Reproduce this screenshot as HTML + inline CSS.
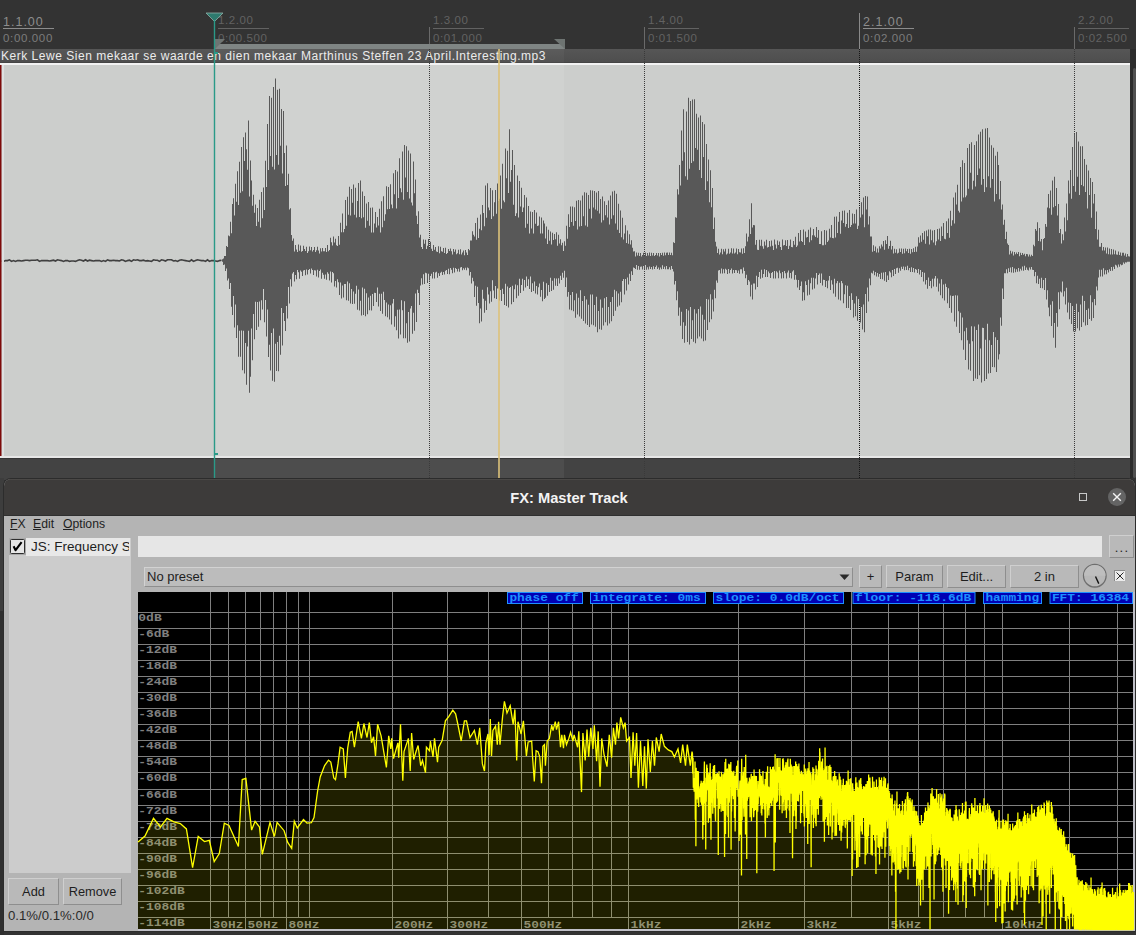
<!DOCTYPE html>
<html><head><meta charset="utf-8">
<style>
*{margin:0;padding:0;box-sizing:border-box}
html,body{width:1136px;height:935px;overflow:hidden;background:#333333;font-family:"Liberation Sans",sans-serif}
.a{position:absolute}
.rl{position:absolute;color:#8c8c8c;font-size:12.5px;line-height:13px;white-space:nowrap;letter-spacing:1px}
.rl.t{font-size:11.5px;color:#7c7c7c;letter-spacing:0.65px}
.rl2{position:absolute;color:#626262;font-size:11.5px;line-height:12px;white-space:nowrap;letter-spacing:0.6px}
.btn{position:absolute;background:#b9b9b9;border:1px solid;border-color:#cfcfcf #8e8e8e #8e8e8e #cfcfcf;color:#1e1e1e;font-size:13px;text-align:center;line-height:21px}
.mono{font-family:"Liberation Mono",monospace;font-weight:bold;letter-spacing:1.2px;text-indent:1px}
</style></head><body>
<!-- ruler -->
<div class="a" style="left:0;top:0;width:1136px;height:49px;background:#333333"></div>
<!-- ruler ticks -->
<div class="a" style="left:429px;top:27px;width:1px;height:22px;background:#6a6a6a"></div>
<div class="a" style="left:644px;top:27px;width:1px;height:22px;background:#6a6a6a"></div>
<div class="a" style="left:859px;top:13px;width:1px;height:36px;background:#8a8a8a"></div>
<div class="a" style="left:1074px;top:27px;width:1px;height:22px;background:#6a6a6a"></div>
<!-- ruler labels -->
<div class="rl" style="left:3px;top:16px">1.1.00</div>
<div class="a" style="left:3px;top:28px;width:51px;height:1px;background:#8c8c8c"></div>
<div class="rl t" style="left:3px;top:32px">0:00.000</div>
<div class="rl2" style="left:218px;top:14px">1.2.00</div>
<div class="a" style="left:218px;top:28px;width:51px;height:1px;background:#626262"></div>
<div class="rl2" style="left:218px;top:32px">0:00.500</div>
<div class="rl2" style="left:433px;top:14px">1.3.00</div>
<div class="a" style="left:433px;top:28px;width:51px;height:1px;background:#626262"></div>
<div class="rl2" style="left:433px;top:32px">0:01.000</div>
<div class="rl2" style="left:648px;top:14px">1.4.00</div>
<div class="a" style="left:648px;top:28px;width:51px;height:1px;background:#626262"></div>
<div class="rl2" style="left:648px;top:32px">0:01.500</div>
<div class="rl" style="left:863px;top:16px">2.1.00</div>
<div class="a" style="left:863px;top:28px;width:51px;height:1px;background:#8c8c8c"></div>
<div class="rl t" style="left:863px;top:32px">0:02.000</div>
<div class="rl2" style="left:1078px;top:14px">2.2.00</div>
<div class="a" style="left:1078px;top:28px;width:51px;height:1px;background:#626262"></div>
<div class="rl2" style="left:1078px;top:32px">0:02.500</div>

<!-- loop bar -->
<div class="a" style="left:214px;top:44px;width:351px;height:5px;background:#7f8584"></div>
<svg class="a" style="left:0;top:0" width="1136" height="60">
<polygon points="215,39 225,39 215,49" fill="#6e7472"/>
<polygon points="554,39 565,39 565,49" fill="#6e7472"/>
<polygon points="206,13 223,13 214.5,21.5" fill="#2e7a6e" stroke="#8fb0a8" stroke-width="0.8"/>
</svg>

<!-- item header -->
<div class="a" style="left:0;top:49px;width:1130px;height:14px;background:linear-gradient(#565656,#4e4e4e);border-bottom:1px solid #454545"></div>
<div class="a" style="left:214px;top:49px;width:350px;height:14px;background:linear-gradient(#5c5c5c,#535353);border-bottom:1px solid #4a4a4a"></div>
<div class="a" style="left:1px;top:49px;font-size:12px;line-height:15px;color:#ececec;white-space:nowrap;letter-spacing:0.52px">Kerk Lewe Sien mekaar se waarde en dien mekaar Marthinus Steffen 23 April.Interesting.mp3</div>
<div class="a" style="left:0;top:63px;width:1130px;height:2px;background:#f2f2f2"></div>
<!-- item body -->
<div class="a" style="left:0;top:65px;width:1130px;height:391px;background:#cccecc"></div>
<div class="a" style="left:214px;top:65px;width:350px;height:391px;background:#d0d2d0"></div>
<div class="a" style="left:0;top:456px;width:1130px;height:2px;background:#e6e6e6"></div>
<!-- band -->
<div class="a" style="left:0;top:458px;width:1130px;height:22px;background:#434343;border-top:1px solid #363636"></div>
<div class="a" style="left:214px;top:459px;width:350px;height:19px;background:#4d4d4d"></div>
<!-- right strip -->
<div class="a" style="left:1130px;top:49px;width:6px;height:429px;background:#2c2c2c"></div>
<div class="a" style="left:1133px;top:68px;width:3px;height:410px;background:#505050;border-radius:2px"></div>

<svg class="a" style="left:0;top:0" width="1136" height="480">
<line x1="429.5" y1="49" x2="429.5" y2="478" stroke="#3a3a3a" stroke-width="1" stroke-dasharray="1,1"/>
<line x1="644.5" y1="49" x2="644.5" y2="478" stroke="#3a3a3a" stroke-width="1" stroke-dasharray="1,1"/>
<line x1="859.5" y1="49" x2="859.5" y2="478" stroke="#151515" stroke-width="1" stroke-dasharray="1,1"/>
<line x1="1074.5" y1="49" x2="1074.5" y2="478" stroke="#3a3a3a" stroke-width="1" stroke-dasharray="1,1"/>
<path d="M222 259.3h1V261.8h-1ZM223 258.5h1V265.1h-1ZM224 255.9h1V264.4h-1ZM225 256.1h1V270.9h-1ZM226 246.1h1V268.6h-1ZM227 247.1h1V280.5h-1ZM228 235.6h1V278.6h-1ZM229 236.3h1V289.1h-1ZM230 221.7h1V282.9h-1ZM231 233.2h1V306.8h-1ZM232 204.1h1V315.0h-1ZM233 198.2h1V295.9h-1ZM234 215.6h1V327.4h-1ZM235 183.7h1V304.4h-1ZM236 201.8h1V338.0h-1ZM237 171.3h1V325.2h-1ZM238 204.9h1V356.7h-1ZM239 161.8h1V330.7h-1ZM240 192.7h1V356.7h-1ZM241 147.1h1V330.5h-1ZM242 191.3h1V370.2h-1ZM243 137.3h1V330.8h-1ZM244 160.9h1V373.6h-1ZM245 132.5h1V343.0h-1ZM246 149.2h1V384.8h-1ZM247 169.7h1V346.5h-1ZM248 120.4h1V330.8h-1ZM249 196.6h1V392.8h-1ZM250 160.6h1V376.8h-1ZM251 180.6h1V328.5h-1ZM252 205.8h1V360.2h-1ZM253 194.7h1V314.0h-1ZM254 212.8h1V339.2h-1ZM255 204.4h1V301.7h-1ZM256 225.9h1V330.1h-1ZM257 208.1h1V301.9h-1ZM258 221.7h1V326.7h-1ZM259 199.8h1V301.5h-1ZM260 227.5h1V320.2h-1ZM261 192.1h1V300.3h-1ZM262 218.2h1V309.5h-1ZM263 187.6h1V289.0h-1ZM264 210.0h1V322.3h-1ZM265 160.7h1V299.9h-1ZM266 187.1h1V336.6h-1ZM267 124.1h1V309.5h-1ZM268 170.0h1V356.9h-1ZM269 96.1h1V344.7h-1ZM270 156.0h1V370.6h-1ZM271 97.8h1V332.9h-1ZM272 166.8h1V380.8h-1ZM273 87.0h1V328.6h-1ZM274 169.5h1V381.8h-1ZM275 78.6h1V343.7h-1ZM276 155.0h1V371.1h-1ZM277 89.8h1V342.0h-1ZM278 164.8h1V371.2h-1ZM279 88.8h1V335.7h-1ZM280 145.8h1V354.7h-1ZM281 109.1h1V308.1h-1ZM282 173.6h1V345.6h-1ZM283 111.1h1V312.9h-1ZM284 153.0h1V321.1h-1ZM285 186.1h1V331.1h-1ZM286 145.6h1V305.9h-1ZM287 184.9h1V318.5h-1ZM288 173.8h1V287.0h-1ZM289 209.6h1V303.5h-1ZM290 208.2h1V279.2h-1ZM291 235.1h1V286.6h-1ZM292 240.8h1V273.5h-1ZM293 238.5h1V271.9h-1ZM294 251.6h1V281.4h-1ZM295 245.1h1V275.0h-1ZM296 249.4h1V279.2h-1ZM297 251.9h1V270.0h-1ZM298 244.6h1V272.3h-1ZM299 250.7h1V278.8h-1ZM300 245.6h1V270.4h-1ZM301 251.7h1V271.7h-1ZM302 251.0h1V275.9h-1ZM303 245.7h1V270.4h-1ZM304 249.1h1V270.0h-1ZM305 250.9h1V275.2h-1ZM306 246.7h1V269.4h-1ZM307 253.1h1V274.6h-1ZM308 251.3h1V269.9h-1ZM309 246.6h1V269.1h-1ZM310 250.2h1V273.4h-1ZM311 247.0h1V268.6h-1ZM312 251.5h1V270.0h-1ZM313 250.1h1V274.9h-1ZM314 247.0h1V270.2h-1ZM315 252.0h1V270.5h-1ZM316 250.3h1V276.4h-1ZM317 246.8h1V269.8h-1ZM318 250.5h1V277.4h-1ZM319 253.6h1V271.1h-1ZM320 248.3h1V269.5h-1ZM321 251.4h1V278.7h-1ZM322 247.9h1V272.8h-1ZM323 251.3h1V274.7h-1ZM324 251.2h1V278.8h-1ZM325 248.0h1V274.5h-1ZM326 251.9h1V279.7h-1ZM327 245.1h1V272.2h-1ZM328 251.2h1V273.7h-1ZM329 250.0h1V280.4h-1ZM330 237.8h1V271.4h-1ZM331 242.2h1V282.6h-1ZM332 245.6h1V271.9h-1ZM333 236.5h1V273.3h-1ZM334 242.4h1V286.6h-1ZM335 238.7h1V281.1h-1ZM336 245.2h1V287.6h-1ZM337 246.0h1V279.3h-1ZM338 236.0h1V282.2h-1ZM339 244.7h1V295.0h-1ZM340 222.8h1V282.6h-1ZM341 232.2h1V298.6h-1ZM342 213.5h1V285.4h-1ZM343 232.3h1V297.6h-1ZM344 229.1h1V283.9h-1ZM345 199.9h1V284.0h-1ZM346 225.8h1V300.3h-1ZM347 196.8h1V281.5h-1ZM348 214.8h1V300.8h-1ZM349 186.8h1V283.3h-1ZM350 215.6h1V303.4h-1ZM351 189.1h1V288.9h-1ZM352 202.8h1V303.9h-1ZM353 184.5h1V291.4h-1ZM354 214.8h1V303.7h-1ZM355 187.8h1V293.8h-1ZM356 217.6h1V285.7h-1ZM357 201.1h1V309.7h-1ZM358 183.1h1V289.6h-1ZM359 217.0h1V310.5h-1ZM360 180.6h1V300.7h-1ZM361 218.3h1V315.5h-1ZM362 191.4h1V287.6h-1ZM363 217.2h1V314.9h-1ZM364 196.0h1V288.7h-1ZM365 227.7h1V316.2h-1ZM366 203.5h1V293.2h-1ZM367 220.8h1V314.3h-1ZM368 201.9h1V297.6h-1ZM369 225.7h1V310.3h-1ZM370 207.7h1V295.8h-1ZM371 232.6h1V310.4h-1ZM372 207.5h1V293.9h-1ZM373 232.6h1V305.9h-1ZM374 223.6h1V292.8h-1ZM375 211.9h1V292.9h-1ZM376 227.5h1V301.9h-1ZM377 216.9h1V287.5h-1ZM378 225.6h1V306.5h-1ZM379 208.8h1V293.7h-1ZM380 232.5h1V311.0h-1ZM381 201.3h1V293.7h-1ZM382 227.2h1V313.8h-1ZM383 196.3h1V291.7h-1ZM384 220.8h1V300.0h-1ZM385 214.2h1V316.3h-1ZM386 186.2h1V302.6h-1ZM387 209.3h1V317.2h-1ZM388 187.1h1V304.4h-1ZM389 209.1h1V319.6h-1ZM390 184.3h1V305.2h-1ZM391 204.5h1V324.5h-1ZM392 208.2h1V303.4h-1ZM393 173.2h1V299.1h-1ZM394 194.3h1V326.7h-1ZM395 170.0h1V316.2h-1ZM396 208.4h1V330.3h-1ZM397 171.6h1V309.7h-1ZM398 197.9h1V338.4h-1ZM399 158.2h1V309.5h-1ZM400 188.2h1V334.4h-1ZM401 192.3h1V300.2h-1ZM402 151.5h1V310.2h-1ZM403 199.8h1V338.3h-1ZM404 145.1h1V301.2h-1ZM405 177.4h1V338.2h-1ZM406 146.2h1V323.3h-1ZM407 192.1h1V342.7h-1ZM408 150.6h1V311.9h-1ZM409 198.4h1V341.4h-1ZM410 153.4h1V308.5h-1ZM411 202.4h1V305.9h-1ZM412 205.6h1V333.7h-1ZM413 161.4h1V312.7h-1ZM414 193.3h1V330.8h-1ZM415 179.5h1V293.6h-1ZM416 215.7h1V321.9h-1ZM417 224.0h1V289.8h-1ZM418 211.3h1V293.0h-1ZM419 237.5h1V305.0h-1ZM420 234.8h1V285.5h-1ZM421 247.0h1V278.3h-1ZM422 249.1h1V284.5h-1ZM423 239.6h1V274.3h-1ZM424 243.8h1V283.9h-1ZM425 239.8h1V272.7h-1ZM426 248.9h1V273.3h-1ZM427 245.8h1V283.1h-1ZM428 239.1h1V273.7h-1ZM429 248.0h1V280.6h-1ZM430 241.8h1V276.0h-1ZM431 248.8h1V273.7h-1ZM432 250.9h1V278.6h-1ZM433 245.1h1V271.9h-1ZM434 249.7h1V278.5h-1ZM435 247.1h1V272.6h-1ZM436 251.5h1V271.8h-1ZM437 251.9h1V277.8h-1ZM438 246.3h1V273.2h-1ZM439 253.2h1V275.9h-1ZM440 246.8h1V272.7h-1ZM441 251.3h1V271.7h-1ZM442 251.8h1V275.0h-1ZM443 247.9h1V272.0h-1ZM444 252.9h1V274.6h-1ZM445 247.7h1V270.7h-1ZM446 253.9h1V269.9h-1ZM447 252.9h1V274.1h-1ZM448 249.0h1V268.7h-1ZM449 251.1h1V274.2h-1ZM450 248.6h1V268.1h-1ZM451 251.3h1V269.7h-1ZM452 254.5h1V273.2h-1ZM453 249.1h1V267.8h-1ZM454 251.7h1V272.4h-1ZM455 249.4h1V268.0h-1ZM456 254.2h1V269.1h-1ZM457 253.3h1V271.6h-1ZM458 249.8h1V268.8h-1ZM459 254.3h1V271.8h-1ZM460 249.3h1V267.5h-1ZM461 254.5h1V267.1h-1ZM462 252.4h1V270.3h-1ZM463 250.5h1V268.3h-1ZM464 255.2h1V269.8h-1ZM465 250.0h1V267.7h-1ZM466 252.6h1V270.2h-1ZM467 255.0h1V267.5h-1ZM468 249.1h1V268.2h-1ZM469 250.3h1V275.6h-1ZM470 240.6h1V272.1h-1ZM471 240.5h1V283.6h-1ZM472 231.3h1V277.8h-1ZM473 234.8h1V281.2h-1ZM474 236.4h1V297.1h-1ZM475 222.9h1V285.8h-1ZM476 239.7h1V305.8h-1ZM477 217.7h1V286.8h-1ZM478 238.0h1V303.1h-1ZM479 228.7h1V323.3h-1ZM480 214.5h1V308.5h-1ZM481 230.2h1V321.6h-1ZM482 205.0h1V289.8h-1ZM483 213.1h1V298.8h-1ZM484 226.3h1V312.7h-1ZM485 185.5h1V300.8h-1ZM486 217.8h1V310.0h-1ZM487 183.2h1V287.3h-1ZM488 207.6h1V294.6h-1ZM489 210.3h1V303.6h-1ZM490 187.9h1V291.2h-1ZM491 218.9h1V301.7h-1ZM492 190.3h1V280.2h-1ZM493 216.2h1V290.6h-1ZM494 202.3h1V298.2h-1ZM495 190.0h1V285.9h-1ZM496 213.7h1V298.9h-1ZM497 183.4h1V288.5h-1ZM498 201.0h1V288.6h-1ZM499 198.7h1V300.4h-1ZM500 175.6h1V290.1h-1ZM501 208.8h1V301.0h-1ZM502 163.7h1V288.8h-1ZM503 200.4h1V294.1h-1ZM504 202.3h1V304.9h-1ZM505 148.4h1V283.8h-1ZM506 178.3h1V305.9h-1ZM507 150.7h1V286.6h-1ZM508 192.9h1V307.4h-1ZM509 129.3h1V288.1h-1ZM510 181.8h1V286.9h-1ZM511 170.1h1V304.2h-1ZM512 149.9h1V285.7h-1ZM513 204.8h1V301.9h-1ZM514 165.1h1V289.2h-1ZM515 216.1h1V284.5h-1ZM516 213.2h1V298.3h-1ZM517 175.4h1V285.2h-1ZM518 217.4h1V295.8h-1ZM519 180.9h1V278.8h-1ZM520 206.6h1V293.1h-1ZM521 187.7h1V285.0h-1ZM522 212.1h1V278.8h-1ZM523 207.4h1V290.7h-1ZM524 195.0h1V280.0h-1ZM525 227.7h1V287.5h-1ZM526 197.4h1V276.4h-1ZM527 223.7h1V285.9h-1ZM528 206.0h1V279.3h-1ZM529 233.5h1V289.1h-1ZM530 211.6h1V276.5h-1ZM531 228.6h1V291.9h-1ZM532 212.1h1V283.2h-1ZM533 233.4h1V290.9h-1ZM534 210.1h1V281.5h-1ZM535 223.8h1V293.6h-1ZM536 212.5h1V286.0h-1ZM537 226.1h1V294.6h-1ZM538 225.5h1V287.3h-1ZM539 216.5h1V283.5h-1ZM540 233.6h1V296.8h-1ZM541 217.5h1V290.1h-1ZM542 233.6h1V301.3h-1ZM543 220.5h1V281.7h-1ZM544 223.5h1V299.1h-1ZM545 238.5h1V297.8h-1ZM546 226.5h1V283.3h-1ZM547 243.9h1V295.8h-1ZM548 229.8h1V285.0h-1ZM549 240.7h1V292.1h-1ZM550 231.5h1V277.7h-1ZM551 244.6h1V290.9h-1ZM552 232.8h1V280.8h-1ZM553 240.1h1V289.8h-1ZM554 234.0h1V278.3h-1ZM555 239.2h1V285.8h-1ZM556 232.3h1V278.6h-1ZM557 245.8h1V286.0h-1ZM558 234.7h1V278.3h-1ZM559 243.6h1V283.6h-1ZM560 239.3h1V275.7h-1ZM561 245.2h1V279.9h-1ZM562 242.7h1V272.8h-1ZM563 250.9h1V277.8h-1ZM564 241.2h1V270.8h-1ZM565 245.8h1V287.1h-1ZM566 225.7h1V277.6h-1ZM567 238.8h1V296.8h-1ZM568 214.2h1V292.0h-1ZM569 226.9h1V309.5h-1ZM570 206.5h1V294.9h-1ZM571 222.0h1V310.2h-1ZM572 206.4h1V292.1h-1ZM573 225.7h1V311.3h-1ZM574 207.2h1V300.2h-1ZM575 221.0h1V317.8h-1ZM576 200.8h1V293.4h-1ZM577 229.6h1V314.4h-1ZM578 199.9h1V297.7h-1ZM579 226.5h1V316.5h-1ZM580 200.4h1V290.3h-1ZM581 226.1h1V318.8h-1ZM582 195.6h1V301.0h-1ZM583 216.2h1V321.0h-1ZM584 192.3h1V295.9h-1ZM585 225.5h1V323.4h-1ZM586 192.7h1V299.5h-1ZM587 226.7h1V324.9h-1ZM588 195.1h1V304.7h-1ZM589 208.8h1V326.9h-1ZM590 190.2h1V294.5h-1ZM591 218.4h1V324.6h-1ZM592 190.4h1V294.6h-1ZM593 207.5h1V325.2h-1ZM594 191.0h1V304.9h-1ZM595 209.5h1V326.7h-1ZM596 192.6h1V296.7h-1ZM597 210.7h1V332.3h-1ZM598 191.1h1V310.9h-1ZM599 213.4h1V329.2h-1ZM600 199.0h1V299.6h-1ZM601 222.5h1V329.7h-1ZM602 196.4h1V307.7h-1ZM603 220.3h1V325.6h-1ZM604 201.2h1V298.2h-1ZM605 215.2h1V322.3h-1ZM606 205.0h1V297.1h-1ZM607 217.4h1V325.6h-1ZM608 200.5h1V306.9h-1ZM609 224.6h1V323.5h-1ZM610 195.4h1V301.9h-1ZM611 218.8h1V321.3h-1ZM612 191.6h1V296.9h-1ZM613 215.3h1V316.1h-1ZM614 190.8h1V289.8h-1ZM615 223.5h1V310.8h-1ZM616 193.8h1V291.3h-1ZM617 229.7h1V306.8h-1ZM618 203.7h1V293.4h-1ZM619 233.1h1V305.4h-1ZM620 210.6h1V291.8h-1ZM621 237.2h1V302.2h-1ZM622 217.8h1V280.9h-1ZM623 239.6h1V279.0h-1ZM624 233.4h1V294.6h-1ZM625 225.3h1V279.0h-1ZM626 243.0h1V290.6h-1ZM627 230.4h1V277.4h-1ZM628 243.8h1V284.4h-1ZM629 234.2h1V273.7h-1ZM630 244.4h1V281.0h-1ZM631 240.2h1V271.3h-1ZM632 247.8h1V275.1h-1ZM633 251.5h1V267.6h-1ZM634 251.3h1V268.0h-1ZM635 256.6h1V269.1h-1ZM636 252.4h1V265.0h-1ZM637 255.5h1V269.7h-1ZM638 252.8h1V265.9h-1ZM639 256.0h1V269.8h-1ZM640 253.1h1V266.8h-1ZM641 256.4h1V266.6h-1ZM642 254.9h1V269.6h-1ZM643 252.7h1V265.9h-1ZM644 255.7h1V269.8h-1ZM645 252.5h1V265.1h-1ZM646 256.0h1V269.8h-1ZM647 252.9h1V267.2h-1ZM648 255.6h1V269.4h-1ZM649 252.6h1V266.6h-1ZM650 255.9h1V269.0h-1ZM651 252.7h1V266.9h-1ZM652 255.6h1V269.6h-1ZM653 253.1h1V266.2h-1ZM654 256.1h1V269.1h-1ZM655 255.1h1V267.1h-1ZM656 253.1h1V265.6h-1ZM657 255.5h1V269.0h-1ZM658 253.1h1V267.5h-1ZM659 256.4h1V269.8h-1ZM660 252.9h1V267.5h-1ZM661 255.0h1V269.3h-1ZM662 252.7h1V265.3h-1ZM663 255.8h1V268.9h-1ZM664 252.6h1V266.7h-1ZM665 255.2h1V269.3h-1ZM666 252.7h1V266.0h-1ZM667 252.5h1V269.3h-1ZM668 255.0h1V269.3h-1ZM669 252.6h1V267.2h-1ZM670 255.1h1V269.7h-1ZM671 252.7h1V266.1h-1ZM672 255.2h1V269.0h-1ZM673 242.2h1V271.6h-1ZM674 243.0h1V284.5h-1ZM675 217.2h1V280.9h-1ZM676 217.8h1V300.3h-1ZM677 189.2h1V291.3h-1ZM678 194.4h1V315.8h-1ZM679 164.9h1V307.5h-1ZM680 185.5h1V325.7h-1ZM681 130.4h1V311.7h-1ZM682 160.8h1V339.0h-1ZM683 109.2h1V322.3h-1ZM684 152.3h1V342.7h-1ZM685 176.2h1V325.8h-1ZM686 111.6h1V308.9h-1ZM687 179.7h1V342.1h-1ZM688 97.7h1V310.4h-1ZM689 168.8h1V344.5h-1ZM690 100.9h1V306.9h-1ZM691 162.9h1V339.1h-1ZM692 99.5h1V320.2h-1ZM693 161.3h1V341.7h-1ZM694 99.3h1V309.3h-1ZM695 148.1h1V343.3h-1ZM696 113.7h1V313.4h-1ZM697 149.7h1V338.6h-1ZM698 117.6h1V309.1h-1ZM699 169.9h1V336.6h-1ZM700 115.4h1V306.6h-1ZM701 178.0h1V338.6h-1ZM702 121.9h1V314.7h-1ZM703 157.1h1V341.2h-1ZM704 124.3h1V319.7h-1ZM705 190.0h1V340.4h-1ZM706 144.1h1V298.9h-1ZM707 181.3h1V330.0h-1ZM708 159.5h1V299.5h-1ZM709 202.2h1V322.3h-1ZM710 170.3h1V294.2h-1ZM711 207.2h1V319.3h-1ZM712 188.0h1V299.6h-1ZM713 229.1h1V311.4h-1ZM714 217.4h1V289.7h-1ZM715 241.7h1V298.2h-1ZM716 246.5h1V280.5h-1ZM717 252.9h1V282.7h-1ZM718 248.7h1V270.6h-1ZM719 254.5h1V270.1h-1ZM720 252.6h1V273.6h-1ZM721 248.8h1V268.6h-1ZM722 254.2h1V273.6h-1ZM723 249.3h1V269.3h-1ZM724 251.4h1V273.2h-1ZM725 248.7h1V268.8h-1ZM726 254.4h1V269.7h-1ZM727 253.4h1V273.9h-1ZM728 248.7h1V269.0h-1ZM729 253.8h1V273.3h-1ZM730 252.6h1V270.1h-1ZM731 248.2h1V268.5h-1ZM732 253.6h1V273.4h-1ZM733 248.5h1V270.0h-1ZM734 253.4h1V273.1h-1ZM735 252.4h1V269.9h-1ZM736 248.4h1V270.3h-1ZM737 254.3h1V273.1h-1ZM738 249.1h1V270.4h-1ZM739 252.3h1V273.8h-1ZM740 252.4h1V269.3h-1ZM741 248.4h1V269.2h-1ZM742 253.8h1V273.6h-1ZM743 248.3h1V267.4h-1ZM744 252.9h1V271.1h-1ZM745 246.3h1V278.2h-1ZM746 233.5h1V274.7h-1ZM747 241.6h1V285.0h-1ZM748 236.8h1V279.9h-1ZM749 219.3h1V281.5h-1ZM750 234.0h1V296.5h-1ZM751 203.2h1V284.7h-1ZM752 227.5h1V299.5h-1ZM753 225.0h1V283.6h-1ZM754 225.3h1V283.6h-1ZM755 244.8h1V289.6h-1ZM756 239.9h1V275.8h-1ZM757 249.7h1V287.1h-1ZM758 250.1h1V276.9h-1ZM759 239.8h1V271.9h-1ZM760 245.8h1V278.7h-1ZM761 239.8h1V269.7h-1ZM762 246.2h1V277.7h-1ZM763 248.8h1V274.0h-1ZM764 241.4h1V269.3h-1ZM765 245.6h1V276.9h-1ZM766 239.8h1V270.1h-1ZM767 247.5h1V276.9h-1ZM768 246.9h1V271.4h-1ZM769 241.1h1V273.2h-1ZM770 246.5h1V278.0h-1ZM771 240.6h1V273.1h-1ZM772 245.7h1V272.0h-1ZM773 249.9h1V278.6h-1ZM774 239.6h1V270.9h-1ZM775 244.6h1V278.4h-1ZM776 248.5h1V271.3h-1ZM777 240.6h1V272.6h-1ZM778 245.1h1V278.3h-1ZM779 241.4h1V270.5h-1ZM780 246.9h1V273.2h-1ZM781 250.0h1V278.4h-1ZM782 239.5h1V272.1h-1ZM783 245.4h1V278.3h-1ZM784 245.0h1V270.9h-1ZM785 240.2h1V273.2h-1ZM786 245.9h1V278.6h-1ZM787 240.1h1V272.6h-1ZM788 249.1h1V270.5h-1ZM789 245.7h1V277.7h-1ZM790 239.6h1V273.0h-1ZM791 246.9h1V278.5h-1ZM792 247.3h1V271.6h-1ZM793 241.0h1V270.2h-1ZM794 244.8h1V279.8h-1ZM795 236.7h1V274.9h-1ZM796 247.0h1V279.7h-1ZM797 245.5h1V287.5h-1ZM798 233.0h1V280.1h-1ZM799 241.6h1V290.1h-1ZM800 229.9h1V285.9h-1ZM801 240.9h1V281.5h-1ZM802 241.9h1V300.8h-1ZM803 229.6h1V292.3h-1ZM804 244.9h1V300.3h-1ZM805 231.6h1V281.2h-1ZM806 237.4h1V284.9h-1ZM807 236.9h1V295.6h-1ZM808 229.8h1V279.7h-1ZM809 242.3h1V294.8h-1ZM810 227.4h1V283.3h-1ZM811 240.3h1V277.8h-1ZM812 235.2h1V289.4h-1ZM813 229.1h1V277.8h-1ZM814 235.6h1V288.5h-1ZM815 237.0h1V278.6h-1ZM816 226.9h1V273.1h-1ZM817 237.7h1V284.4h-1ZM818 230.0h1V274.9h-1ZM819 243.9h1V273.6h-1ZM820 243.9h1V283.1h-1ZM821 231.2h1V273.4h-1ZM822 245.2h1V285.4h-1ZM823 245.2h1V279.8h-1ZM824 229.9h1V280.0h-1ZM825 244.7h1V287.0h-1ZM826 230.6h1V281.0h-1ZM827 241.9h1V288.3h-1ZM828 240.5h1V280.4h-1ZM829 228.7h1V276.1h-1ZM830 237.5h1V289.9h-1ZM831 225.0h1V280.2h-1ZM832 238.1h1V284.6h-1ZM833 238.3h1V293.5h-1ZM834 216.8h1V278.8h-1ZM835 237.6h1V296.7h-1ZM836 216.5h1V283.3h-1ZM837 233.1h1V281.0h-1ZM838 221.8h1V299.6h-1ZM839 211.9h1V282.8h-1ZM840 233.8h1V300.5h-1ZM841 220.6h1V281.1h-1ZM842 210.7h1V283.2h-1ZM843 222.9h1V303.3h-1ZM844 210.4h1V294.2h-1ZM845 226.8h1V285.2h-1ZM846 224.0h1V307.9h-1ZM847 212.8h1V285.8h-1ZM848 228.1h1V308.0h-1ZM849 210.0h1V295.9h-1ZM850 227.0h1V310.0h-1ZM851 225.0h1V293.2h-1ZM852 213.4h1V300.1h-1ZM853 223.6h1V317.6h-1ZM854 213.9h1V303.5h-1ZM855 223.4h1V316.3h-1ZM856 209.4h1V296.3h-1ZM857 229.1h1V320.8h-1ZM858 225.7h1V299.1h-1ZM859 207.7h1V304.7h-1ZM860 217.5h1V322.6h-1ZM861 202.2h1V307.1h-1ZM862 214.4h1V329.6h-1ZM863 197.4h1V304.6h-1ZM864 227.2h1V332.3h-1ZM865 196.0h1V294.1h-1ZM866 209.6h1V312.9h-1ZM867 196.4h1V287.5h-1ZM868 224.6h1V301.5h-1ZM869 216.2h1V278.4h-1ZM870 236.6h1V285.2h-1ZM871 236.5h1V272.7h-1ZM872 251.8h1V273.4h-1ZM873 245.2h1V270.8h-1ZM874 250.9h1V275.2h-1ZM875 246.6h1V272.0h-1ZM876 252.6h1V276.6h-1ZM877 248.6h1V273.0h-1ZM878 252.5h1V276.7h-1ZM879 246.2h1V274.1h-1ZM880 248.6h1V279.1h-1ZM881 244.6h1V272.7h-1ZM882 246.6h1V279.2h-1ZM883 241.1h1V272.6h-1ZM884 249.8h1V280.8h-1ZM885 240.2h1V272.0h-1ZM886 244.0h1V282.1h-1ZM887 235.9h1V275.6h-1ZM888 248.7h1V279.9h-1ZM889 246.0h1V271.3h-1ZM890 240.8h1V272.6h-1ZM891 249.5h1V277.3h-1ZM892 246.1h1V270.1h-1ZM893 253.6h1V276.1h-1ZM894 248.7h1V269.1h-1ZM895 252.7h1V273.9h-1ZM896 249.2h1V268.3h-1ZM897 253.5h1V267.7h-1ZM898 252.7h1V272.7h-1ZM899 248.6h1V268.2h-1ZM900 252.1h1V270.8h-1ZM901 248.5h1V266.7h-1ZM902 253.7h1V269.1h-1ZM903 248.8h1V266.6h-1ZM904 253.3h1V270.2h-1ZM905 248.6h1V266.7h-1ZM906 251.2h1V270.1h-1ZM907 249.1h1V265.8h-1ZM908 253.0h1V270.3h-1ZM909 248.8h1V268.1h-1ZM910 253.7h1V271.9h-1ZM911 249.1h1V267.2h-1ZM912 252.2h1V271.9h-1ZM913 248.3h1V268.0h-1ZM914 252.0h1V272.6h-1ZM915 246.8h1V269.0h-1ZM916 251.7h1V269.8h-1ZM917 246.6h1V273.1h-1ZM918 237.3h1V269.0h-1ZM919 242.7h1V274.5h-1ZM920 235.4h1V270.1h-1ZM921 241.7h1V277.0h-1ZM922 232.9h1V272.0h-1ZM923 239.7h1V281.6h-1ZM924 231.3h1V272.8h-1ZM925 243.8h1V284.5h-1ZM926 230.5h1V280.1h-1ZM927 236.3h1V288.7h-1ZM928 229.5h1V277.6h-1ZM929 244.4h1V286.0h-1ZM930 229.4h1V281.0h-1ZM931 240.3h1V288.3h-1ZM932 230.4h1V278.8h-1ZM933 242.5h1V286.6h-1ZM934 229.9h1V278.4h-1ZM935 245.2h1V276.0h-1ZM936 241.2h1V286.7h-1ZM937 229.1h1V278.4h-1ZM938 239.4h1V291.6h-1ZM939 228.5h1V283.6h-1ZM940 240.9h1V295.2h-1ZM941 226.6h1V279.2h-1ZM942 236.0h1V298.2h-1ZM943 223.1h1V284.4h-1ZM944 238.8h1V300.4h-1ZM945 239.3h1V283.8h-1ZM946 221.3h1V286.9h-1ZM947 233.1h1V303.3h-1ZM948 218.4h1V288.3h-1ZM949 237.7h1V308.0h-1ZM950 210.8h1V295.6h-1ZM951 225.7h1V312.8h-1ZM952 220.3h1V295.9h-1ZM953 197.5h1V295.7h-1ZM954 223.6h1V321.6h-1ZM955 192.4h1V295.2h-1ZM956 204.4h1V326.8h-1ZM957 184.8h1V295.5h-1ZM958 210.8h1V311.3h-1ZM959 212.6h1V333.0h-1ZM960 167.0h1V312.7h-1ZM961 201.5h1V340.3h-1ZM962 160.2h1V317.4h-1ZM963 197.6h1V349.8h-1ZM964 163.1h1V331.3h-1ZM965 197.2h1V360.1h-1ZM966 195.6h1V327.7h-1ZM967 148.0h1V340.3h-1ZM968 188.8h1V369.4h-1ZM969 143.9h1V343.7h-1ZM970 172.8h1V370.8h-1ZM971 142.3h1V326.2h-1ZM972 189.4h1V341.2h-1ZM973 180.7h1V381.0h-1ZM974 145.0h1V326.5h-1ZM975 186.5h1V378.4h-1ZM976 141.2h1V330.0h-1ZM977 175.0h1V378.9h-1ZM978 134.5h1V324.6h-1ZM979 168.4h1V375.3h-1ZM980 131.8h1V348.4h-1ZM981 184.8h1V382.4h-1ZM982 129.2h1V327.7h-1ZM983 178.9h1V328.1h-1ZM984 191.9h1V381.0h-1ZM985 128.6h1V339.7h-1ZM986 187.3h1V378.9h-1ZM987 128.1h1V323.7h-1ZM988 176.2h1V373.6h-1ZM989 137.4h1V340.3h-1ZM990 187.7h1V372.9h-1ZM991 145.2h1V344.9h-1ZM992 179.0h1V367.1h-1ZM993 147.8h1V332.1h-1ZM994 201.6h1V367.3h-1ZM995 155.7h1V337.3h-1ZM996 194.1h1V372.1h-1ZM997 151.8h1V339.9h-1ZM998 165.0h1V359.4h-1ZM999 199.2h1V354.2h-1ZM1000 181.1h1V317.6h-1ZM1001 209.5h1V325.8h-1ZM1002 204.4h1V288.6h-1ZM1003 224.8h1V298.9h-1ZM1004 219.7h1V273.2h-1ZM1005 239.0h1V273.2h-1ZM1006 231.7h1V269.3h-1ZM1007 243.6h1V273.2h-1ZM1008 245.1h1V268.3h-1ZM1009 254.6h1V272.1h-1ZM1010 250.7h1V267.6h-1ZM1011 253.5h1V272.6h-1ZM1012 251.6h1V266.9h-1ZM1013 255.4h1V272.7h-1ZM1014 252.1h1V268.6h-1ZM1015 254.3h1V272.3h-1ZM1016 252.4h1V269.2h-1ZM1017 254.1h1V271.8h-1ZM1018 252.1h1V268.0h-1ZM1019 256.3h1V271.5h-1ZM1020 252.7h1V268.7h-1ZM1021 255.0h1V270.4h-1ZM1022 252.9h1V266.5h-1ZM1023 254.8h1V270.8h-1ZM1024 253.7h1V265.8h-1ZM1025 256.2h1V270.1h-1ZM1026 254.1h1V267.4h-1ZM1027 254.2h1V269.8h-1ZM1028 256.5h1V270.4h-1ZM1029 254.5h1V267.6h-1ZM1030 256.5h1V269.5h-1ZM1031 254.7h1V267.0h-1ZM1032 256.0h1V269.8h-1ZM1033 244.7h1V269.9h-1ZM1034 246.2h1V276.3h-1ZM1035 229.0h1V271.9h-1ZM1036 230.8h1V283.2h-1ZM1037 222.2h1V275.8h-1ZM1038 241.1h1V283.9h-1ZM1039 228.0h1V278.8h-1ZM1040 241.5h1V288.0h-1ZM1041 239.0h1V277.8h-1ZM1042 250.2h1V288.2h-1ZM1043 239.0h1V280.1h-1ZM1044 238.0h1V290.1h-1ZM1045 223.9h1V278.1h-1ZM1046 226.8h1V299.6h-1ZM1047 207.6h1V290.3h-1ZM1048 194.0h1V307.4h-1ZM1049 208.3h1V316.2h-1ZM1050 190.6h1V304.8h-1ZM1051 214.7h1V326.1h-1ZM1052 180.5h1V301.2h-1ZM1053 207.3h1V337.8h-1ZM1054 176.7h1V323.0h-1ZM1055 205.9h1V347.7h-1ZM1056 188.1h1V313.0h-1ZM1057 215.6h1V326.8h-1ZM1058 204.0h1V292.3h-1ZM1059 232.9h1V309.3h-1ZM1060 229.0h1V291.4h-1ZM1061 243.5h1V292.4h-1ZM1062 234.3h1V281.6h-1ZM1063 240.2h1V296.5h-1ZM1064 217.6h1V291.3h-1ZM1065 231.4h1V304.5h-1ZM1066 203.6h1V287.7h-1ZM1067 220.2h1V312.5h-1ZM1068 180.5h1V302.4h-1ZM1069 193.5h1V319.3h-1ZM1070 170.0h1V302.9h-1ZM1071 198.7h1V324.1h-1ZM1072 147.0h1V305.9h-1ZM1073 186.0h1V331.6h-1ZM1074 133.8h1V309.8h-1ZM1075 191.7h1V331.5h-1ZM1076 132.0h1V303.8h-1ZM1077 176.7h1V328.2h-1ZM1078 141.4h1V312.1h-1ZM1079 194.9h1V330.4h-1ZM1080 146.3h1V304.4h-1ZM1081 185.1h1V326.9h-1ZM1082 146.3h1V295.8h-1ZM1083 186.3h1V322.2h-1ZM1084 158.9h1V301.0h-1ZM1085 191.9h1V325.5h-1ZM1086 164.8h1V310.1h-1ZM1087 208.6h1V325.0h-1ZM1088 170.5h1V308.6h-1ZM1089 194.9h1V319.0h-1ZM1090 178.0h1V295.2h-1ZM1091 217.7h1V320.8h-1ZM1092 182.1h1V302.3h-1ZM1093 203.4h1V317.9h-1ZM1094 194.0h1V299.0h-1ZM1095 228.9h1V305.2h-1ZM1096 211.4h1V286.4h-1ZM1097 239.6h1V290.4h-1ZM1098 229.7h1V277.5h-1ZM1099 246.8h1V269.7h-1ZM1100 246.7h1V276.4h-1ZM1101 243.0h1V269.8h-1ZM1102 250.5h1V276.6h-1ZM1103 246.9h1V268.2h-1ZM1104 250.5h1V274.4h-1ZM1105 247.5h1V270.2h-1ZM1106 253.4h1V274.3h-1ZM1107 247.6h1V269.9h-1ZM1108 254.2h1V272.4h-1ZM1109 248.5h1V269.2h-1ZM1110 254.5h1V271.1h-1ZM1111 248.9h1V267.0h-1ZM1112 254.4h1V270.7h-1ZM1113 249.4h1V266.8h-1ZM1114 254.3h1V268.9h-1ZM1115 250.4h1V264.7h-1ZM1116 254.6h1V265.4h-1ZM1117 254.7h1V267.4h-1ZM1118 251.4h1V264.4h-1ZM1119 254.9h1V266.7h-1ZM1120 252.4h1V264.2h-1ZM1121 255.8h1V265.2h-1ZM1122 252.7h1V264.7h-1ZM1123 252.7h1V262.4h-1ZM1124 255.4h1V263.7h-1ZM1125 253.6h1V262.2h-1ZM1126 256.7h1V262.5h-1ZM1127 254.1h1V261.7h-1ZM1128 256.3h1V261.7h-1ZM1129 256.6h1V261.7h-1Z" fill="#585858"/>
<path d="M1.5 261.0 L3.5 261.4 L5.5 260.6 L7.5 260.6 L9.5 259.8 L11.5 261.4 L13.5 260.6 L15.5 261.4 L17.5 260.6 L19.5 260.6 L21.5 261.0 L23.5 260.6 L25.5 260.2 L27.5 260.2 L29.5 260.6 L31.5 260.2 L33.5 260.2 L35.5 260.2 L37.5 259.8 L39.5 261.4 L41.5 260.6 L43.5 260.6 L45.5 260.6 L47.5 260.6 L49.5 261.0 L51.5 260.6 L53.5 260.2 L55.5 261.0 L57.5 259.8 L59.5 260.2 L61.5 260.6 L63.5 261.4 L65.5 260.6 L67.5 260.6 L69.5 261.4 L71.5 261.0 L73.5 261.0 L75.5 261.4 L77.5 260.6 L79.5 259.8 L81.5 260.2 L83.5 261.0 L85.5 259.8 L87.5 261.0 L89.5 260.2 L91.5 260.6 L93.5 261.0 L95.5 260.6 L97.5 260.6 L99.5 260.6 L101.5 261.4 L103.5 260.6 L105.5 261.4 L107.5 259.8 L109.5 260.6 L111.5 260.6 L113.5 260.2 L115.5 260.6 L117.5 260.6 L119.5 261.0 L121.5 259.8 L123.5 260.2 L125.5 261.4 L127.5 260.6 L129.5 260.2 L131.5 261.4 L133.5 259.8 L135.5 260.2 L137.5 259.8 L139.5 260.6 L141.5 260.6 L143.5 260.2 L145.5 261.0 L147.5 260.6 L149.5 261.0 L151.5 261.4 L153.5 259.8 L155.5 260.2 L157.5 260.2 L159.5 261.4 L161.5 259.8 L163.5 260.2 L165.5 261.0 L167.5 259.8 L169.5 259.8 L171.5 259.8 L173.5 261.0 L175.5 260.6 L177.5 261.4 L179.5 260.2 L181.5 259.8 L183.5 260.2 L185.5 260.6 L187.5 261.0 L189.5 261.4 L191.5 259.8 L193.5 261.4 L195.5 260.6 L197.5 259.8 L199.5 260.2 L201.5 260.6 L203.5 260.6 L205.5 261.4 L207.5 259.8 L209.5 261.4 L211.5 260.6 L213.5 260.6 L215.5 261.0 L217.5 261.4 L219.5 260.6 L221.5 260.2" fill="none" stroke="#404040" stroke-width="1.6"/>
<rect x="1.5" y="65" width="2.5" height="391" fill="#dde1e1"/>
<rect x="0" y="65" width="1.5" height="391" fill="#7c0a0a"/>
<line x1="499" y1="49" x2="499" y2="478" stroke="#dcc27a" stroke-width="1.6"/>
<line x1="214.5" y1="20" x2="214.5" y2="478" stroke="#2a9a88" stroke-width="1.4"/>
<rect x="214" y="453" width="4" height="2" fill="#2a9a88"/>
<rect x="214" y="52" width="4" height="2" fill="#2a9a88"/>
</svg>

<!-- FX window -->
<div class="a" style="left:0;top:478px;width:4px;height:133px;background:#3d3d3d"></div>
<div class="a" style="left:0;top:611px;width:4px;height:324px;background:#2f2f2f"></div>
<div class="a" style="left:3px;top:478px;width:1133px;height:454px;background:#2c2c2c;border-radius:8px 8px 0 0"></div>
<div class="a" style="left:4px;top:479px;width:1131px;height:452px;background:#b4b4b4;border-radius:7px 7px 0 0;overflow:hidden">
  <div class="a" style="left:0;top:0;width:1131px;height:37px;background:#3d3b3a;border-top:1px solid #4a4846;border-bottom:1px solid #2f2f2f"></div>
</div>
<div class="a" style="left:0;top:490px;width:1136px;text-align:center;color:#f4f4f4;font-weight:bold;font-size:14.7px;line-height:16px;padding-left:2px">FX: Master Track</div>
<div class="a" style="left:1079px;top:493px;width:8px;height:8px;border:1px solid #c8c8c8"></div>
<div class="a" style="left:1108px;top:488px;width:18px;height:18px;border-radius:50%;background:#646464"></div>
<svg class="a" style="left:1108px;top:488px" width="18" height="18"><path d="M5.2 5.2 L12.8 12.8 M12.8 5.2 L5.2 12.8" stroke="#f4f4f4" stroke-width="1.4"/></svg>

<!-- menu -->
<div class="a" style="left:10px;top:516px;font-size:12.2px;line-height:16px;color:#1e1e1e;white-space:nowrap"><u>F</u>X</div><div class="a" style="left:33px;top:516px;font-size:12.2px;line-height:16px;color:#1e1e1e;white-space:nowrap"><u>E</u>dit</div><div class="a" style="left:63px;top:516px;font-size:12.2px;line-height:16px;color:#1e1e1e;white-space:nowrap"><u>O</u>ptions</div>

<!-- list -->
<div class="a" style="left:9px;top:538px;width:122px;height:335px;background:#cccccc"></div>
<div class="a" style="left:26px;top:538px;width:104px;height:18px;background:#e8e8e8"></div>
<div class="a" style="left:9px;top:538px;width:17px;height:17px;background:#a8a8a8"></div>
<div class="a" style="left:10px;top:539px;width:15px;height:15px;background:#e6e6e6;border:1.6px solid #2e2e2e;border-radius:1.5px"></div>
<svg class="a" style="left:10px;top:539px" width="16" height="16"><path d="M3.6 7.2 L5.6 11.2 L11.6 3.2" stroke="#000" stroke-width="2.1" fill="none" stroke-linejoin="round"/></svg>
<div class="a" style="left:31px;top:538px;font-size:13.5px;line-height:18px;color:#1e1e1e;white-space:nowrap;width:98px;overflow:hidden">JS: Frequency Spectrum Analyzer</div>

<div class="btn" style="left:8px;top:878px;width:51px;height:27px;line-height:25px;font-size:12.8px">Add</div>
<div class="btn" style="left:63px;top:878px;width:59px;height:27px;line-height:25px;font-size:12.8px">Remove</div>
<div class="a" style="left:8px;top:908px;font-size:13.2px;line-height:16px;color:#2a2a2a;white-space:nowrap">0.1%/0.1%:0/0</div>

<!-- text input + ... -->
<div class="a" style="left:138px;top:536px;width:964px;height:21px;background:#e6e6e6"></div>
<div class="btn" style="left:1109px;top:535px;width:25px;height:23px;line-height:23px;letter-spacing:1.2px;text-indent:1px">...</div>
<!-- preset row -->
<div class="a" style="left:144px;top:567px;width:709px;height:20px;background:#bcbcbc;border:1px solid;border-color:#d2d2d2 #8e8e8e #8e8e8e #d2d2d2"></div>
<div class="a" style="left:147px;top:568px;font-size:13px;line-height:17px;color:#1e1e1e">No preset</div>
<svg class="a" style="left:839px;top:574px" width="14" height="8"><polygon points="0.5,0.5 10.5,0.5 5.5,6" fill="#2a2a2a"/></svg>
<div class="btn" style="left:859px;top:565px;width:23px;height:23px">+</div>
<div class="btn" style="left:886px;top:565px;width:57px;height:23px">Param</div>
<div class="btn" style="left:947px;top:565px;width:59px;height:23px">Edit...</div>
<div class="btn" style="left:1010px;top:565px;width:69px;height:23px">2 in</div>
<svg class="a" style="left:1080px;top:561px" width="30" height="30">
<circle cx="14.8" cy="16.2" r="11" fill="#a9a9a9"/>
<circle cx="14.8" cy="14.7" r="11.3" fill="#b8b8b8" stroke="#6e6e6e" stroke-width="1.3"/>
<path d="M4 14.7 A10.8 10.8 0 0 1 25.6 14.7 Z" fill="#bebebe"/>
<path d="M15.5 15.5 L18.8 22.6" stroke="#111" stroke-width="1.4"/>
</svg>
<div class="a" style="left:1114px;top:570px;width:11px;height:11px;background:#ececec;border-style:solid;border-width:1px 0 0 1px;border-color:#8a8a8a"></div>
<svg class="a" style="left:1114px;top:570px" width="12" height="12"><path d="M2.5 2.5 L9.5 9.5 M9.5 2.5 L2.5 9.5" stroke="#111" stroke-width="0.9"/></svg>

<!-- graph -->
<div class="a" style="left:138px;top:592px;width:997px;height:339px;background:#c0c0c8"></div>
<svg class="a" style="left:0;top:0" width="1136" height="935">
<rect x="138" y="592" width="995" height="337" fill="#000"/>
<g stroke="#7f7f7f" stroke-width="1">
<line x1="210.5" y1="592" x2="210.5" y2="929"/>
<line x1="228.5" y1="592" x2="228.5" y2="917"/>
<line x1="245.5" y1="592" x2="245.5" y2="929"/>
<line x1="260.5" y1="592" x2="260.5" y2="917"/>
<line x1="273.5" y1="592" x2="273.5" y2="917"/>
<line x1="286.5" y1="592" x2="286.5" y2="929"/>
<line x1="298.5" y1="592" x2="298.5" y2="917"/>
<line x1="309.5" y1="592" x2="309.5" y2="917"/>
<line x1="392.5" y1="592" x2="392.5" y2="929"/>
<line x1="447.5" y1="592" x2="447.5" y2="929"/>
<line x1="488.5" y1="592" x2="488.5" y2="917"/>
<line x1="521.5" y1="592" x2="521.5" y2="929"/>
<line x1="548.5" y1="592" x2="548.5" y2="917"/>
<line x1="572.5" y1="592" x2="572.5" y2="917"/>
<line x1="592.5" y1="592" x2="592.5" y2="917"/>
<line x1="611.5" y1="592" x2="611.5" y2="917"/>
<line x1="628.5" y1="592" x2="628.5" y2="929"/>
<line x1="738.5" y1="592" x2="738.5" y2="929"/>
<line x1="804.5" y1="592" x2="804.5" y2="929"/>
<line x1="851.5" y1="592" x2="851.5" y2="917"/>
<line x1="888.5" y1="592" x2="888.5" y2="929"/>
<line x1="918.5" y1="592" x2="918.5" y2="917"/>
<line x1="943.5" y1="592" x2="943.5" y2="917"/>
<line x1="965.5" y1="592" x2="965.5" y2="917"/>
<line x1="984.5" y1="592" x2="984.5" y2="917"/>
<line x1="1002.5" y1="592" x2="1002.5" y2="929"/>
<line x1="1069.5" y1="592" x2="1069.5" y2="917"/>
<line x1="1117.5" y1="592" x2="1117.5" y2="917"/>
<line x1="138" y1="612.5" x2="1133" y2="612.5"/>
<line x1="138" y1="628.5" x2="1133" y2="628.5"/>
<line x1="138" y1="644.5" x2="1133" y2="644.5"/>
<line x1="138" y1="660.5" x2="1133" y2="660.5"/>
<line x1="138" y1="676.5" x2="1133" y2="676.5"/>
<line x1="138" y1="692.5" x2="1133" y2="692.5"/>
<line x1="138" y1="708.5" x2="1133" y2="708.5"/>
<line x1="138" y1="724.5" x2="1133" y2="724.5"/>
<line x1="138" y1="740.5" x2="1133" y2="740.5"/>
<line x1="138" y1="756.5" x2="1133" y2="756.5"/>
<line x1="138" y1="772.5" x2="1133" y2="772.5"/>
<line x1="138" y1="789.5" x2="1133" y2="789.5"/>
<line x1="138" y1="805.5" x2="1133" y2="805.5"/>
<line x1="138" y1="821.5" x2="1133" y2="821.5"/>
<line x1="138" y1="837.5" x2="1133" y2="837.5"/>
<line x1="138" y1="853.5" x2="1133" y2="853.5"/>
<line x1="138" y1="869.5" x2="1133" y2="869.5"/>
<line x1="138" y1="885.5" x2="1133" y2="885.5"/>
<line x1="138" y1="901.5" x2="1133" y2="901.5"/>
<line x1="138" y1="917.5" x2="1133" y2="917.5"/>
</g>
<g fill="#808080" font-family="Liberation Mono" font-weight="bold" font-size="10.6px">
<text x="138.3" y="620.7" textLength="23.41" lengthAdjust="spacingAndGlyphs">0dB</text>
<text x="138.3" y="636.7" textLength="31.08" lengthAdjust="spacingAndGlyphs">-6dB</text>
<text x="138.3" y="652.7" textLength="38.75" lengthAdjust="spacingAndGlyphs">-12dB</text>
<text x="138.3" y="668.7" textLength="38.75" lengthAdjust="spacingAndGlyphs">-18dB</text>
<text x="138.3" y="684.7" textLength="38.75" lengthAdjust="spacingAndGlyphs">-24dB</text>
<text x="138.3" y="700.7" textLength="38.75" lengthAdjust="spacingAndGlyphs">-30dB</text>
<text x="138.3" y="716.7" textLength="38.75" lengthAdjust="spacingAndGlyphs">-36dB</text>
<text x="138.3" y="732.7" textLength="38.75" lengthAdjust="spacingAndGlyphs">-42dB</text>
<text x="138.3" y="748.7" textLength="38.75" lengthAdjust="spacingAndGlyphs">-48dB</text>
<text x="138.3" y="764.7" textLength="38.75" lengthAdjust="spacingAndGlyphs">-54dB</text>
<text x="138.3" y="780.7" textLength="38.75" lengthAdjust="spacingAndGlyphs">-60dB</text>
<text x="138.3" y="797.7" textLength="38.75" lengthAdjust="spacingAndGlyphs">-66dB</text>
<text x="138.3" y="813.7" textLength="38.75" lengthAdjust="spacingAndGlyphs">-72dB</text>
<text x="138.3" y="829.7" textLength="38.75" lengthAdjust="spacingAndGlyphs">-78dB</text>
<text x="138.3" y="845.7" textLength="38.75" lengthAdjust="spacingAndGlyphs">-84dB</text>
<text x="138.3" y="861.7" textLength="38.75" lengthAdjust="spacingAndGlyphs">-90dB</text>
<text x="138.3" y="877.7" textLength="38.75" lengthAdjust="spacingAndGlyphs">-96dB</text>
<text x="138.3" y="893.7" textLength="46.42" lengthAdjust="spacingAndGlyphs">-102dB</text>
<text x="138.3" y="909.7" textLength="46.42" lengthAdjust="spacingAndGlyphs">-108dB</text>
<text x="138.3" y="925.7" textLength="46.42" lengthAdjust="spacingAndGlyphs">-114dB</text>
<rect x="212.5" y="918" width="31.00" height="11" fill="#000"/>
<text x="212.6" y="928" textLength="30.80" lengthAdjust="spacingAndGlyphs">30Hz</text>
<rect x="247.5" y="918" width="31.00" height="11" fill="#000"/>
<text x="247.6" y="928" textLength="30.80" lengthAdjust="spacingAndGlyphs">50Hz</text>
<rect x="288.5" y="918" width="31.00" height="11" fill="#000"/>
<text x="288.6" y="928" textLength="30.80" lengthAdjust="spacingAndGlyphs">80Hz</text>
<rect x="394.5" y="918" width="38.75" height="11" fill="#000"/>
<text x="394.6" y="928" textLength="38.55" lengthAdjust="spacingAndGlyphs">200Hz</text>
<rect x="449.5" y="918" width="38.75" height="11" fill="#000"/>
<text x="449.6" y="928" textLength="38.55" lengthAdjust="spacingAndGlyphs">300Hz</text>
<rect x="523.5" y="918" width="38.75" height="11" fill="#000"/>
<text x="523.6" y="928" textLength="38.55" lengthAdjust="spacingAndGlyphs">500Hz</text>
<rect x="630.5" y="918" width="31.00" height="11" fill="#000"/>
<text x="630.6" y="928" textLength="30.80" lengthAdjust="spacingAndGlyphs">1kHz</text>
<rect x="740.5" y="918" width="31.00" height="11" fill="#000"/>
<text x="740.6" y="928" textLength="30.80" lengthAdjust="spacingAndGlyphs">2kHz</text>
<rect x="806.5" y="918" width="31.00" height="11" fill="#000"/>
<text x="806.6" y="928" textLength="30.80" lengthAdjust="spacingAndGlyphs">3kHz</text>
<rect x="890.5" y="918" width="31.00" height="11" fill="#000"/>
<text x="890.6" y="928" textLength="30.80" lengthAdjust="spacingAndGlyphs">5kHz</text>
<rect x="1004.5" y="918" width="38.75" height="11" fill="#000"/>
<text x="1004.6" y="928" textLength="38.55" lengthAdjust="spacingAndGlyphs">10kHz</text>
</g>
<path d="M138.00 842.1 L145.00 836.0 L153.50 818.3 L160.50 827.0 L167.00 818.3 L174.00 821.9 L180.30 823.6 L186.40 828.9 L192.60 867.6 L198.20 836.5 L204.50 841.6 L209.30 840.4 L214.20 861.5 L219.30 853.6 L224.30 823.1 L229.00 825.4 L238.40 846.5 L242.20 779.6 L245.90 778.4 L251.60 830.1 L255.10 821.3 L259.50 827.1 L262.30 854.4 L270.00 822.4 L274.40 836.5 L277.10 822.4 L284.10 830.7 L287.60 842.1 L291.70 848.3 L294.30 821.3 L297.30 828.0 L303.50 819.6 L307.00 823.1 L311.40 822.7 L314.00 817.5 L317.60 791.0 L320.20 777.0 L324.60 765.5 L328.50 760.2 L330.80 762.0 L333.80 777.9 L335.50 779.6 L338.00 763.9 L340.10 747.2 L343.30 749.0 L345.40 778.0 L347.70 748.1 L350.30 732.3 L352.10 731.4 L354.40 747.2 L358.20 721.7 L361.40 738.4 L363.90 723.5 L367.00 737.5 L369.30 722.6 L371.50 742.8 L373.60 736.7 L375.50 756.0 L377.60 724.3 L381.10 735.8 L386.40 767.5 L388.70 735.8 L390.80 749.0 L391.70 738.4 L393.50 758.7 L397.90 742.8 L398.70 757.8 L400.50 724.3 L402.80 780.7 L404.00 751.6 L408.40 738.4 L410.20 771.0 L411.60 733.1 L413.70 759.5 L416.30 750.7 L418.10 745.5 L420.70 765.7 L422.50 760.4 L425.50 772.7 L426.40 747.2 L429.50 750.7 L430.40 741.0 L433.00 756.9 L434.50 738.4 L437.50 762.2 L438.70 747.2 L442.20 740.2 L445.40 720.8 L448.90 716.4 L452.80 710.2 L455.60 713.8 L457.70 723.5 L461.20 741.0 L464.40 720.8 L466.50 720.8 L470.00 737.5 L474.40 730.5 L477.40 744.6 L479.70 727.9 L482.40 763.9 L484.50 771.0 L485.90 742.8 L488.00 734.0 L489.10 755.1 L490.30 719.0 L491.50 756.0 L492.90 730.5 L495.60 726.1 L497.30 744.6 L498.60 721.7 L500.00 744.6 L502.60 716.4 L504.40 701.4 L507.00 712.9 L510.20 705.8 L513.20 724.3 L514.90 709.4 L516.70 760.4 L518.00 721.7 L521.10 734.0 L523.40 720.8 L526.40 756.0 L528.10 741.9 L531.70 741.0 L532.50 756.0 L534.30 781.5 L536.10 750.7 L538.00 751.6 L539.80 756.9 L541.50 783.3 L542.90 746.3 L544.50 744.6 L545.40 765.7 L547.20 741.0 L549.40 738.4 L551.70 725.2 L553.00 730.5 L555.30 721.7 L556.50 729.6 L558.60 721.7 L560.50 747.2 L561.80 734.9 L563.50 748.1 L564.40 734.9 L566.50 744.6 L568.80 738.4 L570.60 732.3 L572.90 741.0 L574.10 734.9 L577.60 747.2 L578.80 731.4 L581.50 792.1 L582.90 733.1 L585.20 760.4 L587.00 729.6 L588.70 756.9 L590.80 727.9 L592.90 749.0 L594.30 725.2 L596.60 761.3 L598.20 731.4 L600.00 786.8 L601.70 738.4 L604.00 754.3 L607.00 766.6 L609.30 734.9 L611.60 757.8 L613.40 727.9 L615.50 744.6 L616.90 722.6 L618.60 738.4 L620.70 717.3 L623.40 727.9 L625.10 722.6 L626.60 741.0 L629.50 737.5 L631.00 778.0 L633.10 732.3 L634.80 765.7 L636.60 733.1 L638.40 787.7 L640.50 741.0 L642.80 786.0 L644.50 746.3 L646.30 788.6 L648.00 739.3 L650.30 771.9 L652.40 741.0 L654.50 765.7 L656.30 737.5 L659.10 751.6 L661.20 734.0 L664.40 746.3 L668.30 749.9 L671.80 751.6 L674.40 756.9 L678.00 749.0 L680.60 763.0 L682.70 744.6 L685.50 765.7 L687.30 744.6 L690.30 765.7 L692.00 751.6 L692.47 753.7 L692.75 773.4 L693.04 757.8 L693.33 787.8 L693.61 778.1 L693.90 787.1 L694.19 791.8 L694.47 777.9 L694.75 786.2 L695.04 761.4 L695.32 819.7 L695.60 790.9 L695.89 846.3 L696.17 767.7 L696.45 793.5 L696.73 799.6 L697.01 781.8 L697.29 771.0 L697.57 774.6 L697.85 774.0 L698.13 803.1 L698.41 771.2 L698.68 807.0 L698.96 786.3 L699.24 791.2 L699.51 793.6 L699.79 792.2 L700.07 797.2 L700.34 794.5 L700.61 783.4 L700.89 802.4 L701.16 780.7 L701.44 800.8 L701.71 804.2 L701.98 805.0 L702.25 782.7 L702.52 804.5 L702.79 839.5 L703.06 788.0 L703.33 781.0 L703.60 790.7 L703.87 824.9 L704.14 774.0 L704.41 761.6 L704.68 788.3 L704.94 796.3 L705.21 803.5 L705.48 783.4 L705.74 849.5 L706.01 777.8 L706.27 801.8 L706.54 770.4 L706.80 764.6 L707.07 772.9 L707.33 767.9 L707.59 788.1 L707.86 790.3 L708.12 774.8 L708.38 822.7 L708.64 782.2 L708.90 772.9 L709.16 774.2 L709.42 799.2 L709.68 818.2 L709.94 773.1 L710.20 763.3 L710.46 801.6 L710.72 776.4 L710.98 839.7 L711.23 786.5 L711.49 792.6 L711.75 780.1 L712.00 802.7 L712.26 784.5 L712.52 779.0 L712.77 813.8 L713.03 768.9 L713.28 797.4 L713.53 765.7 L713.79 792.1 L714.04 781.4 L714.29 807.8 L714.55 764.9 L714.80 787.8 L715.05 781.3 L715.30 815.4 L715.55 821.2 L715.80 790.7 L716.05 773.9 L716.30 775.1 L716.55 775.5 L716.80 782.4 L717.05 774.3 L717.30 773.1 L717.54 798.6 L717.79 791.8 L718.04 777.2 L718.28 854.9 L718.53 773.9 L718.78 788.4 L719.02 771.2 L719.27 807.9 L719.51 808.7 L719.76 776.2 L720.00 798.4 L720.24 804.0 L720.49 776.9 L720.73 778.9 L720.97 785.1 L721.22 811.7 L721.46 771.8 L721.70 794.5 L721.94 790.1 L722.18 783.9 L722.42 789.4 L722.66 810.8 L722.90 774.2 L723.14 811.0 L723.38 780.4 L723.62 800.9 L723.86 808.6 L724.10 773.1 L724.33 808.7 L724.57 857.1 L724.81 778.1 L725.05 761.9 L725.28 769.6 L725.52 833.9 L725.75 758.7 L725.99 815.6 L726.23 771.9 L726.46 798.3 L726.69 768.9 L726.93 772.9 L727.16 795.2 L727.40 768.6 L727.63 780.2 L727.86 817.1 L728.09 797.3 L728.33 811.5 L728.56 837.7 L728.79 763.7 L729.02 776.1 L729.25 802.7 L729.48 795.9 L729.71 764.4 L729.94 787.1 L730.17 776.2 L730.40 784.2 L730.63 769.9 L730.86 762.0 L731.09 849.7 L731.32 779.8 L731.54 811.5 L731.77 771.0 L732.00 786.7 L732.22 771.9 L732.45 784.4 L732.68 774.1 L732.90 796.1 L733.13 772.7 L733.35 799.3 L733.58 787.4 L733.80 770.8 L734.03 781.6 L734.25 787.3 L734.48 817.9 L734.70 781.4 L734.92 776.0 L735.14 831.6 L735.37 812.4 L735.59 799.1 L735.81 778.5 L736.03 774.3 L736.25 778.2 L736.48 768.0 L736.70 765.7 L736.92 788.0 L737.14 783.9 L737.36 790.1 L737.58 782.2 L737.80 760.4 L738.01 796.7 L738.23 794.8 L738.45 789.6 L738.67 789.9 L738.89 796.9 L739.10 840.9 L739.32 811.6 L739.54 798.5 L739.76 783.8 L739.97 780.6 L740.19 784.6 L740.40 834.7 L740.62 783.4 L740.84 783.3 L741.05 784.3 L741.27 773.0 L741.48 875.6 L741.69 758.7 L741.91 792.8 L742.12 820.0 L742.33 778.2 L742.55 793.0 L742.76 783.1 L742.97 777.7 L743.19 775.8 L743.40 771.7 L743.61 808.5 L743.82 803.3 L744.03 816.8 L744.24 766.9 L744.45 797.5 L744.66 781.2 L744.87 794.9 L745.08 790.4 L745.29 780.9 L745.50 834.4 L745.71 754.8 L745.92 800.8 L746.13 809.7 L746.34 788.8 L746.55 792.4 L746.75 859.1 L746.96 777.7 L747.17 794.3 L747.37 800.7 L747.58 783.6 L747.79 798.8 L747.99 784.2 L748.20 789.6 L748.41 793.6 L748.61 796.9 L748.82 781.4 L749.02 794.4 L749.23 790.4 L749.43 777.4 L749.63 793.6 L749.84 779.2 L750.04 817.3 L750.25 787.6 L750.45 799.6 L750.65 789.6 L750.85 787.7 L751.06 777.4 L751.26 773.7 L751.46 820.9 L751.66 790.0 L751.86 789.8 L752.07 790.0 L752.27 806.7 L752.47 778.8 L752.67 776.1 L752.87 808.1 L753.07 788.4 L753.27 796.7 L753.47 809.3 L753.67 817.2 L753.86 814.0 L754.06 769.4 L754.26 786.7 L754.46 811.0 L754.66 809.9 L754.86 776.2 L755.05 778.0 L755.25 782.7 L755.45 775.7 L755.65 787.4 L755.84 810.1 L756.04 794.5 L756.23 791.9 L756.43 775.9 L756.63 790.1 L756.82 873.2 L757.02 804.1 L757.21 792.9 L757.41 794.4 L757.60 811.8 L757.80 809.1 L757.99 781.0 L758.18 804.0 L758.38 790.1 L758.57 796.2 L758.76 784.6 L758.96 789.9 L759.15 788.6 L759.34 790.1 L759.54 769.3 L759.73 782.5 L759.92 797.6 L760.11 774.0 L760.30 781.2 L760.49 805.0 L760.68 785.1 L760.88 787.0 L761.07 783.6 L761.26 813.3 L761.45 775.8 L761.64 799.8 L761.83 815.5 L762.02 781.3 L762.20 790.2 L762.39 809.1 L762.58 798.4 L762.77 787.9 L762.96 771.1 L763.15 790.5 L763.34 787.4 L763.52 803.0 L763.71 784.3 L763.90 788.7 L764.09 799.1 L764.27 809.5 L764.46 786.2 L764.65 787.4 L764.83 795.3 L765.02 823.4 L765.20 779.1 L765.39 837.6 L765.58 801.8 L765.76 786.3 L765.95 799.0 L766.13 784.4 L766.31 771.7 L766.50 804.2 L766.68 786.0 L766.87 791.9 L767.05 790.6 L767.23 818.1 L767.42 803.7 L767.60 766.3 L767.78 794.4 L767.97 788.7 L768.15 788.5 L768.33 810.0 L768.51 786.5 L768.70 788.7 L768.88 815.6 L769.06 787.2 L769.24 789.2 L769.42 789.9 L769.60 807.9 L769.78 797.2 L769.96 801.2 L770.15 785.0 L770.33 766.7 L770.51 797.3 L770.69 791.0 L770.86 802.7 L771.04 802.7 L771.22 772.1 L771.40 777.0 L771.58 769.3 L771.76 806.1 L771.94 770.8 L772.12 769.8 L772.30 800.8 L772.47 790.5 L772.65 766.9 L772.83 796.1 L773.01 797.8 L773.18 786.7 L773.36 766.4 L773.54 795.9 L773.71 783.1 L773.89 789.7 L774.07 871.0 L774.24 803.1 L774.42 808.3 L774.59 769.6 L774.77 777.4 L774.94 784.4 L775.12 754.3 L775.29 842.4 L775.47 773.4 L775.64 772.5 L775.82 774.2 L775.99 771.4 L776.17 802.9 L776.34 782.9 L776.51 780.6 L776.69 776.5 L776.86 758.2 L777.03 771.1 L777.21 801.7 L777.38 795.4 L777.55 800.6 L777.72 769.1 L777.90 766.8 L778.07 757.9 L778.24 780.5 L778.41 773.9 L778.58 777.5 L778.75 778.6 L778.92 782.7 L779.10 773.7 L779.27 795.6 L779.44 766.9 L779.61 809.7 L779.78 781.6 L779.95 758.1 L780.12 771.8 L780.29 780.6 L780.46 775.5 L780.63 782.1 L780.80 772.2 L780.96 770.2 L781.13 795.4 L781.30 771.0 L781.47 789.6 L781.64 796.0 L781.81 783.5 L781.97 777.6 L782.14 813.2 L782.31 777.2 L782.48 803.7 L782.64 759.0 L782.81 776.8 L782.98 785.9 L783.15 758.3 L783.31 802.0 L783.48 760.3 L783.65 783.9 L783.81 766.5 L783.98 810.8 L784.14 782.3 L784.31 796.2 L784.47 779.7 L784.64 787.9 L784.80 788.0 L784.97 771.6 L785.13 768.1 L785.30 799.7 L785.46 765.1 L785.63 810.2 L785.79 768.0 L785.96 762.6 L786.12 762.2 L786.28 795.2 L786.45 818.0 L786.61 776.6 L786.77 787.4 L786.94 770.4 L787.10 808.4 L787.26 789.1 L787.43 766.0 L787.59 759.9 L787.75 789.9 L787.91 758.6 L788.07 800.3 L788.24 772.5 L788.40 770.1 L788.56 784.5 L788.72 773.8 L788.88 783.7 L789.04 766.8 L789.20 810.5 L789.36 774.4 L789.52 801.6 L789.68 767.1 L789.84 798.0 L790.00 833.0 L790.16 777.4 L790.32 758.8 L790.48 777.1 L790.64 788.5 L790.80 771.0 L790.96 784.2 L791.12 764.5 L791.28 780.9 L791.44 793.8 L791.60 779.7 L791.75 791.1 L791.91 766.2 L792.07 801.7 L792.23 766.8 L792.39 814.3 L792.54 858.2 L792.70 818.0 L792.86 784.3 L793.02 774.9 L793.17 777.3 L793.33 796.2 L793.49 783.4 L793.64 816.3 L793.80 765.9 L793.96 783.2 L794.11 806.4 L794.27 788.3 L794.42 785.8 L794.58 766.0 L794.74 769.1 L794.89 775.1 L795.05 810.6 L795.20 805.0 L795.36 773.5 L795.51 816.2 L795.67 761.5 L795.82 789.1 L795.97 828.9 L796.13 778.7 L796.28 821.2 L796.44 792.3 L796.59 764.0 L796.74 778.6 L796.90 783.3 L797.05 775.3 L797.20 797.7 L797.36 772.4 L797.51 801.1 L797.66 777.7 L797.82 766.3 L797.97 788.4 L798.12 768.3 L798.27 788.3 L798.43 801.6 L798.58 790.5 L798.73 784.8 L798.88 763.5 L799.03 787.2 L799.18 769.1 L799.34 793.6 L799.49 771.4 L799.64 790.5 L799.79 781.3 L799.94 782.3 L800.09 795.0 L800.24 773.6 L800.39 774.0 L800.54 823.2 L800.69 781.1 L800.84 808.2 L800.99 811.8 L801.14 787.4 L801.29 773.7 L801.44 770.7 L801.59 813.0 L801.74 772.3 L801.89 788.6 L802.04 790.4 L802.18 772.7 L802.33 787.8 L802.48 775.4 L802.63 790.9 L802.78 789.8 L802.93 784.2 L803.07 777.4 L803.22 785.9 L803.37 777.9 L803.52 774.2 L803.66 779.7 L803.81 813.7 L803.96 790.5 L804.11 816.4 L804.25 764.5 L804.40 826.6 L804.55 790.4 L804.69 806.7 L804.84 794.1 L804.98 800.2 L805.13 780.4 L805.28 804.2 L805.42 777.1 L805.57 782.2 L805.71 768.4 L805.86 787.5 L806.00 792.7 L806.15 783.7 L806.29 817.9 L806.44 773.4 L806.58 795.1 L806.73 780.8 L806.87 795.6 L807.02 806.4 L807.16 801.4 L807.31 770.8 L807.45 780.6 L807.59 795.0 L807.74 844.1 L807.88 768.2 L808.03 795.5 L808.17 799.2 L808.31 807.6 L808.46 783.4 L808.60 806.9 L808.74 787.9 L808.88 820.1 L809.03 761.9 L809.17 824.1 L809.31 785.3 L809.45 784.9 L809.60 770.4 L809.74 778.1 L809.88 799.9 L810.02 796.5 L810.16 773.4 L810.31 781.6 L810.45 772.6 L810.59 775.2 L810.73 776.0 L810.87 780.4 L811.01 835.6 L811.15 867.3 L811.29 802.5 L811.43 785.8 L811.58 786.4 L811.72 801.1 L811.86 814.8 L812.00 798.9 L812.14 792.1 L812.28 773.5 L812.42 791.2 L812.56 806.0 L812.70 800.7 L812.83 767.3 L812.97 795.7 L813.11 778.8 L813.25 770.7 L813.39 827.9 L813.53 792.5 L813.67 796.7 L813.81 768.7 L813.95 802.9 L814.08 818.2 L814.22 811.7 L814.36 796.0 L814.50 802.7 L814.64 799.9 L814.77 787.1 L814.91 780.3 L815.05 801.4 L815.19 797.9 L815.33 805.9 L815.46 774.3 L815.60 823.6 L815.74 783.4 L815.87 818.5 L816.01 765.4 L816.15 826.2 L816.28 797.0 L816.42 771.4 L816.56 801.1 L816.69 770.3 L816.83 768.7 L816.97 779.1 L817.10 770.1 L817.24 780.2 L817.37 809.0 L817.51 789.0 L817.64 790.3 L817.78 775.6 L817.91 795.0 L818.05 795.6 L818.18 788.2 L818.32 814.8 L818.45 797.9 L818.59 775.3 L818.72 760.7 L818.86 785.8 L818.99 798.3 L819.13 772.1 L819.26 782.6 L819.39 797.9 L819.53 794.0 L819.66 748.2 L819.80 777.6 L819.93 752.3 L820.06 761.5 L820.20 795.9 L820.33 775.2 L820.46 783.3 L820.60 777.0 L820.73 772.3 L820.86 767.4 L820.99 773.3 L821.13 799.7 L821.26 784.8 L821.39 771.2 L821.52 761.5 L821.66 770.6 L821.79 789.6 L821.92 777.7 L822.05 787.6 L822.19 797.3 L822.32 764.2 L822.45 789.2 L822.58 758.6 L822.71 799.2 L822.84 768.0 L822.97 771.9 L823.10 821.4 L823.24 775.7 L823.37 770.3 L823.50 807.3 L823.63 786.6 L823.76 808.2 L823.89 777.6 L824.02 782.0 L824.15 821.7 L824.28 782.5 L824.41 841.8 L824.54 769.8 L824.67 801.7 L824.80 768.8 L824.93 784.0 L825.06 747.6 L825.19 769.8 L825.32 819.6 L825.45 781.5 L825.58 800.7 L825.71 773.6 L825.83 777.8 L825.96 766.5 L826.09 786.2 L826.22 806.5 L826.35 784.8 L826.48 779.4 L826.61 816.9 L826.73 811.0 L826.86 792.4 L826.99 765.8 L827.12 790.5 L827.25 782.8 L827.37 825.5 L827.50 779.7 L827.63 792.9 L827.76 791.5 L827.88 780.7 L828.01 786.7 L828.14 794.2 L828.27 814.5 L828.39 786.1 L828.52 780.8 L828.65 835.1 L828.77 765.9 L828.90 806.1 L829.03 795.4 L829.15 789.3 L829.28 784.8 L829.40 799.9 L829.53 813.2 L829.66 798.7 L829.78 800.2 L829.91 764.7 L830.03 780.7 L830.16 772.5 L830.29 826.6 L830.41 814.1 L830.54 773.3 L830.66 792.1 L830.79 791.7 L830.91 767.0 L831.04 784.3 L831.16 801.3 L831.29 795.3 L831.41 780.2 L831.54 802.7 L831.66 780.9 L831.78 791.2 L831.91 786.2 L832.03 839.5 L832.16 796.5 L832.28 806.6 L832.40 798.2 L832.53 785.2 L832.65 832.4 L832.78 800.5 L832.90 799.5 L833.02 781.6 L833.15 776.6 L833.27 794.0 L833.39 809.5 L833.52 806.9 L833.64 784.9 L833.76 776.0 L833.89 791.9 L834.01 815.5 L834.13 777.4 L834.25 803.5 L834.38 778.0 L834.50 784.2 L834.62 770.9 L834.74 783.8 L834.86 787.3 L834.99 835.9 L835.11 834.0 L835.23 779.5 L835.35 784.7 L835.47 828.4 L835.60 780.2 L835.72 785.5 L835.84 790.2 L835.96 776.0 L836.08 783.3 L836.20 788.7 L836.32 788.5 L836.44 835.7 L836.56 784.0 L836.69 781.4 L836.81 822.2 L836.93 791.5 L837.05 813.4 L837.17 800.0 L837.29 808.6 L837.41 786.5 L837.53 779.6 L837.65 807.4 L837.77 793.0 L837.89 796.9 L838.01 802.4 L838.13 807.4 L838.25 785.6 L838.37 789.2 L838.49 825.0 L838.61 796.1 L838.73 786.5 L838.84 801.0 L838.96 785.5 L839.08 809.5 L839.20 773.2 L839.32 814.2 L839.44 798.4 L839.56 789.8 L839.68 830.7 L839.80 786.4 L839.91 785.6 L840.03 776.5 L840.15 798.2 L840.27 809.2 L840.39 804.7 L840.50 792.8 L840.62 813.5 L840.74 779.8 L840.86 788.9 L840.98 803.4 L841.09 840.8 L841.21 803.0 L841.33 806.2 L841.45 811.6 L841.56 792.9 L841.68 832.4 L841.80 809.6 L841.91 791.1 L842.03 793.2 L842.15 814.5 L842.27 791.7 L842.38 785.0 L842.50 821.4 L842.62 799.4 L842.73 799.0 L842.85 806.1 L842.96 825.8 L843.08 782.9 L843.20 792.0 L843.31 778.7 L843.43 795.1 L843.54 798.8 L843.66 820.0 L843.78 806.7 L843.89 802.4 L844.01 795.2 L844.12 802.4 L844.24 790.2 L844.35 819.8 L844.47 815.0 L844.58 819.4 L844.70 785.1 L844.81 807.7 L844.93 812.8 L845.04 799.9 L845.16 827.0 L845.27 827.1 L845.39 812.3 L845.50 818.3 L845.62 806.9 L845.73 824.5 L845.85 784.6 L845.96 810.1 L846.07 810.1 L846.19 805.3 L846.30 791.3 L846.42 780.7 L846.53 805.0 L846.64 819.0 L846.76 791.4 L846.87 788.9 L846.98 789.4 L847.10 782.8 L847.21 809.0 L847.32 848.6 L847.44 817.4 L847.55 795.2 L847.66 810.4 L847.78 781.6 L847.89 820.8 L848.00 794.0 L848.11 770.5 L848.23 806.9 L848.34 785.9 L848.45 792.1 L848.57 780.8 L848.68 799.0 L848.79 803.6 L848.90 818.3 L849.01 779.0 L849.13 820.2 L849.24 784.7 L849.35 790.3 L849.46 807.4 L849.57 795.1 L849.69 794.8 L849.80 804.6 L849.91 790.3 L850.02 817.6 L850.13 790.0 L850.24 821.7 L850.35 819.0 L850.46 803.5 L850.58 778.5 L850.69 816.7 L850.80 778.3 L850.91 802.2 L851.02 799.0 L851.13 782.1 L851.24 808.1 L851.35 813.3 L851.46 806.0 L851.57 798.3 L851.68 802.8 L851.79 806.3 L851.90 791.4 L852.01 825.4 L852.12 876.1 L852.23 819.3 L852.34 844.1 L852.45 795.8 L852.56 859.4 L852.67 783.3 L852.78 801.8 L852.89 787.3 L853.00 800.9 L853.11 811.5 L853.22 813.0 L853.33 801.1 L853.44 796.6 L853.55 790.4 L853.66 799.1 L853.77 794.4 L853.87 790.7 L853.98 815.0 L854.09 803.9 L854.20 800.8 L854.31 791.0 L854.42 813.2 L854.53 791.0 L854.63 794.0 L854.74 806.1 L854.85 813.2 L854.96 850.4 L855.07 816.2 L855.18 840.9 L855.28 834.4 L855.39 814.7 L855.50 814.5 L855.61 783.7 L855.71 791.9 L855.82 777.3 L855.93 826.4 L856.04 814.9 L856.14 809.9 L856.25 794.6 L856.36 798.3 L856.47 790.2 L856.57 810.1 L856.68 867.9 L856.79 796.5 L856.89 782.5 L857.00 791.0 L857.11 798.5 L857.21 831.5 L857.32 821.2 L857.43 802.6 L857.53 787.2 L857.64 787.6 L857.75 790.2 L857.85 819.3 L857.96 803.5 L858.07 866.9 L858.17 834.0 L858.28 820.8 L858.38 803.8 L858.49 823.2 L858.60 789.2 L858.70 788.1 L858.81 807.7 L858.91 805.4 L859.02 793.3 L859.12 795.1 L859.23 780.3 L859.33 833.9 L859.44 815.5 L859.55 841.7 L859.65 857.0 L859.76 802.8 L859.86 817.0 L859.97 800.7 L860.07 822.9 L860.18 825.6 L860.28 790.1 L860.38 778.9 L860.49 794.0 L860.59 809.4 L860.70 800.8 L860.80 778.0 L860.91 824.8 L861.01 821.1 L861.12 804.3 L861.22 784.0 L861.32 831.6 L861.43 807.4 L861.53 786.6 L861.64 799.0 L861.74 811.7 L861.84 831.3 L861.95 805.5 L862.05 812.5 L862.15 794.3 L862.26 795.9 L862.36 834.5 L862.47 801.6 L862.57 789.2 L862.67 810.4 L862.77 790.6 L862.88 794.3 L862.98 804.7 L863.08 810.3 L863.19 812.8 L863.29 816.7 L863.39 804.2 L863.50 787.0 L863.60 817.9 L863.70 785.9 L863.80 805.6 L863.91 802.8 L864.01 815.0 L864.11 817.4 L864.21 796.5 L864.32 813.9 L864.42 816.2 L864.52 805.8 L864.62 791.9 L864.72 835.7 L864.83 811.3 L864.93 786.8 L865.03 796.3 L865.13 864.2 L865.23 795.9 L865.33 802.4 L865.44 822.3 L865.54 825.2 L865.64 812.8 L865.74 818.9 L865.84 784.2 L865.94 788.9 L866.04 855.3 L866.14 823.3 L866.25 784.1 L866.35 785.2 L866.45 796.1 L866.55 839.4 L866.65 795.2 L866.75 814.5 L866.85 839.2 L866.95 812.8 L867.05 837.0 L867.15 796.9 L867.25 792.0 L867.35 780.9 L867.45 819.6 L867.55 789.1 L867.65 853.2 L867.75 816.5 L867.85 793.4 L867.95 823.2 L868.05 792.2 L868.15 806.7 L868.25 789.1 L868.35 821.5 L868.45 831.9 L868.55 836.1 L868.65 774.6 L868.75 827.2 L868.85 808.4 L868.95 824.2 L869.05 806.1 L869.15 811.3 L869.25 810.1 L869.35 822.3 L869.45 787.0 L869.55 785.0 L869.65 807.8 L869.74 797.5 L869.84 801.6 L869.94 777.5 L870.04 818.2 L870.14 781.4 L870.24 824.7 L870.34 823.1 L870.44 803.9 L870.53 789.6 L870.63 812.5 L870.73 793.7 L870.83 802.7 L870.93 788.8 L871.03 854.4 L871.12 807.5 L871.22 799.6 L871.32 787.7 L871.42 816.9 L871.52 826.4 L871.61 826.3 L871.71 788.1 L871.81 800.0 L871.91 797.5 L872.00 818.9 L872.10 790.6 L872.20 810.0 L872.30 855.5 L872.39 819.3 L872.49 776.7 L872.59 786.1 L872.69 788.6 L872.78 814.3 L872.88 809.5 L872.98 806.0 L873.07 803.3 L873.17 801.3 L873.27 810.0 L873.37 811.8 L873.46 835.0 L873.56 816.6 L873.66 821.1 L873.75 834.3 L873.85 824.6 L873.94 815.5 L874.04 781.5 L874.14 813.4 L874.23 825.9 L874.33 802.0 L874.43 829.1 L874.52 791.6 L874.62 840.5 L874.71 802.3 L874.81 814.7 L874.91 794.7 L875.00 796.7 L875.10 798.6 L875.19 797.6 L875.29 786.9 L875.39 802.2 L875.48 856.5 L875.58 811.6 L875.67 837.7 L875.77 818.1 L875.86 824.2 L875.96 873.9 L876.05 817.4 L876.15 795.4 L876.24 794.3 L876.34 800.8 L876.43 779.4 L876.53 793.5 L876.62 829.6 L876.72 835.2 L876.81 797.4 L876.91 818.4 L877.00 818.7 L877.10 830.0 L877.19 820.2 L877.29 805.5 L877.38 787.0 L877.48 822.7 L877.57 796.6 L877.66 809.8 L877.76 798.7 L877.85 805.6 L877.95 847.3 L878.04 790.0 L878.14 805.3 L878.23 810.8 L878.32 805.6 L878.42 838.4 L878.51 800.1 L878.60 833.4 L878.70 812.9 L878.79 847.9 L878.89 785.7 L878.98 792.1 L879.07 795.3 L879.17 832.1 L879.26 777.3 L879.35 794.1 L879.45 814.2 L879.54 864.6 L879.63 790.3 L879.73 801.1 L879.82 812.5 L879.91 812.7 L880.01 816.1 L880.10 816.6 L880.19 793.5 L880.28 793.9 L880.38 779.9 L880.47 812.8 L880.56 791.9 L880.66 794.1 L880.75 846.5 L880.84 810.3 L880.93 807.8 L881.03 811.0 L881.12 808.1 L881.21 813.1 L881.30 796.0 L881.39 783.9 L881.49 784.1 L881.58 777.6 L881.67 798.3 L881.76 788.9 L881.86 787.3 L881.95 803.6 L882.04 849.0 L882.13 812.8 L882.22 794.9 L882.31 818.1 L882.41 790.7 L882.50 786.6 L882.59 796.1 L882.68 800.3 L882.77 813.1 L882.86 801.8 L882.96 815.4 L883.05 786.3 L883.14 837.3 L883.23 797.8 L883.32 823.4 L883.41 780.7 L883.50 823.1 L883.59 793.1 L883.68 825.7 L883.78 820.8 L883.87 812.2 L883.96 795.3 L884.05 776.7 L884.14 791.5 L884.23 832.3 L884.32 790.1 L884.41 811.6 L884.50 808.1 L884.59 811.8 L884.68 791.2 L884.77 789.4 L884.86 786.7 L884.95 857.7 L885.04 799.6 L885.13 811.4 L885.22 807.4 L885.31 793.2 L885.40 784.5 L885.49 778.3 L885.58 825.7 L885.67 788.8 L885.76 846.7 L885.85 799.0 L885.94 815.5 L886.03 789.3 L886.12 820.0 L886.21 794.5 L886.30 799.1 L886.39 805.5 L886.48 787.8 L886.57 794.4 L886.66 820.7 L886.75 796.0 L886.84 799.8 L886.93 818.4 L887.02 793.5 L887.10 792.1 L887.19 793.3 L887.28 800.0 L887.37 799.3 L887.46 811.1 L887.55 803.7 L887.64 828.4 L887.73 784.4 L887.82 813.5 L887.90 825.8 L887.99 795.8 L888.08 783.3 L888.17 804.7 L888.26 791.1 L888.35 806.2 L888.44 818.5 L888.52 790.7 L888.61 792.5 L888.70 808.3 L888.79 796.1 L888.88 798.9 L888.97 807.7 L889.05 794.2 L889.14 791.1 L889.23 805.5 L889.32 810.2 L889.41 846.0 L889.49 814.4 L889.58 793.0 L889.67 801.5 L889.76 825.4 L889.84 816.1 L889.93 837.0 L890.02 856.0 L890.11 836.2 L890.19 797.9 L890.28 851.0 L890.37 816.4 L890.46 805.2 L890.54 802.4 L890.63 839.0 L890.72 805.0 L890.81 798.4 L890.89 807.9 L890.98 849.1 L891.07 816.3 L891.15 829.8 L891.24 799.4 L891.33 817.0 L891.41 811.9 L891.50 807.6 L891.59 827.4 L891.67 814.6 L891.76 804.3 L891.85 875.5 L891.93 820.4 L892.02 808.3 L892.11 794.6 L892.19 829.2 L892.28 823.1 L892.37 798.4 L892.45 821.9 L892.54 835.5 L892.63 825.3 L892.71 813.3 L892.80 824.3 L892.88 829.3 L892.97 832.0 L893.06 810.5 L893.14 842.4 L893.23 862.4 L893.31 838.3 L893.40 848.1 L893.48 821.0 L893.57 854.1 L893.66 813.4 L893.74 815.4 L893.83 830.8 L893.91 854.1 L894.00 808.0 L894.08 815.2 L894.17 803.9 L894.25 824.2 L894.34 811.7 L894.42 814.2 L894.51 839.5 L894.60 830.5 L894.68 861.8 L894.77 823.0 L894.85 835.5 L894.94 800.4 L895.02 864.4 L895.11 816.4 L895.19 826.3 L895.28 827.7 L895.36 864.5 L895.44 827.0 L895.53 891.7 L895.61 832.9 L895.70 816.0 L895.78 846.9 L895.87 815.4 L895.95 929.5 L896.04 825.9 L896.12 816.6 L896.21 869.2 L896.29 820.6 L896.37 824.1 L896.46 821.6 L896.54 835.8 L896.63 803.4 L896.71 822.9 L896.79 814.1 L896.88 846.9 L896.96 791.4 L897.05 833.0 L897.13 818.5 L897.21 826.4 L897.30 831.0 L897.38 838.7 L897.47 813.2 L897.55 818.0 L897.63 812.3 L897.72 869.7 L897.80 813.9 L897.88 813.3 L897.97 829.6 L898.05 832.2 L898.13 854.1 L898.22 808.2 L898.30 818.1 L898.38 815.1 L898.47 832.7 L898.55 827.0 L898.63 825.3 L898.72 854.7 L898.80 836.6 L898.88 851.3 L898.97 869.1 L899.05 819.9 L899.13 864.8 L899.21 825.6 L899.30 808.3 L899.38 859.1 L899.46 812.3 L899.55 803.9 L899.63 821.1 L899.71 821.1 L899.79 873.4 L899.88 853.0 L899.96 826.4 L900.04 831.0 L900.12 850.7 L900.21 846.8 L900.29 836.9 L900.37 830.4 L900.45 813.5 L900.53 819.7 L900.62 837.3 L900.70 833.8 L900.78 846.6 L900.86 857.3 L900.94 872.1 L901.03 817.6 L901.11 811.1 L901.19 856.9 L901.27 832.9 L901.35 816.7 L901.44 838.9 L901.52 819.8 L901.60 818.9 L901.68 824.0 L901.76 830.3 L901.84 837.5 L901.93 809.9 L902.01 841.1 L902.09 834.5 L902.17 827.6 L902.25 836.7 L902.33 845.0 L902.41 800.9 L902.49 827.4 L902.58 836.7 L902.66 838.3 L902.74 834.8 L902.82 814.9 L902.90 868.4 L902.98 843.1 L903.06 816.9 L903.14 824.8 L903.22 867.8 L903.30 815.5 L903.39 823.6 L903.47 868.8 L903.55 854.4 L903.63 816.2 L903.71 838.7 L903.79 821.2 L903.87 834.3 L903.95 840.5 L904.03 810.7 L904.11 815.2 L904.19 814.7 L904.27 816.8 L904.35 803.3 L904.43 810.7 L904.51 822.1 L904.59 822.6 L904.67 806.8 L904.75 829.2 L904.83 861.1 L904.91 828.8 L904.99 819.5 L905.07 835.1 L905.15 822.5 L905.23 811.7 L905.31 824.2 L905.39 799.3 L905.47 833.0 L905.55 810.6 L905.63 819.3 L905.71 866.4 L905.79 838.2 L905.87 843.8 L905.95 830.6 L906.03 830.1 L906.11 833.8 L906.19 867.4 L906.27 811.4 L906.35 837.5 L906.43 815.6 L906.51 813.6 L906.59 841.6 L906.66 827.7 L906.74 844.1 L906.82 846.9 L906.90 826.9 L906.98 810.6 L907.06 796.6 L907.14 824.1 L907.22 833.7 L907.30 813.3 L907.38 802.9 L907.45 792.7 L907.53 808.7 L907.61 831.5 L907.69 791.9 L907.77 811.0 L907.85 812.4 L907.93 832.0 L908.01 879.4 L908.08 796.3 L908.16 804.9 L908.24 855.0 L908.32 866.5 L908.40 806.4 L908.48 814.4 L908.55 821.9 L908.63 813.6 L908.71 817.4 L908.79 819.8 L908.87 810.8 L908.94 799.7 L909.02 801.9 L909.10 806.3 L909.18 802.2 L909.26 825.6 L909.34 829.4 L909.41 810.4 L909.49 835.5 L909.57 831.0 L909.65 813.2 L909.72 819.1 L909.80 806.6 L909.88 851.8 L909.96 821.8 L910.03 798.0 L910.11 804.6 L910.19 828.1 L910.27 814.2 L910.34 829.4 L910.42 807.8 L910.50 835.1 L910.58 835.7 L910.65 801.5 L910.73 823.2 L910.81 807.0 L910.89 829.9 L910.96 836.8 L911.04 835.9 L911.12 809.5 L911.19 802.7 L911.27 828.4 L911.35 823.8 L911.43 805.9 L911.50 808.8 L911.58 825.1 L911.66 804.8 L911.73 827.9 L911.81 811.6 L911.89 812.6 L911.96 819.3 L912.04 824.0 L912.12 833.9 L912.19 799.6 L912.27 834.3 L912.35 812.1 L912.42 815.2 L912.50 830.1 L912.58 833.0 L912.65 829.2 L912.73 851.9 L912.81 812.5 L912.88 817.1 L912.96 832.4 L913.03 815.4 L913.11 811.0 L913.19 814.3 L913.26 839.8 L913.34 844.5 L913.41 836.5 L913.49 866.7 L913.57 842.3 L913.64 818.9 L913.72 819.3 L913.79 837.8 L913.87 806.4 L913.95 832.1 L914.02 809.3 L914.10 806.3 L914.17 828.4 L914.25 813.4 L914.32 861.2 L914.40 852.5 L914.48 826.9 L914.55 816.4 L914.63 812.6 L914.70 829.3 L914.78 830.1 L914.85 823.9 L914.93 840.2 L915.00 831.0 L915.08 844.5 L915.15 813.1 L915.23 810.8 L915.30 826.0 L915.38 830.0 L915.45 820.9 L915.53 838.9 L915.60 820.0 L915.68 824.1 L915.75 830.6 L915.83 842.1 L915.90 846.1 L915.98 827.0 L916.05 830.1 L916.13 864.7 L916.20 866.3 L916.28 838.2 L916.35 816.0 L916.43 831.4 L916.50 839.6 L916.58 824.7 L916.65 811.2 L916.73 886.1 L916.80 863.0 L916.88 818.6 L916.95 833.1 L917.02 840.0 L917.10 826.8 L917.17 815.4 L917.25 848.0 L917.32 849.6 L917.40 833.0 L917.47 817.4 L917.54 831.6 L917.62 818.3 L917.69 878.7 L917.77 815.4 L917.84 828.2 L917.91 850.8 L917.99 821.6 L918.06 820.2 L918.14 817.9 L918.21 823.6 L918.28 839.1 L918.36 857.2 L918.43 824.4 L918.51 824.8 L918.58 852.2 L918.65 835.6 L918.73 832.3 L918.80 822.9 L918.87 828.8 L918.95 885.5 L919.02 823.1 L919.09 830.0 L919.17 852.0 L919.24 866.1 L919.31 868.2 L919.39 839.3 L919.46 880.3 L919.53 845.4 L919.61 832.5 L919.68 839.7 L919.75 851.9 L919.83 853.1 L919.90 826.0 L919.97 829.3 L920.05 882.4 L920.12 825.2 L920.19 859.9 L920.27 836.1 L920.34 832.6 L920.41 833.0 L920.48 841.8 L920.56 905.4 L920.63 828.7 L920.70 865.1 L920.78 836.6 L920.85 830.2 L920.92 855.9 L920.99 837.0 L921.07 830.3 L921.14 839.6 L921.21 861.0 L921.28 865.0 L921.36 845.6 L921.43 814.9 L921.50 855.7 L921.57 846.5 L921.65 868.8 L921.72 879.8 L921.79 834.3 L921.86 861.9 L921.94 858.9 L922.01 831.3 L922.08 835.1 L922.15 835.3 L922.22 834.2 L922.30 835.0 L922.37 823.0 L922.44 828.6 L922.51 868.2 L922.58 835.6 L922.66 845.2 L922.73 864.3 L922.80 851.8 L922.87 828.2 L922.94 868.9 L923.01 854.9 L923.09 900.2 L923.16 849.0 L923.23 850.6 L923.30 854.9 L923.37 827.2 L923.44 844.2 L923.52 832.0 L923.59 856.6 L923.66 821.0 L923.73 837.9 L923.80 829.5 L923.87 854.0 L923.95 829.5 L924.02 855.9 L924.09 856.1 L924.16 859.5 L924.23 819.8 L924.30 869.4 L924.37 846.9 L924.44 842.7 L924.51 841.2 L924.59 812.6 L924.66 857.1 L924.73 835.7 L924.80 831.7 L924.87 826.9 L924.94 848.2 L925.01 848.0 L925.08 856.0 L925.15 821.0 L925.22 826.0 L925.30 822.1 L925.37 814.6 L925.44 824.9 L925.51 807.6 L925.58 847.6 L925.65 820.3 L925.72 811.7 L925.79 811.2 L925.86 842.9 L925.93 818.3 L926.00 828.8 L926.07 826.2 L926.14 846.6 L926.21 868.8 L926.28 822.0 L926.35 835.5 L926.42 855.8 L926.49 827.9 L926.56 856.2 L926.63 840.4 L926.70 821.0 L926.77 852.1 L926.85 831.4 L926.92 811.0 L926.99 831.7 L927.06 846.6 L927.13 828.3 L927.20 826.6 L927.27 823.7 L927.34 851.5 L927.41 834.5 L927.47 814.7 L927.54 820.9 L927.61 820.7 L927.68 866.6 L927.75 835.2 L927.82 809.7 L927.89 855.1 L927.96 802.4 L928.03 829.1 L928.10 822.2 L928.17 835.4 L928.24 821.7 L928.31 806.5 L928.38 825.2 L928.45 842.2 L928.52 839.4 L928.59 817.9 L928.66 812.3 L928.73 835.7 L928.80 839.7 L928.87 811.6 L928.94 847.7 L929.00 888.1 L929.07 819.7 L929.14 817.5 L929.21 832.3 L929.28 854.6 L929.35 809.6 L929.42 813.6 L929.49 814.5 L929.56 832.8 L929.63 808.2 L929.70 822.8 L929.76 820.7 L929.83 828.4 L929.90 805.4 L929.97 860.0 L930.04 929.5 L930.11 822.4 L930.18 835.6 L930.25 806.4 L930.31 848.2 L930.38 821.3 L930.45 832.3 L930.52 841.8 L930.59 813.0 L930.66 849.8 L930.73 806.3 L930.79 793.5 L930.86 817.9 L930.93 844.8 L931.00 844.8 L931.07 856.6 L931.14 817.6 L931.20 850.2 L931.27 819.5 L931.34 802.1 L931.41 822.9 L931.48 833.7 L931.55 813.9 L931.61 821.5 L931.68 807.4 L931.75 808.1 L931.82 813.8 L931.89 817.6 L931.95 815.7 L932.02 799.2 L932.09 787.9 L932.16 810.7 L932.23 827.7 L932.29 829.7 L932.36 806.5 L932.43 807.3 L932.50 817.8 L932.57 803.8 L932.63 821.7 L932.70 845.1 L932.77 805.0 L932.84 820.9 L932.90 828.0 L932.97 829.9 L933.04 827.5 L933.11 827.5 L933.17 808.1 L933.24 837.1 L933.31 848.9 L933.38 796.3 L933.44 853.3 L933.51 814.9 L933.58 799.0 L933.65 797.8 L933.71 833.5 L933.78 825.7 L933.85 802.3 L933.91 815.7 L933.98 823.6 L934.05 899.5 L934.12 810.8 L934.18 831.2 L934.25 807.1 L934.32 805.1 L934.38 803.3 L934.45 813.7 L934.52 822.7 L934.58 809.5 L934.65 803.4 L934.72 806.0 L934.79 799.0 L934.85 804.9 L934.92 810.1 L934.99 817.6 L935.05 804.5 L935.12 816.6 L935.19 815.0 L935.25 864.3 L935.32 816.9 L935.39 853.8 L935.45 816.3 L935.52 805.2 L935.59 821.6 L935.65 802.7 L935.72 803.9 L935.79 798.3 L935.85 827.3 L935.92 861.5 L935.98 813.7 L936.05 811.7 L936.12 814.6 L936.18 811.7 L936.25 826.7 L936.32 813.3 L936.38 803.2 L936.45 840.2 L936.51 820.8 L936.58 788.9 L936.65 838.6 L936.71 829.0 L936.78 811.8 L936.84 823.6 L936.91 848.4 L936.98 813.7 L937.04 815.0 L937.11 809.7 L937.17 820.1 L937.24 825.3 L937.31 829.5 L937.37 855.3 L937.44 802.9 L937.50 812.4 L937.57 839.0 L937.64 833.5 L937.70 821.8 L937.77 826.2 L937.83 811.4 L937.90 854.1 L937.96 820.0 L938.03 813.9 L938.09 804.8 L938.16 801.4 L938.23 844.8 L938.29 834.4 L938.36 793.9 L938.42 810.8 L938.49 817.1 L938.55 817.7 L938.62 812.4 L938.68 844.5 L938.75 811.9 L938.81 819.3 L938.88 850.5 L938.94 824.3 L939.01 817.0 L939.07 811.3 L939.14 813.4 L939.20 822.9 L939.27 833.3 L939.33 808.4 L939.40 812.8 L939.46 813.5 L939.53 812.5 L939.59 847.5 L939.66 819.7 L939.72 809.1 L939.79 811.4 L939.85 836.3 L939.92 804.0 L939.98 827.2 L940.05 793.3 L940.11 805.6 L940.18 797.8 L940.24 835.0 L940.31 803.4 L940.37 807.2 L940.44 797.6 L940.50 808.7 L940.57 829.8 L940.63 829.0 L940.69 847.2 L940.76 855.1 L940.82 820.4 L940.89 849.3 L940.95 800.2 L941.02 849.9 L941.08 815.6 L941.15 805.7 L941.21 830.9 L941.27 840.2 L941.34 813.7 L941.40 800.5 L941.47 841.9 L941.53 831.3 L941.60 822.7 L941.66 867.6 L941.72 796.2 L941.79 798.1 L941.85 802.9 L941.92 794.2 L941.98 829.2 L942.04 825.1 L942.11 802.6 L942.17 805.4 L942.24 806.4 L942.30 824.4 L942.36 827.8 L942.43 864.9 L942.49 814.3 L942.55 870.5 L942.62 817.4 L942.68 815.8 L942.75 810.4 L942.81 809.6 L942.87 868.2 L942.94 891.7 L943.00 830.7 L943.06 807.4 L943.13 807.8 L943.19 806.5 L943.25 815.1 L943.32 833.1 L943.38 800.9 L943.45 822.7 L943.51 830.1 L943.57 798.6 L943.64 819.3 L943.70 837.5 L943.76 825.2 L943.83 820.0 L943.89 846.8 L943.95 826.7 L944.02 815.8 L944.08 818.2 L944.14 858.4 L944.20 844.7 L944.27 852.5 L944.33 825.5 L944.39 808.0 L944.46 809.7 L944.52 818.4 L944.58 832.3 L944.65 793.6 L944.71 840.0 L944.77 838.9 L944.84 824.3 L944.90 794.6 L944.96 840.1 L945.02 820.5 L945.09 832.0 L945.15 827.2 L945.21 835.6 L945.27 820.6 L945.34 865.5 L945.40 864.0 L945.46 857.1 L945.53 829.9 L945.59 817.5 L945.65 820.0 L945.71 815.8 L945.78 853.0 L945.84 841.1 L945.90 840.8 L945.96 843.7 L946.03 888.1 L946.09 834.6 L946.15 818.5 L946.21 839.1 L946.28 816.4 L946.34 831.0 L946.40 812.0 L946.46 848.1 L946.53 825.9 L946.59 817.4 L946.65 857.8 L946.71 808.1 L946.77 859.5 L946.84 840.1 L946.90 812.3 L946.96 840.5 L947.02 830.3 L947.08 855.7 L947.15 831.1 L947.21 824.5 L947.27 861.0 L947.33 809.4 L947.39 842.4 L947.46 810.6 L947.52 819.0 L947.58 811.5 L947.64 851.5 L947.70 825.9 L947.77 839.5 L947.83 818.7 L947.89 840.0 L947.95 835.5 L948.01 811.2 L948.07 828.6 L948.14 839.9 L948.20 817.5 L948.26 836.2 L948.32 820.3 L948.38 824.1 L948.44 860.1 L948.51 865.3 L948.57 913.7 L948.63 826.7 L948.69 832.9 L948.75 847.0 L948.81 843.3 L948.87 828.3 L948.94 852.7 L949.00 826.3 L949.06 868.1 L949.12 829.4 L949.18 814.3 L949.24 843.4 L949.30 815.9 L949.37 839.4 L949.43 810.1 L949.49 890.1 L949.55 832.9 L949.61 843.4 L949.67 815.8 L949.73 837.7 L949.79 826.6 L949.85 821.6 L949.92 849.5 L949.98 808.8 L950.04 831.1 L950.10 813.8 L950.16 853.3 L950.22 858.6 L950.28 809.4 L950.34 831.0 L950.40 831.3 L950.46 843.4 L950.52 844.1 L950.59 826.6 L950.65 866.3 L950.71 820.2 L950.77 817.8 L950.83 850.9 L950.89 817.1 L950.95 820.6 L951.01 833.5 L951.07 827.1 L951.13 819.8 L951.19 866.5 L951.25 832.8 L951.31 849.3 L951.37 824.1 L951.43 863.6 L951.49 823.0 L951.55 862.7 L951.61 839.5 L951.68 880.4 L951.74 848.9 L951.80 840.7 L951.86 836.3 L951.92 856.5 L951.98 832.8 L952.04 817.7 L952.10 864.8 L952.16 852.2 L952.22 844.1 L952.28 847.9 L952.34 824.8 L952.40 834.2 L952.46 854.2 L952.52 877.7 L952.58 867.4 L952.64 822.1 L952.70 844.9 L952.76 838.6 L952.82 832.6 L952.88 822.8 L952.94 821.3 L953.00 835.5 L953.06 836.5 L953.12 827.6 L953.18 831.7 L953.24 839.4 L953.30 850.7 L953.36 841.2 L953.42 823.4 L953.48 862.8 L953.54 832.2 L953.60 878.6 L953.66 890.3 L953.72 822.8 L953.77 841.5 L953.83 881.9 L953.89 833.5 L953.95 840.3 L954.01 830.9 L954.07 814.6 L954.13 826.2 L954.19 822.2 L954.25 829.5 L954.31 844.0 L954.37 840.8 L954.43 875.3 L954.49 846.8 L954.55 832.5 L954.61 875.5 L954.67 844.0 L954.73 839.7 L954.79 860.3 L954.84 845.8 L954.90 832.2 L954.96 842.4 L955.02 829.7 L955.08 882.6 L955.14 827.4 L955.20 884.4 L955.26 817.7 L955.32 810.1 L955.38 839.8 L955.44 825.5 L955.49 837.8 L955.55 821.1 L955.61 857.1 L955.67 845.3 L955.73 846.1 L955.79 869.3 L955.85 902.1 L955.91 845.6 L955.97 847.6 L956.02 805.1 L956.08 815.8 L956.14 834.1 L956.20 881.9 L956.26 829.5 L956.32 840.0 L956.38 809.1 L956.44 833.5 L956.49 864.6 L956.55 840.8 L956.61 855.3 L956.67 810.2 L956.73 824.7 L956.79 823.6 L956.85 855.9 L956.90 819.4 L956.96 869.8 L957.02 827.3 L957.08 861.1 L957.14 837.2 L957.20 829.4 L957.26 880.1 L957.31 832.6 L957.37 845.9 L957.43 816.6 L957.49 855.4 L957.55 888.4 L957.61 819.5 L957.66 848.7 L957.72 827.0 L957.78 821.4 L957.84 830.7 L957.90 843.6 L957.95 874.9 L958.01 904.7 L958.07 903.8 L958.13 841.5 L958.19 843.0 L958.24 821.8 L958.30 847.0 L958.36 838.0 L958.42 830.1 L958.48 863.1 L958.53 825.9 L958.59 820.7 L958.65 821.5 L958.71 821.0 L958.77 839.5 L958.82 852.0 L958.88 821.4 L958.94 835.6 L959.00 838.7 L959.05 838.0 L959.11 831.8 L959.17 837.2 L959.23 809.2 L959.29 814.8 L959.34 832.1 L959.40 824.6 L959.46 848.4 L959.52 824.8 L959.57 853.6 L959.63 824.7 L959.69 817.2 L959.75 834.1 L959.80 830.5 L959.86 828.4 L959.92 848.7 L959.98 823.7 L960.03 842.8 L960.09 854.3 L960.15 832.8 L960.21 834.9 L960.26 866.1 L960.32 839.3 L960.38 821.6 L960.44 815.1 L960.49 816.0 L960.55 827.8 L960.61 816.4 L960.66 841.3 L960.72 831.4 L960.78 826.8 L960.84 834.9 L960.89 868.6 L960.95 824.1 L961.01 819.9 L961.06 826.5 L961.12 827.2 L961.18 863.1 L961.23 844.2 L961.29 831.2 L961.35 820.3 L961.41 812.4 L961.46 818.0 L961.52 854.8 L961.58 840.8 L961.63 819.7 L961.69 839.6 L961.75 813.4 L961.80 834.1 L961.86 827.2 L961.92 816.5 L961.97 846.0 L962.03 844.3 L962.09 834.1 L962.14 820.0 L962.20 841.5 L962.26 830.9 L962.31 841.0 L962.37 815.6 L962.43 861.2 L962.48 803.1 L962.54 822.2 L962.60 829.3 L962.65 821.1 L962.71 815.1 L962.77 842.2 L962.82 901.7 L962.88 826.6 L962.94 823.8 L962.99 841.2 L963.05 821.9 L963.10 829.1 L963.16 842.0 L963.22 830.2 L963.27 818.7 L963.33 813.5 L963.39 834.8 L963.44 895.2 L963.50 863.6 L963.56 815.4 L963.61 832.9 L963.67 832.3 L963.72 820.3 L963.78 840.7 L963.84 832.5 L963.89 849.8 L963.95 824.3 L964.00 866.2 L964.06 850.2 L964.12 831.4 L964.17 817.4 L964.23 831.8 L964.28 816.6 L964.34 841.2 L964.40 841.8 L964.45 835.8 L964.51 881.1 L964.56 810.6 L964.62 842.8 L964.68 848.8 L964.73 815.7 L964.79 825.1 L964.84 811.4 L964.90 835.9 L964.95 843.2 L965.01 826.1 L965.07 841.6 L965.12 826.8 L965.18 842.5 L965.23 823.2 L965.29 882.1 L965.34 829.6 L965.40 801.7 L965.45 814.1 L965.51 843.3 L965.57 854.7 L965.62 838.3 L965.68 817.7 L965.73 855.5 L965.79 842.6 L965.84 815.5 L965.90 827.2 L965.95 840.0 L966.01 801.6 L966.06 809.9 L966.12 826.0 L966.18 855.7 L966.23 907.9 L966.29 824.6 L966.34 860.6 L966.40 847.2 L966.45 854.5 L966.51 835.7 L966.56 876.8 L966.62 838.4 L966.67 868.9 L966.73 834.6 L966.78 819.4 L966.84 832.5 L966.89 831.0 L966.95 825.2 L967.00 826.6 L967.06 832.1 L967.11 835.5 L967.17 820.4 L967.22 822.7 L967.28 831.7 L967.33 831.8 L967.39 828.3 L967.44 839.2 L967.50 818.7 L967.55 832.9 L967.61 822.5 L967.66 845.6 L967.72 841.3 L967.77 846.4 L967.83 832.2 L967.88 821.4 L967.94 863.2 L967.99 831.9 L968.05 826.4 L968.10 823.0 L968.16 827.4 L968.21 841.5 L968.26 849.3 L968.32 830.6 L968.37 842.8 L968.43 819.7 L968.48 829.3 L968.54 825.6 L968.59 823.5 L968.65 825.6 L968.70 844.3 L968.76 842.9 L968.81 819.3 L968.86 820.5 L968.92 846.4 L968.97 838.3 L969.03 839.4 L969.08 837.3 L969.14 840.4 L969.19 822.0 L969.24 810.9 L969.30 825.5 L969.35 807.9 L969.41 872.8 L969.46 832.1 L969.52 839.0 L969.57 874.7 L969.62 847.8 L969.68 820.0 L969.73 824.4 L969.79 814.1 L969.84 847.0 L969.90 842.8 L969.95 830.4 L970.00 825.6 L970.06 821.6 L970.11 830.3 L970.17 841.2 L970.22 857.4 L970.27 851.7 L970.33 853.8 L970.38 828.3 L970.44 827.6 L970.49 823.3 L970.54 878.3 L970.60 817.8 L970.65 816.5 L970.70 821.9 L970.76 861.8 L970.81 852.0 L970.87 823.9 L970.92 851.8 L970.97 856.6 L971.03 827.7 L971.08 818.0 L971.13 844.9 L971.19 825.5 L971.24 814.3 L971.30 858.3 L971.35 828.1 L971.40 826.4 L971.46 834.7 L971.51 820.7 L971.56 805.4 L971.62 826.0 L971.67 825.6 L971.72 803.3 L971.78 825.3 L971.83 843.9 L971.88 823.7 L971.94 838.9 L971.99 836.0 L972.04 817.6 L972.10 805.3 L972.15 838.5 L972.20 835.3 L972.26 822.0 L972.31 818.1 L972.36 851.9 L972.42 859.0 L972.47 819.5 L972.52 834.0 L972.58 833.5 L972.63 823.1 L972.68 807.5 L972.74 823.2 L972.79 836.8 L972.84 834.7 L972.90 830.5 L972.95 814.0 L973.00 818.5 L973.06 822.5 L973.11 826.7 L973.16 824.6 L973.22 857.7 L973.27 813.6 L973.32 886.9 L973.37 819.5 L973.43 851.7 L973.48 819.7 L973.53 833.8 L973.59 825.0 L973.64 807.4 L973.69 846.1 L973.74 847.2 L973.80 820.6 L973.85 844.5 L973.90 829.0 L973.96 887.4 L974.01 809.0 L974.06 825.0 L974.11 818.8 L974.17 835.4 L974.22 844.5 L974.27 850.0 L974.33 831.8 L974.38 825.2 L974.43 846.1 L974.48 812.6 L974.54 820.1 L974.59 842.6 L974.64 827.2 L974.69 896.2 L974.75 811.7 L974.80 828.1 L974.85 818.0 L974.90 798.0 L974.96 811.8 L975.01 811.6 L975.06 824.3 L975.11 826.8 L975.17 829.9 L975.22 821.1 L975.27 839.2 L975.32 830.2 L975.38 882.1 L975.43 815.8 L975.48 829.9 L975.53 829.2 L975.58 824.3 L975.64 851.6 L975.69 817.6 L975.74 853.6 L975.79 823.7 L975.85 822.8 L975.90 834.5 L975.95 832.1 L976.00 820.7 L976.05 810.9 L976.11 868.7 L976.16 824.0 L976.21 812.7 L976.26 836.5 L976.31 830.6 L976.37 822.3 L976.42 822.3 L976.47 849.7 L976.52 822.7 L976.57 825.8 L976.63 869.1 L976.68 823.5 L976.73 825.2 L976.78 815.1 L976.83 836.6 L976.89 836.7 L976.94 826.9 L976.99 825.2 L977.04 818.3 L977.09 844.7 L977.14 827.2 L977.20 848.2 L977.25 823.9 L977.30 840.6 L977.35 805.3 L977.40 817.6 L977.46 870.2 L977.51 837.5 L977.56 837.2 L977.61 828.8 L977.66 827.7 L977.71 816.5 L977.77 815.4 L977.82 835.5 L977.87 838.1 L977.92 819.1 L977.97 835.4 L978.02 813.5 L978.07 833.8 L978.13 815.2 L978.18 829.1 L978.23 821.3 L978.28 830.9 L978.33 813.3 L978.38 828.0 L978.43 833.9 L978.49 813.3 L978.54 821.0 L978.59 837.0 L978.64 830.6 L978.69 833.8 L978.74 843.5 L978.79 831.7 L978.84 817.3 L978.90 826.2 L978.95 847.6 L979.00 831.4 L979.05 841.5 L979.10 823.1 L979.15 826.5 L979.20 873.8 L979.25 846.9 L979.31 835.7 L979.36 811.6 L979.41 833.6 L979.46 805.6 L979.51 862.3 L979.56 875.0 L979.61 840.0 L979.66 819.4 L979.71 849.3 L979.76 815.5 L979.82 847.6 L979.87 829.7 L979.92 802.9 L979.97 854.7 L980.02 826.4 L980.07 847.9 L980.12 837.9 L980.17 830.3 L980.22 851.3 L980.27 816.9 L980.32 856.0 L980.38 822.5 L980.43 804.9 L980.48 822.5 L980.53 809.2 L980.58 809.7 L980.63 834.7 L980.68 812.9 L980.73 815.0 L980.78 820.8 L980.83 820.3 L980.88 859.9 L980.93 857.3 L980.98 852.5 L981.03 890.3 L981.08 826.8 L981.14 845.3 L981.19 820.5 L981.24 861.2 L981.29 846.6 L981.34 840.9 L981.39 818.3 L981.44 811.4 L981.49 861.0 L981.54 831.6 L981.59 834.4 L981.64 851.7 L981.69 814.5 L981.74 839.0 L981.79 828.0 L981.84 844.8 L981.89 827.7 L981.94 817.1 L981.99 869.3 L982.04 820.8 L982.09 842.0 L982.14 848.7 L982.19 819.4 L982.24 838.9 L982.29 825.4 L982.34 818.5 L982.39 818.2 L982.44 868.7 L982.49 824.4 L982.54 830.1 L982.59 829.8 L982.64 805.7 L982.69 842.7 L982.74 842.2 L982.79 853.8 L982.84 824.1 L982.89 818.0 L982.95 823.7 L982.99 841.4 L983.04 837.2 L983.09 826.1 L983.14 830.9 L983.19 815.5 L983.24 860.4 L983.29 828.8 L983.34 830.3 L983.39 845.4 L983.44 817.7 L983.49 841.0 L983.54 824.2 L983.59 847.5 L983.64 812.3 L983.69 821.1 L983.74 836.3 L983.79 829.4 L983.84 825.2 L983.89 833.6 L983.94 818.7 L983.99 827.6 L984.04 798.3 L984.09 846.5 L984.14 820.4 L984.19 849.4 L984.24 832.5 L984.29 834.8 L984.34 836.0 L984.39 814.4 L984.44 845.0 L984.49 822.0 L984.54 852.8 L984.59 845.7 L984.64 838.8 L984.69 848.1 L984.74 827.9 L984.78 838.6 L984.83 869.1 L984.88 817.8 L984.93 813.1 L984.98 826.9 L985.03 830.9 L985.08 815.9 L985.13 819.3 L985.18 853.4 L985.23 826.1 L985.28 816.0 L985.33 817.6 L985.38 834.0 L985.43 818.0 L985.48 829.7 L985.52 832.3 L985.57 828.3 L985.62 830.9 L985.67 850.4 L985.72 805.0 L985.77 863.5 L985.82 818.6 L985.87 808.4 L985.92 844.8 L985.97 833.9 L986.02 832.5 L986.07 819.5 L986.11 845.9 L986.16 823.2 L986.21 842.2 L986.26 820.0 L986.31 834.1 L986.36 837.8 L986.41 825.8 L986.46 830.2 L986.51 811.2 L986.56 837.6 L986.60 840.2 L986.65 816.7 L986.70 833.3 L986.75 842.8 L986.80 813.8 L986.85 851.0 L986.90 854.5 L986.95 810.0 L987.00 821.1 L987.04 812.8 L987.09 821.3 L987.14 812.9 L987.19 830.8 L987.24 821.2 L987.29 823.3 L987.34 829.7 L987.38 826.2 L987.43 846.9 L987.48 842.3 L987.53 814.8 L987.58 820.2 L987.63 803.4 L987.68 824.6 L987.73 814.5 L987.77 840.9 L987.82 846.4 L987.87 905.5 L987.92 819.7 L987.97 808.9 L988.02 844.8 L988.07 828.0 L988.11 864.5 L988.16 827.2 L988.21 824.1 L988.26 812.3 L988.31 868.8 L988.36 832.2 L988.40 829.2 L988.45 829.1 L988.50 845.7 L988.55 850.8 L988.60 830.7 L988.65 818.5 L988.69 828.0 L988.74 857.8 L988.79 828.1 L988.84 839.3 L988.89 834.4 L988.94 830.3 L988.98 835.1 L989.03 821.6 L989.08 834.4 L989.13 854.6 L989.18 813.2 L989.22 826.7 L989.27 856.5 L989.32 882.0 L989.37 805.5 L989.42 837.9 L989.47 838.2 L989.51 852.6 L989.56 831.1 L989.61 816.8 L989.66 824.4 L989.71 842.9 L989.75 843.9 L989.80 820.6 L989.85 839.2 L989.90 840.0 L989.95 840.1 L989.99 808.1 L990.04 830.6 L990.09 826.0 L990.14 837.4 L990.18 826.6 L990.23 817.5 L990.28 841.2 L990.33 824.8 L990.38 849.1 L990.42 825.7 L990.47 835.5 L990.52 850.7 L990.57 817.2 L990.61 845.2 L990.66 814.1 L990.71 868.0 L990.76 809.7 L990.81 845.0 L990.85 828.7 L990.90 820.9 L990.95 829.9 L991.00 834.3 L991.04 830.8 L991.09 818.3 L991.14 835.4 L991.19 826.5 L991.23 878.5 L991.28 829.9 L991.33 832.0 L991.38 823.7 L991.42 879.5 L991.47 827.7 L991.52 841.6 L991.57 854.3 L991.61 830.7 L991.66 848.2 L991.71 826.3 L991.76 818.4 L991.80 813.3 L991.85 833.2 L991.90 859.1 L991.95 823.4 L991.99 833.1 L992.04 849.2 L992.09 826.7 L992.14 821.3 L992.18 836.6 L992.23 832.8 L992.28 870.6 L992.32 862.9 L992.37 825.5 L992.42 838.7 L992.47 832.8 L992.51 813.2 L992.56 834.0 L992.61 866.2 L992.66 828.5 L992.70 840.2 L992.75 846.8 L992.80 816.5 L992.84 868.2 L992.89 819.9 L992.94 828.8 L992.98 847.4 L993.03 811.7 L993.08 832.0 L993.13 821.2 L993.17 836.0 L993.22 811.2 L993.27 822.7 L993.31 826.1 L993.36 818.7 L993.41 819.4 L993.45 825.0 L993.50 838.3 L993.55 822.3 L993.60 855.9 L993.64 834.3 L993.69 827.8 L993.74 827.4 L993.78 857.9 L993.83 816.4 L993.88 850.2 L993.92 820.5 L993.97 874.3 L994.02 834.5 L994.06 842.6 L994.11 860.8 L994.16 821.0 L994.20 818.5 L994.25 847.8 L994.30 842.4 L994.34 849.5 L994.39 829.8 L994.44 838.6 L994.48 826.0 L994.53 836.3 L994.58 830.2 L994.62 842.8 L994.67 831.0 L994.72 830.1 L994.76 845.7 L994.81 820.9 L994.86 855.8 L994.90 839.2 L994.95 828.5 L995.00 823.0 L995.04 839.9 L995.09 839.8 L995.14 850.5 L995.18 834.7 L995.23 836.2 L995.28 866.1 L995.32 830.9 L995.37 892.0 L995.41 866.3 L995.46 901.8 L995.51 876.0 L995.55 830.5 L995.60 857.9 L995.65 845.4 L995.69 828.4 L995.74 922.1 L995.78 847.3 L995.83 857.8 L995.88 843.2 L995.92 822.0 L995.97 863.3 L996.02 827.5 L996.06 831.2 L996.11 846.2 L996.15 828.6 L996.20 839.6 L996.25 851.6 L996.29 823.6 L996.34 848.7 L996.39 824.2 L996.43 840.4 L996.48 848.3 L996.52 850.4 L996.57 819.7 L996.62 829.0 L996.66 882.8 L996.71 837.4 L996.75 838.8 L996.80 836.8 L996.85 851.4 L996.89 854.1 L996.94 849.0 L996.98 838.2 L997.03 845.2 L997.08 842.9 L997.12 829.6 L997.17 879.9 L997.21 885.4 L997.26 857.2 L997.30 908.2 L997.35 841.2 L997.40 862.6 L997.44 832.3 L997.49 855.1 L997.53 853.4 L997.58 877.6 L997.63 862.3 L997.67 867.5 L997.72 833.8 L997.76 858.6 L997.81 842.2 L997.85 835.8 L997.90 838.1 L997.95 859.7 L997.99 863.7 L998.04 864.0 L998.08 851.5 L998.13 830.1 L998.17 829.4 L998.22 846.7 L998.27 832.1 L998.31 837.3 L998.36 826.7 L998.40 829.7 L998.45 854.7 L998.49 833.0 L998.54 865.0 L998.58 837.4 L998.63 865.2 L998.67 836.5 L998.72 835.1 L998.77 840.2 L998.81 817.7 L998.86 842.0 L998.90 839.8 L998.95 818.0 L998.99 867.1 L999.04 839.8 L999.08 809.9 L999.13 886.2 L999.17 834.1 L999.22 835.2 L999.27 820.8 L999.31 827.8 L999.36 855.5 L999.40 848.9 L999.45 845.6 L999.49 835.2 L999.54 837.0 L999.58 890.9 L999.63 840.5 L999.67 906.3 L999.72 871.1 L999.76 829.8 L999.81 866.6 L999.85 820.8 L999.90 856.0 L999.94 863.0 L999.99 855.1 L1000.03 847.9 L1000.08 863.3 L1000.12 831.4 L1000.17 847.5 L1000.21 836.4 L1000.26 841.7 L1000.30 833.2 L1000.35 855.9 L1000.39 849.0 L1000.44 860.6 L1000.48 851.6 L1000.53 850.2 L1000.57 876.9 L1000.62 863.3 L1000.66 848.8 L1000.71 838.9 L1000.75 878.1 L1000.80 840.7 L1000.84 828.6 L1000.89 839.2 L1000.93 855.9 L1000.98 878.9 L1001.02 852.6 L1001.07 853.5 L1001.11 880.3 L1001.16 860.7 L1001.20 843.7 L1001.25 844.4 L1001.29 859.4 L1001.34 838.7 L1001.38 829.2 L1001.43 851.4 L1001.47 863.2 L1001.52 835.9 L1001.56 854.7 L1001.60 872.2 L1001.65 830.2 L1001.69 830.7 L1001.74 845.7 L1001.78 839.4 L1001.83 883.6 L1001.87 923.6 L1001.92 843.8 L1001.96 861.9 L1002.01 852.0 L1002.05 832.6 L1002.10 892.3 L1002.14 832.7 L1002.18 827.1 L1002.23 844.2 L1002.27 820.6 L1002.32 845.3 L1002.36 842.6 L1002.41 885.2 L1002.45 842.6 L1002.50 867.1 L1002.54 861.0 L1002.58 849.9 L1002.63 835.6 L1002.67 838.4 L1002.72 845.8 L1002.76 841.9 L1002.81 852.9 L1002.85 846.4 L1002.90 839.1 L1002.94 851.0 L1002.98 923.0 L1003.03 834.1 L1003.07 839.6 L1003.12 819.4 L1003.16 828.4 L1003.21 825.5 L1003.25 843.1 L1003.29 865.9 L1003.34 855.8 L1003.38 889.8 L1003.43 866.0 L1003.47 850.1 L1003.52 849.8 L1003.56 819.6 L1003.60 841.6 L1003.65 836.8 L1003.69 851.7 L1003.74 826.5 L1003.78 848.1 L1003.82 841.3 L1003.87 846.0 L1003.91 842.5 L1003.96 829.1 L1004.00 857.9 L1004.04 862.8 L1004.09 850.7 L1004.13 829.9 L1004.18 850.8 L1004.22 869.8 L1004.26 903.5 L1004.31 859.7 L1004.35 824.8 L1004.40 870.7 L1004.44 854.1 L1004.48 837.5 L1004.53 877.2 L1004.57 865.1 L1004.62 873.0 L1004.66 836.3 L1004.70 849.8 L1004.75 841.6 L1004.79 838.3 L1004.83 860.0 L1004.88 851.7 L1004.92 839.8 L1004.97 848.4 L1005.01 878.9 L1005.05 849.4 L1005.10 876.1 L1005.14 849.4 L1005.19 911.6 L1005.23 822.9 L1005.27 844.9 L1005.32 848.8 L1005.36 857.8 L1005.40 891.3 L1005.45 852.1 L1005.49 845.7 L1005.53 852.7 L1005.58 848.0 L1005.62 856.5 L1005.67 883.5 L1005.71 820.3 L1005.75 839.4 L1005.80 870.7 L1005.84 826.3 L1005.88 862.3 L1005.93 823.3 L1005.97 853.5 L1006.01 863.1 L1006.06 836.1 L1006.10 841.9 L1006.14 835.6 L1006.19 856.6 L1006.23 847.9 L1006.27 851.4 L1006.32 839.7 L1006.36 850.5 L1006.40 885.9 L1006.45 861.6 L1006.49 885.0 L1006.54 836.6 L1006.58 847.4 L1006.62 842.2 L1006.67 840.6 L1006.71 863.5 L1006.75 833.4 L1006.80 849.3 L1006.84 861.2 L1006.88 880.7 L1006.92 821.5 L1006.97 837.6 L1007.01 846.5 L1007.05 881.0 L1007.10 832.9 L1007.14 866.9 L1007.18 842.7 L1007.23 848.9 L1007.27 879.1 L1007.31 826.9 L1007.36 840.1 L1007.40 832.6 L1007.44 831.4 L1007.49 839.0 L1007.53 856.6 L1007.57 850.4 L1007.62 830.8 L1007.66 863.5 L1007.70 847.2 L1007.75 832.0 L1007.79 865.1 L1007.83 865.1 L1007.87 835.5 L1007.92 881.9 L1007.96 864.3 L1008.00 836.0 L1008.05 813.7 L1008.09 869.9 L1008.13 865.7 L1008.18 829.4 L1008.22 860.9 L1008.26 861.4 L1008.30 853.1 L1008.35 866.3 L1008.39 902.3 L1008.43 840.1 L1008.48 866.5 L1008.52 877.9 L1008.56 839.6 L1008.60 855.8 L1008.65 855.8 L1008.69 868.0 L1008.73 850.0 L1008.78 838.1 L1008.82 837.1 L1008.86 848.9 L1008.90 831.8 L1008.95 869.2 L1008.99 872.9 L1009.03 836.8 L1009.07 856.6 L1009.12 855.3 L1009.16 831.0 L1009.20 861.9 L1009.25 861.0 L1009.29 839.4 L1009.33 829.7 L1009.37 838.4 L1009.42 861.4 L1009.46 845.8 L1009.50 864.9 L1009.54 833.1 L1009.59 830.2 L1009.63 841.2 L1009.67 871.7 L1009.71 833.2 L1009.76 828.0 L1009.80 860.2 L1009.84 829.3 L1009.88 855.1 L1009.93 828.8 L1009.97 837.1 L1010.01 854.9 L1010.05 871.0 L1010.10 843.6 L1010.14 845.2 L1010.18 824.0 L1010.22 840.9 L1010.27 836.9 L1010.31 862.9 L1010.35 857.8 L1010.39 862.5 L1010.44 848.7 L1010.48 856.9 L1010.52 831.6 L1010.56 842.7 L1010.61 839.1 L1010.65 838.7 L1010.69 859.4 L1010.73 835.8 L1010.77 840.4 L1010.82 838.7 L1010.86 870.0 L1010.90 853.7 L1010.94 846.6 L1010.99 842.6 L1011.03 878.4 L1011.07 882.3 L1011.11 845.4 L1011.15 850.3 L1011.20 869.8 L1011.24 837.7 L1011.28 837.8 L1011.32 830.3 L1011.37 847.6 L1011.41 861.5 L1011.45 833.2 L1011.49 844.7 L1011.53 909.8 L1011.58 846.7 L1011.62 842.8 L1011.66 867.5 L1011.70 873.7 L1011.74 842.6 L1011.79 831.5 L1011.83 853.8 L1011.87 859.7 L1011.91 878.9 L1011.95 855.0 L1012.00 839.9 L1012.04 848.2 L1012.08 839.1 L1012.12 845.4 L1012.16 846.3 L1012.21 876.9 L1012.25 875.9 L1012.29 879.6 L1012.33 846.7 L1012.37 890.4 L1012.41 832.5 L1012.46 878.6 L1012.50 854.0 L1012.54 871.2 L1012.58 844.1 L1012.62 910.4 L1012.67 823.4 L1012.71 868.5 L1012.75 865.8 L1012.79 842.6 L1012.83 866.6 L1012.87 836.1 L1012.92 860.6 L1012.96 846.4 L1013.00 844.1 L1013.04 835.4 L1013.08 864.2 L1013.13 859.3 L1013.17 829.6 L1013.21 897.6 L1013.25 836.5 L1013.29 842.7 L1013.33 844.3 L1013.37 851.1 L1013.42 873.7 L1013.46 884.2 L1013.50 853.8 L1013.54 842.4 L1013.58 830.9 L1013.62 828.2 L1013.67 848.6 L1013.71 851.5 L1013.75 845.7 L1013.79 901.0 L1013.83 844.3 L1013.87 841.9 L1013.92 844.5 L1013.96 834.4 L1014.00 882.7 L1014.04 851.9 L1014.08 849.7 L1014.12 844.9 L1014.16 837.9 L1014.21 840.5 L1014.25 847.6 L1014.29 845.7 L1014.33 898.7 L1014.37 850.7 L1014.41 836.0 L1014.45 827.1 L1014.49 833.8 L1014.54 841.8 L1014.58 863.0 L1014.62 873.7 L1014.66 837.4 L1014.70 862.9 L1014.74 845.6 L1014.78 849.6 L1014.83 849.4 L1014.87 826.0 L1014.91 828.2 L1014.95 855.8 L1014.99 857.0 L1015.03 843.2 L1015.07 878.6 L1015.11 866.2 L1015.16 840.1 L1015.20 828.3 L1015.24 850.4 L1015.28 855.2 L1015.32 836.9 L1015.36 826.2 L1015.40 847.6 L1015.44 825.1 L1015.48 860.0 L1015.53 853.8 L1015.57 839.3 L1015.61 845.9 L1015.65 837.4 L1015.69 835.3 L1015.73 835.1 L1015.77 865.9 L1015.81 846.2 L1015.85 858.7 L1015.89 842.1 L1015.94 865.2 L1015.98 852.4 L1016.02 855.3 L1016.06 843.9 L1016.10 850.9 L1016.14 835.6 L1016.18 895.5 L1016.22 856.3 L1016.26 849.6 L1016.30 854.5 L1016.34 830.8 L1016.39 841.5 L1016.43 837.3 L1016.47 868.4 L1016.51 821.4 L1016.55 845.8 L1016.59 871.1 L1016.63 863.0 L1016.67 858.7 L1016.71 840.0 L1016.75 837.1 L1016.79 857.7 L1016.83 839.7 L1016.88 858.8 L1016.92 841.7 L1016.96 861.2 L1017.00 850.8 L1017.04 865.4 L1017.08 903.7 L1017.12 842.7 L1017.16 904.6 L1017.20 820.1 L1017.24 871.6 L1017.28 823.9 L1017.32 849.4 L1017.36 842.9 L1017.40 861.5 L1017.45 839.9 L1017.49 835.4 L1017.53 862.4 L1017.57 849.4 L1017.61 860.3 L1017.65 846.7 L1017.69 824.5 L1017.73 861.3 L1017.77 835.7 L1017.81 845.9 L1017.85 812.5 L1017.89 837.3 L1017.93 854.7 L1017.97 860.6 L1018.01 853.1 L1018.05 844.5 L1018.09 858.4 L1018.13 854.7 L1018.17 834.8 L1018.21 848.2 L1018.26 851.0 L1018.30 858.0 L1018.34 834.3 L1018.38 839.0 L1018.42 840.3 L1018.46 828.9 L1018.50 840.4 L1018.54 857.9 L1018.58 849.8 L1018.62 832.9 L1018.66 857.9 L1018.70 829.9 L1018.74 859.1 L1018.78 831.6 L1018.82 828.6 L1018.86 836.2 L1018.90 846.8 L1018.94 836.9 L1018.98 871.1 L1019.02 880.7 L1019.06 837.4 L1019.10 858.8 L1019.14 855.4 L1019.18 848.6 L1019.22 836.1 L1019.26 883.5 L1019.30 885.7 L1019.34 819.3 L1019.38 839.0 L1019.42 838.6 L1019.46 833.4 L1019.50 842.9 L1019.54 872.7 L1019.58 821.2 L1019.62 865.2 L1019.66 837.9 L1019.70 819.1 L1019.74 872.8 L1019.78 836.3 L1019.82 833.8 L1019.86 829.0 L1019.90 840.0 L1019.94 829.1 L1019.98 832.2 L1020.02 835.2 L1020.06 848.7 L1020.10 843.0 L1020.14 837.4 L1020.18 846.3 L1020.22 859.6 L1020.26 856.2 L1020.30 838.8 L1020.34 875.4 L1020.38 860.7 L1020.42 847.6 L1020.46 843.9 L1020.50 838.1 L1020.54 829.4 L1020.58 870.1 L1020.62 849.6 L1020.66 827.3 L1020.70 876.5 L1020.74 870.2 L1020.78 821.7 L1020.82 854.3 L1020.86 834.1 L1020.90 846.1 L1020.94 864.0 L1020.98 838.5 L1021.02 844.4 L1021.06 852.2 L1021.10 831.9 L1021.14 850.1 L1021.18 841.3 L1021.22 897.6 L1021.26 831.5 L1021.30 854.6 L1021.34 822.1 L1021.38 835.2 L1021.42 827.8 L1021.46 829.5 L1021.50 845.3 L1021.54 830.7 L1021.58 860.1 L1021.62 826.4 L1021.66 849.5 L1021.69 866.2 L1021.73 828.1 L1021.77 832.5 L1021.81 857.6 L1021.85 842.6 L1021.89 877.0 L1021.93 837.3 L1021.97 839.6 L1022.01 883.9 L1022.05 837.4 L1022.09 887.2 L1022.13 869.6 L1022.17 831.4 L1022.21 845.5 L1022.25 878.9 L1022.29 827.1 L1022.33 864.4 L1022.37 857.9 L1022.41 856.1 L1022.45 847.8 L1022.48 825.9 L1022.52 883.8 L1022.56 826.0 L1022.60 858.4 L1022.64 854.2 L1022.68 835.9 L1022.72 851.9 L1022.76 839.5 L1022.80 855.9 L1022.84 821.2 L1022.88 876.5 L1022.92 838.3 L1022.96 859.7 L1023.00 841.8 L1023.04 860.4 L1023.07 834.9 L1023.11 844.8 L1023.15 818.6 L1023.19 842.3 L1023.23 823.9 L1023.27 864.7 L1023.31 851.0 L1023.35 839.6 L1023.39 890.2 L1023.43 879.4 L1023.47 882.4 L1023.51 824.0 L1023.55 852.4 L1023.58 853.8 L1023.62 847.1 L1023.66 816.5 L1023.70 873.8 L1023.74 839.8 L1023.78 846.5 L1023.82 859.9 L1023.86 833.2 L1023.90 818.6 L1023.94 873.5 L1023.98 833.0 L1024.01 820.0 L1024.05 826.8 L1024.09 913.0 L1024.13 854.1 L1024.17 830.2 L1024.21 827.2 L1024.25 868.9 L1024.29 849.6 L1024.33 845.5 L1024.37 826.3 L1024.40 838.3 L1024.44 878.5 L1024.48 811.2 L1024.52 838.4 L1024.56 821.1 L1024.60 924.7 L1024.64 824.5 L1024.68 880.5 L1024.72 861.7 L1024.75 853.1 L1024.79 819.5 L1024.83 850.9 L1024.87 841.2 L1024.91 841.1 L1024.95 826.6 L1024.99 841.9 L1025.03 857.9 L1025.06 825.7 L1025.10 865.3 L1025.14 838.0 L1025.18 831.8 L1025.22 830.7 L1025.26 839.5 L1025.30 847.9 L1025.34 844.1 L1025.37 866.9 L1025.41 841.5 L1025.45 841.5 L1025.49 900.8 L1025.53 829.4 L1025.57 815.1 L1025.61 834.0 L1025.65 833.4 L1025.68 824.8 L1025.72 837.5 L1025.76 817.9 L1025.80 871.6 L1025.84 840.0 L1025.88 865.0 L1025.92 850.1 L1025.95 852.0 L1025.99 853.9 L1026.03 832.6 L1026.07 851.9 L1026.11 828.5 L1026.15 842.8 L1026.19 844.6 L1026.22 854.9 L1026.26 826.6 L1026.30 834.1 L1026.34 858.8 L1026.38 857.1 L1026.42 890.0 L1026.46 823.9 L1026.49 828.4 L1026.53 823.2 L1026.57 851.2 L1026.61 852.5 L1026.65 846.8 L1026.69 854.9 L1026.72 840.7 L1026.76 842.7 L1026.80 870.8 L1026.84 846.7 L1026.88 847.1 L1026.92 843.7 L1026.95 839.6 L1026.99 853.0 L1027.03 842.9 L1027.07 824.0 L1027.11 836.7 L1027.15 836.5 L1027.18 836.9 L1027.22 842.2 L1027.26 834.0 L1027.30 835.1 L1027.34 836.5 L1027.38 834.3 L1027.41 885.7 L1027.45 821.4 L1027.49 813.7 L1027.53 850.3 L1027.57 835.1 L1027.61 837.2 L1027.64 843.3 L1027.68 833.9 L1027.72 828.7 L1027.76 813.1 L1027.80 862.9 L1027.83 873.9 L1027.87 830.5 L1027.91 837.6 L1027.95 832.0 L1027.99 818.5 L1028.02 865.2 L1028.06 858.6 L1028.10 828.5 L1028.14 829.0 L1028.18 848.4 L1028.22 855.0 L1028.25 837.5 L1028.29 834.2 L1028.33 828.0 L1028.37 855.0 L1028.41 861.2 L1028.44 860.5 L1028.48 822.1 L1028.52 842.7 L1028.56 894.2 L1028.60 849.0 L1028.63 836.8 L1028.67 823.6 L1028.71 818.2 L1028.75 850.0 L1028.79 818.8 L1028.82 855.5 L1028.86 846.0 L1028.90 837.2 L1028.94 864.3 L1028.97 871.5 L1029.01 843.4 L1029.05 820.7 L1029.09 842.0 L1029.13 834.9 L1029.16 828.0 L1029.20 870.5 L1029.24 849.5 L1029.28 821.9 L1029.32 827.0 L1029.35 831.6 L1029.39 841.1 L1029.43 830.8 L1029.47 835.4 L1029.50 855.3 L1029.54 824.7 L1029.58 848.6 L1029.62 830.9 L1029.66 873.9 L1029.69 875.9 L1029.73 830.7 L1029.77 842.3 L1029.81 820.8 L1029.84 833.9 L1029.88 843.0 L1029.92 843.8 L1029.96 831.1 L1029.99 814.4 L1030.03 821.4 L1030.07 840.0 L1030.11 823.8 L1030.14 829.5 L1030.18 842.6 L1030.22 864.6 L1030.26 837.8 L1030.30 827.3 L1030.33 840.9 L1030.37 828.1 L1030.41 852.1 L1030.45 822.8 L1030.48 827.5 L1030.52 834.5 L1030.56 865.6 L1030.60 823.1 L1030.63 824.3 L1030.67 821.3 L1030.71 825.2 L1030.75 830.1 L1030.78 832.5 L1030.82 850.2 L1030.86 832.8 L1030.90 835.7 L1030.93 832.5 L1030.97 851.1 L1031.01 864.4 L1031.05 833.5 L1031.08 867.5 L1031.12 826.5 L1031.16 886.2 L1031.19 837.5 L1031.23 845.0 L1031.27 831.6 L1031.31 827.2 L1031.34 821.0 L1031.38 861.5 L1031.42 830.6 L1031.46 845.8 L1031.49 834.6 L1031.53 837.3 L1031.57 824.3 L1031.61 822.9 L1031.64 829.5 L1031.68 844.7 L1031.72 837.9 L1031.75 804.6 L1031.79 846.3 L1031.83 833.2 L1031.87 816.4 L1031.90 826.3 L1031.94 824.2 L1031.98 854.2 L1032.02 838.0 L1032.05 828.8 L1032.09 825.6 L1032.13 827.4 L1032.16 826.9 L1032.20 829.5 L1032.24 851.3 L1032.28 851.1 L1032.31 845.1 L1032.35 860.7 L1032.39 842.6 L1032.42 818.9 L1032.46 813.7 L1032.50 821.5 L1032.54 825.7 L1032.57 836.6 L1032.61 853.7 L1032.65 839.1 L1032.68 832.4 L1032.72 824.9 L1032.76 887.8 L1032.79 848.2 L1032.83 828.8 L1032.87 813.5 L1032.91 887.8 L1032.94 825.3 L1032.98 855.8 L1033.02 818.7 L1033.05 842.1 L1033.09 829.3 L1033.13 860.7 L1033.16 826.9 L1033.20 817.6 L1033.24 822.7 L1033.28 851.9 L1033.31 885.2 L1033.35 841.5 L1033.39 843.6 L1033.42 826.2 L1033.46 825.8 L1033.50 816.7 L1033.53 890.2 L1033.57 813.1 L1033.61 840.0 L1033.64 828.9 L1033.68 822.1 L1033.72 832.3 L1033.75 867.8 L1033.79 824.8 L1033.83 821.0 L1033.86 840.7 L1033.90 842.1 L1033.94 835.3 L1033.98 821.7 L1034.01 858.6 L1034.05 818.1 L1034.09 821.4 L1034.12 824.5 L1034.16 835.4 L1034.20 833.9 L1034.23 837.1 L1034.27 846.1 L1034.31 861.2 L1034.34 833.5 L1034.38 812.8 L1034.42 853.9 L1034.45 809.4 L1034.49 827.5 L1034.53 819.8 L1034.56 839.3 L1034.60 849.8 L1034.64 819.1 L1034.67 826.5 L1034.71 855.9 L1034.75 843.8 L1034.78 817.9 L1034.82 843.6 L1034.86 850.7 L1034.89 831.0 L1034.93 820.4 L1034.96 842.1 L1035.00 827.5 L1035.04 819.3 L1035.07 820.8 L1035.11 830.7 L1035.15 818.9 L1035.18 830.0 L1035.22 836.9 L1035.26 836.9 L1035.29 830.8 L1035.33 851.1 L1035.37 816.5 L1035.40 827.8 L1035.44 868.1 L1035.48 857.2 L1035.51 865.5 L1035.55 848.4 L1035.58 836.1 L1035.62 850.1 L1035.66 837.8 L1035.69 818.2 L1035.73 824.8 L1035.77 817.0 L1035.80 858.5 L1035.84 827.4 L1035.88 830.8 L1035.91 836.2 L1035.95 817.2 L1035.98 844.5 L1036.02 850.6 L1036.06 850.7 L1036.09 859.2 L1036.13 827.2 L1036.17 819.7 L1036.20 848.1 L1036.24 843.7 L1036.28 829.3 L1036.31 828.2 L1036.35 820.1 L1036.38 853.7 L1036.42 832.9 L1036.46 851.9 L1036.49 828.0 L1036.53 827.3 L1036.56 835.0 L1036.60 846.9 L1036.64 859.3 L1036.67 828.5 L1036.71 843.7 L1036.75 830.5 L1036.78 856.7 L1036.82 847.8 L1036.85 836.8 L1036.89 828.9 L1036.93 825.3 L1036.96 859.5 L1037.00 850.9 L1037.03 826.6 L1037.07 816.0 L1037.11 821.9 L1037.14 877.1 L1037.18 812.0 L1037.21 851.6 L1037.25 835.6 L1037.29 836.7 L1037.32 836.0 L1037.36 830.7 L1037.40 836.8 L1037.43 816.3 L1037.47 865.0 L1037.50 817.1 L1037.54 819.1 L1037.58 842.4 L1037.61 840.7 L1037.65 851.3 L1037.68 843.5 L1037.72 867.1 L1037.75 813.2 L1037.79 807.0 L1037.83 823.7 L1037.86 849.0 L1037.90 819.8 L1037.93 835.6 L1037.97 848.4 L1038.01 819.9 L1038.04 835.4 L1038.08 861.6 L1038.11 846.8 L1038.15 830.1 L1038.19 833.3 L1038.22 825.3 L1038.26 875.4 L1038.29 849.2 L1038.33 842.7 L1038.36 826.3 L1038.40 845.7 L1038.44 833.6 L1038.47 850.4 L1038.51 828.7 L1038.54 858.8 L1038.58 842.9 L1038.61 832.1 L1038.65 836.8 L1038.69 850.9 L1038.72 835.3 L1038.76 875.2 L1038.79 805.7 L1038.83 861.0 L1038.86 844.5 L1038.90 833.6 L1038.94 855.1 L1038.97 819.4 L1039.01 827.6 L1039.04 844.5 L1039.08 852.5 L1039.11 828.9 L1039.15 903.2 L1039.19 840.9 L1039.22 812.3 L1039.26 818.0 L1039.29 815.0 L1039.33 837.0 L1039.36 826.9 L1039.40 824.4 L1039.44 831.8 L1039.47 815.1 L1039.51 862.7 L1039.54 853.8 L1039.58 836.5 L1039.61 831.7 L1039.65 826.3 L1039.68 838.5 L1039.72 827.8 L1039.75 882.2 L1039.79 873.6 L1039.83 845.2 L1039.86 852.6 L1039.90 814.8 L1039.93 817.9 L1039.97 827.7 L1040.00 818.0 L1040.04 830.7 L1040.07 890.4 L1040.11 853.3 L1040.14 874.5 L1040.18 822.6 L1040.22 822.6 L1040.25 809.4 L1040.29 824.8 L1040.32 813.2 L1040.36 835.0 L1040.39 825.9 L1040.43 842.0 L1040.46 836.5 L1040.50 838.1 L1040.53 825.8 L1040.57 845.6 L1040.60 842.8 L1040.64 844.3 L1040.68 832.6 L1040.71 832.3 L1040.75 825.2 L1040.78 811.5 L1040.82 832.4 L1040.85 839.0 L1040.89 820.9 L1040.92 855.9 L1040.96 858.1 L1040.99 855.1 L1041.03 851.5 L1041.06 833.2 L1041.10 820.4 L1041.13 824.5 L1041.17 845.6 L1041.20 888.8 L1041.24 817.0 L1041.27 804.8 L1041.31 827.8 L1041.34 827.6 L1041.38 838.0 L1041.42 817.0 L1041.45 854.1 L1041.49 827.2 L1041.52 862.3 L1041.56 826.8 L1041.59 825.8 L1041.63 820.3 L1041.66 876.9 L1041.70 837.6 L1041.73 852.2 L1041.77 813.6 L1041.80 835.4 L1041.84 845.2 L1041.87 888.0 L1041.91 867.8 L1041.94 816.4 L1041.98 828.5 L1042.01 925.1 L1042.05 835.0 L1042.08 873.5 L1042.12 823.7 L1042.15 809.4 L1042.19 870.2 L1042.22 824.1 L1042.26 836.1 L1042.29 827.9 L1042.33 836.9 L1042.36 867.1 L1042.40 870.3 L1042.43 857.6 L1042.47 823.7 L1042.50 851.7 L1042.54 808.1 L1042.57 830.1 L1042.61 869.6 L1042.64 823.6 L1042.68 828.1 L1042.71 837.0 L1042.75 822.8 L1042.78 843.6 L1042.82 840.5 L1042.85 815.7 L1042.88 864.1 L1042.92 814.0 L1042.95 842.8 L1042.99 827.3 L1043.02 818.5 L1043.06 814.5 L1043.09 916.4 L1043.13 849.8 L1043.16 831.7 L1043.20 849.4 L1043.23 878.6 L1043.27 865.3 L1043.30 834.7 L1043.34 824.3 L1043.37 834.1 L1043.41 885.6 L1043.44 844.8 L1043.48 841.3 L1043.51 853.6 L1043.55 829.6 L1043.58 835.9 L1043.61 854.2 L1043.65 821.1 L1043.68 855.3 L1043.72 809.0 L1043.75 834.9 L1043.79 836.5 L1043.82 818.5 L1043.86 864.3 L1043.89 830.8 L1043.93 820.4 L1043.96 829.7 L1044.00 837.3 L1044.03 830.3 L1044.07 802.4 L1044.10 815.3 L1044.13 843.6 L1044.17 817.7 L1044.20 823.4 L1044.24 850.3 L1044.27 855.5 L1044.31 857.9 L1044.34 819.8 L1044.38 803.8 L1044.41 846.2 L1044.45 837.5 L1044.48 827.7 L1044.51 807.8 L1044.55 830.4 L1044.58 822.6 L1044.62 837.0 L1044.65 884.9 L1044.69 821.3 L1044.72 814.0 L1044.76 842.4 L1044.79 816.2 L1044.82 821.9 L1044.86 830.6 L1044.89 889.6 L1044.93 826.1 L1044.96 825.7 L1045.00 832.1 L1045.03 819.1 L1045.07 829.1 L1045.10 842.7 L1045.13 826.0 L1045.17 849.2 L1045.20 820.1 L1045.24 815.7 L1045.27 838.8 L1045.31 831.1 L1045.34 863.4 L1045.37 815.9 L1045.41 845.5 L1045.44 841.0 L1045.48 827.8 L1045.51 817.3 L1045.55 838.0 L1045.58 846.3 L1045.61 831.9 L1045.65 831.8 L1045.68 841.8 L1045.72 837.8 L1045.75 829.8 L1045.79 820.1 L1045.82 831.5 L1045.85 835.1 L1045.89 859.7 L1045.92 903.9 L1045.96 835.4 L1045.99 826.1 L1046.03 821.7 L1046.06 838.8 L1046.09 844.9 L1046.13 822.8 L1046.16 842.0 L1046.20 929.5 L1046.23 828.5 L1046.26 867.6 L1046.30 830.3 L1046.33 839.9 L1046.37 855.7 L1046.40 820.8 L1046.43 826.7 L1046.47 887.4 L1046.50 813.0 L1046.54 825.1 L1046.57 831.9 L1046.61 845.2 L1046.64 838.7 L1046.67 865.5 L1046.71 840.7 L1046.74 800.4 L1046.78 813.4 L1046.81 810.1 L1046.84 830.0 L1046.88 808.9 L1046.91 833.9 L1046.95 838.8 L1046.98 820.7 L1047.01 854.4 L1047.05 829.2 L1047.08 873.8 L1047.12 827.0 L1047.15 838.1 L1047.18 834.5 L1047.22 823.2 L1047.25 847.6 L1047.29 802.6 L1047.32 822.6 L1047.35 825.5 L1047.39 857.5 L1047.42 832.7 L1047.45 810.0 L1047.49 824.6 L1047.52 837.6 L1047.56 849.8 L1047.59 815.8 L1047.62 847.5 L1047.66 828.2 L1047.69 833.7 L1047.73 829.4 L1047.76 830.1 L1047.79 894.8 L1047.83 863.1 L1047.86 862.9 L1047.89 844.4 L1047.93 842.2 L1047.96 817.6 L1048.00 809.8 L1048.03 851.7 L1048.06 840.7 L1048.10 838.5 L1048.13 825.1 L1048.16 823.2 L1048.20 863.4 L1048.23 833.9 L1048.27 807.4 L1048.30 826.2 L1048.33 826.5 L1048.37 812.9 L1048.40 882.4 L1048.43 860.3 L1048.47 850.2 L1048.50 802.6 L1048.54 829.2 L1048.57 815.8 L1048.60 843.7 L1048.64 849.7 L1048.67 848.1 L1048.70 848.3 L1048.74 816.3 L1048.77 806.0 L1048.80 814.6 L1048.84 852.7 L1048.87 851.4 L1048.91 833.1 L1048.94 821.7 L1048.97 854.2 L1049.01 816.2 L1049.04 825.4 L1049.07 800.5 L1049.11 885.9 L1049.14 829.0 L1049.17 846.6 L1049.21 849.0 L1049.24 835.9 L1049.27 889.9 L1049.31 846.8 L1049.34 864.5 L1049.38 874.7 L1049.41 813.8 L1049.44 845.1 L1049.48 821.3 L1049.51 825.3 L1049.54 826.0 L1049.58 891.7 L1049.61 812.1 L1049.64 829.8 L1049.68 816.8 L1049.71 913.8 L1049.74 832.5 L1049.78 842.5 L1049.81 833.7 L1049.84 846.8 L1049.88 826.4 L1049.91 829.5 L1049.94 845.5 L1049.98 843.0 L1050.01 858.8 L1050.04 825.7 L1050.08 854.3 L1050.11 845.4 L1050.14 836.8 L1050.18 829.9 L1050.21 836.6 L1050.24 814.8 L1050.28 816.3 L1050.31 826.4 L1050.34 818.0 L1050.38 812.8 L1050.41 844.8 L1050.44 845.8 L1050.48 839.5 L1050.51 822.5 L1050.54 845.4 L1050.58 853.2 L1050.61 840.0 L1050.64 823.7 L1050.68 837.6 L1050.71 830.6 L1050.74 825.7 L1050.78 820.3 L1050.81 857.7 L1050.84 841.2 L1050.88 868.5 L1050.91 821.8 L1050.94 825.9 L1050.98 835.9 L1051.01 815.2 L1051.04 827.7 L1051.08 837.4 L1051.11 835.0 L1051.14 864.7 L1051.17 839.3 L1051.21 842.3 L1051.24 839.8 L1051.27 851.4 L1051.31 830.9 L1051.34 802.0 L1051.37 888.0 L1051.41 852.3 L1051.44 820.7 L1051.47 819.9 L1051.51 825.5 L1051.54 844.1 L1051.57 821.2 L1051.60 811.8 L1051.64 836.7 L1051.67 808.1 L1051.70 827.5 L1051.74 832.5 L1051.77 825.3 L1051.80 806.1 L1051.84 827.8 L1051.87 827.2 L1051.90 830.5 L1051.94 834.2 L1051.97 832.1 L1052.00 830.8 L1052.03 812.6 L1052.07 857.7 L1052.10 850.0 L1052.13 837.8 L1052.17 807.2 L1052.20 827.5 L1052.23 865.7 L1052.26 836.6 L1052.30 826.5 L1052.33 856.7 L1052.36 864.7 L1052.40 822.6 L1052.43 838.8 L1052.46 841.5 L1052.50 822.6 L1052.53 831.8 L1052.56 844.4 L1052.59 847.3 L1052.63 845.0 L1052.66 844.7 L1052.69 834.5 L1052.72 819.9 L1052.76 813.7 L1052.79 859.4 L1052.82 862.3 L1052.86 867.9 L1052.89 820.8 L1052.92 854.0 L1052.95 826.5 L1052.99 833.9 L1053.02 827.9 L1053.05 862.3 L1053.09 858.3 L1053.12 859.6 L1053.15 835.6 L1053.18 874.6 L1053.22 830.9 L1053.25 843.9 L1053.28 848.9 L1053.31 830.1 L1053.35 836.1 L1053.38 823.6 L1053.41 857.2 L1053.45 828.2 L1053.48 825.8 L1053.51 832.3 L1053.54 847.7 L1053.58 847.6 L1053.61 842.5 L1053.64 862.9 L1053.67 854.5 L1053.71 829.9 L1053.74 843.2 L1053.77 828.2 L1053.80 831.5 L1053.84 827.2 L1053.87 823.1 L1053.90 836.1 L1053.94 867.6 L1053.97 849.5 L1054.00 824.2 L1054.03 831.1 L1054.07 846.5 L1054.10 843.8 L1054.13 818.7 L1054.16 824.9 L1054.20 845.7 L1054.23 847.4 L1054.26 824.2 L1054.29 857.4 L1054.33 832.6 L1054.36 847.1 L1054.39 844.5 L1054.42 836.9 L1054.46 880.1 L1054.49 839.3 L1054.52 840.4 L1054.55 845.3 L1054.59 863.7 L1054.62 902.0 L1054.65 857.9 L1054.68 845.6 L1054.72 854.6 L1054.75 850.3 L1054.78 884.9 L1054.81 889.8 L1054.85 857.7 L1054.88 832.9 L1054.91 847.4 L1054.94 842.0 L1054.98 833.7 L1055.01 859.6 L1055.04 833.4 L1055.07 855.0 L1055.10 844.4 L1055.14 842.0 L1055.17 855.0 L1055.20 856.2 L1055.23 906.1 L1055.27 929.5 L1055.30 861.7 L1055.33 835.9 L1055.36 853.4 L1055.40 845.3 L1055.43 880.7 L1055.46 843.5 L1055.49 840.0 L1055.52 821.7 L1055.56 844.7 L1055.59 847.4 L1055.62 838.4 L1055.65 829.0 L1055.69 845.5 L1055.72 826.8 L1055.75 832.8 L1055.78 844.1 L1055.82 840.4 L1055.85 846.6 L1055.88 847.9 L1055.91 842.2 L1055.94 831.3 L1055.98 821.5 L1056.01 849.5 L1056.04 892.4 L1056.07 838.3 L1056.10 841.2 L1056.14 840.0 L1056.17 859.5 L1056.20 847.1 L1056.23 863.5 L1056.27 818.2 L1056.30 832.1 L1056.33 835.7 L1056.36 842.5 L1056.39 843.7 L1056.43 843.3 L1056.46 891.3 L1056.49 845.5 L1056.52 851.4 L1056.55 890.6 L1056.59 854.7 L1056.62 852.5 L1056.65 867.3 L1056.68 841.8 L1056.71 825.8 L1056.75 888.8 L1056.78 850.1 L1056.81 852.3 L1056.84 829.1 L1056.88 861.3 L1056.91 843.9 L1056.94 855.6 L1056.97 840.5 L1057.00 879.6 L1057.04 844.0 L1057.07 840.4 L1057.10 875.8 L1057.13 838.3 L1057.16 840.4 L1057.20 849.1 L1057.23 901.6 L1057.26 833.3 L1057.29 838.1 L1057.32 866.0 L1057.35 830.9 L1057.39 846.6 L1057.42 865.2 L1057.45 860.6 L1057.48 866.2 L1057.51 834.0 L1057.55 876.3 L1057.58 844.8 L1057.61 868.2 L1057.64 849.5 L1057.67 876.8 L1057.71 849.9 L1057.74 841.1 L1057.77 836.4 L1057.80 850.9 L1057.83 829.9 L1057.86 837.3 L1057.90 875.1 L1057.93 854.5 L1057.96 873.8 L1057.99 836.9 L1058.02 850.7 L1058.06 850.3 L1058.09 834.7 L1058.12 842.2 L1058.15 882.8 L1058.18 862.9 L1058.21 852.3 L1058.25 856.8 L1058.28 874.2 L1058.31 891.0 L1058.34 856.3 L1058.37 831.0 L1058.41 875.7 L1058.44 838.5 L1058.47 841.9 L1058.50 837.2 L1058.53 853.0 L1058.56 856.2 L1058.60 851.0 L1058.63 851.5 L1058.66 837.7 L1058.69 863.5 L1058.72 854.5 L1058.75 845.3 L1058.79 872.4 L1058.82 887.9 L1058.85 884.3 L1058.88 908.6 L1058.91 833.7 L1058.94 848.9 L1058.98 851.4 L1059.01 843.7 L1059.04 865.9 L1059.07 881.7 L1059.10 838.5 L1059.13 854.0 L1059.16 897.9 L1059.20 879.5 L1059.23 851.9 L1059.26 836.9 L1059.29 852.3 L1059.32 854.9 L1059.35 869.5 L1059.39 841.4 L1059.42 845.5 L1059.45 909.5 L1059.48 827.5 L1059.51 859.5 L1059.54 836.8 L1059.57 867.4 L1059.61 851.6 L1059.64 886.5 L1059.67 843.6 L1059.70 879.1 L1059.73 843.9 L1059.76 833.6 L1059.80 836.8 L1059.83 836.1 L1059.86 850.7 L1059.89 901.6 L1059.92 849.5 L1059.95 866.0 L1059.98 832.5 L1060.02 856.2 L1060.05 857.3 L1060.08 838.1 L1060.11 859.2 L1060.14 853.6 L1060.17 848.9 L1060.20 875.0 L1060.24 865.1 L1060.27 839.8 L1060.30 839.1 L1060.33 835.2 L1060.36 846.7 L1060.39 862.5 L1060.42 900.9 L1060.45 901.1 L1060.49 879.1 L1060.52 840.6 L1060.55 872.4 L1060.58 870.2 L1060.61 855.6 L1060.64 929.5 L1060.67 861.2 L1060.71 840.6 L1060.74 845.5 L1060.77 841.4 L1060.80 862.0 L1060.83 862.8 L1060.86 879.1 L1060.89 829.9 L1060.92 829.8 L1060.96 904.1 L1060.99 847.9 L1061.02 848.1 L1061.05 880.5 L1061.08 841.0 L1061.11 873.6 L1061.14 884.6 L1061.17 860.6 L1061.20 862.8 L1061.24 829.0 L1061.27 862.8 L1061.30 863.2 L1061.33 872.4 L1061.36 859.0 L1061.39 841.8 L1061.42 847.2 L1061.45 865.5 L1061.49 839.7 L1061.52 841.6 L1061.55 848.6 L1061.58 874.8 L1061.61 860.7 L1061.64 853.1 L1061.67 901.4 L1061.70 862.5 L1061.73 848.5 L1061.77 861.9 L1061.80 880.7 L1061.83 853.9 L1061.86 856.6 L1061.89 862.7 L1061.92 917.1 L1061.95 865.7 L1061.98 846.4 L1062.01 863.2 L1062.05 852.5 L1062.08 858.6 L1062.11 870.2 L1062.14 834.8 L1062.17 860.2 L1062.20 852.5 L1062.23 864.4 L1062.26 878.3 L1062.29 858.8 L1062.32 866.1 L1062.36 851.8 L1062.39 850.5 L1062.42 860.8 L1062.45 861.8 L1062.48 849.3 L1062.51 874.4 L1062.54 860.6 L1062.57 854.9 L1062.60 850.9 L1062.63 880.5 L1062.66 888.5 L1062.70 895.5 L1062.73 850.9 L1062.76 841.7 L1062.79 867.1 L1062.82 836.9 L1062.85 883.0 L1062.88 869.8 L1062.91 854.9 L1062.94 859.1 L1062.97 870.2 L1063.00 847.5 L1063.04 856.2 L1063.07 877.1 L1063.10 870.3 L1063.13 865.6 L1063.16 844.7 L1063.19 850.5 L1063.22 852.2 L1063.25 838.8 L1063.28 868.5 L1063.31 865.4 L1063.34 893.8 L1063.37 864.7 L1063.41 892.8 L1063.44 861.2 L1063.47 863.2 L1063.50 853.8 L1063.53 861.2 L1063.56 896.9 L1063.59 862.2 L1063.62 831.2 L1063.65 857.0 L1063.68 850.6 L1063.71 868.6 L1063.74 863.5 L1063.77 862.1 L1063.80 895.3 L1063.84 876.9 L1063.87 845.1 L1063.90 840.0 L1063.93 873.1 L1063.96 867.8 L1063.99 870.6 L1064.02 863.6 L1064.05 840.9 L1064.08 861.8 L1064.11 883.4 L1064.14 868.4 L1064.17 842.1 L1064.20 848.0 L1064.23 892.1 L1064.26 866.0 L1064.30 850.3 L1064.33 874.3 L1064.36 895.9 L1064.39 887.1 L1064.42 871.1 L1064.45 881.5 L1064.48 846.3 L1064.51 863.1 L1064.54 882.0 L1064.57 858.4 L1064.60 849.9 L1064.63 887.6 L1064.66 874.8 L1064.69 836.7 L1064.72 845.1 L1064.75 867.6 L1064.78 904.1 L1064.82 870.5 L1064.85 889.3 L1064.88 848.3 L1064.91 868.7 L1064.94 852.4 L1064.97 858.8 L1065.00 851.0 L1065.03 864.2 L1065.06 844.1 L1065.09 873.0 L1065.12 872.6 L1065.15 894.0 L1065.18 880.0 L1065.21 847.0 L1065.24 889.2 L1065.27 868.0 L1065.30 900.3 L1065.33 866.0 L1065.36 847.7 L1065.39 876.3 L1065.42 853.0 L1065.46 921.1 L1065.49 868.3 L1065.52 894.3 L1065.55 866.4 L1065.58 859.8 L1065.61 874.4 L1065.64 877.1 L1065.67 865.3 L1065.70 858.0 L1065.73 863.8 L1065.76 877.7 L1065.79 856.2 L1065.82 853.1 L1065.85 866.7 L1065.88 874.7 L1065.91 847.7 L1065.94 858.4 L1065.97 913.7 L1066.00 858.3 L1066.03 882.0 L1066.06 860.0 L1066.09 849.5 L1066.12 867.3 L1066.15 891.2 L1066.18 882.7 L1066.21 846.7 L1066.24 877.9 L1066.27 873.6 L1066.30 867.5 L1066.33 875.9 L1066.36 869.2 L1066.39 855.4 L1066.43 877.8 L1066.46 852.7 L1066.49 860.9 L1066.52 889.7 L1066.55 871.5 L1066.58 869.1 L1066.61 878.9 L1066.64 868.4 L1066.67 864.1 L1066.70 871.0 L1066.73 844.2 L1066.76 862.9 L1066.79 846.6 L1066.82 929.5 L1066.85 897.6 L1066.88 876.2 L1066.91 854.9 L1066.94 890.7 L1066.97 860.5 L1067.00 886.1 L1067.03 876.3 L1067.06 874.0 L1067.09 881.6 L1067.12 860.1 L1067.15 888.9 L1067.18 871.4 L1067.21 882.8 L1067.24 889.6 L1067.27 859.8 L1067.30 866.1 L1067.33 864.2 L1067.36 850.9 L1067.39 893.8 L1067.42 878.7 L1067.45 869.5 L1067.48 871.9 L1067.51 894.5 L1067.54 850.6 L1067.57 864.4 L1067.60 879.0 L1067.63 871.7 L1067.66 870.2 L1067.69 860.6 L1067.72 859.2 L1067.75 878.4 L1067.78 864.1 L1067.81 904.9 L1067.84 898.2 L1067.87 916.0 L1067.90 861.7 L1067.93 871.3 L1067.96 853.6 L1067.99 865.1 L1068.02 851.7 L1068.05 870.9 L1068.08 910.9 L1068.11 884.6 L1068.14 865.5 L1068.17 862.1 L1068.20 904.1 L1068.23 850.2 L1068.26 891.7 L1068.29 892.9 L1068.32 851.7 L1068.35 909.4 L1068.38 878.1 L1068.41 866.9 L1068.44 868.4 L1068.47 876.3 L1068.50 872.7 L1068.53 894.6 L1068.56 898.2 L1068.59 864.8 L1068.62 843.9 L1068.65 886.6 L1068.68 878.6 L1068.71 879.0 L1068.74 852.8 L1068.77 852.9 L1068.80 899.1 L1068.83 866.6 L1068.86 871.0 L1068.89 919.2 L1068.92 859.8 L1068.95 878.4 L1068.97 852.1 L1069.00 875.0 L1069.03 884.4 L1069.06 858.2 L1069.09 885.9 L1069.12 917.1 L1069.15 891.2 L1069.18 888.3 L1069.21 909.6 L1069.24 883.3 L1069.27 874.8 L1069.30 891.3 L1069.33 889.8 L1069.36 878.7 L1069.39 880.8 L1069.42 859.8 L1069.45 866.5 L1069.48 866.1 L1069.51 895.1 L1069.54 888.1 L1069.57 864.8 L1069.60 929.5 L1069.63 852.9 L1069.66 853.2 L1069.69 866.5 L1069.72 854.5 L1069.75 911.2 L1069.78 867.8 L1069.81 869.1 L1069.84 895.2 L1069.87 875.0 L1069.90 879.6 L1069.92 871.3 L1069.95 872.1 L1069.98 913.9 L1070.01 865.0 L1070.04 875.0 L1070.07 873.1 L1070.10 859.0 L1070.13 859.3 L1070.16 874.4 L1070.19 890.5 L1070.22 871.4 L1070.25 853.9 L1070.28 908.1 L1070.31 859.1 L1070.34 899.4 L1070.37 852.7 L1070.40 881.3 L1070.43 859.7 L1070.46 864.9 L1070.49 871.4 L1070.52 887.8 L1070.55 872.0 L1070.57 871.4 L1070.60 870.8 L1070.63 875.7 L1070.66 866.1 L1070.69 913.6 L1070.72 862.3 L1070.75 859.5 L1070.78 877.1 L1070.81 869.1 L1070.84 886.0 L1070.87 852.9 L1070.90 883.5 L1070.93 869.8 L1070.96 907.5 L1070.99 867.4 L1071.02 872.7 L1071.05 868.2 L1071.08 876.9 L1071.10 866.8 L1071.13 883.5 L1071.16 872.1 L1071.19 885.8 L1071.22 867.4 L1071.25 874.0 L1071.28 878.3 L1071.31 886.6 L1071.34 882.9 L1071.37 873.1 L1071.40 857.7 L1071.43 859.4 L1071.46 861.3 L1071.49 863.2 L1071.52 863.2 L1071.54 883.7 L1071.57 869.9 L1071.60 904.9 L1071.63 865.6 L1071.66 866.2 L1071.69 863.5 L1071.72 861.6 L1071.75 885.2 L1071.78 880.0 L1071.81 866.6 L1071.84 894.0 L1071.87 885.0 L1071.90 873.9 L1071.93 881.6 L1071.95 884.1 L1071.98 874.5 L1072.01 859.0 L1072.04 871.5 L1072.07 913.6 L1072.10 872.0 L1072.13 883.4 L1072.16 859.0 L1072.19 891.6 L1072.22 899.8 L1072.25 872.2 L1072.28 872.2 L1072.31 877.9 L1072.33 867.5 L1072.36 865.7 L1072.39 861.8 L1072.42 886.5 L1072.45 878.0 L1072.48 917.4 L1072.51 919.7 L1072.54 901.5 L1072.57 914.0 L1072.60 897.7 L1072.63 853.6 L1072.65 862.3 L1072.68 926.5 L1072.71 901.7 L1072.74 883.2 L1072.77 883.5 L1072.80 875.5 L1072.83 875.1 L1072.86 863.4 L1072.89 880.3 L1072.92 869.3 L1072.95 862.3 L1072.97 901.7 L1073.00 881.7 L1073.03 902.5 L1073.06 870.3 L1073.09 881.9 L1073.12 869.7 L1073.15 897.8 L1073.18 866.9 L1073.21 885.5 L1073.24 881.2 L1073.27 871.9 L1073.29 860.2 L1073.32 878.4 L1073.35 880.0 L1073.38 897.0 L1073.41 867.0 L1073.44 866.2 L1073.47 871.4 L1073.50 895.8 L1073.53 868.5 L1073.56 885.4 L1073.58 856.1 L1073.61 860.8 L1073.64 889.5 L1073.67 879.3 L1073.70 862.9 L1073.73 878.4 L1073.76 914.8 L1073.79 875.3 L1073.82 882.2 L1073.84 876.5 L1073.87 880.0 L1073.90 857.9 L1073.93 904.8 L1073.96 883.4 L1073.99 873.8 L1074.02 871.4 L1074.05 867.2 L1074.08 913.6 L1074.10 900.2 L1074.13 875.3 L1074.16 884.8 L1074.19 882.5 L1074.22 868.1 L1074.25 857.3 L1074.28 892.2 L1074.31 866.5 L1074.34 883.3 L1074.36 854.9 L1074.39 855.8 L1074.42 866.7 L1074.45 887.7 L1074.48 885.7 L1074.51 929.5 L1074.54 888.5 L1074.57 882.2 L1074.59 855.0 L1074.62 922.2 L1074.65 881.6 L1074.68 904.2 L1074.71 860.5 L1074.74 902.3 L1074.77 882.1 L1074.80 871.8 L1074.82 879.8 L1074.85 864.7 L1074.88 887.6 L1074.91 872.9 L1074.94 894.3 L1074.97 871.4 L1075.00 894.1 L1075.03 890.6 L1075.05 895.9 L1075.08 923.7 L1075.11 877.9 L1075.14 895.0 L1075.17 882.4 L1075.20 913.2 L1075.23 905.7 L1075.25 901.0 L1075.28 892.0 L1075.31 878.2 L1075.34 916.6 L1075.37 929.5 L1075.40 926.3 L1075.43 882.3 L1075.46 907.4 L1075.48 897.7 L1075.51 909.5 L1075.54 906.4 L1075.57 888.2 L1075.60 886.1 L1075.63 906.6 L1075.66 897.9 L1075.68 892.7 L1075.71 915.0 L1075.74 868.3 L1075.77 865.3 L1075.80 890.6 L1075.83 874.7 L1075.86 912.8 L1075.88 874.6 L1075.91 917.8 L1075.94 882.2 L1075.97 878.1 L1076.00 906.8 L1076.03 902.4 L1076.06 890.6 L1076.08 898.8 L1076.11 897.1 L1076.14 929.5 L1076.17 895.6 L1076.20 897.2 L1076.23 894.2 L1076.25 892.4 L1076.28 905.3 L1076.31 879.8 L1076.34 905.9 L1076.37 929.4 L1076.40 910.8 L1076.43 899.3 L1076.45 891.9 L1076.48 880.4 L1076.51 880.3 L1076.54 900.2 L1076.57 923.3 L1076.60 921.8 L1076.62 886.3 L1076.65 912.2 L1076.68 916.7 L1076.71 899.1 L1076.74 922.1 L1076.77 887.7 L1076.80 894.1 L1076.82 901.6 L1076.85 912.5 L1076.88 899.4 L1076.91 893.8 L1076.94 924.9 L1076.97 897.8 L1076.99 899.2 L1077.02 891.5 L1077.05 902.2 L1077.08 913.2 L1077.11 897.9 L1077.14 911.2 L1077.16 903.6 L1077.19 877.3 L1077.22 929.5 L1077.25 896.2 L1077.28 906.9 L1077.31 929.5 L1077.33 893.5 L1077.36 885.7 L1077.39 893.9 L1077.42 891.7 L1077.45 927.5 L1077.48 907.4 L1077.50 884.8 L1077.53 898.0 L1077.56 907.8 L1077.59 894.2 L1077.62 900.0 L1077.65 929.5 L1077.67 905.5 L1077.70 897.0 L1077.73 912.1 L1077.76 891.2 L1077.79 908.6 L1077.81 914.6 L1077.84 889.7 L1077.87 909.9 L1077.90 900.2 L1077.93 920.3 L1077.96 913.1 L1077.98 929.5 L1078.01 912.7 L1078.04 894.9 L1078.07 895.1 L1078.10 917.8 L1078.12 925.3 L1078.15 887.9 L1078.18 904.6 L1078.21 899.3 L1078.24 906.7 L1078.27 929.5 L1078.29 910.6 L1078.32 920.4 L1078.35 921.8 L1078.38 899.2 L1078.41 913.4 L1078.43 903.1 L1078.46 907.1 L1078.49 909.4 L1078.52 915.9 L1078.55 894.5 L1078.57 928.0 L1078.60 894.1 L1078.63 900.7 L1078.66 929.2 L1078.69 929.5 L1078.72 902.9 L1078.74 929.5 L1078.77 885.7 L1078.80 929.5 L1078.83 896.1 L1078.86 885.4 L1078.88 921.9 L1078.91 894.3 L1078.94 921.2 L1078.97 879.8 L1079.00 892.4 L1079.02 902.7 L1079.05 890.0 L1079.08 907.2 L1079.11 902.2 L1079.14 920.4 L1079.16 908.1 L1079.19 929.5 L1079.22 928.8 L1079.25 894.9 L1079.28 929.5 L1079.30 929.5 L1079.33 911.3 L1079.36 909.7 L1079.39 894.9 L1079.42 901.4 L1079.44 897.3 L1079.47 896.2 L1079.50 913.7 L1079.53 901.6 L1079.56 922.6 L1079.58 911.8 L1079.61 927.4 L1079.64 890.4 L1079.67 929.4 L1079.69 909.0 L1079.72 914.7 L1079.75 898.2 L1079.78 918.1 L1079.81 904.9 L1079.83 919.7 L1079.86 912.5 L1079.89 893.7 L1079.92 900.8 L1079.95 921.7 L1079.97 882.9 L1080.00 914.8 L1080.03 910.8 L1080.06 919.4 L1080.09 902.0 L1080.11 907.9 L1080.14 907.9 L1080.17 921.6 L1080.20 889.7 L1080.22 909.4 L1080.25 899.3 L1080.28 912.9 L1080.31 899.3 L1080.34 897.1 L1080.36 898.2 L1080.39 929.5 L1080.42 903.5 L1080.45 929.5 L1080.47 920.8 L1080.50 899.8 L1080.53 911.4 L1080.56 881.2 L1080.59 929.5 L1080.61 915.0 L1080.64 892.5 L1080.67 909.9 L1080.70 908.9 L1080.72 917.2 L1080.75 900.7 L1080.78 929.5 L1080.81 914.7 L1080.84 889.9 L1080.86 927.2 L1080.89 929.5 L1080.92 901.4 L1080.95 919.6 L1080.97 929.5 L1081.00 929.5 L1081.03 889.8 L1081.06 929.0 L1081.08 899.2 L1081.11 925.9 L1081.14 918.2 L1081.17 908.0 L1081.19 929.5 L1081.22 926.1 L1081.25 929.5 L1081.28 929.5 L1081.31 912.6 L1081.33 921.2 L1081.36 917.4 L1081.39 905.4 L1081.42 909.4 L1081.44 909.8 L1081.47 898.0 L1081.50 899.9 L1081.53 929.5 L1081.55 929.5 L1081.58 919.0 L1081.61 918.5 L1081.64 910.0 L1081.66 912.8 L1081.69 917.4 L1081.72 881.2 L1081.75 907.3 L1081.77 929.5 L1081.80 897.7 L1081.83 908.3 L1081.86 890.8 L1081.88 899.9 L1081.91 928.2 L1081.94 886.6 L1081.97 926.1 L1082.00 926.0 L1082.02 929.5 L1082.05 900.0 L1082.08 929.5 L1082.11 904.6 L1082.13 907.8 L1082.16 929.5 L1082.19 911.7 L1082.22 918.4 L1082.24 893.1 L1082.27 880.3 L1082.30 900.5 L1082.32 892.9 L1082.35 928.4 L1082.38 899.9 L1082.41 929.5 L1082.43 918.4 L1082.46 897.4 L1082.49 920.2 L1082.52 902.7 L1082.54 911.1 L1082.57 891.0 L1082.60 929.3 L1082.63 925.5 L1082.65 913.6 L1082.68 919.2 L1082.71 903.7 L1082.74 894.3 L1082.76 903.1 L1082.79 922.2 L1082.82 912.9 L1082.85 894.8 L1082.87 899.7 L1082.90 909.1 L1082.93 883.9 L1082.96 888.5 L1082.98 908.2 L1083.01 894.8 L1083.04 929.5 L1083.06 894.5 L1083.09 923.0 L1083.12 926.3 L1083.15 902.9 L1083.17 912.1 L1083.20 929.5 L1083.23 915.6 L1083.26 905.8 L1083.28 929.5 L1083.31 900.7 L1083.34 929.5 L1083.37 902.8 L1083.39 907.2 L1083.42 903.0 L1083.45 917.4 L1083.47 929.5 L1083.50 919.5 L1083.53 897.4 L1083.56 929.5 L1083.58 921.5 L1083.61 910.8 L1083.64 929.5 L1083.67 893.6 L1083.69 914.9 L1083.72 925.9 L1083.75 925.2 L1083.77 918.7 L1083.80 890.5 L1083.83 909.7 L1083.86 901.3 L1083.88 915.4 L1083.91 906.5 L1083.94 908.8 L1083.96 912.3 L1083.99 914.6 L1084.02 929.5 L1084.05 902.0 L1084.07 901.7 L1084.10 897.8 L1084.13 894.1 L1084.16 929.5 L1084.18 929.5 L1084.21 894.9 L1084.24 905.2 L1084.26 929.5 L1084.29 929.5 L1084.32 929.5 L1084.35 929.5 L1084.37 903.0 L1084.40 891.1 L1084.43 900.8 L1084.45 911.0 L1084.48 884.9 L1084.51 901.0 L1084.53 909.8 L1084.56 919.5 L1084.59 896.6 L1084.62 894.9 L1084.64 904.2 L1084.67 893.0 L1084.70 894.9 L1084.72 893.8 L1084.75 927.4 L1084.78 929.5 L1084.81 889.1 L1084.83 927.9 L1084.86 929.5 L1084.89 918.0 L1084.91 903.1 L1084.94 929.3 L1084.97 892.5 L1085.00 889.6 L1085.02 929.5 L1085.05 899.9 L1085.08 929.5 L1085.10 924.2 L1085.13 889.7 L1085.16 893.5 L1085.18 918.0 L1085.21 896.5 L1085.24 919.0 L1085.27 919.4 L1085.29 900.5 L1085.32 910.3 L1085.35 899.7 L1085.37 929.5 L1085.40 917.3 L1085.43 920.5 L1085.45 916.8 L1085.48 891.2 L1085.51 929.5 L1085.53 926.3 L1085.56 912.1 L1085.59 915.4 L1085.62 911.1 L1085.64 924.6 L1085.67 912.9 L1085.70 902.6 L1085.72 912.2 L1085.75 899.9 L1085.78 882.0 L1085.80 912.4 L1085.83 929.5 L1085.86 922.4 L1085.88 899.8 L1085.91 912.0 L1085.94 915.3 L1085.97 915.1 L1085.99 910.0 L1086.02 912.1 L1086.05 920.7 L1086.07 929.5 L1086.10 912.4 L1086.13 926.9 L1086.15 920.3 L1086.18 895.5 L1086.21 902.1 L1086.23 904.3 L1086.26 906.0 L1086.29 911.5 L1086.31 903.6 L1086.34 929.5 L1086.37 923.6 L1086.39 906.7 L1086.42 921.5 L1086.45 929.5 L1086.47 897.8 L1086.50 917.8 L1086.53 929.5 L1086.56 906.9 L1086.58 929.5 L1086.61 928.7 L1086.64 904.8 L1086.66 897.1 L1086.69 929.0 L1086.72 908.6 L1086.74 906.1 L1086.77 910.6 L1086.80 923.4 L1086.82 929.5 L1086.85 929.5 L1086.88 926.0 L1086.90 898.8 L1086.93 906.9 L1086.96 883.6 L1086.98 900.0 L1087.01 905.8 L1087.04 899.0 L1087.06 911.2 L1087.09 896.7 L1087.12 919.3 L1087.14 908.7 L1087.17 902.1 L1087.20 921.1 L1087.22 905.4 L1087.25 887.9 L1087.28 929.5 L1087.30 925.4 L1087.33 929.5 L1087.36 904.1 L1087.38 902.9 L1087.41 921.8 L1087.44 897.6 L1087.46 929.5 L1087.49 919.5 L1087.52 914.5 L1087.54 891.4 L1087.57 903.8 L1087.60 909.4 L1087.62 929.5 L1087.65 897.7 L1087.68 916.6 L1087.70 893.7 L1087.73 929.5 L1087.76 925.2 L1087.78 929.5 L1087.81 925.3 L1087.84 899.5 L1087.86 902.2 L1087.89 890.3 L1087.92 914.9 L1087.94 894.0 L1087.97 900.0 L1087.99 899.3 L1088.02 929.5 L1088.05 928.4 L1088.07 904.2 L1088.10 929.5 L1088.13 898.7 L1088.15 897.7 L1088.18 908.0 L1088.21 929.5 L1088.23 895.4 L1088.26 928.4 L1088.29 914.8 L1088.31 929.2 L1088.34 906.4 L1088.37 890.9 L1088.39 895.5 L1088.42 924.0 L1088.45 913.2 L1088.47 926.7 L1088.50 900.7 L1088.52 904.2 L1088.55 901.3 L1088.58 929.5 L1088.60 922.9 L1088.63 898.7 L1088.66 924.2 L1088.68 890.7 L1088.71 911.7 L1088.74 903.4 L1088.76 926.9 L1088.79 923.9 L1088.82 921.9 L1088.84 900.8 L1088.87 891.2 L1088.89 919.6 L1088.92 922.5 L1088.95 885.5 L1088.97 929.5 L1089.00 929.5 L1089.03 907.7 L1089.05 914.1 L1089.08 920.2 L1089.11 929.5 L1089.13 920.2 L1089.16 914.0 L1089.19 927.4 L1089.21 912.9 L1089.24 890.3 L1089.26 915.4 L1089.29 909.9 L1089.32 906.8 L1089.34 909.2 L1089.37 902.2 L1089.40 905.9 L1089.42 926.0 L1089.45 929.5 L1089.47 911.7 L1089.50 929.5 L1089.53 897.6 L1089.55 914.2 L1089.58 925.9 L1089.61 928.5 L1089.63 909.0 L1089.66 899.9 L1089.69 929.5 L1089.71 918.5 L1089.74 920.7 L1089.76 907.5 L1089.79 897.1 L1089.82 916.7 L1089.84 909.8 L1089.87 929.5 L1089.90 921.3 L1089.92 926.9 L1089.95 916.8 L1089.97 926.7 L1090.00 898.3 L1090.03 929.5 L1090.05 917.3 L1090.08 918.1 L1090.10 901.1 L1090.13 895.9 L1090.16 923.8 L1090.18 925.1 L1090.21 921.7 L1090.24 904.0 L1090.26 913.4 L1090.29 927.9 L1090.31 920.3 L1090.34 929.5 L1090.37 895.9 L1090.39 928.5 L1090.42 887.5 L1090.45 919.6 L1090.47 915.5 L1090.50 894.9 L1090.52 910.8 L1090.55 921.9 L1090.58 929.5 L1090.60 895.1 L1090.63 914.5 L1090.65 929.5 L1090.68 897.7 L1090.71 929.5 L1090.73 929.5 L1090.76 907.9 L1090.78 902.4 L1090.81 899.4 L1090.84 902.9 L1090.86 910.9 L1090.89 924.3 L1090.92 929.5 L1090.94 916.8 L1090.97 929.5 L1090.99 911.3 L1091.02 921.6 L1091.05 877.5 L1091.07 911.0 L1091.10 889.8 L1091.12 898.8 L1091.15 929.5 L1091.18 897.9 L1091.20 906.4 L1091.23 915.5 L1091.25 915.5 L1091.28 891.0 L1091.31 897.7 L1091.33 922.8 L1091.36 910.6 L1091.38 896.6 L1091.41 913.6 L1091.44 909.4 L1091.46 929.5 L1091.49 893.1 L1091.51 901.4 L1091.54 895.4 L1091.57 916.8 L1091.59 929.5 L1091.62 929.3 L1091.64 898.0 L1091.67 916.3 L1091.70 909.0 L1091.72 929.5 L1091.75 924.7 L1091.77 919.3 L1091.80 904.9 L1091.83 912.1 L1091.85 915.9 L1091.88 909.9 L1091.90 917.5 L1091.93 896.7 L1091.96 911.6 L1091.98 929.5 L1092.01 910.7 L1092.03 915.1 L1092.06 927.8 L1092.08 929.5 L1092.11 926.7 L1092.14 910.1 L1092.16 925.2 L1092.19 902.7 L1092.21 920.2 L1092.24 889.0 L1092.27 902.4 L1092.29 901.6 L1092.32 909.1 L1092.34 927.0 L1092.37 890.1 L1092.40 929.5 L1092.42 897.1 L1092.45 929.5 L1092.47 929.5 L1092.50 920.2 L1092.52 929.5 L1092.55 929.5 L1092.58 913.0 L1092.60 929.5 L1092.63 892.3 L1092.65 929.5 L1092.68 922.0 L1092.71 929.5 L1092.73 900.6 L1092.76 896.7 L1092.78 916.2 L1092.81 920.0 L1092.83 924.2 L1092.86 902.1 L1092.89 918.2 L1092.91 929.5 L1092.94 905.4 L1092.96 929.5 L1092.99 929.5 L1093.01 923.5 L1093.04 912.9 L1093.07 912.1 L1093.09 914.1 L1093.12 899.5 L1093.14 896.3 L1093.17 906.6 L1093.19 902.0 L1093.22 929.5 L1093.25 909.9 L1093.27 929.5 L1093.30 918.2 L1093.32 929.5 L1093.35 929.5 L1093.37 925.8 L1093.40 913.4 L1093.43 905.3 L1093.45 918.4 L1093.48 908.1 L1093.50 929.5 L1093.53 893.7 L1093.55 921.8 L1093.58 909.2 L1093.61 912.4 L1093.63 917.5 L1093.66 929.5 L1093.68 929.5 L1093.71 910.0 L1093.73 929.5 L1093.76 929.5 L1093.79 916.9 L1093.81 918.5 L1093.84 903.5 L1093.86 929.5 L1093.89 915.2 L1093.91 929.4 L1093.94 929.5 L1093.96 921.4 L1093.99 925.2 L1094.02 918.0 L1094.04 900.3 L1094.07 914.2 L1094.09 895.8 L1094.12 902.8 L1094.14 929.5 L1094.17 911.1 L1094.20 900.6 L1094.22 913.3 L1094.25 895.7 L1094.27 920.8 L1094.30 905.1 L1094.32 904.6 L1094.35 922.3 L1094.37 929.5 L1094.40 889.6 L1094.43 926.6 L1094.45 919.7 L1094.48 915.6 L1094.50 912.9 L1094.53 889.0 L1094.55 910.2 L1094.58 917.2 L1094.60 909.6 L1094.63 929.5 L1094.65 909.8 L1094.68 929.5 L1094.71 929.5 L1094.73 929.5 L1094.76 915.9 L1094.78 916.3 L1094.81 929.5 L1094.83 900.0 L1094.86 905.2 L1094.88 889.7 L1094.91 916.0 L1094.93 914.4 L1094.96 929.5 L1094.99 929.5 L1095.01 912.6 L1095.04 916.2 L1095.06 899.3 L1095.09 929.4 L1095.11 917.3 L1095.14 902.8 L1095.16 929.5 L1095.19 894.5 L1095.21 904.0 L1095.24 915.6 L1095.27 929.5 L1095.29 901.4 L1095.32 907.2 L1095.34 929.5 L1095.37 910.0 L1095.39 929.5 L1095.42 891.3 L1095.44 906.1 L1095.47 909.0 L1095.49 929.5 L1095.52 899.4 L1095.54 924.8 L1095.57 929.5 L1095.60 929.5 L1095.62 929.5 L1095.65 895.6 L1095.67 916.0 L1095.70 905.4 L1095.72 900.7 L1095.75 906.4 L1095.77 928.6 L1095.80 920.1 L1095.82 901.2 L1095.85 908.3 L1095.87 897.0 L1095.90 929.5 L1095.92 929.5 L1095.95 915.7 L1095.98 929.5 L1096.00 929.5 L1096.03 905.0 L1096.05 907.1 L1096.08 904.4 L1096.10 922.8 L1096.13 921.2 L1096.15 917.8 L1096.18 929.5 L1096.20 918.3 L1096.23 909.6 L1096.25 924.9 L1096.28 929.5 L1096.30 895.8 L1096.33 916.5 L1096.35 902.0 L1096.38 929.5 L1096.40 914.3 L1096.43 929.5 L1096.46 925.1 L1096.48 929.5 L1096.51 920.7 L1096.53 921.4 L1096.56 929.5 L1096.58 929.5 L1096.61 910.7 L1096.63 900.1 L1096.66 929.5 L1096.68 897.3 L1096.71 929.5 L1096.73 929.5 L1096.76 924.8 L1096.78 929.5 L1096.81 922.1 L1096.83 929.5 L1096.86 921.6 L1096.88 906.2 L1096.91 898.6 L1096.93 929.5 L1096.96 915.4 L1096.98 901.5 L1097.01 920.0 L1097.03 908.0 L1097.06 907.9 L1097.08 929.5 L1097.11 922.8 L1097.13 929.5 L1097.16 929.5 L1097.19 915.0 L1097.21 915.6 L1097.24 914.8 L1097.26 911.9 L1097.29 929.5 L1097.31 929.5 L1097.34 909.5 L1097.36 927.9 L1097.39 906.1 L1097.41 889.4 L1097.44 926.4 L1097.46 929.5 L1097.49 910.8 L1097.51 929.5 L1097.54 928.4 L1097.56 910.5 L1097.59 929.5 L1097.61 929.5 L1097.64 902.5 L1097.66 929.5 L1097.69 915.0 L1097.71 908.6 L1097.74 912.7 L1097.76 918.8 L1097.79 918.8 L1097.81 909.4 L1097.84 897.3 L1097.86 923.6 L1097.89 928.3 L1097.91 927.0 L1097.94 913.5 L1097.96 929.5 L1097.99 892.0 L1098.01 902.0 L1098.04 892.3 L1098.06 920.0 L1098.09 918.6 L1098.11 906.7 L1098.14 918.7 L1098.16 887.3 L1098.19 895.0 L1098.21 929.5 L1098.24 929.5 L1098.26 898.1 L1098.29 924.9 L1098.31 918.0 L1098.34 919.3 L1098.36 929.5 L1098.39 924.1 L1098.41 929.5 L1098.44 926.3 L1098.46 929.5 L1098.49 901.3 L1098.51 929.5 L1098.54 910.5 L1098.56 929.5 L1098.59 929.5 L1098.61 929.5 L1098.64 929.5 L1098.66 913.3 L1098.69 918.7 L1098.71 929.5 L1098.73 897.2 L1098.76 919.4 L1098.78 920.7 L1098.81 928.4 L1098.83 911.4 L1098.86 922.4 L1098.88 929.5 L1098.91 913.0 L1098.93 926.3 L1098.96 929.5 L1098.98 912.5 L1099.01 918.8 L1099.03 917.1 L1099.06 929.5 L1099.08 908.5 L1099.11 909.2 L1099.13 913.4 L1099.16 924.8 L1099.18 903.4 L1099.21 929.5 L1099.23 917.9 L1099.26 929.2 L1099.28 914.2 L1099.31 893.9 L1099.33 913.2 L1099.36 920.9 L1099.38 899.7 L1099.41 929.5 L1099.43 921.6 L1099.45 916.1 L1099.48 894.1 L1099.50 907.6 L1099.53 911.3 L1099.55 924.7 L1099.58 904.4 L1099.60 917.2 L1099.63 908.6 L1099.65 920.6 L1099.68 926.7 L1099.70 918.6 L1099.73 929.5 L1099.75 923.3 L1099.78 899.3 L1099.80 925.0 L1099.83 917.1 L1099.85 929.5 L1099.88 929.5 L1099.90 911.9 L1099.92 929.5 L1099.95 906.9 L1099.97 924.7 L1100.00 888.6 L1100.02 929.5 L1100.05 915.6 L1100.07 916.0 L1100.10 917.7 L1100.12 912.7 L1100.15 906.9 L1100.17 927.0 L1100.20 923.6 L1100.22 897.0 L1100.25 908.6 L1100.27 929.5 L1100.30 909.2 L1100.32 909.6 L1100.34 921.3 L1100.37 912.7 L1100.39 929.5 L1100.42 929.5 L1100.44 902.2 L1100.47 906.7 L1100.49 904.3 L1100.52 915.6 L1100.54 909.2 L1100.57 926.1 L1100.59 929.5 L1100.62 898.5 L1100.64 893.8 L1100.66 901.2 L1100.69 910.3 L1100.71 902.4 L1100.74 915.1 L1100.76 912.4 L1100.79 929.2 L1100.81 929.5 L1100.84 929.5 L1100.86 914.7 L1100.89 924.4 L1100.91 902.4 L1100.93 922.8 L1100.96 929.5 L1100.98 929.5 L1101.01 902.8 L1101.03 904.1 L1101.06 929.5 L1101.08 927.4 L1101.11 929.5 L1101.13 898.2 L1101.16 923.2 L1101.18 893.3 L1101.20 929.5 L1101.23 929.5 L1101.25 910.8 L1101.28 887.0 L1101.30 929.5 L1101.33 929.5 L1101.35 923.3 L1101.38 912.6 L1101.40 911.1 L1101.42 929.5 L1101.45 929.5 L1101.47 912.5 L1101.50 906.7 L1101.52 929.5 L1101.55 915.0 L1101.57 915.6 L1101.60 910.4 L1101.62 929.1 L1101.65 929.5 L1101.67 916.7 L1101.69 929.5 L1101.72 913.9 L1101.74 914.8 L1101.77 929.5 L1101.79 929.5 L1101.82 929.5 L1101.84 927.9 L1101.87 929.5 L1101.89 929.5 L1101.91 929.5 L1101.94 919.3 L1101.96 913.5 L1101.99 889.5 L1102.01 919.1 L1102.04 912.2 L1102.06 882.6 L1102.08 929.5 L1102.11 910.3 L1102.13 929.5 L1102.16 892.1 L1102.18 912.4 L1102.21 929.5 L1102.23 926.1 L1102.26 926.1 L1102.28 917.5 L1102.30 900.1 L1102.33 929.5 L1102.35 929.5 L1102.38 917.1 L1102.40 920.7 L1102.43 929.5 L1102.45 917.8 L1102.47 917.0 L1102.50 917.4 L1102.52 929.5 L1102.55 929.5 L1102.57 911.4 L1102.60 929.5 L1102.62 913.0 L1102.64 926.2 L1102.67 913.1 L1102.69 929.5 L1102.72 929.5 L1102.74 929.5 L1102.77 913.3 L1102.79 912.1 L1102.81 915.3 L1102.84 922.7 L1102.86 895.1 L1102.89 920.0 L1102.91 929.5 L1102.94 898.1 L1102.96 929.5 L1102.98 921.2 L1103.01 929.5 L1103.03 929.1 L1103.06 928.8 L1103.08 929.5 L1103.11 914.9 L1103.13 901.8 L1103.15 929.5 L1103.18 929.5 L1103.20 929.0 L1103.23 906.7 L1103.25 918.1 L1103.28 918.7 L1103.30 912.6 L1103.32 917.7 L1103.35 916.4 L1103.37 929.5 L1103.40 923.8 L1103.42 929.5 L1103.44 929.5 L1103.47 904.9 L1103.49 929.5 L1103.52 913.3 L1103.54 922.4 L1103.57 920.8 L1103.59 929.5 L1103.61 910.2 L1103.64 926.5 L1103.66 912.9 L1103.69 929.5 L1103.71 917.9 L1103.73 924.7 L1103.76 929.5 L1103.78 909.3 L1103.81 888.5 L1103.83 929.5 L1103.86 919.2 L1103.88 924.8 L1103.90 929.5 L1103.93 929.5 L1103.95 913.6 L1103.98 929.5 L1104.00 913.7 L1104.02 929.4 L1104.05 929.5 L1104.07 912.6 L1104.10 914.9 L1104.12 912.8 L1104.14 911.8 L1104.17 914.6 L1104.19 929.5 L1104.22 897.9 L1104.24 929.5 L1104.26 929.5 L1104.29 920.7 L1104.31 924.7 L1104.34 910.2 L1104.36 929.5 L1104.38 929.5 L1104.41 913.4 L1104.43 918.2 L1104.46 906.8 L1104.48 908.2 L1104.51 929.5 L1104.53 924.7 L1104.55 916.0 L1104.58 924.6 L1104.60 905.3 L1104.63 887.9 L1104.65 912.5 L1104.67 921.5 L1104.70 905.3 L1104.72 920.0 L1104.75 911.2 L1104.77 908.7 L1104.79 929.5 L1104.82 912.6 L1104.84 929.5 L1104.87 929.5 L1104.89 913.2 L1104.91 895.0 L1104.94 929.5 L1104.96 920.4 L1104.99 921.7 L1105.01 927.0 L1105.03 920.3 L1105.06 929.5 L1105.08 890.4 L1105.10 929.5 L1105.13 923.5 L1105.15 914.5 L1105.18 929.5 L1105.20 929.5 L1105.22 922.5 L1105.25 890.7 L1105.27 923.8 L1105.30 914.7 L1105.32 921.5 L1105.34 929.5 L1105.37 902.7 L1105.39 929.5 L1105.42 910.7 L1105.44 908.3 L1105.46 895.7 L1105.49 901.3 L1105.51 909.0 L1105.54 919.5 L1105.56 929.5 L1105.58 904.8 L1105.61 909.8 L1105.63 913.2 L1105.65 924.7 L1105.68 912.4 L1105.70 926.2 L1105.73 903.7 L1105.75 896.5 L1105.77 921.8 L1105.80 929.4 L1105.82 902.9 L1105.85 896.9 L1105.87 926.2 L1105.89 898.5 L1105.92 929.5 L1105.94 927.4 L1105.96 904.2 L1105.99 914.7 L1106.01 897.6 L1106.04 900.1 L1106.06 912.4 L1106.08 929.5 L1106.11 929.5 L1106.13 929.5 L1106.15 924.6 L1106.18 922.0 L1106.20 918.8 L1106.23 925.5 L1106.25 918.2 L1106.27 914.2 L1106.30 929.5 L1106.32 910.4 L1106.35 914.5 L1106.37 926.8 L1106.39 929.5 L1106.42 912.1 L1106.44 915.6 L1106.46 914.4 L1106.49 906.6 L1106.51 912.5 L1106.54 929.5 L1106.56 905.6 L1106.58 917.4 L1106.61 909.7 L1106.63 921.8 L1106.65 929.5 L1106.68 901.9 L1106.70 917.8 L1106.72 905.6 L1106.75 925.1 L1106.77 926.8 L1106.80 907.1 L1106.82 907.5 L1106.84 910.5 L1106.87 911.5 L1106.89 929.5 L1106.91 929.5 L1106.94 929.5 L1106.96 914.1 L1106.99 916.6 L1107.01 906.3 L1107.03 916.8 L1107.06 929.5 L1107.08 900.4 L1107.10 914.1 L1107.13 906.0 L1107.15 929.5 L1107.17 910.5 L1107.20 917.9 L1107.22 897.4 L1107.25 927.5 L1107.27 919.0 L1107.29 929.5 L1107.32 929.3 L1107.34 929.5 L1107.36 908.9 L1107.39 908.4 L1107.41 922.8 L1107.43 897.2 L1107.46 929.5 L1107.48 929.3 L1107.51 918.2 L1107.53 912.9 L1107.55 899.5 L1107.58 920.8 L1107.60 929.5 L1107.62 902.1 L1107.65 901.0 L1107.67 927.3 L1107.69 917.2 L1107.72 929.5 L1107.74 914.9 L1107.76 929.5 L1107.79 929.5 L1107.81 911.3 L1107.84 920.0 L1107.86 922.3 L1107.88 916.4 L1107.91 929.5 L1107.93 928.4 L1107.95 929.5 L1107.98 908.6 L1108.00 918.7 L1108.02 920.3 L1108.05 922.1 L1108.07 892.6 L1108.09 929.5 L1108.12 916.4 L1108.14 904.4 L1108.16 929.5 L1108.19 920.9 L1108.21 929.5 L1108.24 929.5 L1108.26 924.0 L1108.28 929.5 L1108.31 897.8 L1108.33 911.8 L1108.35 904.6 L1108.38 924.7 L1108.40 907.2 L1108.42 894.8 L1108.45 903.2 L1108.47 905.1 L1108.49 920.2 L1108.52 916.7 L1108.54 917.1 L1108.56 891.7 L1108.59 919.7 L1108.61 908.6 L1108.63 900.6 L1108.66 897.9 L1108.68 904.0 L1108.70 914.5 L1108.73 904.8 L1108.75 917.0 L1108.77 904.6 L1108.80 929.5 L1108.82 929.5 L1108.85 911.5 L1108.87 899.2 L1108.89 929.5 L1108.92 900.1 L1108.94 925.5 L1108.96 929.5 L1108.99 917.9 L1109.01 929.5 L1109.03 903.8 L1109.06 929.4 L1109.08 929.5 L1109.10 929.5 L1109.13 929.5 L1109.15 916.0 L1109.17 919.1 L1109.20 929.5 L1109.22 913.7 L1109.24 908.8 L1109.27 895.3 L1109.29 906.6 L1109.31 903.5 L1109.34 929.5 L1109.36 911.0 L1109.38 912.7 L1109.41 929.5 L1109.43 927.7 L1109.45 915.9 L1109.48 901.5 L1109.50 913.2 L1109.52 910.2 L1109.55 929.5 L1109.57 915.4 L1109.59 929.5 L1109.62 909.4 L1109.64 897.2 L1109.66 929.5 L1109.69 899.5 L1109.71 929.5 L1109.73 922.8 L1109.76 910.0 L1109.78 929.5 L1109.80 915.8 L1109.83 929.5 L1109.85 921.1 L1109.87 929.5 L1109.90 929.5 L1109.92 913.7 L1109.94 927.8 L1109.97 929.5 L1109.99 925.8 L1110.01 894.1 L1110.03 927.6 L1110.06 929.5 L1110.08 906.2 L1110.10 901.0 L1110.13 899.0 L1110.15 920.6 L1110.17 901.7 L1110.20 929.5 L1110.22 915.2 L1110.24 929.5 L1110.27 929.5 L1110.29 915.8 L1110.31 905.7 L1110.34 915.7 L1110.36 923.4 L1110.38 929.5 L1110.41 929.5 L1110.43 911.7 L1110.45 894.2 L1110.48 926.4 L1110.50 927.6 L1110.52 925.5 L1110.55 929.5 L1110.57 929.5 L1110.59 924.4 L1110.61 929.5 L1110.64 902.8 L1110.66 929.5 L1110.68 926.5 L1110.71 901.0 L1110.73 905.0 L1110.75 925.2 L1110.78 911.0 L1110.80 929.5 L1110.82 909.9 L1110.85 918.1 L1110.87 918.9 L1110.89 929.5 L1110.92 910.9 L1110.94 929.5 L1110.96 929.5 L1110.98 921.7 L1111.01 929.5 L1111.03 929.5 L1111.05 929.5 L1111.08 920.7 L1111.10 896.9 L1111.12 907.4 L1111.15 925.7 L1111.17 902.4 L1111.19 925.3 L1111.22 912.6 L1111.24 914.2 L1111.26 929.5 L1111.29 929.5 L1111.31 929.5 L1111.33 916.6 L1111.35 920.3 L1111.38 929.5 L1111.40 929.5 L1111.42 923.6 L1111.45 900.0 L1111.47 929.5 L1111.49 897.1 L1111.52 902.4 L1111.54 926.1 L1111.56 906.4 L1111.58 929.5 L1111.61 927.6 L1111.63 905.0 L1111.65 929.5 L1111.68 929.5 L1111.70 926.0 L1111.72 929.5 L1111.75 929.5 L1111.77 917.7 L1111.79 929.5 L1111.81 929.5 L1111.84 928.2 L1111.86 900.3 L1111.88 913.7 L1111.91 928.7 L1111.93 913.4 L1111.95 905.0 L1111.98 917.0 L1112.00 903.8 L1112.02 917.8 L1112.04 901.4 L1112.07 929.5 L1112.09 907.2 L1112.11 929.5 L1112.14 901.9 L1112.16 924.8 L1112.18 925.4 L1112.21 906.6 L1112.23 924.6 L1112.25 921.0 L1112.27 924.0 L1112.30 906.0 L1112.32 917.9 L1112.34 929.5 L1112.37 924.1 L1112.39 908.5 L1112.41 912.2 L1112.43 929.5 L1112.46 897.9 L1112.48 918.0 L1112.50 919.4 L1112.53 916.0 L1112.55 887.7 L1112.57 901.9 L1112.59 929.5 L1112.62 917.0 L1112.64 910.5 L1112.66 916.9 L1112.69 897.9 L1112.71 900.2 L1112.73 929.5 L1112.75 929.5 L1112.78 906.5 L1112.80 911.6 L1112.82 899.9 L1112.85 911.6 L1112.87 919.8 L1112.89 929.5 L1112.91 919.1 L1112.94 929.5 L1112.96 929.5 L1112.98 921.8 L1113.01 897.0 L1113.03 903.5 L1113.05 927.0 L1113.07 903.3 L1113.10 929.5 L1113.12 898.1 L1113.14 898.2 L1113.17 929.5 L1113.19 915.1 L1113.21 921.3 L1113.23 923.2 L1113.26 902.6 L1113.28 912.3 L1113.30 913.7 L1113.33 929.5 L1113.35 929.5 L1113.37 928.3 L1113.39 905.8 L1113.42 917.4 L1113.44 929.5 L1113.46 905.6 L1113.48 912.9 L1113.51 924.1 L1113.53 929.5 L1113.55 894.8 L1113.58 928.1 L1113.60 917.4 L1113.62 920.2 L1113.64 929.5 L1113.67 901.3 L1113.69 923.3 L1113.71 911.6 L1113.74 929.5 L1113.76 929.5 L1113.78 915.5 L1113.80 904.5 L1113.83 929.5 L1113.85 928.7 L1113.87 921.7 L1113.89 929.5 L1113.92 929.5 L1113.94 908.7 L1113.96 928.0 L1113.98 929.5 L1114.01 909.6 L1114.03 929.5 L1114.05 911.5 L1114.08 929.5 L1114.10 922.6 L1114.12 929.5 L1114.14 929.5 L1114.17 929.5 L1114.19 913.8 L1114.21 917.3 L1114.23 922.8 L1114.26 929.5 L1114.28 915.6 L1114.30 929.5 L1114.33 907.5 L1114.35 919.9 L1114.37 904.2 L1114.39 905.5 L1114.42 910.6 L1114.44 897.6 L1114.46 922.1 L1114.48 924.4 L1114.51 914.8 L1114.53 929.5 L1114.55 921.0 L1114.57 927.7 L1114.60 900.7 L1114.62 912.2 L1114.64 894.2 L1114.66 904.9 L1114.69 929.5 L1114.71 903.7 L1114.73 923.3 L1114.75 914.1 L1114.78 927.1 L1114.80 929.5 L1114.82 929.5 L1114.85 929.5 L1114.87 929.5 L1114.89 915.0 L1114.91 929.5 L1114.94 929.5 L1114.96 910.2 L1114.98 912.2 L1115.00 920.1 L1115.03 929.5 L1115.05 901.6 L1115.07 929.5 L1115.09 927.1 L1115.12 923.2 L1115.14 915.3 L1115.16 914.3 L1115.18 915.3 L1115.21 929.5 L1115.23 916.7 L1115.25 929.5 L1115.27 929.5 L1115.30 900.8 L1115.32 893.8 L1115.34 929.5 L1115.36 906.6 L1115.39 929.5 L1115.41 915.2 L1115.43 908.0 L1115.45 892.3 L1115.48 916.2 L1115.50 923.5 L1115.52 898.3 L1115.54 892.1 L1115.57 910.6 L1115.59 929.5 L1115.61 929.5 L1115.63 909.3 L1115.66 915.2 L1115.68 915.7 L1115.70 929.3 L1115.72 910.5 L1115.75 913.3 L1115.77 919.3 L1115.79 908.5 L1115.81 916.3 L1115.84 929.5 L1115.86 919.3 L1115.88 898.5 L1115.90 913.1 L1115.93 922.2 L1115.95 908.3 L1115.97 914.6 L1115.99 921.7 L1116.02 913.7 L1116.04 906.1 L1116.06 929.5 L1116.08 899.3 L1116.10 929.5 L1116.13 901.4 L1116.15 921.4 L1116.17 921.0 L1116.19 915.4 L1116.22 924.7 L1116.24 929.5 L1116.26 911.8 L1116.28 898.7 L1116.31 906.8 L1116.33 929.5 L1116.35 923.4 L1116.37 929.5 L1116.40 914.5 L1116.42 911.9 L1116.44 928.1 L1116.46 921.9 L1116.49 929.5 L1116.51 904.9 L1116.53 912.7 L1116.55 928.1 L1116.57 929.5 L1116.60 917.6 L1116.62 929.5 L1116.64 902.1 L1116.66 925.3 L1116.69 912.1 L1116.71 928.1 L1116.73 910.8 L1116.75 906.1 L1116.78 909.6 L1116.80 929.5 L1116.82 929.2 L1116.84 929.5 L1116.86 915.3 L1116.89 899.0 L1116.91 929.5 L1116.93 909.0 L1116.95 929.5 L1116.98 918.3 L1117.00 916.5 L1117.02 895.4 L1117.04 907.7 L1117.07 929.5 L1117.09 917.1 L1117.11 929.5 L1117.13 929.5 L1117.15 920.2 L1117.18 929.5 L1117.20 887.4 L1117.22 914.7 L1117.24 920.1 L1117.27 897.8 L1117.29 929.5 L1117.31 904.0 L1117.33 922.2 L1117.35 909.5 L1117.38 913.9 L1117.40 917.2 L1117.42 910.2 L1117.44 905.1 L1117.47 926.4 L1117.49 924.3 L1117.51 899.9 L1117.53 929.5 L1117.55 901.6 L1117.58 907.4 L1117.60 909.8 L1117.62 913.1 L1117.64 918.1 L1117.67 929.5 L1117.69 901.2 L1117.71 921.7 L1117.73 924.1 L1117.75 908.8 L1117.78 912.7 L1117.80 916.2 L1117.82 929.5 L1117.84 929.5 L1117.87 917.6 L1117.89 898.9 L1117.91 912.7 L1117.93 929.5 L1117.95 915.7 L1117.98 914.0 L1118.00 924.7 L1118.02 896.2 L1118.04 925.2 L1118.06 927.2 L1118.09 901.7 L1118.11 915.0 L1118.13 929.5 L1118.15 908.8 L1118.18 919.6 L1118.20 912.1 L1118.22 920.6 L1118.24 913.9 L1118.26 912.0 L1118.29 929.5 L1118.31 927.5 L1118.33 929.5 L1118.35 911.6 L1118.37 916.9 L1118.40 912.8 L1118.42 929.5 L1118.44 912.9 L1118.46 926.7 L1118.49 904.9 L1118.51 920.0 L1118.53 909.0 L1118.55 929.5 L1118.57 912.8 L1118.60 929.5 L1118.62 921.0 L1118.64 911.8 L1118.66 920.3 L1118.68 929.5 L1118.71 927.4 L1118.73 929.5 L1118.75 921.0 L1118.77 923.4 L1118.79 903.0 L1118.82 929.5 L1118.84 924.5 L1118.86 924.9 L1118.88 910.2 L1118.90 929.5 L1118.93 919.2 L1118.95 910.8 L1118.97 929.5 L1118.99 929.5 L1119.01 926.4 L1119.04 929.5 L1119.06 927.4 L1119.08 913.3 L1119.10 929.5 L1119.12 929.5 L1119.15 926.0 L1119.17 915.3 L1119.19 918.0 L1119.21 896.3 L1119.23 929.5 L1119.26 929.5 L1119.28 922.1 L1119.30 916.5 L1119.32 929.5 L1119.34 893.0 L1119.37 913.8 L1119.39 907.8 L1119.41 922.7 L1119.43 912.0 L1119.45 922.6 L1119.48 929.5 L1119.50 914.2 L1119.52 901.3 L1119.54 891.2 L1119.56 929.5 L1119.59 916.5 L1119.61 915.4 L1119.63 894.3 L1119.65 900.6 L1119.67 883.4 L1119.70 929.5 L1119.72 896.3 L1119.74 910.6 L1119.76 916.6 L1119.78 920.9 L1119.81 906.5 L1119.83 924.4 L1119.85 924.0 L1119.87 929.5 L1119.89 899.9 L1119.91 909.5 L1119.94 900.4 L1119.96 909.2 L1119.98 906.0 L1120.00 894.2 L1120.02 929.5 L1120.05 908.6 L1120.07 929.5 L1120.09 929.5 L1120.11 929.5 L1120.13 893.3 L1120.16 921.4 L1120.18 929.5 L1120.20 923.6 L1120.22 922.2 L1120.24 914.5 L1120.26 929.5 L1120.29 919.0 L1120.31 911.6 L1120.33 917.3 L1120.35 916.3 L1120.37 904.7 L1120.40 925.6 L1120.42 929.5 L1120.44 924.6 L1120.46 890.1 L1120.48 913.6 L1120.50 929.5 L1120.53 901.8 L1120.55 917.7 L1120.57 926.1 L1120.59 918.9 L1120.61 910.6 L1120.64 891.7 L1120.66 927.3 L1120.68 903.6 L1120.70 921.9 L1120.72 918.4 L1120.74 928.4 L1120.77 900.7 L1120.79 929.5 L1120.81 929.5 L1120.83 929.5 L1120.85 904.4 L1120.88 928.1 L1120.90 912.4 L1120.92 926.9 L1120.94 926.8 L1120.96 913.6 L1120.98 929.5 L1121.01 914.7 L1121.03 915.9 L1121.05 927.8 L1121.07 902.7 L1121.09 929.5 L1121.11 910.5 L1121.14 929.5 L1121.16 902.3 L1121.18 901.2 L1121.20 921.2 L1121.22 906.7 L1121.24 914.7 L1121.27 905.0 L1121.29 928.2 L1121.31 929.1 L1121.33 926.0 L1121.35 901.7 L1121.38 895.6 L1121.40 920.7 L1121.42 898.5 L1121.44 927.7 L1121.46 919.1 L1121.48 929.5 L1121.51 929.5 L1121.53 924.2 L1121.55 929.5 L1121.57 917.4 L1121.59 908.7 L1121.61 896.8 L1121.64 926.9 L1121.66 924.7 L1121.68 923.0 L1121.70 917.5 L1121.72 915.1 L1121.74 929.5 L1121.77 912.0 L1121.79 901.8 L1121.81 929.5 L1121.83 929.5 L1121.85 929.5 L1121.87 929.5 L1121.90 914.3 L1121.92 902.6 L1121.94 916.6 L1121.96 916.5 L1121.98 912.3 L1122.00 929.5 L1122.03 906.8 L1122.05 929.5 L1122.07 905.2 L1122.09 908.2 L1122.11 929.5 L1122.13 906.1 L1122.15 927.9 L1122.18 907.7 L1122.20 913.1 L1122.22 915.5 L1122.24 906.6 L1122.26 929.5 L1122.28 929.5 L1122.31 929.5 L1122.33 902.6 L1122.35 892.6 L1122.37 914.3 L1122.39 928.8 L1122.41 918.7 L1122.44 929.5 L1122.46 929.5 L1122.48 925.3 L1122.50 907.1 L1122.52 912.7 L1122.54 896.8 L1122.56 912.4 L1122.59 929.5 L1122.61 909.3 L1122.63 903.7 L1122.65 918.3 L1122.67 929.5 L1122.69 923.3 L1122.72 899.8 L1122.74 913.8 L1122.76 905.7 L1122.78 929.5 L1122.80 913.3 L1122.82 914.3 L1122.84 929.5 L1122.87 908.4 L1122.89 914.4 L1122.91 929.5 L1122.93 908.8 L1122.95 918.2 L1122.97 923.3 L1123.00 909.9 L1123.02 922.3 L1123.04 913.3 L1123.06 929.5 L1123.08 918.9 L1123.10 927.7 L1123.12 919.6 L1123.15 925.9 L1123.17 912.0 L1123.19 901.7 L1123.21 910.9 L1123.23 909.4 L1123.25 890.1 L1123.27 929.5 L1123.30 917.4 L1123.32 915.6 L1123.34 926.3 L1123.36 896.6 L1123.38 900.5 L1123.40 927.0 L1123.42 894.2 L1123.45 929.5 L1123.47 916.7 L1123.49 929.5 L1123.51 929.5 L1123.53 912.6 L1123.55 910.0 L1123.57 913.6 L1123.60 929.5 L1123.62 914.7 L1123.64 927.1 L1123.66 929.5 L1123.68 928.9 L1123.70 916.8 L1123.72 928.5 L1123.75 916.0 L1123.77 919.7 L1123.79 913.0 L1123.81 929.5 L1123.83 929.5 L1123.85 919.1 L1123.87 918.7 L1123.90 899.0 L1123.92 919.0 L1123.94 929.5 L1123.96 905.8 L1123.98 929.5 L1124.00 906.3 L1124.02 926.6 L1124.05 907.4 L1124.07 920.3 L1124.09 929.5 L1124.11 892.9 L1124.13 929.5 L1124.15 917.1 L1124.17 905.8 L1124.19 908.3 L1124.22 918.4 L1124.24 928.2 L1124.26 902.8 L1124.28 896.5 L1124.30 905.2 L1124.32 922.1 L1124.34 912.1 L1124.37 929.5 L1124.39 927.2 L1124.41 910.6 L1124.43 919.9 L1124.45 901.1 L1124.47 920.8 L1124.49 922.7 L1124.51 905.3 L1124.54 923.7 L1124.56 900.7 L1124.58 929.5 L1124.60 917.9 L1124.62 929.5 L1124.64 923.8 L1124.66 904.3 L1124.68 927.4 L1124.71 921.0 L1124.73 910.9 L1124.75 925.1 L1124.77 929.3 L1124.79 924.3 L1124.81 904.4 L1124.83 929.5 L1124.85 929.5 L1124.88 913.1 L1124.90 929.5 L1124.92 929.5 L1124.94 909.5 L1124.96 903.1 L1124.98 905.4 L1125.00 915.3 L1125.02 900.8 L1125.05 905.1 L1125.07 927.3 L1125.09 890.4 L1125.11 920.7 L1125.13 912.0 L1125.15 925.9 L1125.17 906.0 L1125.19 914.8 L1125.22 904.0 L1125.24 889.7 L1125.26 929.5 L1125.28 910.3 L1125.30 907.4 L1125.32 929.5 L1125.34 910.4 L1125.36 917.4 L1125.39 900.5 L1125.41 912.0 L1125.43 929.5 L1125.45 929.5 L1125.47 929.5 L1125.49 929.5 L1125.51 904.7 L1125.53 894.6 L1125.55 899.9 L1125.58 922.4 L1125.60 917.5 L1125.62 910.2 L1125.64 925.8 L1125.66 904.2 L1125.68 920.3 L1125.70 912.1 L1125.72 900.3 L1125.75 929.5 L1125.77 902.5 L1125.79 929.5 L1125.81 928.9 L1125.83 912.8 L1125.85 913.5 L1125.87 903.4 L1125.89 900.3 L1125.91 924.8 L1125.94 910.2 L1125.96 918.1 L1125.98 910.1 L1126.00 906.0 L1126.02 901.4 L1126.04 928.9 L1126.06 912.6 L1126.08 900.9 L1126.10 929.5 L1126.13 900.9 L1126.15 904.4 L1126.17 901.1 L1126.19 917.9 L1126.21 929.5 L1126.23 891.9 L1126.25 929.5 L1126.27 925.0 L1126.29 929.5 L1126.32 912.1 L1126.34 912.7 L1126.36 897.4 L1126.38 905.7 L1126.40 929.5 L1126.42 906.6 L1126.44 929.5 L1126.46 929.5 L1126.48 929.5 L1126.50 900.1 L1126.53 912.1 L1126.55 929.5 L1126.57 907.7 L1126.59 905.0 L1126.61 890.3 L1126.63 916.7 L1126.65 917.4 L1126.67 903.6 L1126.69 905.6 L1126.71 921.3 L1126.74 901.8 L1126.76 929.5 L1126.78 929.5 L1126.80 912.0 L1126.82 899.7 L1126.84 918.4 L1126.86 907.1 L1126.88 898.2 L1126.90 925.5 L1126.92 917.9 L1126.95 906.2 L1126.97 905.2 L1126.99 926.4 L1127.01 929.5 L1127.03 909.4 L1127.05 919.1 L1127.07 904.0 L1127.09 913.9 L1127.11 918.9 L1127.13 907.6 L1127.16 920.0 L1127.18 917.1 L1127.20 893.5 L1127.22 899.1 L1127.24 911.9 L1127.26 900.7 L1127.28 917.4 L1127.30 919.5 L1127.32 921.0 L1127.34 929.5 L1127.37 920.2 L1127.39 929.5 L1127.41 898.9 L1127.43 929.5 L1127.45 929.5 L1127.47 919.4 L1127.49 929.5 L1127.51 917.6 L1127.53 912.8 L1127.55 901.4 L1127.57 914.6 L1127.60 925.9 L1127.62 929.5 L1127.64 929.5 L1127.66 916.2 L1127.68 929.5 L1127.70 910.3 L1127.72 890.1 L1127.74 912.5 L1127.76 917.2 L1127.78 929.5 L1127.80 904.7 L1127.83 891.3 L1127.85 926.5 L1127.87 902.9 L1127.89 929.5 L1127.91 918.4 L1127.93 900.2 L1127.95 916.4 L1127.97 929.5 L1127.99 904.3 L1128.01 929.5 L1128.03 894.9 L1128.05 900.9 L1128.08 919.7 L1128.10 923.8 L1128.12 920.1 L1128.14 929.5 L1128.16 903.4 L1128.18 893.9 L1128.20 917.1 L1128.22 909.6 L1128.24 911.4 L1128.26 911.3 L1128.28 929.5 L1128.30 907.0 L1128.33 924.7 L1128.35 918.5 L1128.37 906.9 L1128.39 929.5 L1128.41 905.8 L1128.43 907.6 L1128.45 903.1 L1128.47 925.3 L1128.49 924.8 L1128.51 910.2 L1128.53 899.3 L1128.55 919.8 L1128.58 909.1 L1128.60 917.8 L1128.62 922.8 L1128.64 883.0 L1128.66 894.0 L1128.68 929.5 L1128.70 929.5 L1128.72 897.4 L1128.74 904.5 L1128.76 912.7 L1128.78 929.5 L1128.80 908.0 L1128.82 929.5 L1128.85 897.7 L1128.87 929.5 L1128.89 895.1 L1128.91 920.2 L1128.93 929.5 L1128.95 926.6 L1128.97 929.5 L1128.99 909.7 L1129.01 929.5 L1129.03 929.5 L1129.05 906.7 L1129.07 929.5 L1129.09 929.5 L1129.11 904.1 L1129.14 911.3 L1129.16 929.5 L1129.18 918.9 L1129.20 929.5 L1129.22 913.0 L1129.24 913.6 L1129.26 902.0 L1129.28 906.7 L1129.30 929.5 L1129.32 906.2 L1129.34 929.5 L1129.36 929.5 L1129.38 918.8 L1129.40 907.9 L1129.43 883.3 L1129.45 899.5 L1129.47 929.5 L1129.49 929.5 L1129.51 929.5 L1129.53 907.0 L1129.55 929.5 L1129.57 913.4 L1129.59 910.5 L1129.61 929.5 L1129.63 929.5 L1129.65 924.2 L1129.67 907.3 L1129.69 898.9 L1129.71 902.8 L1129.73 906.3 L1129.76 903.3 L1129.78 918.9 L1129.80 908.4 L1129.82 904.3 L1129.84 929.5 L1129.86 910.6 L1129.88 885.2 L1129.90 888.2 L1129.92 918.1 L1129.94 892.3 L1129.96 918.4 L1129.98 891.8 L1130.00 914.6 L1130.02 921.2 L1130.04 917.6 L1130.06 904.4 L1130.09 929.5 L1130.11 929.5 L1130.13 929.5 L1130.15 929.5 L1130.17 929.5 L1130.19 910.6 L1130.21 917.8 L1130.23 912.4 L1130.25 929.5 L1130.27 902.2 L1130.29 904.9 L1130.31 913.9 L1130.33 917.9 L1130.35 929.5 L1130.37 909.4 L1130.39 885.8 L1130.41 911.5 L1130.44 929.5 L1130.46 898.3 L1130.48 916.8 L1130.50 920.4 L1130.52 929.5 L1130.54 909.1 L1130.56 920.8 L1130.58 929.5 L1130.60 929.5 L1130.62 918.8 L1130.64 909.5 L1130.66 922.9 L1130.68 927.5 L1130.70 924.5 L1130.72 924.3 L1130.74 911.4 L1130.76 926.6 L1130.78 910.1 L1130.80 905.3 L1130.83 898.6 L1130.85 918.3 L1130.87 902.5 L1130.89 907.3 L1130.91 908.0 L1130.93 910.9 L1130.95 912.7 L1130.97 929.5 L1130.99 917.2 L1131.01 918.2 L1131.03 912.1 L1131.05 918.1 L1131.07 929.5 L1131.09 917.1 L1131.11 916.6 L1131.13 910.1 L1131.15 903.2 L1131.17 904.5 L1131.19 898.0 L1131.21 907.5 L1131.23 893.9 L1131.26 912.7 L1131.28 919.3 L1131.30 899.6 L1131.32 929.3 L1131.34 914.2 L1131.36 921.7 L1131.38 913.3 L1131.40 929.5 L1131.42 924.6 L1131.44 900.0 L1131.46 918.3 L1131.48 906.7 L1131.50 928.7 L1131.52 911.0 L1131.54 905.0 L1131.56 893.2 L1131.58 929.5 L1131.60 899.9 L1131.62 906.2 L1131.64 929.5 L1131.66 895.1 L1131.68 912.6 L1131.70 913.5 L1131.72 924.7 L1131.75 929.5 L1131.77 929.5 L1131.79 909.0 L1131.81 897.8 L1131.83 904.7 L1131.85 886.7 L1131.87 907.0 L1131.89 921.7 L1131.91 929.5 L1131.93 898.8 L1131.95 907.0 L1131.97 929.5 L1131.99 920.1 L1132.01 912.2 L1132.03 897.0 L1132.05 895.6 L1132.07 904.8 L1132.09 921.5 L1132.11 895.8 L1132.13 916.4 L1132.15 929.5 L1132.17 884.9 L1132.19 907.8 L1132.21 912.8 L1132.23 921.2 L1132.25 928.1 L1132.27 924.7 L1132.30 913.6 L1132.32 909.8 L1132.34 922.0 L1132.36 914.7 L1132.38 929.5 L1132.40 917.6 L1132.42 920.1 L1132.44 924.1 L1132.46 915.6 L1132.48 916.0 L1132.50 924.0 L1132.52 920.8 L1132.54 929.5 L1132.56 908.6 L1132.58 916.2 L1132.60 929.5 L1132.62 929.5 L1132.64 918.7 L1132.66 908.6 L1132.68 903.2 L1132.70 913.0 L1132.72 913.4 L1132.74 913.7 L1132.76 906.6 L1132.78 915.6 L1132.80 919.6 L1132.82 899.2 L1132.84 923.8 L1132.86 926.7 L1132.88 904.0 L1132.90 906.4 L1132.92 894.0 L1132.94 915.3 L1132.96 924.7 L1132.98 912.9 L1133.00 920.4 L1133.03 921.1 L1133.05 894.7 L1133.07 895.6 L1133.09 916.8 L1133.11 929.5 L1133.13 926.5 L1133.15 914.2 L1133.17 906.8 L1133.19 900.9 L1133.21 923.2 L1133.23 929.5 L1133.25 912.1 L1133.27 898.1 L1133.29 907.5 L1133.31 926.5 L1133.33 929.5 L1133.35 912.4 L1133.37 929.5 L1133.39 912.0 L1133.41 892.0 L1133.43 904.5 L1133.45 929.5 L1133.47 926.4 L1133.49 898.2 L1133 929 L138 929Z" fill="rgba(255,255,0,0.12)"/>
<path d="M138.00 842.1 L145.00 836.0 L153.50 818.3 L160.50 827.0 L167.00 818.3 L174.00 821.9 L180.30 823.6 L186.40 828.9 L192.60 867.6 L198.20 836.5 L204.50 841.6 L209.30 840.4 L214.20 861.5 L219.30 853.6 L224.30 823.1 L229.00 825.4 L238.40 846.5 L242.20 779.6 L245.90 778.4 L251.60 830.1 L255.10 821.3 L259.50 827.1 L262.30 854.4 L270.00 822.4 L274.40 836.5 L277.10 822.4 L284.10 830.7 L287.60 842.1 L291.70 848.3 L294.30 821.3 L297.30 828.0 L303.50 819.6 L307.00 823.1 L311.40 822.7 L314.00 817.5 L317.60 791.0 L320.20 777.0 L324.60 765.5 L328.50 760.2 L330.80 762.0 L333.80 777.9 L335.50 779.6 L338.00 763.9 L340.10 747.2 L343.30 749.0 L345.40 778.0 L347.70 748.1 L350.30 732.3 L352.10 731.4 L354.40 747.2 L358.20 721.7 L361.40 738.4 L363.90 723.5 L367.00 737.5 L369.30 722.6 L371.50 742.8 L373.60 736.7 L375.50 756.0 L377.60 724.3 L381.10 735.8 L386.40 767.5 L388.70 735.8 L390.80 749.0 L391.70 738.4 L393.50 758.7 L397.90 742.8 L398.70 757.8 L400.50 724.3 L402.80 780.7 L404.00 751.6 L408.40 738.4 L410.20 771.0 L411.60 733.1 L413.70 759.5 L416.30 750.7 L418.10 745.5 L420.70 765.7 L422.50 760.4 L425.50 772.7 L426.40 747.2 L429.50 750.7 L430.40 741.0 L433.00 756.9 L434.50 738.4 L437.50 762.2 L438.70 747.2 L442.20 740.2 L445.40 720.8 L448.90 716.4 L452.80 710.2 L455.60 713.8 L457.70 723.5 L461.20 741.0 L464.40 720.8 L466.50 720.8 L470.00 737.5 L474.40 730.5 L477.40 744.6 L479.70 727.9 L482.40 763.9 L484.50 771.0 L485.90 742.8 L488.00 734.0 L489.10 755.1 L490.30 719.0 L491.50 756.0 L492.90 730.5 L495.60 726.1 L497.30 744.6 L498.60 721.7 L500.00 744.6 L502.60 716.4 L504.40 701.4 L507.00 712.9 L510.20 705.8 L513.20 724.3 L514.90 709.4 L516.70 760.4 L518.00 721.7 L521.10 734.0 L523.40 720.8 L526.40 756.0 L528.10 741.9 L531.70 741.0 L532.50 756.0 L534.30 781.5 L536.10 750.7 L538.00 751.6 L539.80 756.9 L541.50 783.3 L542.90 746.3 L544.50 744.6 L545.40 765.7 L547.20 741.0 L549.40 738.4 L551.70 725.2 L553.00 730.5 L555.30 721.7 L556.50 729.6 L558.60 721.7 L560.50 747.2 L561.80 734.9 L563.50 748.1 L564.40 734.9 L566.50 744.6 L568.80 738.4 L570.60 732.3 L572.90 741.0 L574.10 734.9 L577.60 747.2 L578.80 731.4 L581.50 792.1 L582.90 733.1 L585.20 760.4 L587.00 729.6 L588.70 756.9 L590.80 727.9 L592.90 749.0 L594.30 725.2 L596.60 761.3 L598.20 731.4 L600.00 786.8 L601.70 738.4 L604.00 754.3 L607.00 766.6 L609.30 734.9 L611.60 757.8 L613.40 727.9 L615.50 744.6 L616.90 722.6 L618.60 738.4 L620.70 717.3 L623.40 727.9 L625.10 722.6 L626.60 741.0 L629.50 737.5 L631.00 778.0 L633.10 732.3 L634.80 765.7 L636.60 733.1 L638.40 787.7 L640.50 741.0 L642.80 786.0 L644.50 746.3 L646.30 788.6 L648.00 739.3 L650.30 771.9 L652.40 741.0 L654.50 765.7 L656.30 737.5 L659.10 751.6 L661.20 734.0 L664.40 746.3 L668.30 749.9 L671.80 751.6 L674.40 756.9 L678.00 749.0 L680.60 763.0 L682.70 744.6 L685.50 765.7 L687.30 744.6 L690.30 765.7 L692.00 751.6 L692.47 753.7 L692.75 773.4 L693.04 757.8 L693.33 787.8 L693.61 778.1 L693.90 787.1 L694.19 791.8 L694.47 777.9 L694.75 786.2 L695.04 761.4 L695.32 819.7 L695.60 790.9 L695.89 846.3 L696.17 767.7 L696.45 793.5 L696.73 799.6 L697.01 781.8 L697.29 771.0 L697.57 774.6 L697.85 774.0 L698.13 803.1 L698.41 771.2 L698.68 807.0 L698.96 786.3 L699.24 791.2 L699.51 793.6 L699.79 792.2 L700.07 797.2 L700.34 794.5 L700.61 783.4 L700.89 802.4 L701.16 780.7 L701.44 800.8 L701.71 804.2 L701.98 805.0 L702.25 782.7 L702.52 804.5 L702.79 839.5 L703.06 788.0 L703.33 781.0 L703.60 790.7 L703.87 824.9 L704.14 774.0 L704.41 761.6 L704.68 788.3 L704.94 796.3 L705.21 803.5 L705.48 783.4 L705.74 849.5 L706.01 777.8 L706.27 801.8 L706.54 770.4 L706.80 764.6 L707.07 772.9 L707.33 767.9 L707.59 788.1 L707.86 790.3 L708.12 774.8 L708.38 822.7 L708.64 782.2 L708.90 772.9 L709.16 774.2 L709.42 799.2 L709.68 818.2 L709.94 773.1 L710.20 763.3 L710.46 801.6 L710.72 776.4 L710.98 839.7 L711.23 786.5 L711.49 792.6 L711.75 780.1 L712.00 802.7 L712.26 784.5 L712.52 779.0 L712.77 813.8 L713.03 768.9 L713.28 797.4 L713.53 765.7 L713.79 792.1 L714.04 781.4 L714.29 807.8 L714.55 764.9 L714.80 787.8 L715.05 781.3 L715.30 815.4 L715.55 821.2 L715.80 790.7 L716.05 773.9 L716.30 775.1 L716.55 775.5 L716.80 782.4 L717.05 774.3 L717.30 773.1 L717.54 798.6 L717.79 791.8 L718.04 777.2 L718.28 854.9 L718.53 773.9 L718.78 788.4 L719.02 771.2 L719.27 807.9 L719.51 808.7 L719.76 776.2 L720.00 798.4 L720.24 804.0 L720.49 776.9 L720.73 778.9 L720.97 785.1 L721.22 811.7 L721.46 771.8 L721.70 794.5 L721.94 790.1 L722.18 783.9 L722.42 789.4 L722.66 810.8 L722.90 774.2 L723.14 811.0 L723.38 780.4 L723.62 800.9 L723.86 808.6 L724.10 773.1 L724.33 808.7 L724.57 857.1 L724.81 778.1 L725.05 761.9 L725.28 769.6 L725.52 833.9 L725.75 758.7 L725.99 815.6 L726.23 771.9 L726.46 798.3 L726.69 768.9 L726.93 772.9 L727.16 795.2 L727.40 768.6 L727.63 780.2 L727.86 817.1 L728.09 797.3 L728.33 811.5 L728.56 837.7 L728.79 763.7 L729.02 776.1 L729.25 802.7 L729.48 795.9 L729.71 764.4 L729.94 787.1 L730.17 776.2 L730.40 784.2 L730.63 769.9 L730.86 762.0 L731.09 849.7 L731.32 779.8 L731.54 811.5 L731.77 771.0 L732.00 786.7 L732.22 771.9 L732.45 784.4 L732.68 774.1 L732.90 796.1 L733.13 772.7 L733.35 799.3 L733.58 787.4 L733.80 770.8 L734.03 781.6 L734.25 787.3 L734.48 817.9 L734.70 781.4 L734.92 776.0 L735.14 831.6 L735.37 812.4 L735.59 799.1 L735.81 778.5 L736.03 774.3 L736.25 778.2 L736.48 768.0 L736.70 765.7 L736.92 788.0 L737.14 783.9 L737.36 790.1 L737.58 782.2 L737.80 760.4 L738.01 796.7 L738.23 794.8 L738.45 789.6 L738.67 789.9 L738.89 796.9 L739.10 840.9 L739.32 811.6 L739.54 798.5 L739.76 783.8 L739.97 780.6 L740.19 784.6 L740.40 834.7 L740.62 783.4 L740.84 783.3 L741.05 784.3 L741.27 773.0 L741.48 875.6 L741.69 758.7 L741.91 792.8 L742.12 820.0 L742.33 778.2 L742.55 793.0 L742.76 783.1 L742.97 777.7 L743.19 775.8 L743.40 771.7 L743.61 808.5 L743.82 803.3 L744.03 816.8 L744.24 766.9 L744.45 797.5 L744.66 781.2 L744.87 794.9 L745.08 790.4 L745.29 780.9 L745.50 834.4 L745.71 754.8 L745.92 800.8 L746.13 809.7 L746.34 788.8 L746.55 792.4 L746.75 859.1 L746.96 777.7 L747.17 794.3 L747.37 800.7 L747.58 783.6 L747.79 798.8 L747.99 784.2 L748.20 789.6 L748.41 793.6 L748.61 796.9 L748.82 781.4 L749.02 794.4 L749.23 790.4 L749.43 777.4 L749.63 793.6 L749.84 779.2 L750.04 817.3 L750.25 787.6 L750.45 799.6 L750.65 789.6 L750.85 787.7 L751.06 777.4 L751.26 773.7 L751.46 820.9 L751.66 790.0 L751.86 789.8 L752.07 790.0 L752.27 806.7 L752.47 778.8 L752.67 776.1 L752.87 808.1 L753.07 788.4 L753.27 796.7 L753.47 809.3 L753.67 817.2 L753.86 814.0 L754.06 769.4 L754.26 786.7 L754.46 811.0 L754.66 809.9 L754.86 776.2 L755.05 778.0 L755.25 782.7 L755.45 775.7 L755.65 787.4 L755.84 810.1 L756.04 794.5 L756.23 791.9 L756.43 775.9 L756.63 790.1 L756.82 873.2 L757.02 804.1 L757.21 792.9 L757.41 794.4 L757.60 811.8 L757.80 809.1 L757.99 781.0 L758.18 804.0 L758.38 790.1 L758.57 796.2 L758.76 784.6 L758.96 789.9 L759.15 788.6 L759.34 790.1 L759.54 769.3 L759.73 782.5 L759.92 797.6 L760.11 774.0 L760.30 781.2 L760.49 805.0 L760.68 785.1 L760.88 787.0 L761.07 783.6 L761.26 813.3 L761.45 775.8 L761.64 799.8 L761.83 815.5 L762.02 781.3 L762.20 790.2 L762.39 809.1 L762.58 798.4 L762.77 787.9 L762.96 771.1 L763.15 790.5 L763.34 787.4 L763.52 803.0 L763.71 784.3 L763.90 788.7 L764.09 799.1 L764.27 809.5 L764.46 786.2 L764.65 787.4 L764.83 795.3 L765.02 823.4 L765.20 779.1 L765.39 837.6 L765.58 801.8 L765.76 786.3 L765.95 799.0 L766.13 784.4 L766.31 771.7 L766.50 804.2 L766.68 786.0 L766.87 791.9 L767.05 790.6 L767.23 818.1 L767.42 803.7 L767.60 766.3 L767.78 794.4 L767.97 788.7 L768.15 788.5 L768.33 810.0 L768.51 786.5 L768.70 788.7 L768.88 815.6 L769.06 787.2 L769.24 789.2 L769.42 789.9 L769.60 807.9 L769.78 797.2 L769.96 801.2 L770.15 785.0 L770.33 766.7 L770.51 797.3 L770.69 791.0 L770.86 802.7 L771.04 802.7 L771.22 772.1 L771.40 777.0 L771.58 769.3 L771.76 806.1 L771.94 770.8 L772.12 769.8 L772.30 800.8 L772.47 790.5 L772.65 766.9 L772.83 796.1 L773.01 797.8 L773.18 786.7 L773.36 766.4 L773.54 795.9 L773.71 783.1 L773.89 789.7 L774.07 871.0 L774.24 803.1 L774.42 808.3 L774.59 769.6 L774.77 777.4 L774.94 784.4 L775.12 754.3 L775.29 842.4 L775.47 773.4 L775.64 772.5 L775.82 774.2 L775.99 771.4 L776.17 802.9 L776.34 782.9 L776.51 780.6 L776.69 776.5 L776.86 758.2 L777.03 771.1 L777.21 801.7 L777.38 795.4 L777.55 800.6 L777.72 769.1 L777.90 766.8 L778.07 757.9 L778.24 780.5 L778.41 773.9 L778.58 777.5 L778.75 778.6 L778.92 782.7 L779.10 773.7 L779.27 795.6 L779.44 766.9 L779.61 809.7 L779.78 781.6 L779.95 758.1 L780.12 771.8 L780.29 780.6 L780.46 775.5 L780.63 782.1 L780.80 772.2 L780.96 770.2 L781.13 795.4 L781.30 771.0 L781.47 789.6 L781.64 796.0 L781.81 783.5 L781.97 777.6 L782.14 813.2 L782.31 777.2 L782.48 803.7 L782.64 759.0 L782.81 776.8 L782.98 785.9 L783.15 758.3 L783.31 802.0 L783.48 760.3 L783.65 783.9 L783.81 766.5 L783.98 810.8 L784.14 782.3 L784.31 796.2 L784.47 779.7 L784.64 787.9 L784.80 788.0 L784.97 771.6 L785.13 768.1 L785.30 799.7 L785.46 765.1 L785.63 810.2 L785.79 768.0 L785.96 762.6 L786.12 762.2 L786.28 795.2 L786.45 818.0 L786.61 776.6 L786.77 787.4 L786.94 770.4 L787.10 808.4 L787.26 789.1 L787.43 766.0 L787.59 759.9 L787.75 789.9 L787.91 758.6 L788.07 800.3 L788.24 772.5 L788.40 770.1 L788.56 784.5 L788.72 773.8 L788.88 783.7 L789.04 766.8 L789.20 810.5 L789.36 774.4 L789.52 801.6 L789.68 767.1 L789.84 798.0 L790.00 833.0 L790.16 777.4 L790.32 758.8 L790.48 777.1 L790.64 788.5 L790.80 771.0 L790.96 784.2 L791.12 764.5 L791.28 780.9 L791.44 793.8 L791.60 779.7 L791.75 791.1 L791.91 766.2 L792.07 801.7 L792.23 766.8 L792.39 814.3 L792.54 858.2 L792.70 818.0 L792.86 784.3 L793.02 774.9 L793.17 777.3 L793.33 796.2 L793.49 783.4 L793.64 816.3 L793.80 765.9 L793.96 783.2 L794.11 806.4 L794.27 788.3 L794.42 785.8 L794.58 766.0 L794.74 769.1 L794.89 775.1 L795.05 810.6 L795.20 805.0 L795.36 773.5 L795.51 816.2 L795.67 761.5 L795.82 789.1 L795.97 828.9 L796.13 778.7 L796.28 821.2 L796.44 792.3 L796.59 764.0 L796.74 778.6 L796.90 783.3 L797.05 775.3 L797.20 797.7 L797.36 772.4 L797.51 801.1 L797.66 777.7 L797.82 766.3 L797.97 788.4 L798.12 768.3 L798.27 788.3 L798.43 801.6 L798.58 790.5 L798.73 784.8 L798.88 763.5 L799.03 787.2 L799.18 769.1 L799.34 793.6 L799.49 771.4 L799.64 790.5 L799.79 781.3 L799.94 782.3 L800.09 795.0 L800.24 773.6 L800.39 774.0 L800.54 823.2 L800.69 781.1 L800.84 808.2 L800.99 811.8 L801.14 787.4 L801.29 773.7 L801.44 770.7 L801.59 813.0 L801.74 772.3 L801.89 788.6 L802.04 790.4 L802.18 772.7 L802.33 787.8 L802.48 775.4 L802.63 790.9 L802.78 789.8 L802.93 784.2 L803.07 777.4 L803.22 785.9 L803.37 777.9 L803.52 774.2 L803.66 779.7 L803.81 813.7 L803.96 790.5 L804.11 816.4 L804.25 764.5 L804.40 826.6 L804.55 790.4 L804.69 806.7 L804.84 794.1 L804.98 800.2 L805.13 780.4 L805.28 804.2 L805.42 777.1 L805.57 782.2 L805.71 768.4 L805.86 787.5 L806.00 792.7 L806.15 783.7 L806.29 817.9 L806.44 773.4 L806.58 795.1 L806.73 780.8 L806.87 795.6 L807.02 806.4 L807.16 801.4 L807.31 770.8 L807.45 780.6 L807.59 795.0 L807.74 844.1 L807.88 768.2 L808.03 795.5 L808.17 799.2 L808.31 807.6 L808.46 783.4 L808.60 806.9 L808.74 787.9 L808.88 820.1 L809.03 761.9 L809.17 824.1 L809.31 785.3 L809.45 784.9 L809.60 770.4 L809.74 778.1 L809.88 799.9 L810.02 796.5 L810.16 773.4 L810.31 781.6 L810.45 772.6 L810.59 775.2 L810.73 776.0 L810.87 780.4 L811.01 835.6 L811.15 867.3 L811.29 802.5 L811.43 785.8 L811.58 786.4 L811.72 801.1 L811.86 814.8 L812.00 798.9 L812.14 792.1 L812.28 773.5 L812.42 791.2 L812.56 806.0 L812.70 800.7 L812.83 767.3 L812.97 795.7 L813.11 778.8 L813.25 770.7 L813.39 827.9 L813.53 792.5 L813.67 796.7 L813.81 768.7 L813.95 802.9 L814.08 818.2 L814.22 811.7 L814.36 796.0 L814.50 802.7 L814.64 799.9 L814.77 787.1 L814.91 780.3 L815.05 801.4 L815.19 797.9 L815.33 805.9 L815.46 774.3 L815.60 823.6 L815.74 783.4 L815.87 818.5 L816.01 765.4 L816.15 826.2 L816.28 797.0 L816.42 771.4 L816.56 801.1 L816.69 770.3 L816.83 768.7 L816.97 779.1 L817.10 770.1 L817.24 780.2 L817.37 809.0 L817.51 789.0 L817.64 790.3 L817.78 775.6 L817.91 795.0 L818.05 795.6 L818.18 788.2 L818.32 814.8 L818.45 797.9 L818.59 775.3 L818.72 760.7 L818.86 785.8 L818.99 798.3 L819.13 772.1 L819.26 782.6 L819.39 797.9 L819.53 794.0 L819.66 748.2 L819.80 777.6 L819.93 752.3 L820.06 761.5 L820.20 795.9 L820.33 775.2 L820.46 783.3 L820.60 777.0 L820.73 772.3 L820.86 767.4 L820.99 773.3 L821.13 799.7 L821.26 784.8 L821.39 771.2 L821.52 761.5 L821.66 770.6 L821.79 789.6 L821.92 777.7 L822.05 787.6 L822.19 797.3 L822.32 764.2 L822.45 789.2 L822.58 758.6 L822.71 799.2 L822.84 768.0 L822.97 771.9 L823.10 821.4 L823.24 775.7 L823.37 770.3 L823.50 807.3 L823.63 786.6 L823.76 808.2 L823.89 777.6 L824.02 782.0 L824.15 821.7 L824.28 782.5 L824.41 841.8 L824.54 769.8 L824.67 801.7 L824.80 768.8 L824.93 784.0 L825.06 747.6 L825.19 769.8 L825.32 819.6 L825.45 781.5 L825.58 800.7 L825.71 773.6 L825.83 777.8 L825.96 766.5 L826.09 786.2 L826.22 806.5 L826.35 784.8 L826.48 779.4 L826.61 816.9 L826.73 811.0 L826.86 792.4 L826.99 765.8 L827.12 790.5 L827.25 782.8 L827.37 825.5 L827.50 779.7 L827.63 792.9 L827.76 791.5 L827.88 780.7 L828.01 786.7 L828.14 794.2 L828.27 814.5 L828.39 786.1 L828.52 780.8 L828.65 835.1 L828.77 765.9 L828.90 806.1 L829.03 795.4 L829.15 789.3 L829.28 784.8 L829.40 799.9 L829.53 813.2 L829.66 798.7 L829.78 800.2 L829.91 764.7 L830.03 780.7 L830.16 772.5 L830.29 826.6 L830.41 814.1 L830.54 773.3 L830.66 792.1 L830.79 791.7 L830.91 767.0 L831.04 784.3 L831.16 801.3 L831.29 795.3 L831.41 780.2 L831.54 802.7 L831.66 780.9 L831.78 791.2 L831.91 786.2 L832.03 839.5 L832.16 796.5 L832.28 806.6 L832.40 798.2 L832.53 785.2 L832.65 832.4 L832.78 800.5 L832.90 799.5 L833.02 781.6 L833.15 776.6 L833.27 794.0 L833.39 809.5 L833.52 806.9 L833.64 784.9 L833.76 776.0 L833.89 791.9 L834.01 815.5 L834.13 777.4 L834.25 803.5 L834.38 778.0 L834.50 784.2 L834.62 770.9 L834.74 783.8 L834.86 787.3 L834.99 835.9 L835.11 834.0 L835.23 779.5 L835.35 784.7 L835.47 828.4 L835.60 780.2 L835.72 785.5 L835.84 790.2 L835.96 776.0 L836.08 783.3 L836.20 788.7 L836.32 788.5 L836.44 835.7 L836.56 784.0 L836.69 781.4 L836.81 822.2 L836.93 791.5 L837.05 813.4 L837.17 800.0 L837.29 808.6 L837.41 786.5 L837.53 779.6 L837.65 807.4 L837.77 793.0 L837.89 796.9 L838.01 802.4 L838.13 807.4 L838.25 785.6 L838.37 789.2 L838.49 825.0 L838.61 796.1 L838.73 786.5 L838.84 801.0 L838.96 785.5 L839.08 809.5 L839.20 773.2 L839.32 814.2 L839.44 798.4 L839.56 789.8 L839.68 830.7 L839.80 786.4 L839.91 785.6 L840.03 776.5 L840.15 798.2 L840.27 809.2 L840.39 804.7 L840.50 792.8 L840.62 813.5 L840.74 779.8 L840.86 788.9 L840.98 803.4 L841.09 840.8 L841.21 803.0 L841.33 806.2 L841.45 811.6 L841.56 792.9 L841.68 832.4 L841.80 809.6 L841.91 791.1 L842.03 793.2 L842.15 814.5 L842.27 791.7 L842.38 785.0 L842.50 821.4 L842.62 799.4 L842.73 799.0 L842.85 806.1 L842.96 825.8 L843.08 782.9 L843.20 792.0 L843.31 778.7 L843.43 795.1 L843.54 798.8 L843.66 820.0 L843.78 806.7 L843.89 802.4 L844.01 795.2 L844.12 802.4 L844.24 790.2 L844.35 819.8 L844.47 815.0 L844.58 819.4 L844.70 785.1 L844.81 807.7 L844.93 812.8 L845.04 799.9 L845.16 827.0 L845.27 827.1 L845.39 812.3 L845.50 818.3 L845.62 806.9 L845.73 824.5 L845.85 784.6 L845.96 810.1 L846.07 810.1 L846.19 805.3 L846.30 791.3 L846.42 780.7 L846.53 805.0 L846.64 819.0 L846.76 791.4 L846.87 788.9 L846.98 789.4 L847.10 782.8 L847.21 809.0 L847.32 848.6 L847.44 817.4 L847.55 795.2 L847.66 810.4 L847.78 781.6 L847.89 820.8 L848.00 794.0 L848.11 770.5 L848.23 806.9 L848.34 785.9 L848.45 792.1 L848.57 780.8 L848.68 799.0 L848.79 803.6 L848.90 818.3 L849.01 779.0 L849.13 820.2 L849.24 784.7 L849.35 790.3 L849.46 807.4 L849.57 795.1 L849.69 794.8 L849.80 804.6 L849.91 790.3 L850.02 817.6 L850.13 790.0 L850.24 821.7 L850.35 819.0 L850.46 803.5 L850.58 778.5 L850.69 816.7 L850.80 778.3 L850.91 802.2 L851.02 799.0 L851.13 782.1 L851.24 808.1 L851.35 813.3 L851.46 806.0 L851.57 798.3 L851.68 802.8 L851.79 806.3 L851.90 791.4 L852.01 825.4 L852.12 876.1 L852.23 819.3 L852.34 844.1 L852.45 795.8 L852.56 859.4 L852.67 783.3 L852.78 801.8 L852.89 787.3 L853.00 800.9 L853.11 811.5 L853.22 813.0 L853.33 801.1 L853.44 796.6 L853.55 790.4 L853.66 799.1 L853.77 794.4 L853.87 790.7 L853.98 815.0 L854.09 803.9 L854.20 800.8 L854.31 791.0 L854.42 813.2 L854.53 791.0 L854.63 794.0 L854.74 806.1 L854.85 813.2 L854.96 850.4 L855.07 816.2 L855.18 840.9 L855.28 834.4 L855.39 814.7 L855.50 814.5 L855.61 783.7 L855.71 791.9 L855.82 777.3 L855.93 826.4 L856.04 814.9 L856.14 809.9 L856.25 794.6 L856.36 798.3 L856.47 790.2 L856.57 810.1 L856.68 867.9 L856.79 796.5 L856.89 782.5 L857.00 791.0 L857.11 798.5 L857.21 831.5 L857.32 821.2 L857.43 802.6 L857.53 787.2 L857.64 787.6 L857.75 790.2 L857.85 819.3 L857.96 803.5 L858.07 866.9 L858.17 834.0 L858.28 820.8 L858.38 803.8 L858.49 823.2 L858.60 789.2 L858.70 788.1 L858.81 807.7 L858.91 805.4 L859.02 793.3 L859.12 795.1 L859.23 780.3 L859.33 833.9 L859.44 815.5 L859.55 841.7 L859.65 857.0 L859.76 802.8 L859.86 817.0 L859.97 800.7 L860.07 822.9 L860.18 825.6 L860.28 790.1 L860.38 778.9 L860.49 794.0 L860.59 809.4 L860.70 800.8 L860.80 778.0 L860.91 824.8 L861.01 821.1 L861.12 804.3 L861.22 784.0 L861.32 831.6 L861.43 807.4 L861.53 786.6 L861.64 799.0 L861.74 811.7 L861.84 831.3 L861.95 805.5 L862.05 812.5 L862.15 794.3 L862.26 795.9 L862.36 834.5 L862.47 801.6 L862.57 789.2 L862.67 810.4 L862.77 790.6 L862.88 794.3 L862.98 804.7 L863.08 810.3 L863.19 812.8 L863.29 816.7 L863.39 804.2 L863.50 787.0 L863.60 817.9 L863.70 785.9 L863.80 805.6 L863.91 802.8 L864.01 815.0 L864.11 817.4 L864.21 796.5 L864.32 813.9 L864.42 816.2 L864.52 805.8 L864.62 791.9 L864.72 835.7 L864.83 811.3 L864.93 786.8 L865.03 796.3 L865.13 864.2 L865.23 795.9 L865.33 802.4 L865.44 822.3 L865.54 825.2 L865.64 812.8 L865.74 818.9 L865.84 784.2 L865.94 788.9 L866.04 855.3 L866.14 823.3 L866.25 784.1 L866.35 785.2 L866.45 796.1 L866.55 839.4 L866.65 795.2 L866.75 814.5 L866.85 839.2 L866.95 812.8 L867.05 837.0 L867.15 796.9 L867.25 792.0 L867.35 780.9 L867.45 819.6 L867.55 789.1 L867.65 853.2 L867.75 816.5 L867.85 793.4 L867.95 823.2 L868.05 792.2 L868.15 806.7 L868.25 789.1 L868.35 821.5 L868.45 831.9 L868.55 836.1 L868.65 774.6 L868.75 827.2 L868.85 808.4 L868.95 824.2 L869.05 806.1 L869.15 811.3 L869.25 810.1 L869.35 822.3 L869.45 787.0 L869.55 785.0 L869.65 807.8 L869.74 797.5 L869.84 801.6 L869.94 777.5 L870.04 818.2 L870.14 781.4 L870.24 824.7 L870.34 823.1 L870.44 803.9 L870.53 789.6 L870.63 812.5 L870.73 793.7 L870.83 802.7 L870.93 788.8 L871.03 854.4 L871.12 807.5 L871.22 799.6 L871.32 787.7 L871.42 816.9 L871.52 826.4 L871.61 826.3 L871.71 788.1 L871.81 800.0 L871.91 797.5 L872.00 818.9 L872.10 790.6 L872.20 810.0 L872.30 855.5 L872.39 819.3 L872.49 776.7 L872.59 786.1 L872.69 788.6 L872.78 814.3 L872.88 809.5 L872.98 806.0 L873.07 803.3 L873.17 801.3 L873.27 810.0 L873.37 811.8 L873.46 835.0 L873.56 816.6 L873.66 821.1 L873.75 834.3 L873.85 824.6 L873.94 815.5 L874.04 781.5 L874.14 813.4 L874.23 825.9 L874.33 802.0 L874.43 829.1 L874.52 791.6 L874.62 840.5 L874.71 802.3 L874.81 814.7 L874.91 794.7 L875.00 796.7 L875.10 798.6 L875.19 797.6 L875.29 786.9 L875.39 802.2 L875.48 856.5 L875.58 811.6 L875.67 837.7 L875.77 818.1 L875.86 824.2 L875.96 873.9 L876.05 817.4 L876.15 795.4 L876.24 794.3 L876.34 800.8 L876.43 779.4 L876.53 793.5 L876.62 829.6 L876.72 835.2 L876.81 797.4 L876.91 818.4 L877.00 818.7 L877.10 830.0 L877.19 820.2 L877.29 805.5 L877.38 787.0 L877.48 822.7 L877.57 796.6 L877.66 809.8 L877.76 798.7 L877.85 805.6 L877.95 847.3 L878.04 790.0 L878.14 805.3 L878.23 810.8 L878.32 805.6 L878.42 838.4 L878.51 800.1 L878.60 833.4 L878.70 812.9 L878.79 847.9 L878.89 785.7 L878.98 792.1 L879.07 795.3 L879.17 832.1 L879.26 777.3 L879.35 794.1 L879.45 814.2 L879.54 864.6 L879.63 790.3 L879.73 801.1 L879.82 812.5 L879.91 812.7 L880.01 816.1 L880.10 816.6 L880.19 793.5 L880.28 793.9 L880.38 779.9 L880.47 812.8 L880.56 791.9 L880.66 794.1 L880.75 846.5 L880.84 810.3 L880.93 807.8 L881.03 811.0 L881.12 808.1 L881.21 813.1 L881.30 796.0 L881.39 783.9 L881.49 784.1 L881.58 777.6 L881.67 798.3 L881.76 788.9 L881.86 787.3 L881.95 803.6 L882.04 849.0 L882.13 812.8 L882.22 794.9 L882.31 818.1 L882.41 790.7 L882.50 786.6 L882.59 796.1 L882.68 800.3 L882.77 813.1 L882.86 801.8 L882.96 815.4 L883.05 786.3 L883.14 837.3 L883.23 797.8 L883.32 823.4 L883.41 780.7 L883.50 823.1 L883.59 793.1 L883.68 825.7 L883.78 820.8 L883.87 812.2 L883.96 795.3 L884.05 776.7 L884.14 791.5 L884.23 832.3 L884.32 790.1 L884.41 811.6 L884.50 808.1 L884.59 811.8 L884.68 791.2 L884.77 789.4 L884.86 786.7 L884.95 857.7 L885.04 799.6 L885.13 811.4 L885.22 807.4 L885.31 793.2 L885.40 784.5 L885.49 778.3 L885.58 825.7 L885.67 788.8 L885.76 846.7 L885.85 799.0 L885.94 815.5 L886.03 789.3 L886.12 820.0 L886.21 794.5 L886.30 799.1 L886.39 805.5 L886.48 787.8 L886.57 794.4 L886.66 820.7 L886.75 796.0 L886.84 799.8 L886.93 818.4 L887.02 793.5 L887.10 792.1 L887.19 793.3 L887.28 800.0 L887.37 799.3 L887.46 811.1 L887.55 803.7 L887.64 828.4 L887.73 784.4 L887.82 813.5 L887.90 825.8 L887.99 795.8 L888.08 783.3 L888.17 804.7 L888.26 791.1 L888.35 806.2 L888.44 818.5 L888.52 790.7 L888.61 792.5 L888.70 808.3 L888.79 796.1 L888.88 798.9 L888.97 807.7 L889.05 794.2 L889.14 791.1 L889.23 805.5 L889.32 810.2 L889.41 846.0 L889.49 814.4 L889.58 793.0 L889.67 801.5 L889.76 825.4 L889.84 816.1 L889.93 837.0 L890.02 856.0 L890.11 836.2 L890.19 797.9 L890.28 851.0 L890.37 816.4 L890.46 805.2 L890.54 802.4 L890.63 839.0 L890.72 805.0 L890.81 798.4 L890.89 807.9 L890.98 849.1 L891.07 816.3 L891.15 829.8 L891.24 799.4 L891.33 817.0 L891.41 811.9 L891.50 807.6 L891.59 827.4 L891.67 814.6 L891.76 804.3 L891.85 875.5 L891.93 820.4 L892.02 808.3 L892.11 794.6 L892.19 829.2 L892.28 823.1 L892.37 798.4 L892.45 821.9 L892.54 835.5 L892.63 825.3 L892.71 813.3 L892.80 824.3 L892.88 829.3 L892.97 832.0 L893.06 810.5 L893.14 842.4 L893.23 862.4 L893.31 838.3 L893.40 848.1 L893.48 821.0 L893.57 854.1 L893.66 813.4 L893.74 815.4 L893.83 830.8 L893.91 854.1 L894.00 808.0 L894.08 815.2 L894.17 803.9 L894.25 824.2 L894.34 811.7 L894.42 814.2 L894.51 839.5 L894.60 830.5 L894.68 861.8 L894.77 823.0 L894.85 835.5 L894.94 800.4 L895.02 864.4 L895.11 816.4 L895.19 826.3 L895.28 827.7 L895.36 864.5 L895.44 827.0 L895.53 891.7 L895.61 832.9 L895.70 816.0 L895.78 846.9 L895.87 815.4 L895.95 929.5 L896.04 825.9 L896.12 816.6 L896.21 869.2 L896.29 820.6 L896.37 824.1 L896.46 821.6 L896.54 835.8 L896.63 803.4 L896.71 822.9 L896.79 814.1 L896.88 846.9 L896.96 791.4 L897.05 833.0 L897.13 818.5 L897.21 826.4 L897.30 831.0 L897.38 838.7 L897.47 813.2 L897.55 818.0 L897.63 812.3 L897.72 869.7 L897.80 813.9 L897.88 813.3 L897.97 829.6 L898.05 832.2 L898.13 854.1 L898.22 808.2 L898.30 818.1 L898.38 815.1 L898.47 832.7 L898.55 827.0 L898.63 825.3 L898.72 854.7 L898.80 836.6 L898.88 851.3 L898.97 869.1 L899.05 819.9 L899.13 864.8 L899.21 825.6 L899.30 808.3 L899.38 859.1 L899.46 812.3 L899.55 803.9 L899.63 821.1 L899.71 821.1 L899.79 873.4 L899.88 853.0 L899.96 826.4 L900.04 831.0 L900.12 850.7 L900.21 846.8 L900.29 836.9 L900.37 830.4 L900.45 813.5 L900.53 819.7 L900.62 837.3 L900.70 833.8 L900.78 846.6 L900.86 857.3 L900.94 872.1 L901.03 817.6 L901.11 811.1 L901.19 856.9 L901.27 832.9 L901.35 816.7 L901.44 838.9 L901.52 819.8 L901.60 818.9 L901.68 824.0 L901.76 830.3 L901.84 837.5 L901.93 809.9 L902.01 841.1 L902.09 834.5 L902.17 827.6 L902.25 836.7 L902.33 845.0 L902.41 800.9 L902.49 827.4 L902.58 836.7 L902.66 838.3 L902.74 834.8 L902.82 814.9 L902.90 868.4 L902.98 843.1 L903.06 816.9 L903.14 824.8 L903.22 867.8 L903.30 815.5 L903.39 823.6 L903.47 868.8 L903.55 854.4 L903.63 816.2 L903.71 838.7 L903.79 821.2 L903.87 834.3 L903.95 840.5 L904.03 810.7 L904.11 815.2 L904.19 814.7 L904.27 816.8 L904.35 803.3 L904.43 810.7 L904.51 822.1 L904.59 822.6 L904.67 806.8 L904.75 829.2 L904.83 861.1 L904.91 828.8 L904.99 819.5 L905.07 835.1 L905.15 822.5 L905.23 811.7 L905.31 824.2 L905.39 799.3 L905.47 833.0 L905.55 810.6 L905.63 819.3 L905.71 866.4 L905.79 838.2 L905.87 843.8 L905.95 830.6 L906.03 830.1 L906.11 833.8 L906.19 867.4 L906.27 811.4 L906.35 837.5 L906.43 815.6 L906.51 813.6 L906.59 841.6 L906.66 827.7 L906.74 844.1 L906.82 846.9 L906.90 826.9 L906.98 810.6 L907.06 796.6 L907.14 824.1 L907.22 833.7 L907.30 813.3 L907.38 802.9 L907.45 792.7 L907.53 808.7 L907.61 831.5 L907.69 791.9 L907.77 811.0 L907.85 812.4 L907.93 832.0 L908.01 879.4 L908.08 796.3 L908.16 804.9 L908.24 855.0 L908.32 866.5 L908.40 806.4 L908.48 814.4 L908.55 821.9 L908.63 813.6 L908.71 817.4 L908.79 819.8 L908.87 810.8 L908.94 799.7 L909.02 801.9 L909.10 806.3 L909.18 802.2 L909.26 825.6 L909.34 829.4 L909.41 810.4 L909.49 835.5 L909.57 831.0 L909.65 813.2 L909.72 819.1 L909.80 806.6 L909.88 851.8 L909.96 821.8 L910.03 798.0 L910.11 804.6 L910.19 828.1 L910.27 814.2 L910.34 829.4 L910.42 807.8 L910.50 835.1 L910.58 835.7 L910.65 801.5 L910.73 823.2 L910.81 807.0 L910.89 829.9 L910.96 836.8 L911.04 835.9 L911.12 809.5 L911.19 802.7 L911.27 828.4 L911.35 823.8 L911.43 805.9 L911.50 808.8 L911.58 825.1 L911.66 804.8 L911.73 827.9 L911.81 811.6 L911.89 812.6 L911.96 819.3 L912.04 824.0 L912.12 833.9 L912.19 799.6 L912.27 834.3 L912.35 812.1 L912.42 815.2 L912.50 830.1 L912.58 833.0 L912.65 829.2 L912.73 851.9 L912.81 812.5 L912.88 817.1 L912.96 832.4 L913.03 815.4 L913.11 811.0 L913.19 814.3 L913.26 839.8 L913.34 844.5 L913.41 836.5 L913.49 866.7 L913.57 842.3 L913.64 818.9 L913.72 819.3 L913.79 837.8 L913.87 806.4 L913.95 832.1 L914.02 809.3 L914.10 806.3 L914.17 828.4 L914.25 813.4 L914.32 861.2 L914.40 852.5 L914.48 826.9 L914.55 816.4 L914.63 812.6 L914.70 829.3 L914.78 830.1 L914.85 823.9 L914.93 840.2 L915.00 831.0 L915.08 844.5 L915.15 813.1 L915.23 810.8 L915.30 826.0 L915.38 830.0 L915.45 820.9 L915.53 838.9 L915.60 820.0 L915.68 824.1 L915.75 830.6 L915.83 842.1 L915.90 846.1 L915.98 827.0 L916.05 830.1 L916.13 864.7 L916.20 866.3 L916.28 838.2 L916.35 816.0 L916.43 831.4 L916.50 839.6 L916.58 824.7 L916.65 811.2 L916.73 886.1 L916.80 863.0 L916.88 818.6 L916.95 833.1 L917.02 840.0 L917.10 826.8 L917.17 815.4 L917.25 848.0 L917.32 849.6 L917.40 833.0 L917.47 817.4 L917.54 831.6 L917.62 818.3 L917.69 878.7 L917.77 815.4 L917.84 828.2 L917.91 850.8 L917.99 821.6 L918.06 820.2 L918.14 817.9 L918.21 823.6 L918.28 839.1 L918.36 857.2 L918.43 824.4 L918.51 824.8 L918.58 852.2 L918.65 835.6 L918.73 832.3 L918.80 822.9 L918.87 828.8 L918.95 885.5 L919.02 823.1 L919.09 830.0 L919.17 852.0 L919.24 866.1 L919.31 868.2 L919.39 839.3 L919.46 880.3 L919.53 845.4 L919.61 832.5 L919.68 839.7 L919.75 851.9 L919.83 853.1 L919.90 826.0 L919.97 829.3 L920.05 882.4 L920.12 825.2 L920.19 859.9 L920.27 836.1 L920.34 832.6 L920.41 833.0 L920.48 841.8 L920.56 905.4 L920.63 828.7 L920.70 865.1 L920.78 836.6 L920.85 830.2 L920.92 855.9 L920.99 837.0 L921.07 830.3 L921.14 839.6 L921.21 861.0 L921.28 865.0 L921.36 845.6 L921.43 814.9 L921.50 855.7 L921.57 846.5 L921.65 868.8 L921.72 879.8 L921.79 834.3 L921.86 861.9 L921.94 858.9 L922.01 831.3 L922.08 835.1 L922.15 835.3 L922.22 834.2 L922.30 835.0 L922.37 823.0 L922.44 828.6 L922.51 868.2 L922.58 835.6 L922.66 845.2 L922.73 864.3 L922.80 851.8 L922.87 828.2 L922.94 868.9 L923.01 854.9 L923.09 900.2 L923.16 849.0 L923.23 850.6 L923.30 854.9 L923.37 827.2 L923.44 844.2 L923.52 832.0 L923.59 856.6 L923.66 821.0 L923.73 837.9 L923.80 829.5 L923.87 854.0 L923.95 829.5 L924.02 855.9 L924.09 856.1 L924.16 859.5 L924.23 819.8 L924.30 869.4 L924.37 846.9 L924.44 842.7 L924.51 841.2 L924.59 812.6 L924.66 857.1 L924.73 835.7 L924.80 831.7 L924.87 826.9 L924.94 848.2 L925.01 848.0 L925.08 856.0 L925.15 821.0 L925.22 826.0 L925.30 822.1 L925.37 814.6 L925.44 824.9 L925.51 807.6 L925.58 847.6 L925.65 820.3 L925.72 811.7 L925.79 811.2 L925.86 842.9 L925.93 818.3 L926.00 828.8 L926.07 826.2 L926.14 846.6 L926.21 868.8 L926.28 822.0 L926.35 835.5 L926.42 855.8 L926.49 827.9 L926.56 856.2 L926.63 840.4 L926.70 821.0 L926.77 852.1 L926.85 831.4 L926.92 811.0 L926.99 831.7 L927.06 846.6 L927.13 828.3 L927.20 826.6 L927.27 823.7 L927.34 851.5 L927.41 834.5 L927.47 814.7 L927.54 820.9 L927.61 820.7 L927.68 866.6 L927.75 835.2 L927.82 809.7 L927.89 855.1 L927.96 802.4 L928.03 829.1 L928.10 822.2 L928.17 835.4 L928.24 821.7 L928.31 806.5 L928.38 825.2 L928.45 842.2 L928.52 839.4 L928.59 817.9 L928.66 812.3 L928.73 835.7 L928.80 839.7 L928.87 811.6 L928.94 847.7 L929.00 888.1 L929.07 819.7 L929.14 817.5 L929.21 832.3 L929.28 854.6 L929.35 809.6 L929.42 813.6 L929.49 814.5 L929.56 832.8 L929.63 808.2 L929.70 822.8 L929.76 820.7 L929.83 828.4 L929.90 805.4 L929.97 860.0 L930.04 929.5 L930.11 822.4 L930.18 835.6 L930.25 806.4 L930.31 848.2 L930.38 821.3 L930.45 832.3 L930.52 841.8 L930.59 813.0 L930.66 849.8 L930.73 806.3 L930.79 793.5 L930.86 817.9 L930.93 844.8 L931.00 844.8 L931.07 856.6 L931.14 817.6 L931.20 850.2 L931.27 819.5 L931.34 802.1 L931.41 822.9 L931.48 833.7 L931.55 813.9 L931.61 821.5 L931.68 807.4 L931.75 808.1 L931.82 813.8 L931.89 817.6 L931.95 815.7 L932.02 799.2 L932.09 787.9 L932.16 810.7 L932.23 827.7 L932.29 829.7 L932.36 806.5 L932.43 807.3 L932.50 817.8 L932.57 803.8 L932.63 821.7 L932.70 845.1 L932.77 805.0 L932.84 820.9 L932.90 828.0 L932.97 829.9 L933.04 827.5 L933.11 827.5 L933.17 808.1 L933.24 837.1 L933.31 848.9 L933.38 796.3 L933.44 853.3 L933.51 814.9 L933.58 799.0 L933.65 797.8 L933.71 833.5 L933.78 825.7 L933.85 802.3 L933.91 815.7 L933.98 823.6 L934.05 899.5 L934.12 810.8 L934.18 831.2 L934.25 807.1 L934.32 805.1 L934.38 803.3 L934.45 813.7 L934.52 822.7 L934.58 809.5 L934.65 803.4 L934.72 806.0 L934.79 799.0 L934.85 804.9 L934.92 810.1 L934.99 817.6 L935.05 804.5 L935.12 816.6 L935.19 815.0 L935.25 864.3 L935.32 816.9 L935.39 853.8 L935.45 816.3 L935.52 805.2 L935.59 821.6 L935.65 802.7 L935.72 803.9 L935.79 798.3 L935.85 827.3 L935.92 861.5 L935.98 813.7 L936.05 811.7 L936.12 814.6 L936.18 811.7 L936.25 826.7 L936.32 813.3 L936.38 803.2 L936.45 840.2 L936.51 820.8 L936.58 788.9 L936.65 838.6 L936.71 829.0 L936.78 811.8 L936.84 823.6 L936.91 848.4 L936.98 813.7 L937.04 815.0 L937.11 809.7 L937.17 820.1 L937.24 825.3 L937.31 829.5 L937.37 855.3 L937.44 802.9 L937.50 812.4 L937.57 839.0 L937.64 833.5 L937.70 821.8 L937.77 826.2 L937.83 811.4 L937.90 854.1 L937.96 820.0 L938.03 813.9 L938.09 804.8 L938.16 801.4 L938.23 844.8 L938.29 834.4 L938.36 793.9 L938.42 810.8 L938.49 817.1 L938.55 817.7 L938.62 812.4 L938.68 844.5 L938.75 811.9 L938.81 819.3 L938.88 850.5 L938.94 824.3 L939.01 817.0 L939.07 811.3 L939.14 813.4 L939.20 822.9 L939.27 833.3 L939.33 808.4 L939.40 812.8 L939.46 813.5 L939.53 812.5 L939.59 847.5 L939.66 819.7 L939.72 809.1 L939.79 811.4 L939.85 836.3 L939.92 804.0 L939.98 827.2 L940.05 793.3 L940.11 805.6 L940.18 797.8 L940.24 835.0 L940.31 803.4 L940.37 807.2 L940.44 797.6 L940.50 808.7 L940.57 829.8 L940.63 829.0 L940.69 847.2 L940.76 855.1 L940.82 820.4 L940.89 849.3 L940.95 800.2 L941.02 849.9 L941.08 815.6 L941.15 805.7 L941.21 830.9 L941.27 840.2 L941.34 813.7 L941.40 800.5 L941.47 841.9 L941.53 831.3 L941.60 822.7 L941.66 867.6 L941.72 796.2 L941.79 798.1 L941.85 802.9 L941.92 794.2 L941.98 829.2 L942.04 825.1 L942.11 802.6 L942.17 805.4 L942.24 806.4 L942.30 824.4 L942.36 827.8 L942.43 864.9 L942.49 814.3 L942.55 870.5 L942.62 817.4 L942.68 815.8 L942.75 810.4 L942.81 809.6 L942.87 868.2 L942.94 891.7 L943.00 830.7 L943.06 807.4 L943.13 807.8 L943.19 806.5 L943.25 815.1 L943.32 833.1 L943.38 800.9 L943.45 822.7 L943.51 830.1 L943.57 798.6 L943.64 819.3 L943.70 837.5 L943.76 825.2 L943.83 820.0 L943.89 846.8 L943.95 826.7 L944.02 815.8 L944.08 818.2 L944.14 858.4 L944.20 844.7 L944.27 852.5 L944.33 825.5 L944.39 808.0 L944.46 809.7 L944.52 818.4 L944.58 832.3 L944.65 793.6 L944.71 840.0 L944.77 838.9 L944.84 824.3 L944.90 794.6 L944.96 840.1 L945.02 820.5 L945.09 832.0 L945.15 827.2 L945.21 835.6 L945.27 820.6 L945.34 865.5 L945.40 864.0 L945.46 857.1 L945.53 829.9 L945.59 817.5 L945.65 820.0 L945.71 815.8 L945.78 853.0 L945.84 841.1 L945.90 840.8 L945.96 843.7 L946.03 888.1 L946.09 834.6 L946.15 818.5 L946.21 839.1 L946.28 816.4 L946.34 831.0 L946.40 812.0 L946.46 848.1 L946.53 825.9 L946.59 817.4 L946.65 857.8 L946.71 808.1 L946.77 859.5 L946.84 840.1 L946.90 812.3 L946.96 840.5 L947.02 830.3 L947.08 855.7 L947.15 831.1 L947.21 824.5 L947.27 861.0 L947.33 809.4 L947.39 842.4 L947.46 810.6 L947.52 819.0 L947.58 811.5 L947.64 851.5 L947.70 825.9 L947.77 839.5 L947.83 818.7 L947.89 840.0 L947.95 835.5 L948.01 811.2 L948.07 828.6 L948.14 839.9 L948.20 817.5 L948.26 836.2 L948.32 820.3 L948.38 824.1 L948.44 860.1 L948.51 865.3 L948.57 913.7 L948.63 826.7 L948.69 832.9 L948.75 847.0 L948.81 843.3 L948.87 828.3 L948.94 852.7 L949.00 826.3 L949.06 868.1 L949.12 829.4 L949.18 814.3 L949.24 843.4 L949.30 815.9 L949.37 839.4 L949.43 810.1 L949.49 890.1 L949.55 832.9 L949.61 843.4 L949.67 815.8 L949.73 837.7 L949.79 826.6 L949.85 821.6 L949.92 849.5 L949.98 808.8 L950.04 831.1 L950.10 813.8 L950.16 853.3 L950.22 858.6 L950.28 809.4 L950.34 831.0 L950.40 831.3 L950.46 843.4 L950.52 844.1 L950.59 826.6 L950.65 866.3 L950.71 820.2 L950.77 817.8 L950.83 850.9 L950.89 817.1 L950.95 820.6 L951.01 833.5 L951.07 827.1 L951.13 819.8 L951.19 866.5 L951.25 832.8 L951.31 849.3 L951.37 824.1 L951.43 863.6 L951.49 823.0 L951.55 862.7 L951.61 839.5 L951.68 880.4 L951.74 848.9 L951.80 840.7 L951.86 836.3 L951.92 856.5 L951.98 832.8 L952.04 817.7 L952.10 864.8 L952.16 852.2 L952.22 844.1 L952.28 847.9 L952.34 824.8 L952.40 834.2 L952.46 854.2 L952.52 877.7 L952.58 867.4 L952.64 822.1 L952.70 844.9 L952.76 838.6 L952.82 832.6 L952.88 822.8 L952.94 821.3 L953.00 835.5 L953.06 836.5 L953.12 827.6 L953.18 831.7 L953.24 839.4 L953.30 850.7 L953.36 841.2 L953.42 823.4 L953.48 862.8 L953.54 832.2 L953.60 878.6 L953.66 890.3 L953.72 822.8 L953.77 841.5 L953.83 881.9 L953.89 833.5 L953.95 840.3 L954.01 830.9 L954.07 814.6 L954.13 826.2 L954.19 822.2 L954.25 829.5 L954.31 844.0 L954.37 840.8 L954.43 875.3 L954.49 846.8 L954.55 832.5 L954.61 875.5 L954.67 844.0 L954.73 839.7 L954.79 860.3 L954.84 845.8 L954.90 832.2 L954.96 842.4 L955.02 829.7 L955.08 882.6 L955.14 827.4 L955.20 884.4 L955.26 817.7 L955.32 810.1 L955.38 839.8 L955.44 825.5 L955.49 837.8 L955.55 821.1 L955.61 857.1 L955.67 845.3 L955.73 846.1 L955.79 869.3 L955.85 902.1 L955.91 845.6 L955.97 847.6 L956.02 805.1 L956.08 815.8 L956.14 834.1 L956.20 881.9 L956.26 829.5 L956.32 840.0 L956.38 809.1 L956.44 833.5 L956.49 864.6 L956.55 840.8 L956.61 855.3 L956.67 810.2 L956.73 824.7 L956.79 823.6 L956.85 855.9 L956.90 819.4 L956.96 869.8 L957.02 827.3 L957.08 861.1 L957.14 837.2 L957.20 829.4 L957.26 880.1 L957.31 832.6 L957.37 845.9 L957.43 816.6 L957.49 855.4 L957.55 888.4 L957.61 819.5 L957.66 848.7 L957.72 827.0 L957.78 821.4 L957.84 830.7 L957.90 843.6 L957.95 874.9 L958.01 904.7 L958.07 903.8 L958.13 841.5 L958.19 843.0 L958.24 821.8 L958.30 847.0 L958.36 838.0 L958.42 830.1 L958.48 863.1 L958.53 825.9 L958.59 820.7 L958.65 821.5 L958.71 821.0 L958.77 839.5 L958.82 852.0 L958.88 821.4 L958.94 835.6 L959.00 838.7 L959.05 838.0 L959.11 831.8 L959.17 837.2 L959.23 809.2 L959.29 814.8 L959.34 832.1 L959.40 824.6 L959.46 848.4 L959.52 824.8 L959.57 853.6 L959.63 824.7 L959.69 817.2 L959.75 834.1 L959.80 830.5 L959.86 828.4 L959.92 848.7 L959.98 823.7 L960.03 842.8 L960.09 854.3 L960.15 832.8 L960.21 834.9 L960.26 866.1 L960.32 839.3 L960.38 821.6 L960.44 815.1 L960.49 816.0 L960.55 827.8 L960.61 816.4 L960.66 841.3 L960.72 831.4 L960.78 826.8 L960.84 834.9 L960.89 868.6 L960.95 824.1 L961.01 819.9 L961.06 826.5 L961.12 827.2 L961.18 863.1 L961.23 844.2 L961.29 831.2 L961.35 820.3 L961.41 812.4 L961.46 818.0 L961.52 854.8 L961.58 840.8 L961.63 819.7 L961.69 839.6 L961.75 813.4 L961.80 834.1 L961.86 827.2 L961.92 816.5 L961.97 846.0 L962.03 844.3 L962.09 834.1 L962.14 820.0 L962.20 841.5 L962.26 830.9 L962.31 841.0 L962.37 815.6 L962.43 861.2 L962.48 803.1 L962.54 822.2 L962.60 829.3 L962.65 821.1 L962.71 815.1 L962.77 842.2 L962.82 901.7 L962.88 826.6 L962.94 823.8 L962.99 841.2 L963.05 821.9 L963.10 829.1 L963.16 842.0 L963.22 830.2 L963.27 818.7 L963.33 813.5 L963.39 834.8 L963.44 895.2 L963.50 863.6 L963.56 815.4 L963.61 832.9 L963.67 832.3 L963.72 820.3 L963.78 840.7 L963.84 832.5 L963.89 849.8 L963.95 824.3 L964.00 866.2 L964.06 850.2 L964.12 831.4 L964.17 817.4 L964.23 831.8 L964.28 816.6 L964.34 841.2 L964.40 841.8 L964.45 835.8 L964.51 881.1 L964.56 810.6 L964.62 842.8 L964.68 848.8 L964.73 815.7 L964.79 825.1 L964.84 811.4 L964.90 835.9 L964.95 843.2 L965.01 826.1 L965.07 841.6 L965.12 826.8 L965.18 842.5 L965.23 823.2 L965.29 882.1 L965.34 829.6 L965.40 801.7 L965.45 814.1 L965.51 843.3 L965.57 854.7 L965.62 838.3 L965.68 817.7 L965.73 855.5 L965.79 842.6 L965.84 815.5 L965.90 827.2 L965.95 840.0 L966.01 801.6 L966.06 809.9 L966.12 826.0 L966.18 855.7 L966.23 907.9 L966.29 824.6 L966.34 860.6 L966.40 847.2 L966.45 854.5 L966.51 835.7 L966.56 876.8 L966.62 838.4 L966.67 868.9 L966.73 834.6 L966.78 819.4 L966.84 832.5 L966.89 831.0 L966.95 825.2 L967.00 826.6 L967.06 832.1 L967.11 835.5 L967.17 820.4 L967.22 822.7 L967.28 831.7 L967.33 831.8 L967.39 828.3 L967.44 839.2 L967.50 818.7 L967.55 832.9 L967.61 822.5 L967.66 845.6 L967.72 841.3 L967.77 846.4 L967.83 832.2 L967.88 821.4 L967.94 863.2 L967.99 831.9 L968.05 826.4 L968.10 823.0 L968.16 827.4 L968.21 841.5 L968.26 849.3 L968.32 830.6 L968.37 842.8 L968.43 819.7 L968.48 829.3 L968.54 825.6 L968.59 823.5 L968.65 825.6 L968.70 844.3 L968.76 842.9 L968.81 819.3 L968.86 820.5 L968.92 846.4 L968.97 838.3 L969.03 839.4 L969.08 837.3 L969.14 840.4 L969.19 822.0 L969.24 810.9 L969.30 825.5 L969.35 807.9 L969.41 872.8 L969.46 832.1 L969.52 839.0 L969.57 874.7 L969.62 847.8 L969.68 820.0 L969.73 824.4 L969.79 814.1 L969.84 847.0 L969.90 842.8 L969.95 830.4 L970.00 825.6 L970.06 821.6 L970.11 830.3 L970.17 841.2 L970.22 857.4 L970.27 851.7 L970.33 853.8 L970.38 828.3 L970.44 827.6 L970.49 823.3 L970.54 878.3 L970.60 817.8 L970.65 816.5 L970.70 821.9 L970.76 861.8 L970.81 852.0 L970.87 823.9 L970.92 851.8 L970.97 856.6 L971.03 827.7 L971.08 818.0 L971.13 844.9 L971.19 825.5 L971.24 814.3 L971.30 858.3 L971.35 828.1 L971.40 826.4 L971.46 834.7 L971.51 820.7 L971.56 805.4 L971.62 826.0 L971.67 825.6 L971.72 803.3 L971.78 825.3 L971.83 843.9 L971.88 823.7 L971.94 838.9 L971.99 836.0 L972.04 817.6 L972.10 805.3 L972.15 838.5 L972.20 835.3 L972.26 822.0 L972.31 818.1 L972.36 851.9 L972.42 859.0 L972.47 819.5 L972.52 834.0 L972.58 833.5 L972.63 823.1 L972.68 807.5 L972.74 823.2 L972.79 836.8 L972.84 834.7 L972.90 830.5 L972.95 814.0 L973.00 818.5 L973.06 822.5 L973.11 826.7 L973.16 824.6 L973.22 857.7 L973.27 813.6 L973.32 886.9 L973.37 819.5 L973.43 851.7 L973.48 819.7 L973.53 833.8 L973.59 825.0 L973.64 807.4 L973.69 846.1 L973.74 847.2 L973.80 820.6 L973.85 844.5 L973.90 829.0 L973.96 887.4 L974.01 809.0 L974.06 825.0 L974.11 818.8 L974.17 835.4 L974.22 844.5 L974.27 850.0 L974.33 831.8 L974.38 825.2 L974.43 846.1 L974.48 812.6 L974.54 820.1 L974.59 842.6 L974.64 827.2 L974.69 896.2 L974.75 811.7 L974.80 828.1 L974.85 818.0 L974.90 798.0 L974.96 811.8 L975.01 811.6 L975.06 824.3 L975.11 826.8 L975.17 829.9 L975.22 821.1 L975.27 839.2 L975.32 830.2 L975.38 882.1 L975.43 815.8 L975.48 829.9 L975.53 829.2 L975.58 824.3 L975.64 851.6 L975.69 817.6 L975.74 853.6 L975.79 823.7 L975.85 822.8 L975.90 834.5 L975.95 832.1 L976.00 820.7 L976.05 810.9 L976.11 868.7 L976.16 824.0 L976.21 812.7 L976.26 836.5 L976.31 830.6 L976.37 822.3 L976.42 822.3 L976.47 849.7 L976.52 822.7 L976.57 825.8 L976.63 869.1 L976.68 823.5 L976.73 825.2 L976.78 815.1 L976.83 836.6 L976.89 836.7 L976.94 826.9 L976.99 825.2 L977.04 818.3 L977.09 844.7 L977.14 827.2 L977.20 848.2 L977.25 823.9 L977.30 840.6 L977.35 805.3 L977.40 817.6 L977.46 870.2 L977.51 837.5 L977.56 837.2 L977.61 828.8 L977.66 827.7 L977.71 816.5 L977.77 815.4 L977.82 835.5 L977.87 838.1 L977.92 819.1 L977.97 835.4 L978.02 813.5 L978.07 833.8 L978.13 815.2 L978.18 829.1 L978.23 821.3 L978.28 830.9 L978.33 813.3 L978.38 828.0 L978.43 833.9 L978.49 813.3 L978.54 821.0 L978.59 837.0 L978.64 830.6 L978.69 833.8 L978.74 843.5 L978.79 831.7 L978.84 817.3 L978.90 826.2 L978.95 847.6 L979.00 831.4 L979.05 841.5 L979.10 823.1 L979.15 826.5 L979.20 873.8 L979.25 846.9 L979.31 835.7 L979.36 811.6 L979.41 833.6 L979.46 805.6 L979.51 862.3 L979.56 875.0 L979.61 840.0 L979.66 819.4 L979.71 849.3 L979.76 815.5 L979.82 847.6 L979.87 829.7 L979.92 802.9 L979.97 854.7 L980.02 826.4 L980.07 847.9 L980.12 837.9 L980.17 830.3 L980.22 851.3 L980.27 816.9 L980.32 856.0 L980.38 822.5 L980.43 804.9 L980.48 822.5 L980.53 809.2 L980.58 809.7 L980.63 834.7 L980.68 812.9 L980.73 815.0 L980.78 820.8 L980.83 820.3 L980.88 859.9 L980.93 857.3 L980.98 852.5 L981.03 890.3 L981.08 826.8 L981.14 845.3 L981.19 820.5 L981.24 861.2 L981.29 846.6 L981.34 840.9 L981.39 818.3 L981.44 811.4 L981.49 861.0 L981.54 831.6 L981.59 834.4 L981.64 851.7 L981.69 814.5 L981.74 839.0 L981.79 828.0 L981.84 844.8 L981.89 827.7 L981.94 817.1 L981.99 869.3 L982.04 820.8 L982.09 842.0 L982.14 848.7 L982.19 819.4 L982.24 838.9 L982.29 825.4 L982.34 818.5 L982.39 818.2 L982.44 868.7 L982.49 824.4 L982.54 830.1 L982.59 829.8 L982.64 805.7 L982.69 842.7 L982.74 842.2 L982.79 853.8 L982.84 824.1 L982.89 818.0 L982.95 823.7 L982.99 841.4 L983.04 837.2 L983.09 826.1 L983.14 830.9 L983.19 815.5 L983.24 860.4 L983.29 828.8 L983.34 830.3 L983.39 845.4 L983.44 817.7 L983.49 841.0 L983.54 824.2 L983.59 847.5 L983.64 812.3 L983.69 821.1 L983.74 836.3 L983.79 829.4 L983.84 825.2 L983.89 833.6 L983.94 818.7 L983.99 827.6 L984.04 798.3 L984.09 846.5 L984.14 820.4 L984.19 849.4 L984.24 832.5 L984.29 834.8 L984.34 836.0 L984.39 814.4 L984.44 845.0 L984.49 822.0 L984.54 852.8 L984.59 845.7 L984.64 838.8 L984.69 848.1 L984.74 827.9 L984.78 838.6 L984.83 869.1 L984.88 817.8 L984.93 813.1 L984.98 826.9 L985.03 830.9 L985.08 815.9 L985.13 819.3 L985.18 853.4 L985.23 826.1 L985.28 816.0 L985.33 817.6 L985.38 834.0 L985.43 818.0 L985.48 829.7 L985.52 832.3 L985.57 828.3 L985.62 830.9 L985.67 850.4 L985.72 805.0 L985.77 863.5 L985.82 818.6 L985.87 808.4 L985.92 844.8 L985.97 833.9 L986.02 832.5 L986.07 819.5 L986.11 845.9 L986.16 823.2 L986.21 842.2 L986.26 820.0 L986.31 834.1 L986.36 837.8 L986.41 825.8 L986.46 830.2 L986.51 811.2 L986.56 837.6 L986.60 840.2 L986.65 816.7 L986.70 833.3 L986.75 842.8 L986.80 813.8 L986.85 851.0 L986.90 854.5 L986.95 810.0 L987.00 821.1 L987.04 812.8 L987.09 821.3 L987.14 812.9 L987.19 830.8 L987.24 821.2 L987.29 823.3 L987.34 829.7 L987.38 826.2 L987.43 846.9 L987.48 842.3 L987.53 814.8 L987.58 820.2 L987.63 803.4 L987.68 824.6 L987.73 814.5 L987.77 840.9 L987.82 846.4 L987.87 905.5 L987.92 819.7 L987.97 808.9 L988.02 844.8 L988.07 828.0 L988.11 864.5 L988.16 827.2 L988.21 824.1 L988.26 812.3 L988.31 868.8 L988.36 832.2 L988.40 829.2 L988.45 829.1 L988.50 845.7 L988.55 850.8 L988.60 830.7 L988.65 818.5 L988.69 828.0 L988.74 857.8 L988.79 828.1 L988.84 839.3 L988.89 834.4 L988.94 830.3 L988.98 835.1 L989.03 821.6 L989.08 834.4 L989.13 854.6 L989.18 813.2 L989.22 826.7 L989.27 856.5 L989.32 882.0 L989.37 805.5 L989.42 837.9 L989.47 838.2 L989.51 852.6 L989.56 831.1 L989.61 816.8 L989.66 824.4 L989.71 842.9 L989.75 843.9 L989.80 820.6 L989.85 839.2 L989.90 840.0 L989.95 840.1 L989.99 808.1 L990.04 830.6 L990.09 826.0 L990.14 837.4 L990.18 826.6 L990.23 817.5 L990.28 841.2 L990.33 824.8 L990.38 849.1 L990.42 825.7 L990.47 835.5 L990.52 850.7 L990.57 817.2 L990.61 845.2 L990.66 814.1 L990.71 868.0 L990.76 809.7 L990.81 845.0 L990.85 828.7 L990.90 820.9 L990.95 829.9 L991.00 834.3 L991.04 830.8 L991.09 818.3 L991.14 835.4 L991.19 826.5 L991.23 878.5 L991.28 829.9 L991.33 832.0 L991.38 823.7 L991.42 879.5 L991.47 827.7 L991.52 841.6 L991.57 854.3 L991.61 830.7 L991.66 848.2 L991.71 826.3 L991.76 818.4 L991.80 813.3 L991.85 833.2 L991.90 859.1 L991.95 823.4 L991.99 833.1 L992.04 849.2 L992.09 826.7 L992.14 821.3 L992.18 836.6 L992.23 832.8 L992.28 870.6 L992.32 862.9 L992.37 825.5 L992.42 838.7 L992.47 832.8 L992.51 813.2 L992.56 834.0 L992.61 866.2 L992.66 828.5 L992.70 840.2 L992.75 846.8 L992.80 816.5 L992.84 868.2 L992.89 819.9 L992.94 828.8 L992.98 847.4 L993.03 811.7 L993.08 832.0 L993.13 821.2 L993.17 836.0 L993.22 811.2 L993.27 822.7 L993.31 826.1 L993.36 818.7 L993.41 819.4 L993.45 825.0 L993.50 838.3 L993.55 822.3 L993.60 855.9 L993.64 834.3 L993.69 827.8 L993.74 827.4 L993.78 857.9 L993.83 816.4 L993.88 850.2 L993.92 820.5 L993.97 874.3 L994.02 834.5 L994.06 842.6 L994.11 860.8 L994.16 821.0 L994.20 818.5 L994.25 847.8 L994.30 842.4 L994.34 849.5 L994.39 829.8 L994.44 838.6 L994.48 826.0 L994.53 836.3 L994.58 830.2 L994.62 842.8 L994.67 831.0 L994.72 830.1 L994.76 845.7 L994.81 820.9 L994.86 855.8 L994.90 839.2 L994.95 828.5 L995.00 823.0 L995.04 839.9 L995.09 839.8 L995.14 850.5 L995.18 834.7 L995.23 836.2 L995.28 866.1 L995.32 830.9 L995.37 892.0 L995.41 866.3 L995.46 901.8 L995.51 876.0 L995.55 830.5 L995.60 857.9 L995.65 845.4 L995.69 828.4 L995.74 922.1 L995.78 847.3 L995.83 857.8 L995.88 843.2 L995.92 822.0 L995.97 863.3 L996.02 827.5 L996.06 831.2 L996.11 846.2 L996.15 828.6 L996.20 839.6 L996.25 851.6 L996.29 823.6 L996.34 848.7 L996.39 824.2 L996.43 840.4 L996.48 848.3 L996.52 850.4 L996.57 819.7 L996.62 829.0 L996.66 882.8 L996.71 837.4 L996.75 838.8 L996.80 836.8 L996.85 851.4 L996.89 854.1 L996.94 849.0 L996.98 838.2 L997.03 845.2 L997.08 842.9 L997.12 829.6 L997.17 879.9 L997.21 885.4 L997.26 857.2 L997.30 908.2 L997.35 841.2 L997.40 862.6 L997.44 832.3 L997.49 855.1 L997.53 853.4 L997.58 877.6 L997.63 862.3 L997.67 867.5 L997.72 833.8 L997.76 858.6 L997.81 842.2 L997.85 835.8 L997.90 838.1 L997.95 859.7 L997.99 863.7 L998.04 864.0 L998.08 851.5 L998.13 830.1 L998.17 829.4 L998.22 846.7 L998.27 832.1 L998.31 837.3 L998.36 826.7 L998.40 829.7 L998.45 854.7 L998.49 833.0 L998.54 865.0 L998.58 837.4 L998.63 865.2 L998.67 836.5 L998.72 835.1 L998.77 840.2 L998.81 817.7 L998.86 842.0 L998.90 839.8 L998.95 818.0 L998.99 867.1 L999.04 839.8 L999.08 809.9 L999.13 886.2 L999.17 834.1 L999.22 835.2 L999.27 820.8 L999.31 827.8 L999.36 855.5 L999.40 848.9 L999.45 845.6 L999.49 835.2 L999.54 837.0 L999.58 890.9 L999.63 840.5 L999.67 906.3 L999.72 871.1 L999.76 829.8 L999.81 866.6 L999.85 820.8 L999.90 856.0 L999.94 863.0 L999.99 855.1 L1000.03 847.9 L1000.08 863.3 L1000.12 831.4 L1000.17 847.5 L1000.21 836.4 L1000.26 841.7 L1000.30 833.2 L1000.35 855.9 L1000.39 849.0 L1000.44 860.6 L1000.48 851.6 L1000.53 850.2 L1000.57 876.9 L1000.62 863.3 L1000.66 848.8 L1000.71 838.9 L1000.75 878.1 L1000.80 840.7 L1000.84 828.6 L1000.89 839.2 L1000.93 855.9 L1000.98 878.9 L1001.02 852.6 L1001.07 853.5 L1001.11 880.3 L1001.16 860.7 L1001.20 843.7 L1001.25 844.4 L1001.29 859.4 L1001.34 838.7 L1001.38 829.2 L1001.43 851.4 L1001.47 863.2 L1001.52 835.9 L1001.56 854.7 L1001.60 872.2 L1001.65 830.2 L1001.69 830.7 L1001.74 845.7 L1001.78 839.4 L1001.83 883.6 L1001.87 923.6 L1001.92 843.8 L1001.96 861.9 L1002.01 852.0 L1002.05 832.6 L1002.10 892.3 L1002.14 832.7 L1002.18 827.1 L1002.23 844.2 L1002.27 820.6 L1002.32 845.3 L1002.36 842.6 L1002.41 885.2 L1002.45 842.6 L1002.50 867.1 L1002.54 861.0 L1002.58 849.9 L1002.63 835.6 L1002.67 838.4 L1002.72 845.8 L1002.76 841.9 L1002.81 852.9 L1002.85 846.4 L1002.90 839.1 L1002.94 851.0 L1002.98 923.0 L1003.03 834.1 L1003.07 839.6 L1003.12 819.4 L1003.16 828.4 L1003.21 825.5 L1003.25 843.1 L1003.29 865.9 L1003.34 855.8 L1003.38 889.8 L1003.43 866.0 L1003.47 850.1 L1003.52 849.8 L1003.56 819.6 L1003.60 841.6 L1003.65 836.8 L1003.69 851.7 L1003.74 826.5 L1003.78 848.1 L1003.82 841.3 L1003.87 846.0 L1003.91 842.5 L1003.96 829.1 L1004.00 857.9 L1004.04 862.8 L1004.09 850.7 L1004.13 829.9 L1004.18 850.8 L1004.22 869.8 L1004.26 903.5 L1004.31 859.7 L1004.35 824.8 L1004.40 870.7 L1004.44 854.1 L1004.48 837.5 L1004.53 877.2 L1004.57 865.1 L1004.62 873.0 L1004.66 836.3 L1004.70 849.8 L1004.75 841.6 L1004.79 838.3 L1004.83 860.0 L1004.88 851.7 L1004.92 839.8 L1004.97 848.4 L1005.01 878.9 L1005.05 849.4 L1005.10 876.1 L1005.14 849.4 L1005.19 911.6 L1005.23 822.9 L1005.27 844.9 L1005.32 848.8 L1005.36 857.8 L1005.40 891.3 L1005.45 852.1 L1005.49 845.7 L1005.53 852.7 L1005.58 848.0 L1005.62 856.5 L1005.67 883.5 L1005.71 820.3 L1005.75 839.4 L1005.80 870.7 L1005.84 826.3 L1005.88 862.3 L1005.93 823.3 L1005.97 853.5 L1006.01 863.1 L1006.06 836.1 L1006.10 841.9 L1006.14 835.6 L1006.19 856.6 L1006.23 847.9 L1006.27 851.4 L1006.32 839.7 L1006.36 850.5 L1006.40 885.9 L1006.45 861.6 L1006.49 885.0 L1006.54 836.6 L1006.58 847.4 L1006.62 842.2 L1006.67 840.6 L1006.71 863.5 L1006.75 833.4 L1006.80 849.3 L1006.84 861.2 L1006.88 880.7 L1006.92 821.5 L1006.97 837.6 L1007.01 846.5 L1007.05 881.0 L1007.10 832.9 L1007.14 866.9 L1007.18 842.7 L1007.23 848.9 L1007.27 879.1 L1007.31 826.9 L1007.36 840.1 L1007.40 832.6 L1007.44 831.4 L1007.49 839.0 L1007.53 856.6 L1007.57 850.4 L1007.62 830.8 L1007.66 863.5 L1007.70 847.2 L1007.75 832.0 L1007.79 865.1 L1007.83 865.1 L1007.87 835.5 L1007.92 881.9 L1007.96 864.3 L1008.00 836.0 L1008.05 813.7 L1008.09 869.9 L1008.13 865.7 L1008.18 829.4 L1008.22 860.9 L1008.26 861.4 L1008.30 853.1 L1008.35 866.3 L1008.39 902.3 L1008.43 840.1 L1008.48 866.5 L1008.52 877.9 L1008.56 839.6 L1008.60 855.8 L1008.65 855.8 L1008.69 868.0 L1008.73 850.0 L1008.78 838.1 L1008.82 837.1 L1008.86 848.9 L1008.90 831.8 L1008.95 869.2 L1008.99 872.9 L1009.03 836.8 L1009.07 856.6 L1009.12 855.3 L1009.16 831.0 L1009.20 861.9 L1009.25 861.0 L1009.29 839.4 L1009.33 829.7 L1009.37 838.4 L1009.42 861.4 L1009.46 845.8 L1009.50 864.9 L1009.54 833.1 L1009.59 830.2 L1009.63 841.2 L1009.67 871.7 L1009.71 833.2 L1009.76 828.0 L1009.80 860.2 L1009.84 829.3 L1009.88 855.1 L1009.93 828.8 L1009.97 837.1 L1010.01 854.9 L1010.05 871.0 L1010.10 843.6 L1010.14 845.2 L1010.18 824.0 L1010.22 840.9 L1010.27 836.9 L1010.31 862.9 L1010.35 857.8 L1010.39 862.5 L1010.44 848.7 L1010.48 856.9 L1010.52 831.6 L1010.56 842.7 L1010.61 839.1 L1010.65 838.7 L1010.69 859.4 L1010.73 835.8 L1010.77 840.4 L1010.82 838.7 L1010.86 870.0 L1010.90 853.7 L1010.94 846.6 L1010.99 842.6 L1011.03 878.4 L1011.07 882.3 L1011.11 845.4 L1011.15 850.3 L1011.20 869.8 L1011.24 837.7 L1011.28 837.8 L1011.32 830.3 L1011.37 847.6 L1011.41 861.5 L1011.45 833.2 L1011.49 844.7 L1011.53 909.8 L1011.58 846.7 L1011.62 842.8 L1011.66 867.5 L1011.70 873.7 L1011.74 842.6 L1011.79 831.5 L1011.83 853.8 L1011.87 859.7 L1011.91 878.9 L1011.95 855.0 L1012.00 839.9 L1012.04 848.2 L1012.08 839.1 L1012.12 845.4 L1012.16 846.3 L1012.21 876.9 L1012.25 875.9 L1012.29 879.6 L1012.33 846.7 L1012.37 890.4 L1012.41 832.5 L1012.46 878.6 L1012.50 854.0 L1012.54 871.2 L1012.58 844.1 L1012.62 910.4 L1012.67 823.4 L1012.71 868.5 L1012.75 865.8 L1012.79 842.6 L1012.83 866.6 L1012.87 836.1 L1012.92 860.6 L1012.96 846.4 L1013.00 844.1 L1013.04 835.4 L1013.08 864.2 L1013.13 859.3 L1013.17 829.6 L1013.21 897.6 L1013.25 836.5 L1013.29 842.7 L1013.33 844.3 L1013.37 851.1 L1013.42 873.7 L1013.46 884.2 L1013.50 853.8 L1013.54 842.4 L1013.58 830.9 L1013.62 828.2 L1013.67 848.6 L1013.71 851.5 L1013.75 845.7 L1013.79 901.0 L1013.83 844.3 L1013.87 841.9 L1013.92 844.5 L1013.96 834.4 L1014.00 882.7 L1014.04 851.9 L1014.08 849.7 L1014.12 844.9 L1014.16 837.9 L1014.21 840.5 L1014.25 847.6 L1014.29 845.7 L1014.33 898.7 L1014.37 850.7 L1014.41 836.0 L1014.45 827.1 L1014.49 833.8 L1014.54 841.8 L1014.58 863.0 L1014.62 873.7 L1014.66 837.4 L1014.70 862.9 L1014.74 845.6 L1014.78 849.6 L1014.83 849.4 L1014.87 826.0 L1014.91 828.2 L1014.95 855.8 L1014.99 857.0 L1015.03 843.2 L1015.07 878.6 L1015.11 866.2 L1015.16 840.1 L1015.20 828.3 L1015.24 850.4 L1015.28 855.2 L1015.32 836.9 L1015.36 826.2 L1015.40 847.6 L1015.44 825.1 L1015.48 860.0 L1015.53 853.8 L1015.57 839.3 L1015.61 845.9 L1015.65 837.4 L1015.69 835.3 L1015.73 835.1 L1015.77 865.9 L1015.81 846.2 L1015.85 858.7 L1015.89 842.1 L1015.94 865.2 L1015.98 852.4 L1016.02 855.3 L1016.06 843.9 L1016.10 850.9 L1016.14 835.6 L1016.18 895.5 L1016.22 856.3 L1016.26 849.6 L1016.30 854.5 L1016.34 830.8 L1016.39 841.5 L1016.43 837.3 L1016.47 868.4 L1016.51 821.4 L1016.55 845.8 L1016.59 871.1 L1016.63 863.0 L1016.67 858.7 L1016.71 840.0 L1016.75 837.1 L1016.79 857.7 L1016.83 839.7 L1016.88 858.8 L1016.92 841.7 L1016.96 861.2 L1017.00 850.8 L1017.04 865.4 L1017.08 903.7 L1017.12 842.7 L1017.16 904.6 L1017.20 820.1 L1017.24 871.6 L1017.28 823.9 L1017.32 849.4 L1017.36 842.9 L1017.40 861.5 L1017.45 839.9 L1017.49 835.4 L1017.53 862.4 L1017.57 849.4 L1017.61 860.3 L1017.65 846.7 L1017.69 824.5 L1017.73 861.3 L1017.77 835.7 L1017.81 845.9 L1017.85 812.5 L1017.89 837.3 L1017.93 854.7 L1017.97 860.6 L1018.01 853.1 L1018.05 844.5 L1018.09 858.4 L1018.13 854.7 L1018.17 834.8 L1018.21 848.2 L1018.26 851.0 L1018.30 858.0 L1018.34 834.3 L1018.38 839.0 L1018.42 840.3 L1018.46 828.9 L1018.50 840.4 L1018.54 857.9 L1018.58 849.8 L1018.62 832.9 L1018.66 857.9 L1018.70 829.9 L1018.74 859.1 L1018.78 831.6 L1018.82 828.6 L1018.86 836.2 L1018.90 846.8 L1018.94 836.9 L1018.98 871.1 L1019.02 880.7 L1019.06 837.4 L1019.10 858.8 L1019.14 855.4 L1019.18 848.6 L1019.22 836.1 L1019.26 883.5 L1019.30 885.7 L1019.34 819.3 L1019.38 839.0 L1019.42 838.6 L1019.46 833.4 L1019.50 842.9 L1019.54 872.7 L1019.58 821.2 L1019.62 865.2 L1019.66 837.9 L1019.70 819.1 L1019.74 872.8 L1019.78 836.3 L1019.82 833.8 L1019.86 829.0 L1019.90 840.0 L1019.94 829.1 L1019.98 832.2 L1020.02 835.2 L1020.06 848.7 L1020.10 843.0 L1020.14 837.4 L1020.18 846.3 L1020.22 859.6 L1020.26 856.2 L1020.30 838.8 L1020.34 875.4 L1020.38 860.7 L1020.42 847.6 L1020.46 843.9 L1020.50 838.1 L1020.54 829.4 L1020.58 870.1 L1020.62 849.6 L1020.66 827.3 L1020.70 876.5 L1020.74 870.2 L1020.78 821.7 L1020.82 854.3 L1020.86 834.1 L1020.90 846.1 L1020.94 864.0 L1020.98 838.5 L1021.02 844.4 L1021.06 852.2 L1021.10 831.9 L1021.14 850.1 L1021.18 841.3 L1021.22 897.6 L1021.26 831.5 L1021.30 854.6 L1021.34 822.1 L1021.38 835.2 L1021.42 827.8 L1021.46 829.5 L1021.50 845.3 L1021.54 830.7 L1021.58 860.1 L1021.62 826.4 L1021.66 849.5 L1021.69 866.2 L1021.73 828.1 L1021.77 832.5 L1021.81 857.6 L1021.85 842.6 L1021.89 877.0 L1021.93 837.3 L1021.97 839.6 L1022.01 883.9 L1022.05 837.4 L1022.09 887.2 L1022.13 869.6 L1022.17 831.4 L1022.21 845.5 L1022.25 878.9 L1022.29 827.1 L1022.33 864.4 L1022.37 857.9 L1022.41 856.1 L1022.45 847.8 L1022.48 825.9 L1022.52 883.8 L1022.56 826.0 L1022.60 858.4 L1022.64 854.2 L1022.68 835.9 L1022.72 851.9 L1022.76 839.5 L1022.80 855.9 L1022.84 821.2 L1022.88 876.5 L1022.92 838.3 L1022.96 859.7 L1023.00 841.8 L1023.04 860.4 L1023.07 834.9 L1023.11 844.8 L1023.15 818.6 L1023.19 842.3 L1023.23 823.9 L1023.27 864.7 L1023.31 851.0 L1023.35 839.6 L1023.39 890.2 L1023.43 879.4 L1023.47 882.4 L1023.51 824.0 L1023.55 852.4 L1023.58 853.8 L1023.62 847.1 L1023.66 816.5 L1023.70 873.8 L1023.74 839.8 L1023.78 846.5 L1023.82 859.9 L1023.86 833.2 L1023.90 818.6 L1023.94 873.5 L1023.98 833.0 L1024.01 820.0 L1024.05 826.8 L1024.09 913.0 L1024.13 854.1 L1024.17 830.2 L1024.21 827.2 L1024.25 868.9 L1024.29 849.6 L1024.33 845.5 L1024.37 826.3 L1024.40 838.3 L1024.44 878.5 L1024.48 811.2 L1024.52 838.4 L1024.56 821.1 L1024.60 924.7 L1024.64 824.5 L1024.68 880.5 L1024.72 861.7 L1024.75 853.1 L1024.79 819.5 L1024.83 850.9 L1024.87 841.2 L1024.91 841.1 L1024.95 826.6 L1024.99 841.9 L1025.03 857.9 L1025.06 825.7 L1025.10 865.3 L1025.14 838.0 L1025.18 831.8 L1025.22 830.7 L1025.26 839.5 L1025.30 847.9 L1025.34 844.1 L1025.37 866.9 L1025.41 841.5 L1025.45 841.5 L1025.49 900.8 L1025.53 829.4 L1025.57 815.1 L1025.61 834.0 L1025.65 833.4 L1025.68 824.8 L1025.72 837.5 L1025.76 817.9 L1025.80 871.6 L1025.84 840.0 L1025.88 865.0 L1025.92 850.1 L1025.95 852.0 L1025.99 853.9 L1026.03 832.6 L1026.07 851.9 L1026.11 828.5 L1026.15 842.8 L1026.19 844.6 L1026.22 854.9 L1026.26 826.6 L1026.30 834.1 L1026.34 858.8 L1026.38 857.1 L1026.42 890.0 L1026.46 823.9 L1026.49 828.4 L1026.53 823.2 L1026.57 851.2 L1026.61 852.5 L1026.65 846.8 L1026.69 854.9 L1026.72 840.7 L1026.76 842.7 L1026.80 870.8 L1026.84 846.7 L1026.88 847.1 L1026.92 843.7 L1026.95 839.6 L1026.99 853.0 L1027.03 842.9 L1027.07 824.0 L1027.11 836.7 L1027.15 836.5 L1027.18 836.9 L1027.22 842.2 L1027.26 834.0 L1027.30 835.1 L1027.34 836.5 L1027.38 834.3 L1027.41 885.7 L1027.45 821.4 L1027.49 813.7 L1027.53 850.3 L1027.57 835.1 L1027.61 837.2 L1027.64 843.3 L1027.68 833.9 L1027.72 828.7 L1027.76 813.1 L1027.80 862.9 L1027.83 873.9 L1027.87 830.5 L1027.91 837.6 L1027.95 832.0 L1027.99 818.5 L1028.02 865.2 L1028.06 858.6 L1028.10 828.5 L1028.14 829.0 L1028.18 848.4 L1028.22 855.0 L1028.25 837.5 L1028.29 834.2 L1028.33 828.0 L1028.37 855.0 L1028.41 861.2 L1028.44 860.5 L1028.48 822.1 L1028.52 842.7 L1028.56 894.2 L1028.60 849.0 L1028.63 836.8 L1028.67 823.6 L1028.71 818.2 L1028.75 850.0 L1028.79 818.8 L1028.82 855.5 L1028.86 846.0 L1028.90 837.2 L1028.94 864.3 L1028.97 871.5 L1029.01 843.4 L1029.05 820.7 L1029.09 842.0 L1029.13 834.9 L1029.16 828.0 L1029.20 870.5 L1029.24 849.5 L1029.28 821.9 L1029.32 827.0 L1029.35 831.6 L1029.39 841.1 L1029.43 830.8 L1029.47 835.4 L1029.50 855.3 L1029.54 824.7 L1029.58 848.6 L1029.62 830.9 L1029.66 873.9 L1029.69 875.9 L1029.73 830.7 L1029.77 842.3 L1029.81 820.8 L1029.84 833.9 L1029.88 843.0 L1029.92 843.8 L1029.96 831.1 L1029.99 814.4 L1030.03 821.4 L1030.07 840.0 L1030.11 823.8 L1030.14 829.5 L1030.18 842.6 L1030.22 864.6 L1030.26 837.8 L1030.30 827.3 L1030.33 840.9 L1030.37 828.1 L1030.41 852.1 L1030.45 822.8 L1030.48 827.5 L1030.52 834.5 L1030.56 865.6 L1030.60 823.1 L1030.63 824.3 L1030.67 821.3 L1030.71 825.2 L1030.75 830.1 L1030.78 832.5 L1030.82 850.2 L1030.86 832.8 L1030.90 835.7 L1030.93 832.5 L1030.97 851.1 L1031.01 864.4 L1031.05 833.5 L1031.08 867.5 L1031.12 826.5 L1031.16 886.2 L1031.19 837.5 L1031.23 845.0 L1031.27 831.6 L1031.31 827.2 L1031.34 821.0 L1031.38 861.5 L1031.42 830.6 L1031.46 845.8 L1031.49 834.6 L1031.53 837.3 L1031.57 824.3 L1031.61 822.9 L1031.64 829.5 L1031.68 844.7 L1031.72 837.9 L1031.75 804.6 L1031.79 846.3 L1031.83 833.2 L1031.87 816.4 L1031.90 826.3 L1031.94 824.2 L1031.98 854.2 L1032.02 838.0 L1032.05 828.8 L1032.09 825.6 L1032.13 827.4 L1032.16 826.9 L1032.20 829.5 L1032.24 851.3 L1032.28 851.1 L1032.31 845.1 L1032.35 860.7 L1032.39 842.6 L1032.42 818.9 L1032.46 813.7 L1032.50 821.5 L1032.54 825.7 L1032.57 836.6 L1032.61 853.7 L1032.65 839.1 L1032.68 832.4 L1032.72 824.9 L1032.76 887.8 L1032.79 848.2 L1032.83 828.8 L1032.87 813.5 L1032.91 887.8 L1032.94 825.3 L1032.98 855.8 L1033.02 818.7 L1033.05 842.1 L1033.09 829.3 L1033.13 860.7 L1033.16 826.9 L1033.20 817.6 L1033.24 822.7 L1033.28 851.9 L1033.31 885.2 L1033.35 841.5 L1033.39 843.6 L1033.42 826.2 L1033.46 825.8 L1033.50 816.7 L1033.53 890.2 L1033.57 813.1 L1033.61 840.0 L1033.64 828.9 L1033.68 822.1 L1033.72 832.3 L1033.75 867.8 L1033.79 824.8 L1033.83 821.0 L1033.86 840.7 L1033.90 842.1 L1033.94 835.3 L1033.98 821.7 L1034.01 858.6 L1034.05 818.1 L1034.09 821.4 L1034.12 824.5 L1034.16 835.4 L1034.20 833.9 L1034.23 837.1 L1034.27 846.1 L1034.31 861.2 L1034.34 833.5 L1034.38 812.8 L1034.42 853.9 L1034.45 809.4 L1034.49 827.5 L1034.53 819.8 L1034.56 839.3 L1034.60 849.8 L1034.64 819.1 L1034.67 826.5 L1034.71 855.9 L1034.75 843.8 L1034.78 817.9 L1034.82 843.6 L1034.86 850.7 L1034.89 831.0 L1034.93 820.4 L1034.96 842.1 L1035.00 827.5 L1035.04 819.3 L1035.07 820.8 L1035.11 830.7 L1035.15 818.9 L1035.18 830.0 L1035.22 836.9 L1035.26 836.9 L1035.29 830.8 L1035.33 851.1 L1035.37 816.5 L1035.40 827.8 L1035.44 868.1 L1035.48 857.2 L1035.51 865.5 L1035.55 848.4 L1035.58 836.1 L1035.62 850.1 L1035.66 837.8 L1035.69 818.2 L1035.73 824.8 L1035.77 817.0 L1035.80 858.5 L1035.84 827.4 L1035.88 830.8 L1035.91 836.2 L1035.95 817.2 L1035.98 844.5 L1036.02 850.6 L1036.06 850.7 L1036.09 859.2 L1036.13 827.2 L1036.17 819.7 L1036.20 848.1 L1036.24 843.7 L1036.28 829.3 L1036.31 828.2 L1036.35 820.1 L1036.38 853.7 L1036.42 832.9 L1036.46 851.9 L1036.49 828.0 L1036.53 827.3 L1036.56 835.0 L1036.60 846.9 L1036.64 859.3 L1036.67 828.5 L1036.71 843.7 L1036.75 830.5 L1036.78 856.7 L1036.82 847.8 L1036.85 836.8 L1036.89 828.9 L1036.93 825.3 L1036.96 859.5 L1037.00 850.9 L1037.03 826.6 L1037.07 816.0 L1037.11 821.9 L1037.14 877.1 L1037.18 812.0 L1037.21 851.6 L1037.25 835.6 L1037.29 836.7 L1037.32 836.0 L1037.36 830.7 L1037.40 836.8 L1037.43 816.3 L1037.47 865.0 L1037.50 817.1 L1037.54 819.1 L1037.58 842.4 L1037.61 840.7 L1037.65 851.3 L1037.68 843.5 L1037.72 867.1 L1037.75 813.2 L1037.79 807.0 L1037.83 823.7 L1037.86 849.0 L1037.90 819.8 L1037.93 835.6 L1037.97 848.4 L1038.01 819.9 L1038.04 835.4 L1038.08 861.6 L1038.11 846.8 L1038.15 830.1 L1038.19 833.3 L1038.22 825.3 L1038.26 875.4 L1038.29 849.2 L1038.33 842.7 L1038.36 826.3 L1038.40 845.7 L1038.44 833.6 L1038.47 850.4 L1038.51 828.7 L1038.54 858.8 L1038.58 842.9 L1038.61 832.1 L1038.65 836.8 L1038.69 850.9 L1038.72 835.3 L1038.76 875.2 L1038.79 805.7 L1038.83 861.0 L1038.86 844.5 L1038.90 833.6 L1038.94 855.1 L1038.97 819.4 L1039.01 827.6 L1039.04 844.5 L1039.08 852.5 L1039.11 828.9 L1039.15 903.2 L1039.19 840.9 L1039.22 812.3 L1039.26 818.0 L1039.29 815.0 L1039.33 837.0 L1039.36 826.9 L1039.40 824.4 L1039.44 831.8 L1039.47 815.1 L1039.51 862.7 L1039.54 853.8 L1039.58 836.5 L1039.61 831.7 L1039.65 826.3 L1039.68 838.5 L1039.72 827.8 L1039.75 882.2 L1039.79 873.6 L1039.83 845.2 L1039.86 852.6 L1039.90 814.8 L1039.93 817.9 L1039.97 827.7 L1040.00 818.0 L1040.04 830.7 L1040.07 890.4 L1040.11 853.3 L1040.14 874.5 L1040.18 822.6 L1040.22 822.6 L1040.25 809.4 L1040.29 824.8 L1040.32 813.2 L1040.36 835.0 L1040.39 825.9 L1040.43 842.0 L1040.46 836.5 L1040.50 838.1 L1040.53 825.8 L1040.57 845.6 L1040.60 842.8 L1040.64 844.3 L1040.68 832.6 L1040.71 832.3 L1040.75 825.2 L1040.78 811.5 L1040.82 832.4 L1040.85 839.0 L1040.89 820.9 L1040.92 855.9 L1040.96 858.1 L1040.99 855.1 L1041.03 851.5 L1041.06 833.2 L1041.10 820.4 L1041.13 824.5 L1041.17 845.6 L1041.20 888.8 L1041.24 817.0 L1041.27 804.8 L1041.31 827.8 L1041.34 827.6 L1041.38 838.0 L1041.42 817.0 L1041.45 854.1 L1041.49 827.2 L1041.52 862.3 L1041.56 826.8 L1041.59 825.8 L1041.63 820.3 L1041.66 876.9 L1041.70 837.6 L1041.73 852.2 L1041.77 813.6 L1041.80 835.4 L1041.84 845.2 L1041.87 888.0 L1041.91 867.8 L1041.94 816.4 L1041.98 828.5 L1042.01 925.1 L1042.05 835.0 L1042.08 873.5 L1042.12 823.7 L1042.15 809.4 L1042.19 870.2 L1042.22 824.1 L1042.26 836.1 L1042.29 827.9 L1042.33 836.9 L1042.36 867.1 L1042.40 870.3 L1042.43 857.6 L1042.47 823.7 L1042.50 851.7 L1042.54 808.1 L1042.57 830.1 L1042.61 869.6 L1042.64 823.6 L1042.68 828.1 L1042.71 837.0 L1042.75 822.8 L1042.78 843.6 L1042.82 840.5 L1042.85 815.7 L1042.88 864.1 L1042.92 814.0 L1042.95 842.8 L1042.99 827.3 L1043.02 818.5 L1043.06 814.5 L1043.09 916.4 L1043.13 849.8 L1043.16 831.7 L1043.20 849.4 L1043.23 878.6 L1043.27 865.3 L1043.30 834.7 L1043.34 824.3 L1043.37 834.1 L1043.41 885.6 L1043.44 844.8 L1043.48 841.3 L1043.51 853.6 L1043.55 829.6 L1043.58 835.9 L1043.61 854.2 L1043.65 821.1 L1043.68 855.3 L1043.72 809.0 L1043.75 834.9 L1043.79 836.5 L1043.82 818.5 L1043.86 864.3 L1043.89 830.8 L1043.93 820.4 L1043.96 829.7 L1044.00 837.3 L1044.03 830.3 L1044.07 802.4 L1044.10 815.3 L1044.13 843.6 L1044.17 817.7 L1044.20 823.4 L1044.24 850.3 L1044.27 855.5 L1044.31 857.9 L1044.34 819.8 L1044.38 803.8 L1044.41 846.2 L1044.45 837.5 L1044.48 827.7 L1044.51 807.8 L1044.55 830.4 L1044.58 822.6 L1044.62 837.0 L1044.65 884.9 L1044.69 821.3 L1044.72 814.0 L1044.76 842.4 L1044.79 816.2 L1044.82 821.9 L1044.86 830.6 L1044.89 889.6 L1044.93 826.1 L1044.96 825.7 L1045.00 832.1 L1045.03 819.1 L1045.07 829.1 L1045.10 842.7 L1045.13 826.0 L1045.17 849.2 L1045.20 820.1 L1045.24 815.7 L1045.27 838.8 L1045.31 831.1 L1045.34 863.4 L1045.37 815.9 L1045.41 845.5 L1045.44 841.0 L1045.48 827.8 L1045.51 817.3 L1045.55 838.0 L1045.58 846.3 L1045.61 831.9 L1045.65 831.8 L1045.68 841.8 L1045.72 837.8 L1045.75 829.8 L1045.79 820.1 L1045.82 831.5 L1045.85 835.1 L1045.89 859.7 L1045.92 903.9 L1045.96 835.4 L1045.99 826.1 L1046.03 821.7 L1046.06 838.8 L1046.09 844.9 L1046.13 822.8 L1046.16 842.0 L1046.20 929.5 L1046.23 828.5 L1046.26 867.6 L1046.30 830.3 L1046.33 839.9 L1046.37 855.7 L1046.40 820.8 L1046.43 826.7 L1046.47 887.4 L1046.50 813.0 L1046.54 825.1 L1046.57 831.9 L1046.61 845.2 L1046.64 838.7 L1046.67 865.5 L1046.71 840.7 L1046.74 800.4 L1046.78 813.4 L1046.81 810.1 L1046.84 830.0 L1046.88 808.9 L1046.91 833.9 L1046.95 838.8 L1046.98 820.7 L1047.01 854.4 L1047.05 829.2 L1047.08 873.8 L1047.12 827.0 L1047.15 838.1 L1047.18 834.5 L1047.22 823.2 L1047.25 847.6 L1047.29 802.6 L1047.32 822.6 L1047.35 825.5 L1047.39 857.5 L1047.42 832.7 L1047.45 810.0 L1047.49 824.6 L1047.52 837.6 L1047.56 849.8 L1047.59 815.8 L1047.62 847.5 L1047.66 828.2 L1047.69 833.7 L1047.73 829.4 L1047.76 830.1 L1047.79 894.8 L1047.83 863.1 L1047.86 862.9 L1047.89 844.4 L1047.93 842.2 L1047.96 817.6 L1048.00 809.8 L1048.03 851.7 L1048.06 840.7 L1048.10 838.5 L1048.13 825.1 L1048.16 823.2 L1048.20 863.4 L1048.23 833.9 L1048.27 807.4 L1048.30 826.2 L1048.33 826.5 L1048.37 812.9 L1048.40 882.4 L1048.43 860.3 L1048.47 850.2 L1048.50 802.6 L1048.54 829.2 L1048.57 815.8 L1048.60 843.7 L1048.64 849.7 L1048.67 848.1 L1048.70 848.3 L1048.74 816.3 L1048.77 806.0 L1048.80 814.6 L1048.84 852.7 L1048.87 851.4 L1048.91 833.1 L1048.94 821.7 L1048.97 854.2 L1049.01 816.2 L1049.04 825.4 L1049.07 800.5 L1049.11 885.9 L1049.14 829.0 L1049.17 846.6 L1049.21 849.0 L1049.24 835.9 L1049.27 889.9 L1049.31 846.8 L1049.34 864.5 L1049.38 874.7 L1049.41 813.8 L1049.44 845.1 L1049.48 821.3 L1049.51 825.3 L1049.54 826.0 L1049.58 891.7 L1049.61 812.1 L1049.64 829.8 L1049.68 816.8 L1049.71 913.8 L1049.74 832.5 L1049.78 842.5 L1049.81 833.7 L1049.84 846.8 L1049.88 826.4 L1049.91 829.5 L1049.94 845.5 L1049.98 843.0 L1050.01 858.8 L1050.04 825.7 L1050.08 854.3 L1050.11 845.4 L1050.14 836.8 L1050.18 829.9 L1050.21 836.6 L1050.24 814.8 L1050.28 816.3 L1050.31 826.4 L1050.34 818.0 L1050.38 812.8 L1050.41 844.8 L1050.44 845.8 L1050.48 839.5 L1050.51 822.5 L1050.54 845.4 L1050.58 853.2 L1050.61 840.0 L1050.64 823.7 L1050.68 837.6 L1050.71 830.6 L1050.74 825.7 L1050.78 820.3 L1050.81 857.7 L1050.84 841.2 L1050.88 868.5 L1050.91 821.8 L1050.94 825.9 L1050.98 835.9 L1051.01 815.2 L1051.04 827.7 L1051.08 837.4 L1051.11 835.0 L1051.14 864.7 L1051.17 839.3 L1051.21 842.3 L1051.24 839.8 L1051.27 851.4 L1051.31 830.9 L1051.34 802.0 L1051.37 888.0 L1051.41 852.3 L1051.44 820.7 L1051.47 819.9 L1051.51 825.5 L1051.54 844.1 L1051.57 821.2 L1051.60 811.8 L1051.64 836.7 L1051.67 808.1 L1051.70 827.5 L1051.74 832.5 L1051.77 825.3 L1051.80 806.1 L1051.84 827.8 L1051.87 827.2 L1051.90 830.5 L1051.94 834.2 L1051.97 832.1 L1052.00 830.8 L1052.03 812.6 L1052.07 857.7 L1052.10 850.0 L1052.13 837.8 L1052.17 807.2 L1052.20 827.5 L1052.23 865.7 L1052.26 836.6 L1052.30 826.5 L1052.33 856.7 L1052.36 864.7 L1052.40 822.6 L1052.43 838.8 L1052.46 841.5 L1052.50 822.6 L1052.53 831.8 L1052.56 844.4 L1052.59 847.3 L1052.63 845.0 L1052.66 844.7 L1052.69 834.5 L1052.72 819.9 L1052.76 813.7 L1052.79 859.4 L1052.82 862.3 L1052.86 867.9 L1052.89 820.8 L1052.92 854.0 L1052.95 826.5 L1052.99 833.9 L1053.02 827.9 L1053.05 862.3 L1053.09 858.3 L1053.12 859.6 L1053.15 835.6 L1053.18 874.6 L1053.22 830.9 L1053.25 843.9 L1053.28 848.9 L1053.31 830.1 L1053.35 836.1 L1053.38 823.6 L1053.41 857.2 L1053.45 828.2 L1053.48 825.8 L1053.51 832.3 L1053.54 847.7 L1053.58 847.6 L1053.61 842.5 L1053.64 862.9 L1053.67 854.5 L1053.71 829.9 L1053.74 843.2 L1053.77 828.2 L1053.80 831.5 L1053.84 827.2 L1053.87 823.1 L1053.90 836.1 L1053.94 867.6 L1053.97 849.5 L1054.00 824.2 L1054.03 831.1 L1054.07 846.5 L1054.10 843.8 L1054.13 818.7 L1054.16 824.9 L1054.20 845.7 L1054.23 847.4 L1054.26 824.2 L1054.29 857.4 L1054.33 832.6 L1054.36 847.1 L1054.39 844.5 L1054.42 836.9 L1054.46 880.1 L1054.49 839.3 L1054.52 840.4 L1054.55 845.3 L1054.59 863.7 L1054.62 902.0 L1054.65 857.9 L1054.68 845.6 L1054.72 854.6 L1054.75 850.3 L1054.78 884.9 L1054.81 889.8 L1054.85 857.7 L1054.88 832.9 L1054.91 847.4 L1054.94 842.0 L1054.98 833.7 L1055.01 859.6 L1055.04 833.4 L1055.07 855.0 L1055.10 844.4 L1055.14 842.0 L1055.17 855.0 L1055.20 856.2 L1055.23 906.1 L1055.27 929.5 L1055.30 861.7 L1055.33 835.9 L1055.36 853.4 L1055.40 845.3 L1055.43 880.7 L1055.46 843.5 L1055.49 840.0 L1055.52 821.7 L1055.56 844.7 L1055.59 847.4 L1055.62 838.4 L1055.65 829.0 L1055.69 845.5 L1055.72 826.8 L1055.75 832.8 L1055.78 844.1 L1055.82 840.4 L1055.85 846.6 L1055.88 847.9 L1055.91 842.2 L1055.94 831.3 L1055.98 821.5 L1056.01 849.5 L1056.04 892.4 L1056.07 838.3 L1056.10 841.2 L1056.14 840.0 L1056.17 859.5 L1056.20 847.1 L1056.23 863.5 L1056.27 818.2 L1056.30 832.1 L1056.33 835.7 L1056.36 842.5 L1056.39 843.7 L1056.43 843.3 L1056.46 891.3 L1056.49 845.5 L1056.52 851.4 L1056.55 890.6 L1056.59 854.7 L1056.62 852.5 L1056.65 867.3 L1056.68 841.8 L1056.71 825.8 L1056.75 888.8 L1056.78 850.1 L1056.81 852.3 L1056.84 829.1 L1056.88 861.3 L1056.91 843.9 L1056.94 855.6 L1056.97 840.5 L1057.00 879.6 L1057.04 844.0 L1057.07 840.4 L1057.10 875.8 L1057.13 838.3 L1057.16 840.4 L1057.20 849.1 L1057.23 901.6 L1057.26 833.3 L1057.29 838.1 L1057.32 866.0 L1057.35 830.9 L1057.39 846.6 L1057.42 865.2 L1057.45 860.6 L1057.48 866.2 L1057.51 834.0 L1057.55 876.3 L1057.58 844.8 L1057.61 868.2 L1057.64 849.5 L1057.67 876.8 L1057.71 849.9 L1057.74 841.1 L1057.77 836.4 L1057.80 850.9 L1057.83 829.9 L1057.86 837.3 L1057.90 875.1 L1057.93 854.5 L1057.96 873.8 L1057.99 836.9 L1058.02 850.7 L1058.06 850.3 L1058.09 834.7 L1058.12 842.2 L1058.15 882.8 L1058.18 862.9 L1058.21 852.3 L1058.25 856.8 L1058.28 874.2 L1058.31 891.0 L1058.34 856.3 L1058.37 831.0 L1058.41 875.7 L1058.44 838.5 L1058.47 841.9 L1058.50 837.2 L1058.53 853.0 L1058.56 856.2 L1058.60 851.0 L1058.63 851.5 L1058.66 837.7 L1058.69 863.5 L1058.72 854.5 L1058.75 845.3 L1058.79 872.4 L1058.82 887.9 L1058.85 884.3 L1058.88 908.6 L1058.91 833.7 L1058.94 848.9 L1058.98 851.4 L1059.01 843.7 L1059.04 865.9 L1059.07 881.7 L1059.10 838.5 L1059.13 854.0 L1059.16 897.9 L1059.20 879.5 L1059.23 851.9 L1059.26 836.9 L1059.29 852.3 L1059.32 854.9 L1059.35 869.5 L1059.39 841.4 L1059.42 845.5 L1059.45 909.5 L1059.48 827.5 L1059.51 859.5 L1059.54 836.8 L1059.57 867.4 L1059.61 851.6 L1059.64 886.5 L1059.67 843.6 L1059.70 879.1 L1059.73 843.9 L1059.76 833.6 L1059.80 836.8 L1059.83 836.1 L1059.86 850.7 L1059.89 901.6 L1059.92 849.5 L1059.95 866.0 L1059.98 832.5 L1060.02 856.2 L1060.05 857.3 L1060.08 838.1 L1060.11 859.2 L1060.14 853.6 L1060.17 848.9 L1060.20 875.0 L1060.24 865.1 L1060.27 839.8 L1060.30 839.1 L1060.33 835.2 L1060.36 846.7 L1060.39 862.5 L1060.42 900.9 L1060.45 901.1 L1060.49 879.1 L1060.52 840.6 L1060.55 872.4 L1060.58 870.2 L1060.61 855.6 L1060.64 929.5 L1060.67 861.2 L1060.71 840.6 L1060.74 845.5 L1060.77 841.4 L1060.80 862.0 L1060.83 862.8 L1060.86 879.1 L1060.89 829.9 L1060.92 829.8 L1060.96 904.1 L1060.99 847.9 L1061.02 848.1 L1061.05 880.5 L1061.08 841.0 L1061.11 873.6 L1061.14 884.6 L1061.17 860.6 L1061.20 862.8 L1061.24 829.0 L1061.27 862.8 L1061.30 863.2 L1061.33 872.4 L1061.36 859.0 L1061.39 841.8 L1061.42 847.2 L1061.45 865.5 L1061.49 839.7 L1061.52 841.6 L1061.55 848.6 L1061.58 874.8 L1061.61 860.7 L1061.64 853.1 L1061.67 901.4 L1061.70 862.5 L1061.73 848.5 L1061.77 861.9 L1061.80 880.7 L1061.83 853.9 L1061.86 856.6 L1061.89 862.7 L1061.92 917.1 L1061.95 865.7 L1061.98 846.4 L1062.01 863.2 L1062.05 852.5 L1062.08 858.6 L1062.11 870.2 L1062.14 834.8 L1062.17 860.2 L1062.20 852.5 L1062.23 864.4 L1062.26 878.3 L1062.29 858.8 L1062.32 866.1 L1062.36 851.8 L1062.39 850.5 L1062.42 860.8 L1062.45 861.8 L1062.48 849.3 L1062.51 874.4 L1062.54 860.6 L1062.57 854.9 L1062.60 850.9 L1062.63 880.5 L1062.66 888.5 L1062.70 895.5 L1062.73 850.9 L1062.76 841.7 L1062.79 867.1 L1062.82 836.9 L1062.85 883.0 L1062.88 869.8 L1062.91 854.9 L1062.94 859.1 L1062.97 870.2 L1063.00 847.5 L1063.04 856.2 L1063.07 877.1 L1063.10 870.3 L1063.13 865.6 L1063.16 844.7 L1063.19 850.5 L1063.22 852.2 L1063.25 838.8 L1063.28 868.5 L1063.31 865.4 L1063.34 893.8 L1063.37 864.7 L1063.41 892.8 L1063.44 861.2 L1063.47 863.2 L1063.50 853.8 L1063.53 861.2 L1063.56 896.9 L1063.59 862.2 L1063.62 831.2 L1063.65 857.0 L1063.68 850.6 L1063.71 868.6 L1063.74 863.5 L1063.77 862.1 L1063.80 895.3 L1063.84 876.9 L1063.87 845.1 L1063.90 840.0 L1063.93 873.1 L1063.96 867.8 L1063.99 870.6 L1064.02 863.6 L1064.05 840.9 L1064.08 861.8 L1064.11 883.4 L1064.14 868.4 L1064.17 842.1 L1064.20 848.0 L1064.23 892.1 L1064.26 866.0 L1064.30 850.3 L1064.33 874.3 L1064.36 895.9 L1064.39 887.1 L1064.42 871.1 L1064.45 881.5 L1064.48 846.3 L1064.51 863.1 L1064.54 882.0 L1064.57 858.4 L1064.60 849.9 L1064.63 887.6 L1064.66 874.8 L1064.69 836.7 L1064.72 845.1 L1064.75 867.6 L1064.78 904.1 L1064.82 870.5 L1064.85 889.3 L1064.88 848.3 L1064.91 868.7 L1064.94 852.4 L1064.97 858.8 L1065.00 851.0 L1065.03 864.2 L1065.06 844.1 L1065.09 873.0 L1065.12 872.6 L1065.15 894.0 L1065.18 880.0 L1065.21 847.0 L1065.24 889.2 L1065.27 868.0 L1065.30 900.3 L1065.33 866.0 L1065.36 847.7 L1065.39 876.3 L1065.42 853.0 L1065.46 921.1 L1065.49 868.3 L1065.52 894.3 L1065.55 866.4 L1065.58 859.8 L1065.61 874.4 L1065.64 877.1 L1065.67 865.3 L1065.70 858.0 L1065.73 863.8 L1065.76 877.7 L1065.79 856.2 L1065.82 853.1 L1065.85 866.7 L1065.88 874.7 L1065.91 847.7 L1065.94 858.4 L1065.97 913.7 L1066.00 858.3 L1066.03 882.0 L1066.06 860.0 L1066.09 849.5 L1066.12 867.3 L1066.15 891.2 L1066.18 882.7 L1066.21 846.7 L1066.24 877.9 L1066.27 873.6 L1066.30 867.5 L1066.33 875.9 L1066.36 869.2 L1066.39 855.4 L1066.43 877.8 L1066.46 852.7 L1066.49 860.9 L1066.52 889.7 L1066.55 871.5 L1066.58 869.1 L1066.61 878.9 L1066.64 868.4 L1066.67 864.1 L1066.70 871.0 L1066.73 844.2 L1066.76 862.9 L1066.79 846.6 L1066.82 929.5 L1066.85 897.6 L1066.88 876.2 L1066.91 854.9 L1066.94 890.7 L1066.97 860.5 L1067.00 886.1 L1067.03 876.3 L1067.06 874.0 L1067.09 881.6 L1067.12 860.1 L1067.15 888.9 L1067.18 871.4 L1067.21 882.8 L1067.24 889.6 L1067.27 859.8 L1067.30 866.1 L1067.33 864.2 L1067.36 850.9 L1067.39 893.8 L1067.42 878.7 L1067.45 869.5 L1067.48 871.9 L1067.51 894.5 L1067.54 850.6 L1067.57 864.4 L1067.60 879.0 L1067.63 871.7 L1067.66 870.2 L1067.69 860.6 L1067.72 859.2 L1067.75 878.4 L1067.78 864.1 L1067.81 904.9 L1067.84 898.2 L1067.87 916.0 L1067.90 861.7 L1067.93 871.3 L1067.96 853.6 L1067.99 865.1 L1068.02 851.7 L1068.05 870.9 L1068.08 910.9 L1068.11 884.6 L1068.14 865.5 L1068.17 862.1 L1068.20 904.1 L1068.23 850.2 L1068.26 891.7 L1068.29 892.9 L1068.32 851.7 L1068.35 909.4 L1068.38 878.1 L1068.41 866.9 L1068.44 868.4 L1068.47 876.3 L1068.50 872.7 L1068.53 894.6 L1068.56 898.2 L1068.59 864.8 L1068.62 843.9 L1068.65 886.6 L1068.68 878.6 L1068.71 879.0 L1068.74 852.8 L1068.77 852.9 L1068.80 899.1 L1068.83 866.6 L1068.86 871.0 L1068.89 919.2 L1068.92 859.8 L1068.95 878.4 L1068.97 852.1 L1069.00 875.0 L1069.03 884.4 L1069.06 858.2 L1069.09 885.9 L1069.12 917.1 L1069.15 891.2 L1069.18 888.3 L1069.21 909.6 L1069.24 883.3 L1069.27 874.8 L1069.30 891.3 L1069.33 889.8 L1069.36 878.7 L1069.39 880.8 L1069.42 859.8 L1069.45 866.5 L1069.48 866.1 L1069.51 895.1 L1069.54 888.1 L1069.57 864.8 L1069.60 929.5 L1069.63 852.9 L1069.66 853.2 L1069.69 866.5 L1069.72 854.5 L1069.75 911.2 L1069.78 867.8 L1069.81 869.1 L1069.84 895.2 L1069.87 875.0 L1069.90 879.6 L1069.92 871.3 L1069.95 872.1 L1069.98 913.9 L1070.01 865.0 L1070.04 875.0 L1070.07 873.1 L1070.10 859.0 L1070.13 859.3 L1070.16 874.4 L1070.19 890.5 L1070.22 871.4 L1070.25 853.9 L1070.28 908.1 L1070.31 859.1 L1070.34 899.4 L1070.37 852.7 L1070.40 881.3 L1070.43 859.7 L1070.46 864.9 L1070.49 871.4 L1070.52 887.8 L1070.55 872.0 L1070.57 871.4 L1070.60 870.8 L1070.63 875.7 L1070.66 866.1 L1070.69 913.6 L1070.72 862.3 L1070.75 859.5 L1070.78 877.1 L1070.81 869.1 L1070.84 886.0 L1070.87 852.9 L1070.90 883.5 L1070.93 869.8 L1070.96 907.5 L1070.99 867.4 L1071.02 872.7 L1071.05 868.2 L1071.08 876.9 L1071.10 866.8 L1071.13 883.5 L1071.16 872.1 L1071.19 885.8 L1071.22 867.4 L1071.25 874.0 L1071.28 878.3 L1071.31 886.6 L1071.34 882.9 L1071.37 873.1 L1071.40 857.7 L1071.43 859.4 L1071.46 861.3 L1071.49 863.2 L1071.52 863.2 L1071.54 883.7 L1071.57 869.9 L1071.60 904.9 L1071.63 865.6 L1071.66 866.2 L1071.69 863.5 L1071.72 861.6 L1071.75 885.2 L1071.78 880.0 L1071.81 866.6 L1071.84 894.0 L1071.87 885.0 L1071.90 873.9 L1071.93 881.6 L1071.95 884.1 L1071.98 874.5 L1072.01 859.0 L1072.04 871.5 L1072.07 913.6 L1072.10 872.0 L1072.13 883.4 L1072.16 859.0 L1072.19 891.6 L1072.22 899.8 L1072.25 872.2 L1072.28 872.2 L1072.31 877.9 L1072.33 867.5 L1072.36 865.7 L1072.39 861.8 L1072.42 886.5 L1072.45 878.0 L1072.48 917.4 L1072.51 919.7 L1072.54 901.5 L1072.57 914.0 L1072.60 897.7 L1072.63 853.6 L1072.65 862.3 L1072.68 926.5 L1072.71 901.7 L1072.74 883.2 L1072.77 883.5 L1072.80 875.5 L1072.83 875.1 L1072.86 863.4 L1072.89 880.3 L1072.92 869.3 L1072.95 862.3 L1072.97 901.7 L1073.00 881.7 L1073.03 902.5 L1073.06 870.3 L1073.09 881.9 L1073.12 869.7 L1073.15 897.8 L1073.18 866.9 L1073.21 885.5 L1073.24 881.2 L1073.27 871.9 L1073.29 860.2 L1073.32 878.4 L1073.35 880.0 L1073.38 897.0 L1073.41 867.0 L1073.44 866.2 L1073.47 871.4 L1073.50 895.8 L1073.53 868.5 L1073.56 885.4 L1073.58 856.1 L1073.61 860.8 L1073.64 889.5 L1073.67 879.3 L1073.70 862.9 L1073.73 878.4 L1073.76 914.8 L1073.79 875.3 L1073.82 882.2 L1073.84 876.5 L1073.87 880.0 L1073.90 857.9 L1073.93 904.8 L1073.96 883.4 L1073.99 873.8 L1074.02 871.4 L1074.05 867.2 L1074.08 913.6 L1074.10 900.2 L1074.13 875.3 L1074.16 884.8 L1074.19 882.5 L1074.22 868.1 L1074.25 857.3 L1074.28 892.2 L1074.31 866.5 L1074.34 883.3 L1074.36 854.9 L1074.39 855.8 L1074.42 866.7 L1074.45 887.7 L1074.48 885.7 L1074.51 929.5 L1074.54 888.5 L1074.57 882.2 L1074.59 855.0 L1074.62 922.2 L1074.65 881.6 L1074.68 904.2 L1074.71 860.5 L1074.74 902.3 L1074.77 882.1 L1074.80 871.8 L1074.82 879.8 L1074.85 864.7 L1074.88 887.6 L1074.91 872.9 L1074.94 894.3 L1074.97 871.4 L1075.00 894.1 L1075.03 890.6 L1075.05 895.9 L1075.08 923.7 L1075.11 877.9 L1075.14 895.0 L1075.17 882.4 L1075.20 913.2 L1075.23 905.7 L1075.25 901.0 L1075.28 892.0 L1075.31 878.2 L1075.34 916.6 L1075.37 929.5 L1075.40 926.3 L1075.43 882.3 L1075.46 907.4 L1075.48 897.7 L1075.51 909.5 L1075.54 906.4 L1075.57 888.2 L1075.60 886.1 L1075.63 906.6 L1075.66 897.9 L1075.68 892.7 L1075.71 915.0 L1075.74 868.3 L1075.77 865.3 L1075.80 890.6 L1075.83 874.7 L1075.86 912.8 L1075.88 874.6 L1075.91 917.8 L1075.94 882.2 L1075.97 878.1 L1076.00 906.8 L1076.03 902.4 L1076.06 890.6 L1076.08 898.8 L1076.11 897.1 L1076.14 929.5 L1076.17 895.6 L1076.20 897.2 L1076.23 894.2 L1076.25 892.4 L1076.28 905.3 L1076.31 879.8 L1076.34 905.9 L1076.37 929.4 L1076.40 910.8 L1076.43 899.3 L1076.45 891.9 L1076.48 880.4 L1076.51 880.3 L1076.54 900.2 L1076.57 923.3 L1076.60 921.8 L1076.62 886.3 L1076.65 912.2 L1076.68 916.7 L1076.71 899.1 L1076.74 922.1 L1076.77 887.7 L1076.80 894.1 L1076.82 901.6 L1076.85 912.5 L1076.88 899.4 L1076.91 893.8 L1076.94 924.9 L1076.97 897.8 L1076.99 899.2 L1077.02 891.5 L1077.05 902.2 L1077.08 913.2 L1077.11 897.9 L1077.14 911.2 L1077.16 903.6 L1077.19 877.3 L1077.22 929.5 L1077.25 896.2 L1077.28 906.9 L1077.31 929.5 L1077.33 893.5 L1077.36 885.7 L1077.39 893.9 L1077.42 891.7 L1077.45 927.5 L1077.48 907.4 L1077.50 884.8 L1077.53 898.0 L1077.56 907.8 L1077.59 894.2 L1077.62 900.0 L1077.65 929.5 L1077.67 905.5 L1077.70 897.0 L1077.73 912.1 L1077.76 891.2 L1077.79 908.6 L1077.81 914.6 L1077.84 889.7 L1077.87 909.9 L1077.90 900.2 L1077.93 920.3 L1077.96 913.1 L1077.98 929.5 L1078.01 912.7 L1078.04 894.9 L1078.07 895.1 L1078.10 917.8 L1078.12 925.3 L1078.15 887.9 L1078.18 904.6 L1078.21 899.3 L1078.24 906.7 L1078.27 929.5 L1078.29 910.6 L1078.32 920.4 L1078.35 921.8 L1078.38 899.2 L1078.41 913.4 L1078.43 903.1 L1078.46 907.1 L1078.49 909.4 L1078.52 915.9 L1078.55 894.5 L1078.57 928.0 L1078.60 894.1 L1078.63 900.7 L1078.66 929.2 L1078.69 929.5 L1078.72 902.9 L1078.74 929.5 L1078.77 885.7 L1078.80 929.5 L1078.83 896.1 L1078.86 885.4 L1078.88 921.9 L1078.91 894.3 L1078.94 921.2 L1078.97 879.8 L1079.00 892.4 L1079.02 902.7 L1079.05 890.0 L1079.08 907.2 L1079.11 902.2 L1079.14 920.4 L1079.16 908.1 L1079.19 929.5 L1079.22 928.8 L1079.25 894.9 L1079.28 929.5 L1079.30 929.5 L1079.33 911.3 L1079.36 909.7 L1079.39 894.9 L1079.42 901.4 L1079.44 897.3 L1079.47 896.2 L1079.50 913.7 L1079.53 901.6 L1079.56 922.6 L1079.58 911.8 L1079.61 927.4 L1079.64 890.4 L1079.67 929.4 L1079.69 909.0 L1079.72 914.7 L1079.75 898.2 L1079.78 918.1 L1079.81 904.9 L1079.83 919.7 L1079.86 912.5 L1079.89 893.7 L1079.92 900.8 L1079.95 921.7 L1079.97 882.9 L1080.00 914.8 L1080.03 910.8 L1080.06 919.4 L1080.09 902.0 L1080.11 907.9 L1080.14 907.9 L1080.17 921.6 L1080.20 889.7 L1080.22 909.4 L1080.25 899.3 L1080.28 912.9 L1080.31 899.3 L1080.34 897.1 L1080.36 898.2 L1080.39 929.5 L1080.42 903.5 L1080.45 929.5 L1080.47 920.8 L1080.50 899.8 L1080.53 911.4 L1080.56 881.2 L1080.59 929.5 L1080.61 915.0 L1080.64 892.5 L1080.67 909.9 L1080.70 908.9 L1080.72 917.2 L1080.75 900.7 L1080.78 929.5 L1080.81 914.7 L1080.84 889.9 L1080.86 927.2 L1080.89 929.5 L1080.92 901.4 L1080.95 919.6 L1080.97 929.5 L1081.00 929.5 L1081.03 889.8 L1081.06 929.0 L1081.08 899.2 L1081.11 925.9 L1081.14 918.2 L1081.17 908.0 L1081.19 929.5 L1081.22 926.1 L1081.25 929.5 L1081.28 929.5 L1081.31 912.6 L1081.33 921.2 L1081.36 917.4 L1081.39 905.4 L1081.42 909.4 L1081.44 909.8 L1081.47 898.0 L1081.50 899.9 L1081.53 929.5 L1081.55 929.5 L1081.58 919.0 L1081.61 918.5 L1081.64 910.0 L1081.66 912.8 L1081.69 917.4 L1081.72 881.2 L1081.75 907.3 L1081.77 929.5 L1081.80 897.7 L1081.83 908.3 L1081.86 890.8 L1081.88 899.9 L1081.91 928.2 L1081.94 886.6 L1081.97 926.1 L1082.00 926.0 L1082.02 929.5 L1082.05 900.0 L1082.08 929.5 L1082.11 904.6 L1082.13 907.8 L1082.16 929.5 L1082.19 911.7 L1082.22 918.4 L1082.24 893.1 L1082.27 880.3 L1082.30 900.5 L1082.32 892.9 L1082.35 928.4 L1082.38 899.9 L1082.41 929.5 L1082.43 918.4 L1082.46 897.4 L1082.49 920.2 L1082.52 902.7 L1082.54 911.1 L1082.57 891.0 L1082.60 929.3 L1082.63 925.5 L1082.65 913.6 L1082.68 919.2 L1082.71 903.7 L1082.74 894.3 L1082.76 903.1 L1082.79 922.2 L1082.82 912.9 L1082.85 894.8 L1082.87 899.7 L1082.90 909.1 L1082.93 883.9 L1082.96 888.5 L1082.98 908.2 L1083.01 894.8 L1083.04 929.5 L1083.06 894.5 L1083.09 923.0 L1083.12 926.3 L1083.15 902.9 L1083.17 912.1 L1083.20 929.5 L1083.23 915.6 L1083.26 905.8 L1083.28 929.5 L1083.31 900.7 L1083.34 929.5 L1083.37 902.8 L1083.39 907.2 L1083.42 903.0 L1083.45 917.4 L1083.47 929.5 L1083.50 919.5 L1083.53 897.4 L1083.56 929.5 L1083.58 921.5 L1083.61 910.8 L1083.64 929.5 L1083.67 893.6 L1083.69 914.9 L1083.72 925.9 L1083.75 925.2 L1083.77 918.7 L1083.80 890.5 L1083.83 909.7 L1083.86 901.3 L1083.88 915.4 L1083.91 906.5 L1083.94 908.8 L1083.96 912.3 L1083.99 914.6 L1084.02 929.5 L1084.05 902.0 L1084.07 901.7 L1084.10 897.8 L1084.13 894.1 L1084.16 929.5 L1084.18 929.5 L1084.21 894.9 L1084.24 905.2 L1084.26 929.5 L1084.29 929.5 L1084.32 929.5 L1084.35 929.5 L1084.37 903.0 L1084.40 891.1 L1084.43 900.8 L1084.45 911.0 L1084.48 884.9 L1084.51 901.0 L1084.53 909.8 L1084.56 919.5 L1084.59 896.6 L1084.62 894.9 L1084.64 904.2 L1084.67 893.0 L1084.70 894.9 L1084.72 893.8 L1084.75 927.4 L1084.78 929.5 L1084.81 889.1 L1084.83 927.9 L1084.86 929.5 L1084.89 918.0 L1084.91 903.1 L1084.94 929.3 L1084.97 892.5 L1085.00 889.6 L1085.02 929.5 L1085.05 899.9 L1085.08 929.5 L1085.10 924.2 L1085.13 889.7 L1085.16 893.5 L1085.18 918.0 L1085.21 896.5 L1085.24 919.0 L1085.27 919.4 L1085.29 900.5 L1085.32 910.3 L1085.35 899.7 L1085.37 929.5 L1085.40 917.3 L1085.43 920.5 L1085.45 916.8 L1085.48 891.2 L1085.51 929.5 L1085.53 926.3 L1085.56 912.1 L1085.59 915.4 L1085.62 911.1 L1085.64 924.6 L1085.67 912.9 L1085.70 902.6 L1085.72 912.2 L1085.75 899.9 L1085.78 882.0 L1085.80 912.4 L1085.83 929.5 L1085.86 922.4 L1085.88 899.8 L1085.91 912.0 L1085.94 915.3 L1085.97 915.1 L1085.99 910.0 L1086.02 912.1 L1086.05 920.7 L1086.07 929.5 L1086.10 912.4 L1086.13 926.9 L1086.15 920.3 L1086.18 895.5 L1086.21 902.1 L1086.23 904.3 L1086.26 906.0 L1086.29 911.5 L1086.31 903.6 L1086.34 929.5 L1086.37 923.6 L1086.39 906.7 L1086.42 921.5 L1086.45 929.5 L1086.47 897.8 L1086.50 917.8 L1086.53 929.5 L1086.56 906.9 L1086.58 929.5 L1086.61 928.7 L1086.64 904.8 L1086.66 897.1 L1086.69 929.0 L1086.72 908.6 L1086.74 906.1 L1086.77 910.6 L1086.80 923.4 L1086.82 929.5 L1086.85 929.5 L1086.88 926.0 L1086.90 898.8 L1086.93 906.9 L1086.96 883.6 L1086.98 900.0 L1087.01 905.8 L1087.04 899.0 L1087.06 911.2 L1087.09 896.7 L1087.12 919.3 L1087.14 908.7 L1087.17 902.1 L1087.20 921.1 L1087.22 905.4 L1087.25 887.9 L1087.28 929.5 L1087.30 925.4 L1087.33 929.5 L1087.36 904.1 L1087.38 902.9 L1087.41 921.8 L1087.44 897.6 L1087.46 929.5 L1087.49 919.5 L1087.52 914.5 L1087.54 891.4 L1087.57 903.8 L1087.60 909.4 L1087.62 929.5 L1087.65 897.7 L1087.68 916.6 L1087.70 893.7 L1087.73 929.5 L1087.76 925.2 L1087.78 929.5 L1087.81 925.3 L1087.84 899.5 L1087.86 902.2 L1087.89 890.3 L1087.92 914.9 L1087.94 894.0 L1087.97 900.0 L1087.99 899.3 L1088.02 929.5 L1088.05 928.4 L1088.07 904.2 L1088.10 929.5 L1088.13 898.7 L1088.15 897.7 L1088.18 908.0 L1088.21 929.5 L1088.23 895.4 L1088.26 928.4 L1088.29 914.8 L1088.31 929.2 L1088.34 906.4 L1088.37 890.9 L1088.39 895.5 L1088.42 924.0 L1088.45 913.2 L1088.47 926.7 L1088.50 900.7 L1088.52 904.2 L1088.55 901.3 L1088.58 929.5 L1088.60 922.9 L1088.63 898.7 L1088.66 924.2 L1088.68 890.7 L1088.71 911.7 L1088.74 903.4 L1088.76 926.9 L1088.79 923.9 L1088.82 921.9 L1088.84 900.8 L1088.87 891.2 L1088.89 919.6 L1088.92 922.5 L1088.95 885.5 L1088.97 929.5 L1089.00 929.5 L1089.03 907.7 L1089.05 914.1 L1089.08 920.2 L1089.11 929.5 L1089.13 920.2 L1089.16 914.0 L1089.19 927.4 L1089.21 912.9 L1089.24 890.3 L1089.26 915.4 L1089.29 909.9 L1089.32 906.8 L1089.34 909.2 L1089.37 902.2 L1089.40 905.9 L1089.42 926.0 L1089.45 929.5 L1089.47 911.7 L1089.50 929.5 L1089.53 897.6 L1089.55 914.2 L1089.58 925.9 L1089.61 928.5 L1089.63 909.0 L1089.66 899.9 L1089.69 929.5 L1089.71 918.5 L1089.74 920.7 L1089.76 907.5 L1089.79 897.1 L1089.82 916.7 L1089.84 909.8 L1089.87 929.5 L1089.90 921.3 L1089.92 926.9 L1089.95 916.8 L1089.97 926.7 L1090.00 898.3 L1090.03 929.5 L1090.05 917.3 L1090.08 918.1 L1090.10 901.1 L1090.13 895.9 L1090.16 923.8 L1090.18 925.1 L1090.21 921.7 L1090.24 904.0 L1090.26 913.4 L1090.29 927.9 L1090.31 920.3 L1090.34 929.5 L1090.37 895.9 L1090.39 928.5 L1090.42 887.5 L1090.45 919.6 L1090.47 915.5 L1090.50 894.9 L1090.52 910.8 L1090.55 921.9 L1090.58 929.5 L1090.60 895.1 L1090.63 914.5 L1090.65 929.5 L1090.68 897.7 L1090.71 929.5 L1090.73 929.5 L1090.76 907.9 L1090.78 902.4 L1090.81 899.4 L1090.84 902.9 L1090.86 910.9 L1090.89 924.3 L1090.92 929.5 L1090.94 916.8 L1090.97 929.5 L1090.99 911.3 L1091.02 921.6 L1091.05 877.5 L1091.07 911.0 L1091.10 889.8 L1091.12 898.8 L1091.15 929.5 L1091.18 897.9 L1091.20 906.4 L1091.23 915.5 L1091.25 915.5 L1091.28 891.0 L1091.31 897.7 L1091.33 922.8 L1091.36 910.6 L1091.38 896.6 L1091.41 913.6 L1091.44 909.4 L1091.46 929.5 L1091.49 893.1 L1091.51 901.4 L1091.54 895.4 L1091.57 916.8 L1091.59 929.5 L1091.62 929.3 L1091.64 898.0 L1091.67 916.3 L1091.70 909.0 L1091.72 929.5 L1091.75 924.7 L1091.77 919.3 L1091.80 904.9 L1091.83 912.1 L1091.85 915.9 L1091.88 909.9 L1091.90 917.5 L1091.93 896.7 L1091.96 911.6 L1091.98 929.5 L1092.01 910.7 L1092.03 915.1 L1092.06 927.8 L1092.08 929.5 L1092.11 926.7 L1092.14 910.1 L1092.16 925.2 L1092.19 902.7 L1092.21 920.2 L1092.24 889.0 L1092.27 902.4 L1092.29 901.6 L1092.32 909.1 L1092.34 927.0 L1092.37 890.1 L1092.40 929.5 L1092.42 897.1 L1092.45 929.5 L1092.47 929.5 L1092.50 920.2 L1092.52 929.5 L1092.55 929.5 L1092.58 913.0 L1092.60 929.5 L1092.63 892.3 L1092.65 929.5 L1092.68 922.0 L1092.71 929.5 L1092.73 900.6 L1092.76 896.7 L1092.78 916.2 L1092.81 920.0 L1092.83 924.2 L1092.86 902.1 L1092.89 918.2 L1092.91 929.5 L1092.94 905.4 L1092.96 929.5 L1092.99 929.5 L1093.01 923.5 L1093.04 912.9 L1093.07 912.1 L1093.09 914.1 L1093.12 899.5 L1093.14 896.3 L1093.17 906.6 L1093.19 902.0 L1093.22 929.5 L1093.25 909.9 L1093.27 929.5 L1093.30 918.2 L1093.32 929.5 L1093.35 929.5 L1093.37 925.8 L1093.40 913.4 L1093.43 905.3 L1093.45 918.4 L1093.48 908.1 L1093.50 929.5 L1093.53 893.7 L1093.55 921.8 L1093.58 909.2 L1093.61 912.4 L1093.63 917.5 L1093.66 929.5 L1093.68 929.5 L1093.71 910.0 L1093.73 929.5 L1093.76 929.5 L1093.79 916.9 L1093.81 918.5 L1093.84 903.5 L1093.86 929.5 L1093.89 915.2 L1093.91 929.4 L1093.94 929.5 L1093.96 921.4 L1093.99 925.2 L1094.02 918.0 L1094.04 900.3 L1094.07 914.2 L1094.09 895.8 L1094.12 902.8 L1094.14 929.5 L1094.17 911.1 L1094.20 900.6 L1094.22 913.3 L1094.25 895.7 L1094.27 920.8 L1094.30 905.1 L1094.32 904.6 L1094.35 922.3 L1094.37 929.5 L1094.40 889.6 L1094.43 926.6 L1094.45 919.7 L1094.48 915.6 L1094.50 912.9 L1094.53 889.0 L1094.55 910.2 L1094.58 917.2 L1094.60 909.6 L1094.63 929.5 L1094.65 909.8 L1094.68 929.5 L1094.71 929.5 L1094.73 929.5 L1094.76 915.9 L1094.78 916.3 L1094.81 929.5 L1094.83 900.0 L1094.86 905.2 L1094.88 889.7 L1094.91 916.0 L1094.93 914.4 L1094.96 929.5 L1094.99 929.5 L1095.01 912.6 L1095.04 916.2 L1095.06 899.3 L1095.09 929.4 L1095.11 917.3 L1095.14 902.8 L1095.16 929.5 L1095.19 894.5 L1095.21 904.0 L1095.24 915.6 L1095.27 929.5 L1095.29 901.4 L1095.32 907.2 L1095.34 929.5 L1095.37 910.0 L1095.39 929.5 L1095.42 891.3 L1095.44 906.1 L1095.47 909.0 L1095.49 929.5 L1095.52 899.4 L1095.54 924.8 L1095.57 929.5 L1095.60 929.5 L1095.62 929.5 L1095.65 895.6 L1095.67 916.0 L1095.70 905.4 L1095.72 900.7 L1095.75 906.4 L1095.77 928.6 L1095.80 920.1 L1095.82 901.2 L1095.85 908.3 L1095.87 897.0 L1095.90 929.5 L1095.92 929.5 L1095.95 915.7 L1095.98 929.5 L1096.00 929.5 L1096.03 905.0 L1096.05 907.1 L1096.08 904.4 L1096.10 922.8 L1096.13 921.2 L1096.15 917.8 L1096.18 929.5 L1096.20 918.3 L1096.23 909.6 L1096.25 924.9 L1096.28 929.5 L1096.30 895.8 L1096.33 916.5 L1096.35 902.0 L1096.38 929.5 L1096.40 914.3 L1096.43 929.5 L1096.46 925.1 L1096.48 929.5 L1096.51 920.7 L1096.53 921.4 L1096.56 929.5 L1096.58 929.5 L1096.61 910.7 L1096.63 900.1 L1096.66 929.5 L1096.68 897.3 L1096.71 929.5 L1096.73 929.5 L1096.76 924.8 L1096.78 929.5 L1096.81 922.1 L1096.83 929.5 L1096.86 921.6 L1096.88 906.2 L1096.91 898.6 L1096.93 929.5 L1096.96 915.4 L1096.98 901.5 L1097.01 920.0 L1097.03 908.0 L1097.06 907.9 L1097.08 929.5 L1097.11 922.8 L1097.13 929.5 L1097.16 929.5 L1097.19 915.0 L1097.21 915.6 L1097.24 914.8 L1097.26 911.9 L1097.29 929.5 L1097.31 929.5 L1097.34 909.5 L1097.36 927.9 L1097.39 906.1 L1097.41 889.4 L1097.44 926.4 L1097.46 929.5 L1097.49 910.8 L1097.51 929.5 L1097.54 928.4 L1097.56 910.5 L1097.59 929.5 L1097.61 929.5 L1097.64 902.5 L1097.66 929.5 L1097.69 915.0 L1097.71 908.6 L1097.74 912.7 L1097.76 918.8 L1097.79 918.8 L1097.81 909.4 L1097.84 897.3 L1097.86 923.6 L1097.89 928.3 L1097.91 927.0 L1097.94 913.5 L1097.96 929.5 L1097.99 892.0 L1098.01 902.0 L1098.04 892.3 L1098.06 920.0 L1098.09 918.6 L1098.11 906.7 L1098.14 918.7 L1098.16 887.3 L1098.19 895.0 L1098.21 929.5 L1098.24 929.5 L1098.26 898.1 L1098.29 924.9 L1098.31 918.0 L1098.34 919.3 L1098.36 929.5 L1098.39 924.1 L1098.41 929.5 L1098.44 926.3 L1098.46 929.5 L1098.49 901.3 L1098.51 929.5 L1098.54 910.5 L1098.56 929.5 L1098.59 929.5 L1098.61 929.5 L1098.64 929.5 L1098.66 913.3 L1098.69 918.7 L1098.71 929.5 L1098.73 897.2 L1098.76 919.4 L1098.78 920.7 L1098.81 928.4 L1098.83 911.4 L1098.86 922.4 L1098.88 929.5 L1098.91 913.0 L1098.93 926.3 L1098.96 929.5 L1098.98 912.5 L1099.01 918.8 L1099.03 917.1 L1099.06 929.5 L1099.08 908.5 L1099.11 909.2 L1099.13 913.4 L1099.16 924.8 L1099.18 903.4 L1099.21 929.5 L1099.23 917.9 L1099.26 929.2 L1099.28 914.2 L1099.31 893.9 L1099.33 913.2 L1099.36 920.9 L1099.38 899.7 L1099.41 929.5 L1099.43 921.6 L1099.45 916.1 L1099.48 894.1 L1099.50 907.6 L1099.53 911.3 L1099.55 924.7 L1099.58 904.4 L1099.60 917.2 L1099.63 908.6 L1099.65 920.6 L1099.68 926.7 L1099.70 918.6 L1099.73 929.5 L1099.75 923.3 L1099.78 899.3 L1099.80 925.0 L1099.83 917.1 L1099.85 929.5 L1099.88 929.5 L1099.90 911.9 L1099.92 929.5 L1099.95 906.9 L1099.97 924.7 L1100.00 888.6 L1100.02 929.5 L1100.05 915.6 L1100.07 916.0 L1100.10 917.7 L1100.12 912.7 L1100.15 906.9 L1100.17 927.0 L1100.20 923.6 L1100.22 897.0 L1100.25 908.6 L1100.27 929.5 L1100.30 909.2 L1100.32 909.6 L1100.34 921.3 L1100.37 912.7 L1100.39 929.5 L1100.42 929.5 L1100.44 902.2 L1100.47 906.7 L1100.49 904.3 L1100.52 915.6 L1100.54 909.2 L1100.57 926.1 L1100.59 929.5 L1100.62 898.5 L1100.64 893.8 L1100.66 901.2 L1100.69 910.3 L1100.71 902.4 L1100.74 915.1 L1100.76 912.4 L1100.79 929.2 L1100.81 929.5 L1100.84 929.5 L1100.86 914.7 L1100.89 924.4 L1100.91 902.4 L1100.93 922.8 L1100.96 929.5 L1100.98 929.5 L1101.01 902.8 L1101.03 904.1 L1101.06 929.5 L1101.08 927.4 L1101.11 929.5 L1101.13 898.2 L1101.16 923.2 L1101.18 893.3 L1101.20 929.5 L1101.23 929.5 L1101.25 910.8 L1101.28 887.0 L1101.30 929.5 L1101.33 929.5 L1101.35 923.3 L1101.38 912.6 L1101.40 911.1 L1101.42 929.5 L1101.45 929.5 L1101.47 912.5 L1101.50 906.7 L1101.52 929.5 L1101.55 915.0 L1101.57 915.6 L1101.60 910.4 L1101.62 929.1 L1101.65 929.5 L1101.67 916.7 L1101.69 929.5 L1101.72 913.9 L1101.74 914.8 L1101.77 929.5 L1101.79 929.5 L1101.82 929.5 L1101.84 927.9 L1101.87 929.5 L1101.89 929.5 L1101.91 929.5 L1101.94 919.3 L1101.96 913.5 L1101.99 889.5 L1102.01 919.1 L1102.04 912.2 L1102.06 882.6 L1102.08 929.5 L1102.11 910.3 L1102.13 929.5 L1102.16 892.1 L1102.18 912.4 L1102.21 929.5 L1102.23 926.1 L1102.26 926.1 L1102.28 917.5 L1102.30 900.1 L1102.33 929.5 L1102.35 929.5 L1102.38 917.1 L1102.40 920.7 L1102.43 929.5 L1102.45 917.8 L1102.47 917.0 L1102.50 917.4 L1102.52 929.5 L1102.55 929.5 L1102.57 911.4 L1102.60 929.5 L1102.62 913.0 L1102.64 926.2 L1102.67 913.1 L1102.69 929.5 L1102.72 929.5 L1102.74 929.5 L1102.77 913.3 L1102.79 912.1 L1102.81 915.3 L1102.84 922.7 L1102.86 895.1 L1102.89 920.0 L1102.91 929.5 L1102.94 898.1 L1102.96 929.5 L1102.98 921.2 L1103.01 929.5 L1103.03 929.1 L1103.06 928.8 L1103.08 929.5 L1103.11 914.9 L1103.13 901.8 L1103.15 929.5 L1103.18 929.5 L1103.20 929.0 L1103.23 906.7 L1103.25 918.1 L1103.28 918.7 L1103.30 912.6 L1103.32 917.7 L1103.35 916.4 L1103.37 929.5 L1103.40 923.8 L1103.42 929.5 L1103.44 929.5 L1103.47 904.9 L1103.49 929.5 L1103.52 913.3 L1103.54 922.4 L1103.57 920.8 L1103.59 929.5 L1103.61 910.2 L1103.64 926.5 L1103.66 912.9 L1103.69 929.5 L1103.71 917.9 L1103.73 924.7 L1103.76 929.5 L1103.78 909.3 L1103.81 888.5 L1103.83 929.5 L1103.86 919.2 L1103.88 924.8 L1103.90 929.5 L1103.93 929.5 L1103.95 913.6 L1103.98 929.5 L1104.00 913.7 L1104.02 929.4 L1104.05 929.5 L1104.07 912.6 L1104.10 914.9 L1104.12 912.8 L1104.14 911.8 L1104.17 914.6 L1104.19 929.5 L1104.22 897.9 L1104.24 929.5 L1104.26 929.5 L1104.29 920.7 L1104.31 924.7 L1104.34 910.2 L1104.36 929.5 L1104.38 929.5 L1104.41 913.4 L1104.43 918.2 L1104.46 906.8 L1104.48 908.2 L1104.51 929.5 L1104.53 924.7 L1104.55 916.0 L1104.58 924.6 L1104.60 905.3 L1104.63 887.9 L1104.65 912.5 L1104.67 921.5 L1104.70 905.3 L1104.72 920.0 L1104.75 911.2 L1104.77 908.7 L1104.79 929.5 L1104.82 912.6 L1104.84 929.5 L1104.87 929.5 L1104.89 913.2 L1104.91 895.0 L1104.94 929.5 L1104.96 920.4 L1104.99 921.7 L1105.01 927.0 L1105.03 920.3 L1105.06 929.5 L1105.08 890.4 L1105.10 929.5 L1105.13 923.5 L1105.15 914.5 L1105.18 929.5 L1105.20 929.5 L1105.22 922.5 L1105.25 890.7 L1105.27 923.8 L1105.30 914.7 L1105.32 921.5 L1105.34 929.5 L1105.37 902.7 L1105.39 929.5 L1105.42 910.7 L1105.44 908.3 L1105.46 895.7 L1105.49 901.3 L1105.51 909.0 L1105.54 919.5 L1105.56 929.5 L1105.58 904.8 L1105.61 909.8 L1105.63 913.2 L1105.65 924.7 L1105.68 912.4 L1105.70 926.2 L1105.73 903.7 L1105.75 896.5 L1105.77 921.8 L1105.80 929.4 L1105.82 902.9 L1105.85 896.9 L1105.87 926.2 L1105.89 898.5 L1105.92 929.5 L1105.94 927.4 L1105.96 904.2 L1105.99 914.7 L1106.01 897.6 L1106.04 900.1 L1106.06 912.4 L1106.08 929.5 L1106.11 929.5 L1106.13 929.5 L1106.15 924.6 L1106.18 922.0 L1106.20 918.8 L1106.23 925.5 L1106.25 918.2 L1106.27 914.2 L1106.30 929.5 L1106.32 910.4 L1106.35 914.5 L1106.37 926.8 L1106.39 929.5 L1106.42 912.1 L1106.44 915.6 L1106.46 914.4 L1106.49 906.6 L1106.51 912.5 L1106.54 929.5 L1106.56 905.6 L1106.58 917.4 L1106.61 909.7 L1106.63 921.8 L1106.65 929.5 L1106.68 901.9 L1106.70 917.8 L1106.72 905.6 L1106.75 925.1 L1106.77 926.8 L1106.80 907.1 L1106.82 907.5 L1106.84 910.5 L1106.87 911.5 L1106.89 929.5 L1106.91 929.5 L1106.94 929.5 L1106.96 914.1 L1106.99 916.6 L1107.01 906.3 L1107.03 916.8 L1107.06 929.5 L1107.08 900.4 L1107.10 914.1 L1107.13 906.0 L1107.15 929.5 L1107.17 910.5 L1107.20 917.9 L1107.22 897.4 L1107.25 927.5 L1107.27 919.0 L1107.29 929.5 L1107.32 929.3 L1107.34 929.5 L1107.36 908.9 L1107.39 908.4 L1107.41 922.8 L1107.43 897.2 L1107.46 929.5 L1107.48 929.3 L1107.51 918.2 L1107.53 912.9 L1107.55 899.5 L1107.58 920.8 L1107.60 929.5 L1107.62 902.1 L1107.65 901.0 L1107.67 927.3 L1107.69 917.2 L1107.72 929.5 L1107.74 914.9 L1107.76 929.5 L1107.79 929.5 L1107.81 911.3 L1107.84 920.0 L1107.86 922.3 L1107.88 916.4 L1107.91 929.5 L1107.93 928.4 L1107.95 929.5 L1107.98 908.6 L1108.00 918.7 L1108.02 920.3 L1108.05 922.1 L1108.07 892.6 L1108.09 929.5 L1108.12 916.4 L1108.14 904.4 L1108.16 929.5 L1108.19 920.9 L1108.21 929.5 L1108.24 929.5 L1108.26 924.0 L1108.28 929.5 L1108.31 897.8 L1108.33 911.8 L1108.35 904.6 L1108.38 924.7 L1108.40 907.2 L1108.42 894.8 L1108.45 903.2 L1108.47 905.1 L1108.49 920.2 L1108.52 916.7 L1108.54 917.1 L1108.56 891.7 L1108.59 919.7 L1108.61 908.6 L1108.63 900.6 L1108.66 897.9 L1108.68 904.0 L1108.70 914.5 L1108.73 904.8 L1108.75 917.0 L1108.77 904.6 L1108.80 929.5 L1108.82 929.5 L1108.85 911.5 L1108.87 899.2 L1108.89 929.5 L1108.92 900.1 L1108.94 925.5 L1108.96 929.5 L1108.99 917.9 L1109.01 929.5 L1109.03 903.8 L1109.06 929.4 L1109.08 929.5 L1109.10 929.5 L1109.13 929.5 L1109.15 916.0 L1109.17 919.1 L1109.20 929.5 L1109.22 913.7 L1109.24 908.8 L1109.27 895.3 L1109.29 906.6 L1109.31 903.5 L1109.34 929.5 L1109.36 911.0 L1109.38 912.7 L1109.41 929.5 L1109.43 927.7 L1109.45 915.9 L1109.48 901.5 L1109.50 913.2 L1109.52 910.2 L1109.55 929.5 L1109.57 915.4 L1109.59 929.5 L1109.62 909.4 L1109.64 897.2 L1109.66 929.5 L1109.69 899.5 L1109.71 929.5 L1109.73 922.8 L1109.76 910.0 L1109.78 929.5 L1109.80 915.8 L1109.83 929.5 L1109.85 921.1 L1109.87 929.5 L1109.90 929.5 L1109.92 913.7 L1109.94 927.8 L1109.97 929.5 L1109.99 925.8 L1110.01 894.1 L1110.03 927.6 L1110.06 929.5 L1110.08 906.2 L1110.10 901.0 L1110.13 899.0 L1110.15 920.6 L1110.17 901.7 L1110.20 929.5 L1110.22 915.2 L1110.24 929.5 L1110.27 929.5 L1110.29 915.8 L1110.31 905.7 L1110.34 915.7 L1110.36 923.4 L1110.38 929.5 L1110.41 929.5 L1110.43 911.7 L1110.45 894.2 L1110.48 926.4 L1110.50 927.6 L1110.52 925.5 L1110.55 929.5 L1110.57 929.5 L1110.59 924.4 L1110.61 929.5 L1110.64 902.8 L1110.66 929.5 L1110.68 926.5 L1110.71 901.0 L1110.73 905.0 L1110.75 925.2 L1110.78 911.0 L1110.80 929.5 L1110.82 909.9 L1110.85 918.1 L1110.87 918.9 L1110.89 929.5 L1110.92 910.9 L1110.94 929.5 L1110.96 929.5 L1110.98 921.7 L1111.01 929.5 L1111.03 929.5 L1111.05 929.5 L1111.08 920.7 L1111.10 896.9 L1111.12 907.4 L1111.15 925.7 L1111.17 902.4 L1111.19 925.3 L1111.22 912.6 L1111.24 914.2 L1111.26 929.5 L1111.29 929.5 L1111.31 929.5 L1111.33 916.6 L1111.35 920.3 L1111.38 929.5 L1111.40 929.5 L1111.42 923.6 L1111.45 900.0 L1111.47 929.5 L1111.49 897.1 L1111.52 902.4 L1111.54 926.1 L1111.56 906.4 L1111.58 929.5 L1111.61 927.6 L1111.63 905.0 L1111.65 929.5 L1111.68 929.5 L1111.70 926.0 L1111.72 929.5 L1111.75 929.5 L1111.77 917.7 L1111.79 929.5 L1111.81 929.5 L1111.84 928.2 L1111.86 900.3 L1111.88 913.7 L1111.91 928.7 L1111.93 913.4 L1111.95 905.0 L1111.98 917.0 L1112.00 903.8 L1112.02 917.8 L1112.04 901.4 L1112.07 929.5 L1112.09 907.2 L1112.11 929.5 L1112.14 901.9 L1112.16 924.8 L1112.18 925.4 L1112.21 906.6 L1112.23 924.6 L1112.25 921.0 L1112.27 924.0 L1112.30 906.0 L1112.32 917.9 L1112.34 929.5 L1112.37 924.1 L1112.39 908.5 L1112.41 912.2 L1112.43 929.5 L1112.46 897.9 L1112.48 918.0 L1112.50 919.4 L1112.53 916.0 L1112.55 887.7 L1112.57 901.9 L1112.59 929.5 L1112.62 917.0 L1112.64 910.5 L1112.66 916.9 L1112.69 897.9 L1112.71 900.2 L1112.73 929.5 L1112.75 929.5 L1112.78 906.5 L1112.80 911.6 L1112.82 899.9 L1112.85 911.6 L1112.87 919.8 L1112.89 929.5 L1112.91 919.1 L1112.94 929.5 L1112.96 929.5 L1112.98 921.8 L1113.01 897.0 L1113.03 903.5 L1113.05 927.0 L1113.07 903.3 L1113.10 929.5 L1113.12 898.1 L1113.14 898.2 L1113.17 929.5 L1113.19 915.1 L1113.21 921.3 L1113.23 923.2 L1113.26 902.6 L1113.28 912.3 L1113.30 913.7 L1113.33 929.5 L1113.35 929.5 L1113.37 928.3 L1113.39 905.8 L1113.42 917.4 L1113.44 929.5 L1113.46 905.6 L1113.48 912.9 L1113.51 924.1 L1113.53 929.5 L1113.55 894.8 L1113.58 928.1 L1113.60 917.4 L1113.62 920.2 L1113.64 929.5 L1113.67 901.3 L1113.69 923.3 L1113.71 911.6 L1113.74 929.5 L1113.76 929.5 L1113.78 915.5 L1113.80 904.5 L1113.83 929.5 L1113.85 928.7 L1113.87 921.7 L1113.89 929.5 L1113.92 929.5 L1113.94 908.7 L1113.96 928.0 L1113.98 929.5 L1114.01 909.6 L1114.03 929.5 L1114.05 911.5 L1114.08 929.5 L1114.10 922.6 L1114.12 929.5 L1114.14 929.5 L1114.17 929.5 L1114.19 913.8 L1114.21 917.3 L1114.23 922.8 L1114.26 929.5 L1114.28 915.6 L1114.30 929.5 L1114.33 907.5 L1114.35 919.9 L1114.37 904.2 L1114.39 905.5 L1114.42 910.6 L1114.44 897.6 L1114.46 922.1 L1114.48 924.4 L1114.51 914.8 L1114.53 929.5 L1114.55 921.0 L1114.57 927.7 L1114.60 900.7 L1114.62 912.2 L1114.64 894.2 L1114.66 904.9 L1114.69 929.5 L1114.71 903.7 L1114.73 923.3 L1114.75 914.1 L1114.78 927.1 L1114.80 929.5 L1114.82 929.5 L1114.85 929.5 L1114.87 929.5 L1114.89 915.0 L1114.91 929.5 L1114.94 929.5 L1114.96 910.2 L1114.98 912.2 L1115.00 920.1 L1115.03 929.5 L1115.05 901.6 L1115.07 929.5 L1115.09 927.1 L1115.12 923.2 L1115.14 915.3 L1115.16 914.3 L1115.18 915.3 L1115.21 929.5 L1115.23 916.7 L1115.25 929.5 L1115.27 929.5 L1115.30 900.8 L1115.32 893.8 L1115.34 929.5 L1115.36 906.6 L1115.39 929.5 L1115.41 915.2 L1115.43 908.0 L1115.45 892.3 L1115.48 916.2 L1115.50 923.5 L1115.52 898.3 L1115.54 892.1 L1115.57 910.6 L1115.59 929.5 L1115.61 929.5 L1115.63 909.3 L1115.66 915.2 L1115.68 915.7 L1115.70 929.3 L1115.72 910.5 L1115.75 913.3 L1115.77 919.3 L1115.79 908.5 L1115.81 916.3 L1115.84 929.5 L1115.86 919.3 L1115.88 898.5 L1115.90 913.1 L1115.93 922.2 L1115.95 908.3 L1115.97 914.6 L1115.99 921.7 L1116.02 913.7 L1116.04 906.1 L1116.06 929.5 L1116.08 899.3 L1116.10 929.5 L1116.13 901.4 L1116.15 921.4 L1116.17 921.0 L1116.19 915.4 L1116.22 924.7 L1116.24 929.5 L1116.26 911.8 L1116.28 898.7 L1116.31 906.8 L1116.33 929.5 L1116.35 923.4 L1116.37 929.5 L1116.40 914.5 L1116.42 911.9 L1116.44 928.1 L1116.46 921.9 L1116.49 929.5 L1116.51 904.9 L1116.53 912.7 L1116.55 928.1 L1116.57 929.5 L1116.60 917.6 L1116.62 929.5 L1116.64 902.1 L1116.66 925.3 L1116.69 912.1 L1116.71 928.1 L1116.73 910.8 L1116.75 906.1 L1116.78 909.6 L1116.80 929.5 L1116.82 929.2 L1116.84 929.5 L1116.86 915.3 L1116.89 899.0 L1116.91 929.5 L1116.93 909.0 L1116.95 929.5 L1116.98 918.3 L1117.00 916.5 L1117.02 895.4 L1117.04 907.7 L1117.07 929.5 L1117.09 917.1 L1117.11 929.5 L1117.13 929.5 L1117.15 920.2 L1117.18 929.5 L1117.20 887.4 L1117.22 914.7 L1117.24 920.1 L1117.27 897.8 L1117.29 929.5 L1117.31 904.0 L1117.33 922.2 L1117.35 909.5 L1117.38 913.9 L1117.40 917.2 L1117.42 910.2 L1117.44 905.1 L1117.47 926.4 L1117.49 924.3 L1117.51 899.9 L1117.53 929.5 L1117.55 901.6 L1117.58 907.4 L1117.60 909.8 L1117.62 913.1 L1117.64 918.1 L1117.67 929.5 L1117.69 901.2 L1117.71 921.7 L1117.73 924.1 L1117.75 908.8 L1117.78 912.7 L1117.80 916.2 L1117.82 929.5 L1117.84 929.5 L1117.87 917.6 L1117.89 898.9 L1117.91 912.7 L1117.93 929.5 L1117.95 915.7 L1117.98 914.0 L1118.00 924.7 L1118.02 896.2 L1118.04 925.2 L1118.06 927.2 L1118.09 901.7 L1118.11 915.0 L1118.13 929.5 L1118.15 908.8 L1118.18 919.6 L1118.20 912.1 L1118.22 920.6 L1118.24 913.9 L1118.26 912.0 L1118.29 929.5 L1118.31 927.5 L1118.33 929.5 L1118.35 911.6 L1118.37 916.9 L1118.40 912.8 L1118.42 929.5 L1118.44 912.9 L1118.46 926.7 L1118.49 904.9 L1118.51 920.0 L1118.53 909.0 L1118.55 929.5 L1118.57 912.8 L1118.60 929.5 L1118.62 921.0 L1118.64 911.8 L1118.66 920.3 L1118.68 929.5 L1118.71 927.4 L1118.73 929.5 L1118.75 921.0 L1118.77 923.4 L1118.79 903.0 L1118.82 929.5 L1118.84 924.5 L1118.86 924.9 L1118.88 910.2 L1118.90 929.5 L1118.93 919.2 L1118.95 910.8 L1118.97 929.5 L1118.99 929.5 L1119.01 926.4 L1119.04 929.5 L1119.06 927.4 L1119.08 913.3 L1119.10 929.5 L1119.12 929.5 L1119.15 926.0 L1119.17 915.3 L1119.19 918.0 L1119.21 896.3 L1119.23 929.5 L1119.26 929.5 L1119.28 922.1 L1119.30 916.5 L1119.32 929.5 L1119.34 893.0 L1119.37 913.8 L1119.39 907.8 L1119.41 922.7 L1119.43 912.0 L1119.45 922.6 L1119.48 929.5 L1119.50 914.2 L1119.52 901.3 L1119.54 891.2 L1119.56 929.5 L1119.59 916.5 L1119.61 915.4 L1119.63 894.3 L1119.65 900.6 L1119.67 883.4 L1119.70 929.5 L1119.72 896.3 L1119.74 910.6 L1119.76 916.6 L1119.78 920.9 L1119.81 906.5 L1119.83 924.4 L1119.85 924.0 L1119.87 929.5 L1119.89 899.9 L1119.91 909.5 L1119.94 900.4 L1119.96 909.2 L1119.98 906.0 L1120.00 894.2 L1120.02 929.5 L1120.05 908.6 L1120.07 929.5 L1120.09 929.5 L1120.11 929.5 L1120.13 893.3 L1120.16 921.4 L1120.18 929.5 L1120.20 923.6 L1120.22 922.2 L1120.24 914.5 L1120.26 929.5 L1120.29 919.0 L1120.31 911.6 L1120.33 917.3 L1120.35 916.3 L1120.37 904.7 L1120.40 925.6 L1120.42 929.5 L1120.44 924.6 L1120.46 890.1 L1120.48 913.6 L1120.50 929.5 L1120.53 901.8 L1120.55 917.7 L1120.57 926.1 L1120.59 918.9 L1120.61 910.6 L1120.64 891.7 L1120.66 927.3 L1120.68 903.6 L1120.70 921.9 L1120.72 918.4 L1120.74 928.4 L1120.77 900.7 L1120.79 929.5 L1120.81 929.5 L1120.83 929.5 L1120.85 904.4 L1120.88 928.1 L1120.90 912.4 L1120.92 926.9 L1120.94 926.8 L1120.96 913.6 L1120.98 929.5 L1121.01 914.7 L1121.03 915.9 L1121.05 927.8 L1121.07 902.7 L1121.09 929.5 L1121.11 910.5 L1121.14 929.5 L1121.16 902.3 L1121.18 901.2 L1121.20 921.2 L1121.22 906.7 L1121.24 914.7 L1121.27 905.0 L1121.29 928.2 L1121.31 929.1 L1121.33 926.0 L1121.35 901.7 L1121.38 895.6 L1121.40 920.7 L1121.42 898.5 L1121.44 927.7 L1121.46 919.1 L1121.48 929.5 L1121.51 929.5 L1121.53 924.2 L1121.55 929.5 L1121.57 917.4 L1121.59 908.7 L1121.61 896.8 L1121.64 926.9 L1121.66 924.7 L1121.68 923.0 L1121.70 917.5 L1121.72 915.1 L1121.74 929.5 L1121.77 912.0 L1121.79 901.8 L1121.81 929.5 L1121.83 929.5 L1121.85 929.5 L1121.87 929.5 L1121.90 914.3 L1121.92 902.6 L1121.94 916.6 L1121.96 916.5 L1121.98 912.3 L1122.00 929.5 L1122.03 906.8 L1122.05 929.5 L1122.07 905.2 L1122.09 908.2 L1122.11 929.5 L1122.13 906.1 L1122.15 927.9 L1122.18 907.7 L1122.20 913.1 L1122.22 915.5 L1122.24 906.6 L1122.26 929.5 L1122.28 929.5 L1122.31 929.5 L1122.33 902.6 L1122.35 892.6 L1122.37 914.3 L1122.39 928.8 L1122.41 918.7 L1122.44 929.5 L1122.46 929.5 L1122.48 925.3 L1122.50 907.1 L1122.52 912.7 L1122.54 896.8 L1122.56 912.4 L1122.59 929.5 L1122.61 909.3 L1122.63 903.7 L1122.65 918.3 L1122.67 929.5 L1122.69 923.3 L1122.72 899.8 L1122.74 913.8 L1122.76 905.7 L1122.78 929.5 L1122.80 913.3 L1122.82 914.3 L1122.84 929.5 L1122.87 908.4 L1122.89 914.4 L1122.91 929.5 L1122.93 908.8 L1122.95 918.2 L1122.97 923.3 L1123.00 909.9 L1123.02 922.3 L1123.04 913.3 L1123.06 929.5 L1123.08 918.9 L1123.10 927.7 L1123.12 919.6 L1123.15 925.9 L1123.17 912.0 L1123.19 901.7 L1123.21 910.9 L1123.23 909.4 L1123.25 890.1 L1123.27 929.5 L1123.30 917.4 L1123.32 915.6 L1123.34 926.3 L1123.36 896.6 L1123.38 900.5 L1123.40 927.0 L1123.42 894.2 L1123.45 929.5 L1123.47 916.7 L1123.49 929.5 L1123.51 929.5 L1123.53 912.6 L1123.55 910.0 L1123.57 913.6 L1123.60 929.5 L1123.62 914.7 L1123.64 927.1 L1123.66 929.5 L1123.68 928.9 L1123.70 916.8 L1123.72 928.5 L1123.75 916.0 L1123.77 919.7 L1123.79 913.0 L1123.81 929.5 L1123.83 929.5 L1123.85 919.1 L1123.87 918.7 L1123.90 899.0 L1123.92 919.0 L1123.94 929.5 L1123.96 905.8 L1123.98 929.5 L1124.00 906.3 L1124.02 926.6 L1124.05 907.4 L1124.07 920.3 L1124.09 929.5 L1124.11 892.9 L1124.13 929.5 L1124.15 917.1 L1124.17 905.8 L1124.19 908.3 L1124.22 918.4 L1124.24 928.2 L1124.26 902.8 L1124.28 896.5 L1124.30 905.2 L1124.32 922.1 L1124.34 912.1 L1124.37 929.5 L1124.39 927.2 L1124.41 910.6 L1124.43 919.9 L1124.45 901.1 L1124.47 920.8 L1124.49 922.7 L1124.51 905.3 L1124.54 923.7 L1124.56 900.7 L1124.58 929.5 L1124.60 917.9 L1124.62 929.5 L1124.64 923.8 L1124.66 904.3 L1124.68 927.4 L1124.71 921.0 L1124.73 910.9 L1124.75 925.1 L1124.77 929.3 L1124.79 924.3 L1124.81 904.4 L1124.83 929.5 L1124.85 929.5 L1124.88 913.1 L1124.90 929.5 L1124.92 929.5 L1124.94 909.5 L1124.96 903.1 L1124.98 905.4 L1125.00 915.3 L1125.02 900.8 L1125.05 905.1 L1125.07 927.3 L1125.09 890.4 L1125.11 920.7 L1125.13 912.0 L1125.15 925.9 L1125.17 906.0 L1125.19 914.8 L1125.22 904.0 L1125.24 889.7 L1125.26 929.5 L1125.28 910.3 L1125.30 907.4 L1125.32 929.5 L1125.34 910.4 L1125.36 917.4 L1125.39 900.5 L1125.41 912.0 L1125.43 929.5 L1125.45 929.5 L1125.47 929.5 L1125.49 929.5 L1125.51 904.7 L1125.53 894.6 L1125.55 899.9 L1125.58 922.4 L1125.60 917.5 L1125.62 910.2 L1125.64 925.8 L1125.66 904.2 L1125.68 920.3 L1125.70 912.1 L1125.72 900.3 L1125.75 929.5 L1125.77 902.5 L1125.79 929.5 L1125.81 928.9 L1125.83 912.8 L1125.85 913.5 L1125.87 903.4 L1125.89 900.3 L1125.91 924.8 L1125.94 910.2 L1125.96 918.1 L1125.98 910.1 L1126.00 906.0 L1126.02 901.4 L1126.04 928.9 L1126.06 912.6 L1126.08 900.9 L1126.10 929.5 L1126.13 900.9 L1126.15 904.4 L1126.17 901.1 L1126.19 917.9 L1126.21 929.5 L1126.23 891.9 L1126.25 929.5 L1126.27 925.0 L1126.29 929.5 L1126.32 912.1 L1126.34 912.7 L1126.36 897.4 L1126.38 905.7 L1126.40 929.5 L1126.42 906.6 L1126.44 929.5 L1126.46 929.5 L1126.48 929.5 L1126.50 900.1 L1126.53 912.1 L1126.55 929.5 L1126.57 907.7 L1126.59 905.0 L1126.61 890.3 L1126.63 916.7 L1126.65 917.4 L1126.67 903.6 L1126.69 905.6 L1126.71 921.3 L1126.74 901.8 L1126.76 929.5 L1126.78 929.5 L1126.80 912.0 L1126.82 899.7 L1126.84 918.4 L1126.86 907.1 L1126.88 898.2 L1126.90 925.5 L1126.92 917.9 L1126.95 906.2 L1126.97 905.2 L1126.99 926.4 L1127.01 929.5 L1127.03 909.4 L1127.05 919.1 L1127.07 904.0 L1127.09 913.9 L1127.11 918.9 L1127.13 907.6 L1127.16 920.0 L1127.18 917.1 L1127.20 893.5 L1127.22 899.1 L1127.24 911.9 L1127.26 900.7 L1127.28 917.4 L1127.30 919.5 L1127.32 921.0 L1127.34 929.5 L1127.37 920.2 L1127.39 929.5 L1127.41 898.9 L1127.43 929.5 L1127.45 929.5 L1127.47 919.4 L1127.49 929.5 L1127.51 917.6 L1127.53 912.8 L1127.55 901.4 L1127.57 914.6 L1127.60 925.9 L1127.62 929.5 L1127.64 929.5 L1127.66 916.2 L1127.68 929.5 L1127.70 910.3 L1127.72 890.1 L1127.74 912.5 L1127.76 917.2 L1127.78 929.5 L1127.80 904.7 L1127.83 891.3 L1127.85 926.5 L1127.87 902.9 L1127.89 929.5 L1127.91 918.4 L1127.93 900.2 L1127.95 916.4 L1127.97 929.5 L1127.99 904.3 L1128.01 929.5 L1128.03 894.9 L1128.05 900.9 L1128.08 919.7 L1128.10 923.8 L1128.12 920.1 L1128.14 929.5 L1128.16 903.4 L1128.18 893.9 L1128.20 917.1 L1128.22 909.6 L1128.24 911.4 L1128.26 911.3 L1128.28 929.5 L1128.30 907.0 L1128.33 924.7 L1128.35 918.5 L1128.37 906.9 L1128.39 929.5 L1128.41 905.8 L1128.43 907.6 L1128.45 903.1 L1128.47 925.3 L1128.49 924.8 L1128.51 910.2 L1128.53 899.3 L1128.55 919.8 L1128.58 909.1 L1128.60 917.8 L1128.62 922.8 L1128.64 883.0 L1128.66 894.0 L1128.68 929.5 L1128.70 929.5 L1128.72 897.4 L1128.74 904.5 L1128.76 912.7 L1128.78 929.5 L1128.80 908.0 L1128.82 929.5 L1128.85 897.7 L1128.87 929.5 L1128.89 895.1 L1128.91 920.2 L1128.93 929.5 L1128.95 926.6 L1128.97 929.5 L1128.99 909.7 L1129.01 929.5 L1129.03 929.5 L1129.05 906.7 L1129.07 929.5 L1129.09 929.5 L1129.11 904.1 L1129.14 911.3 L1129.16 929.5 L1129.18 918.9 L1129.20 929.5 L1129.22 913.0 L1129.24 913.6 L1129.26 902.0 L1129.28 906.7 L1129.30 929.5 L1129.32 906.2 L1129.34 929.5 L1129.36 929.5 L1129.38 918.8 L1129.40 907.9 L1129.43 883.3 L1129.45 899.5 L1129.47 929.5 L1129.49 929.5 L1129.51 929.5 L1129.53 907.0 L1129.55 929.5 L1129.57 913.4 L1129.59 910.5 L1129.61 929.5 L1129.63 929.5 L1129.65 924.2 L1129.67 907.3 L1129.69 898.9 L1129.71 902.8 L1129.73 906.3 L1129.76 903.3 L1129.78 918.9 L1129.80 908.4 L1129.82 904.3 L1129.84 929.5 L1129.86 910.6 L1129.88 885.2 L1129.90 888.2 L1129.92 918.1 L1129.94 892.3 L1129.96 918.4 L1129.98 891.8 L1130.00 914.6 L1130.02 921.2 L1130.04 917.6 L1130.06 904.4 L1130.09 929.5 L1130.11 929.5 L1130.13 929.5 L1130.15 929.5 L1130.17 929.5 L1130.19 910.6 L1130.21 917.8 L1130.23 912.4 L1130.25 929.5 L1130.27 902.2 L1130.29 904.9 L1130.31 913.9 L1130.33 917.9 L1130.35 929.5 L1130.37 909.4 L1130.39 885.8 L1130.41 911.5 L1130.44 929.5 L1130.46 898.3 L1130.48 916.8 L1130.50 920.4 L1130.52 929.5 L1130.54 909.1 L1130.56 920.8 L1130.58 929.5 L1130.60 929.5 L1130.62 918.8 L1130.64 909.5 L1130.66 922.9 L1130.68 927.5 L1130.70 924.5 L1130.72 924.3 L1130.74 911.4 L1130.76 926.6 L1130.78 910.1 L1130.80 905.3 L1130.83 898.6 L1130.85 918.3 L1130.87 902.5 L1130.89 907.3 L1130.91 908.0 L1130.93 910.9 L1130.95 912.7 L1130.97 929.5 L1130.99 917.2 L1131.01 918.2 L1131.03 912.1 L1131.05 918.1 L1131.07 929.5 L1131.09 917.1 L1131.11 916.6 L1131.13 910.1 L1131.15 903.2 L1131.17 904.5 L1131.19 898.0 L1131.21 907.5 L1131.23 893.9 L1131.26 912.7 L1131.28 919.3 L1131.30 899.6 L1131.32 929.3 L1131.34 914.2 L1131.36 921.7 L1131.38 913.3 L1131.40 929.5 L1131.42 924.6 L1131.44 900.0 L1131.46 918.3 L1131.48 906.7 L1131.50 928.7 L1131.52 911.0 L1131.54 905.0 L1131.56 893.2 L1131.58 929.5 L1131.60 899.9 L1131.62 906.2 L1131.64 929.5 L1131.66 895.1 L1131.68 912.6 L1131.70 913.5 L1131.72 924.7 L1131.75 929.5 L1131.77 929.5 L1131.79 909.0 L1131.81 897.8 L1131.83 904.7 L1131.85 886.7 L1131.87 907.0 L1131.89 921.7 L1131.91 929.5 L1131.93 898.8 L1131.95 907.0 L1131.97 929.5 L1131.99 920.1 L1132.01 912.2 L1132.03 897.0 L1132.05 895.6 L1132.07 904.8 L1132.09 921.5 L1132.11 895.8 L1132.13 916.4 L1132.15 929.5 L1132.17 884.9 L1132.19 907.8 L1132.21 912.8 L1132.23 921.2 L1132.25 928.1 L1132.27 924.7 L1132.30 913.6 L1132.32 909.8 L1132.34 922.0 L1132.36 914.7 L1132.38 929.5 L1132.40 917.6 L1132.42 920.1 L1132.44 924.1 L1132.46 915.6 L1132.48 916.0 L1132.50 924.0 L1132.52 920.8 L1132.54 929.5 L1132.56 908.6 L1132.58 916.2 L1132.60 929.5 L1132.62 929.5 L1132.64 918.7 L1132.66 908.6 L1132.68 903.2 L1132.70 913.0 L1132.72 913.4 L1132.74 913.7 L1132.76 906.6 L1132.78 915.6 L1132.80 919.6 L1132.82 899.2 L1132.84 923.8 L1132.86 926.7 L1132.88 904.0 L1132.90 906.4 L1132.92 894.0 L1132.94 915.3 L1132.96 924.7 L1132.98 912.9 L1133.00 920.4 L1133.03 921.1 L1133.05 894.7 L1133.07 895.6 L1133.09 916.8 L1133.11 929.5 L1133.13 926.5 L1133.15 914.2 L1133.17 906.8 L1133.19 900.9 L1133.21 923.2 L1133.23 929.5 L1133.25 912.1 L1133.27 898.1 L1133.29 907.5 L1133.31 926.5 L1133.33 929.5 L1133.35 912.4 L1133.37 929.5 L1133.39 912.0 L1133.41 892.0 L1133.43 904.5 L1133.45 929.5 L1133.47 926.4 L1133.49 898.2" fill="none" stroke="#ffff00" stroke-width="1.3" stroke-linejoin="miter"/>
</svg>
<!-- blue labels -->
<svg class="a" style="left:0;top:0" width="1136" height="935">
<g fill="#1e90ff" font-family="Liberation Mono" font-weight="bold" font-size="10.6px">
<rect x="507.5" y="592.5" width="75.0" height="11" fill="#0000b4" stroke="#1e90ff" stroke-width="1"/>
<text x="509.4" y="600.9" textLength="69.38" lengthAdjust="spacingAndGlyphs">phase off</text>
<rect x="590.5" y="592.5" width="115.0" height="11" fill="#0000b4" stroke="#1e90ff" stroke-width="1"/>
<text x="592.4" y="600.9" textLength="108.48" lengthAdjust="spacingAndGlyphs">integrate: 0ms</text>
<rect x="713.5" y="592.5" width="130.0" height="11" fill="#0000b4" stroke="#1e90ff" stroke-width="1"/>
<text x="715.4" y="600.9" textLength="124.12" lengthAdjust="spacingAndGlyphs">slope: 0.0dB/oct</text>
<rect x="853.0" y="592.5" width="122.0" height="11" fill="#0000b4" stroke="#1e90ff" stroke-width="1"/>
<text x="854.9" y="600.9" textLength="116.30" lengthAdjust="spacingAndGlyphs">floor: -118.6dB</text>
<rect x="983.5" y="592.5" width="58.0" height="11" fill="#0000b4" stroke="#1e90ff" stroke-width="1"/>
<text x="985.4" y="600.9" textLength="53.74" lengthAdjust="spacingAndGlyphs">hamming</text>
<rect x="1050.0" y="592.5" width="82.5" height="11" fill="#0000b4" stroke="#1e90ff" stroke-width="1"/>
<text x="1051.9" y="600.9" textLength="77.20" lengthAdjust="spacingAndGlyphs">FFT: 16384</text>
</g>
</svg>
</body></html>
